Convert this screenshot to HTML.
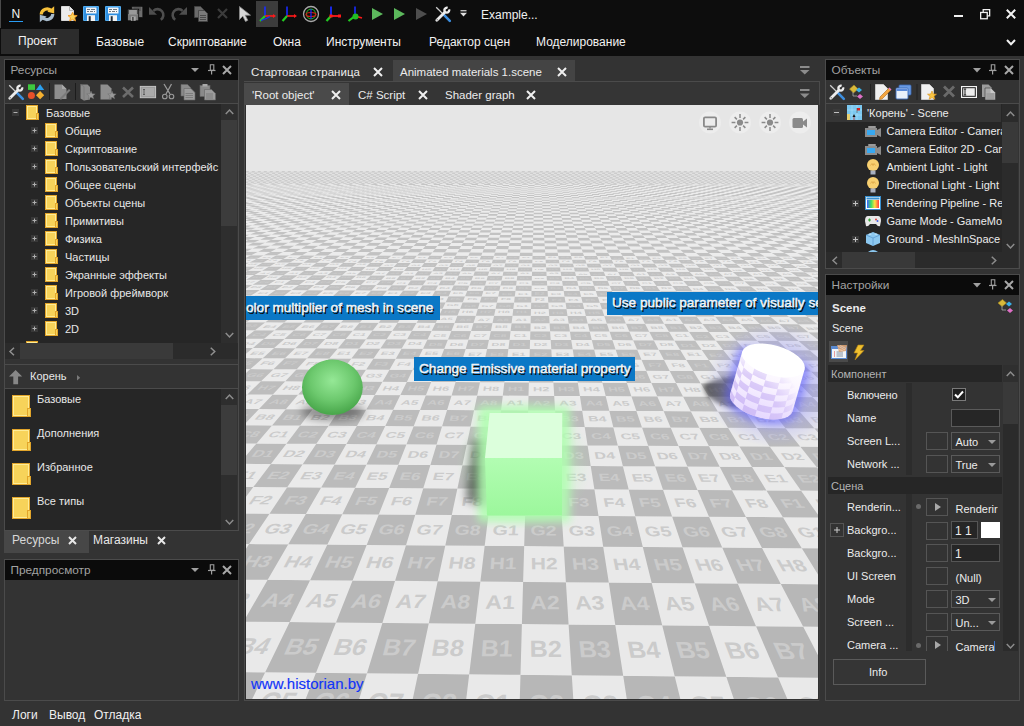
<!DOCTYPE html><html><head><meta charset="utf-8"><style>
*{margin:0;padding:0;box-sizing:border-box}
html,body{width:1024px;height:726px;overflow:hidden;background:#333;font-family:"Liberation Sans",sans-serif;color:#e6e6e6}
.a{position:absolute}
.t{position:absolute;white-space:nowrap;line-height:1}
svg{position:absolute;overflow:visible}
</style></head><body><div class="a" style="left:0px;top:0px;width:1024px;height:56px;background:#0d0d0d;"></div>
<div class="a" style="left:0px;top:0px;width:1px;height:28px;background:#4a4a4a;"></div>
<div class="t" style="left:11.5px;top:7.5px;font-size:12px;color:#f4f4f4;height:12px">N</div>
<div class="a" style="left:9px;top:21px;width:14px;height:1px;background:#2a9df4"></div>
<svg style="left:38px;top:5px" width="18" height="18" viewBox="0 0 18 18"><path d="M3.2 9.5A5.8 5.8 0 0 1 13.6 6.2" stroke="#f6c03a" stroke-width="3.2" fill="none"/><path d="M16.2 1.2L16.2 8.6L9.4 6.8Z" fill="#f6c03a"/><path d="M14.8 9A5.8 5.8 0 0 1 4.4 12.3" stroke="#a9bccc" stroke-width="3.2" fill="none"/><path d="M1.8 17.2L1.8 9.8L8.6 11.6Z" fill="#a9bccc"/></svg>
<svg style="left:61px;top:6px" width="17" height="16" viewBox="0 0 17 16"><path d="M0.5 0.5H8.5L12.5 4.5V14.5H0.5Z" fill="#ececec" stroke="#d8d8d8"/><path d="M8.5 0.5V4.5H12.5" fill="none" stroke="#a8a8a8" stroke-width="0.8"/><path d="M11.6 6.3L12.9 9.3L16.2 9.6L13.7 11.7L14.5 15L11.6 13.3L8.7 15L9.5 11.7L7 9.6L10.3 9.3Z" fill="#fbd35a" stroke="#f09a20" stroke-width="0.9"/></svg>
<svg style="left:83px;top:6px" width="16" height="15" viewBox="0 0 16 15"><rect x="0" y="0" width="16" height="15" rx="1" fill="#52adf0"/><rect x="1" y="1" width="14" height="13" fill="#2f8fe0"/><rect x="3" y="1.5" width="10.5" height="6" rx="0.5" fill="#f4f6f8"/><path d="M4 3.5H7M8 3.5H12M4 5.5H6M7 5.5H10M11 5.5H12" stroke="#606a74" stroke-width="0.9"/><rect x="4" y="9.2" width="8" height="5.8" fill="#f4f4f4"/><rect x="5.7" y="10.2" width="2" height="4.8" fill="#1e2a36"/></svg>
<svg style="left:105px;top:6px" width="16" height="15" viewBox="0 0 16 15"><rect x="0" y="0" width="16" height="15" rx="1" fill="#52adf0"/><rect x="1" y="1" width="14" height="13" fill="#2f8fe0"/><rect x="3" y="1.5" width="10.5" height="6" rx="0.5" fill="#f4f6f8"/><path d="M4 3.5H7M8 3.5H12M4 5.5H6M7 5.5H10M11 5.5H12" stroke="#606a74" stroke-width="0.9"/><rect x="4" y="9.2" width="8" height="5.8" fill="#f4f4f4"/><rect x="5.7" y="10.2" width="2" height="4.8" fill="#1e2a36"/></svg>
<svg style="left:126px;top:6px" width="18" height="16" viewBox="0 0 18 16"><rect x="5.8" y="0.4" width="11" height="11" fill="#6e6e6e" stroke="#0c0c0c" stroke-width="0.6"/><rect x="7.5" y="1" width="7.5" height="4" fill="#5a5a5a"/><rect x="1.4" y="3.2" width="11.3" height="11.6" fill="#7a7a7a" stroke="#0c0c0c" stroke-width="0.8"/><rect x="3" y="4" width="8" height="4.5" fill="#9a9a9a"/><path d="M2.6 4V8M11.4 4V8" stroke="#333" stroke-width="0.8"/><rect x="4.9" y="10.4" width="4.8" height="4.4" fill="#a8a8a8"/><rect x="6.2" y="11" width="1.4" height="3.8" fill="#3a3a3a"/></svg>
<svg style="left:148px;top:5px" width="16" height="18" viewBox="0 0 16 18"><path d="M5.4 5.9A5.8 5.8 0 1 1 12.8 14.75" stroke="#4e4e4e" stroke-width="2.6" fill="none"/><path d="M1 2V9.8H9Z" fill="#4e4e4e"/></svg>
<svg style="left:172px;top:5px" width="16" height="18" viewBox="0 0 16 18"><path d="M10.6 5.9A5.8 5.8 0 1 0 3.2 14.75" stroke="#4e4e4e" stroke-width="2.6" fill="none"/><path d="M15 2V9.8H7Z" fill="#4e4e4e"/></svg>
<svg style="left:194px;top:6px" width="15" height="16" viewBox="0 0 15 16"><path d="M0.5 0.5H6.5L9.5 3.5V11.5H0.5Z" fill="#6a6a6a" stroke="#444" stroke-width="0.8"/><path d="M4.5 4.5H10.5L13.5 7.5V15.5H4.5Z" fill="#7a7a7a" stroke="#444" stroke-width="0.8"/><path d="M6 9.5H12M6 11.5H12M6 13.5H12" stroke="#4a4a4a" stroke-width="1"/></svg>
<svg style="left:217px;top:8px" width="11" height="11"><path d="M1 1L10 10M10 1L1 10" stroke="#3c3c3c" stroke-width="2.2"/></svg>
<svg style="left:239px;top:6px" width="13" height="16" viewBox="0 0 13 16"><path d="M0.5 0.5V13.5L3.8 10.2L6.5 15.5L8.8 14.3L6.2 9.2H11.5Z" fill="#d8d8d8" stroke="#8a8a8a" stroke-width="0.8"/></svg>
<div class="a" style="left:256px;top:1px;width:22px;height:26px;background:#3c3c3c"></div>
<svg style="left:258px;top:5px" width="20" height="18" viewBox="0 0 20 18"><path d="M7 11V1.5" stroke="#1a2cff" stroke-width="1.6"/><path d="M7 11H15" stroke="#ff1a1a" stroke-width="1.6"/><path d="M15 9L18 11L15 13Z" fill="#ff1a1a"/><path d="M7 11L2 16" stroke="#22cc22" stroke-width="2.2"/><path d="M3 15.5Q8 14 12 11.5" stroke="#1a2cff" stroke-width="1.2" fill="none"/></svg>
<svg style="left:281px;top:5px" width="17" height="18" viewBox="0 0 17 18"><path d="M6 11V1.5" stroke="#1a2cff" stroke-width="1.6"/><path d="M6 11H13" stroke="#ff1a1a" stroke-width="1.6"/><path d="M13 9L16 11L13 13Z" fill="#ff1a1a"/><path d="M6 11L1.5 16" stroke="#22cc22" stroke-width="2.2"/></svg>
<svg style="left:302px;top:5px" width="18" height="18" viewBox="0 0 18 18"><circle cx="9" cy="9" r="7.5" stroke="#a8a8a8" stroke-width="1.3" fill="none"/><ellipse cx="9" cy="9" rx="4.5" ry="4.8" stroke="#22aa22" stroke-width="1.2" fill="none"/><ellipse cx="9" cy="9.5" rx="5" ry="2" stroke="#dd1a1a" stroke-width="1.1" fill="none"/><path d="M9 4V14" stroke="#1a2cff" stroke-width="1.2"/></svg>
<svg style="left:325px;top:5px" width="17" height="18" viewBox="0 0 17 18"><path d="M6 11V1.5" stroke="#1a2cff" stroke-width="1.8"/><path d="M6 11H14" stroke="#ff1a1a" stroke-width="1.8"/><rect x="13" y="9.5" width="3" height="3" fill="#ff1a1a"/><path d="M6 11L1.5 16" stroke="#22cc22" stroke-width="2.2"/><rect x="4.5" y="9.5" width="3" height="3" fill="#ff1a1a"/></svg>
<svg style="left:347px;top:5px" width="17" height="18" viewBox="0 0 17 18"><path d="M8 11V1.5" stroke="#1a2cff" stroke-width="1.6"/><path d="M8 11L15 13" stroke="#ff1a1a" stroke-width="1.6"/><path d="M8 11L1.5 16" stroke="#22cc22" stroke-width="2.2"/><circle cx="8.5" cy="11.5" r="3" fill="#22bb22"/></svg>
<svg style="left:372px;top:8px" width="11" height="12"><path d="M0 0L11 6L0 12Z" fill="#5cb85c"/></svg>
<svg style="left:394px;top:8px" width="11" height="12"><path d="M0 0L11 6L0 12Z" fill="#5cb85c"/></svg>
<svg style="left:416px;top:8px" width="11" height="12"><path d="M0 0L11 6L0 12Z" fill="#4e4e4e"/></svg>
<svg style="left:435px;top:6px" width="16" height="16" viewBox="0 0 16 16"><path d="M1.2 1.2L8.6 8.6" stroke="#cfcfcf" stroke-width="1.3"/><path d="M8.2 8.2L14.8 14.8" stroke="#3d8fe0" stroke-width="2.6" stroke-linecap="round"/><path d="M1.8 14.2L9.8 6.2" stroke="#ececec" stroke-width="2.8" stroke-linecap="round"/><path d="M14.06 3.38A2.4 2.4 0 1 1 12.62 1.94" stroke="#ececec" stroke-width="2.4" fill="none"/><circle cx="2.2" cy="13.8" r="0.7" fill="#777"/></svg>
<svg style="left:460px;top:10px" width="7" height="7"><path d="M0.5 0.75H6.5" stroke="#e0e0e0" stroke-width="1.2"/><path d="M0 2.8H7L3.5 6.6Z" fill="#e0e0e0"/></svg>

<div class="a" style="left:1px;top:29px;width:78px;height:25px;background:#2c2c2c;"></div>
<div class="t" style="left:18px;top:34.50px;font-size:12px;height:12px;color:#f2f2f2;">Проект</div>
<div class="t" style="left:96px;top:36.00px;font-size:12px;height:12px;color:#f2f2f2;">Базовые</div>
<div class="t" style="left:168px;top:36.00px;font-size:12px;height:12px;color:#f2f2f2;">Скриптование</div>
<div class="t" style="left:273px;top:36.00px;font-size:12px;height:12px;color:#f2f2f2;">Окна</div>
<div class="t" style="left:326px;top:36.00px;font-size:12px;height:12px;color:#f2f2f2;">Инструменты</div>
<div class="t" style="left:429px;top:36.00px;font-size:12px;height:12px;color:#f2f2f2;">Редактор сцен</div>
<div class="t" style="left:536px;top:36.00px;font-size:12px;height:12px;color:#f2f2f2;">Моделирование</div>
<div class="t" style="left:481px;top:8.50px;font-size:12px;height:12px;color:#f0f0f0;">Example...</div>
<div class="a" style="left:954px;top:14.6px;width:9.2px;height:2.6px;background:#f0f0f0;"></div>
<svg style="left:979px;top:8px" width="12" height="12" viewBox="0 0 12 12"><rect x="1.65" y="4.45" width="6.6" height="6.3" stroke="#f0f0f0" fill="none" stroke-width="1.3"/><path d="M4.2 4.2V1.55H10.65V7.9H8.4" stroke="#f0f0f0" fill="none" stroke-width="1.3"/></svg>
<svg style="left:1006px;top:9px" width="10" height="10"><path d="M0.8 0.8L9.2 9.2M9.2 0.8L0.8 9.2" stroke="#f2f2f2" stroke-width="2"/></svg>
<svg style="left:1006px;top:38.5px" width="10" height="7"><path d="M1 1L5 5.2L9 1" stroke="#f0f0f0" stroke-width="2" fill="none"/></svg>
<div class="a" style="left:4px;top:59px;width:235px;height:472px;background:#4b4b4b;"></div>
<div class="a" style="left:5px;top:60px;width:233px;height:470px;background:#333333;"></div>
<div class="a" style="left:5px;top:60px;width:233px;height:20px;background:#0b0b0b;"></div>
<div class="t" style="left:10.5px;top:65.10px;font-size:11.8px;height:11.8px;color:#a3a3a3;">Ресурсы</div>
<svg style="left:191px;top:67px" width="8" height="6"><path d="M0 1H8L4 5Z" fill="#a0a0a0"/></svg>
<svg style="left:208px;top:64px" width="8" height="11"><path d="M2.3 0.8H5.8V6.3H2.3Z" stroke="#a0a0a0" stroke-width="1.1" fill="none"/><path d="M0 6.5H7.5" stroke="#a0a0a0" stroke-width="1.2"/><path d="M3.6 6.5V10.5" stroke="#a0a0a0" stroke-width="1.2"/></svg>
<svg style="left:222px;top:65px" width="10" height="10"><path d="M1 1L9 9M9 1L1 9" stroke="#a8a8a8" stroke-width="2"/></svg>
<svg style="left:5px;top:80px" width="233" height="23" viewBox="5 80 233 23">
<rect x="28" y="84.3" width="7" height="5.6" fill="#3ec83e"/><path d="M36 90H44.2L40.1 84.3Z" fill="#2aa0f0"/><circle cx="31.4" cy="95.6" r="3.5" fill="#e8502a"/><path d="M40.1 91L44.2 95.2L40.1 99.3L36 95.2Z" fill="#f5b030"/>
<rect x="49" y="83" width="1" height="17" fill="#1c1c1c"/>
<path d="M54.5 84.5H62L66.5 89V99H54.5Z" fill="#8e8e8e"/><path d="M62 84.5V89H66.5" fill="#a8a8a8"/><path d="M60 98L69 89L70.5 90.5L61.5 99.5H60Z" fill="#7a7a7a"/>
<rect x="75" y="83" width="1" height="17" fill="#1c1c1c"/>
<path d="M80.5 84.5H87.5L90 87V99.5L84 100.5L80.5 98.5Z" fill="#8a8a8a"/><path d="M80.5 84.5L84 86.5V100.5" stroke="#777" stroke-width="0.8" fill="none"/><path d="M91 91L92.2 93.8L95.2 94L92.9 95.9L93.7 98.8L91 97.2L88.3 98.8L89.1 95.9L86.8 94L89.8 93.8Z" fill="#9a9a9a" stroke="#6a6a6a" stroke-width="0.5"/>
<path d="M100.5 84.5H107.5L111.5 88.5V99.5H100.5Z" fill="#8e8e8e"/><path d="M112 91L113.2 93.8L116.2 94L113.9 95.9L114.7 98.8L112 97.2L109.3 98.8L110.1 95.9L107.8 94L110.8 93.8Z" fill="#9a9a9a" stroke="#6a6a6a" stroke-width="0.5"/>
<path d="M123 87.5L133 97M133 87.5L123 97" stroke="#6c6c6c" stroke-width="2.6"/>
<rect x="140.3" y="86.4" width="15.3" height="11.3" fill="#9c9c9c" stroke="#c4c4c4" stroke-width="1"/><rect x="142" y="88" width="12" height="8" fill="#aaa"/><path d="M143 89.5H145M144 89.5V94.5M143 94.5H145" stroke="#444" stroke-width="0.7"/>
<path d="M164 84L170 94M171.5 84L166 94" stroke="#9a9a9a" stroke-width="1.3"/><circle cx="164.8" cy="96.5" r="2.3" fill="none" stroke="#9a9a9a" stroke-width="1.1"/><circle cx="171.5" cy="96.5" r="2.3" fill="none" stroke="#9a9a9a" stroke-width="1.1"/>
<path d="M181 84.5H187.5L190.5 87.5V96H181Z" fill="#8a8a8a" stroke="#666" stroke-width="0.6"/><path d="M184 88.5H191L195 92.5V100H184Z" fill="#9c9c9c" stroke="#666" stroke-width="0.6"/><path d="M185.5 93.5H193M185.5 95.5H193M185.5 97.5H193" stroke="#707070" stroke-width="0.7"/>
<rect x="200" y="85.5" width="10" height="11" fill="#8a8a8a" stroke="#666" stroke-width="0.6"/><rect x="202.5" y="84" width="5" height="2.5" fill="#aaa"/><path d="M204.5 89.5H211.5L215.5 93.5V100H204.5Z" fill="#9c9c9c" stroke="#666" stroke-width="0.6"/><path d="M206 94H213M206 96H213M206 98H213" stroke="#707070" stroke-width="0.7"/>
</svg>
<svg style="left:8px;top:84px" width="16" height="16" viewBox="0 0 16 16"><path d="M1.2 1.2L8.6 8.6" stroke="#cfcfcf" stroke-width="1.3"/><path d="M8.2 8.2L14.8 14.8" stroke="#3d8fe0" stroke-width="2.6" stroke-linecap="round"/><path d="M1.8 14.2L9.8 6.2" stroke="#ececec" stroke-width="2.8" stroke-linecap="round"/><path d="M14.06 3.38A2.4 2.4 0 1 1 12.62 1.94" stroke="#ececec" stroke-width="2.4" fill="none"/><circle cx="2.2" cy="13.8" r="0.7" fill="#777"/></svg>

<div class="a" style="left:5px;top:103px;width:233px;height:1px;background:#4b4b4b;"></div>
<div class="a" style="left:5px;top:104px;width:216px;height:239px;background:#262626;"></div>
<div class="a" style="left:221px;top:104px;width:16px;height:239px;background:#2e2e2e;"></div>
<div class="a" style="left:221px;top:120px;width:16px;height:106px;background:#3c3c3c;"></div>
<svg style="left:225px;top:109px" width="9" height="6"><path d="M0.75 5L4.5 1L8.25 5" stroke="#8c8c8c" stroke-width="1.5" fill="none"/></svg>
<svg style="left:225px;top:332px" width="9" height="6"><path d="M0.75 1L4.5 5L8.25 1" stroke="#8c8c8c" stroke-width="1.5" fill="none"/></svg>
<svg style="left:26px;top:105px" width="13.0" height="15.0" viewBox="0 0 13 15"><rect x="0.5" y="0.5" width="11" height="14" fill="#f7d35a" stroke="#e2a52a"/><rect x="1.5" y="1.5" width="9" height="12" fill="none" stroke="#fff2a8" stroke-width="0.8"/><rect x="10.5" y="8.5" width="2" height="6" fill="#f7d35a" stroke="#e2a52a"/></svg>
<svg style="left:12px;top:109px" width="7" height="7"><rect width="7" height="7" fill="#383838"/><rect x="1.5" y="3" width="4" height="1" fill="#b0b0b0"/></svg>
<div class="t" style="left:46px;top:108.00px;font-size:11px;height:11px;color:#e8e8e8;">Базовые</div>
<svg style="left:31px;top:127.0px" width="7" height="7"><rect width="7" height="7" fill="#383838"/><rect x="1.5" y="3" width="4" height="1" fill="#b0b0b0"/><rect x="3" y="1.5" width="1" height="4" fill="#b0b0b0"/></svg>
<svg style="left:45px;top:123.0px" width="13.0" height="15.0" viewBox="0 0 13 15"><rect x="0.5" y="0.5" width="11" height="14" fill="#f7d35a" stroke="#e2a52a"/><rect x="1.5" y="1.5" width="9" height="12" fill="none" stroke="#fff2a8" stroke-width="0.8"/><rect x="10.5" y="8.5" width="2" height="6" fill="#f7d35a" stroke="#e2a52a"/></svg>
<div class="t" style="left:65px;top:126.00px;font-size:11px;height:11px;color:#e8e8e8;">Общие</div>
<svg style="left:31px;top:145.0px" width="7" height="7"><rect width="7" height="7" fill="#383838"/><rect x="1.5" y="3" width="4" height="1" fill="#b0b0b0"/><rect x="3" y="1.5" width="1" height="4" fill="#b0b0b0"/></svg>
<svg style="left:45px;top:141.0px" width="13.0" height="15.0" viewBox="0 0 13 15"><rect x="0.5" y="0.5" width="11" height="14" fill="#f7d35a" stroke="#e2a52a"/><rect x="1.5" y="1.5" width="9" height="12" fill="none" stroke="#fff2a8" stroke-width="0.8"/><rect x="10.5" y="8.5" width="2" height="6" fill="#f7d35a" stroke="#e2a52a"/></svg>
<div class="t" style="left:65px;top:144.00px;font-size:11px;height:11px;color:#e8e8e8;">Скриптование</div>
<svg style="left:31px;top:163.0px" width="7" height="7"><rect width="7" height="7" fill="#383838"/><rect x="1.5" y="3" width="4" height="1" fill="#b0b0b0"/><rect x="3" y="1.5" width="1" height="4" fill="#b0b0b0"/></svg>
<svg style="left:45px;top:159.0px" width="13.0" height="15.0" viewBox="0 0 13 15"><rect x="0.5" y="0.5" width="11" height="14" fill="#f7d35a" stroke="#e2a52a"/><rect x="1.5" y="1.5" width="9" height="12" fill="none" stroke="#fff2a8" stroke-width="0.8"/><rect x="10.5" y="8.5" width="2" height="6" fill="#f7d35a" stroke="#e2a52a"/></svg>
<div class="t" style="left:65px;top:162.00px;font-size:11px;height:11px;color:#e8e8e8;">Пользовательский интерфейс</div>
<svg style="left:31px;top:181.0px" width="7" height="7"><rect width="7" height="7" fill="#383838"/><rect x="1.5" y="3" width="4" height="1" fill="#b0b0b0"/><rect x="3" y="1.5" width="1" height="4" fill="#b0b0b0"/></svg>
<svg style="left:45px;top:177.0px" width="13.0" height="15.0" viewBox="0 0 13 15"><rect x="0.5" y="0.5" width="11" height="14" fill="#f7d35a" stroke="#e2a52a"/><rect x="1.5" y="1.5" width="9" height="12" fill="none" stroke="#fff2a8" stroke-width="0.8"/><rect x="10.5" y="8.5" width="2" height="6" fill="#f7d35a" stroke="#e2a52a"/></svg>
<div class="t" style="left:65px;top:180.00px;font-size:11px;height:11px;color:#e8e8e8;">Общее сцены</div>
<svg style="left:31px;top:199.0px" width="7" height="7"><rect width="7" height="7" fill="#383838"/><rect x="1.5" y="3" width="4" height="1" fill="#b0b0b0"/><rect x="3" y="1.5" width="1" height="4" fill="#b0b0b0"/></svg>
<svg style="left:45px;top:195.0px" width="13.0" height="15.0" viewBox="0 0 13 15"><rect x="0.5" y="0.5" width="11" height="14" fill="#f7d35a" stroke="#e2a52a"/><rect x="1.5" y="1.5" width="9" height="12" fill="none" stroke="#fff2a8" stroke-width="0.8"/><rect x="10.5" y="8.5" width="2" height="6" fill="#f7d35a" stroke="#e2a52a"/></svg>
<div class="t" style="left:65px;top:198.00px;font-size:11px;height:11px;color:#e8e8e8;">Объекты сцены</div>
<svg style="left:31px;top:217.0px" width="7" height="7"><rect width="7" height="7" fill="#383838"/><rect x="1.5" y="3" width="4" height="1" fill="#b0b0b0"/><rect x="3" y="1.5" width="1" height="4" fill="#b0b0b0"/></svg>
<svg style="left:45px;top:213.0px" width="13.0" height="15.0" viewBox="0 0 13 15"><rect x="0.5" y="0.5" width="11" height="14" fill="#f7d35a" stroke="#e2a52a"/><rect x="1.5" y="1.5" width="9" height="12" fill="none" stroke="#fff2a8" stroke-width="0.8"/><rect x="10.5" y="8.5" width="2" height="6" fill="#f7d35a" stroke="#e2a52a"/></svg>
<div class="t" style="left:65px;top:216.00px;font-size:11px;height:11px;color:#e8e8e8;">Примитивы</div>
<svg style="left:31px;top:235.0px" width="7" height="7"><rect width="7" height="7" fill="#383838"/><rect x="1.5" y="3" width="4" height="1" fill="#b0b0b0"/><rect x="3" y="1.5" width="1" height="4" fill="#b0b0b0"/></svg>
<svg style="left:45px;top:231.0px" width="13.0" height="15.0" viewBox="0 0 13 15"><rect x="0.5" y="0.5" width="11" height="14" fill="#f7d35a" stroke="#e2a52a"/><rect x="1.5" y="1.5" width="9" height="12" fill="none" stroke="#fff2a8" stroke-width="0.8"/><rect x="10.5" y="8.5" width="2" height="6" fill="#f7d35a" stroke="#e2a52a"/></svg>
<div class="t" style="left:65px;top:234.00px;font-size:11px;height:11px;color:#e8e8e8;">Физика</div>
<svg style="left:31px;top:253.0px" width="7" height="7"><rect width="7" height="7" fill="#383838"/><rect x="1.5" y="3" width="4" height="1" fill="#b0b0b0"/><rect x="3" y="1.5" width="1" height="4" fill="#b0b0b0"/></svg>
<svg style="left:45px;top:249.0px" width="13.0" height="15.0" viewBox="0 0 13 15"><rect x="0.5" y="0.5" width="11" height="14" fill="#f7d35a" stroke="#e2a52a"/><rect x="1.5" y="1.5" width="9" height="12" fill="none" stroke="#fff2a8" stroke-width="0.8"/><rect x="10.5" y="8.5" width="2" height="6" fill="#f7d35a" stroke="#e2a52a"/></svg>
<div class="t" style="left:65px;top:252.00px;font-size:11px;height:11px;color:#e8e8e8;">Частицы</div>
<svg style="left:31px;top:271.0px" width="7" height="7"><rect width="7" height="7" fill="#383838"/><rect x="1.5" y="3" width="4" height="1" fill="#b0b0b0"/><rect x="3" y="1.5" width="1" height="4" fill="#b0b0b0"/></svg>
<svg style="left:45px;top:267.0px" width="13.0" height="15.0" viewBox="0 0 13 15"><rect x="0.5" y="0.5" width="11" height="14" fill="#f7d35a" stroke="#e2a52a"/><rect x="1.5" y="1.5" width="9" height="12" fill="none" stroke="#fff2a8" stroke-width="0.8"/><rect x="10.5" y="8.5" width="2" height="6" fill="#f7d35a" stroke="#e2a52a"/></svg>
<div class="t" style="left:65px;top:270.00px;font-size:11px;height:11px;color:#e8e8e8;">Экранные эффекты</div>
<svg style="left:31px;top:289.0px" width="7" height="7"><rect width="7" height="7" fill="#383838"/><rect x="1.5" y="3" width="4" height="1" fill="#b0b0b0"/><rect x="3" y="1.5" width="1" height="4" fill="#b0b0b0"/></svg>
<svg style="left:45px;top:285.0px" width="13.0" height="15.0" viewBox="0 0 13 15"><rect x="0.5" y="0.5" width="11" height="14" fill="#f7d35a" stroke="#e2a52a"/><rect x="1.5" y="1.5" width="9" height="12" fill="none" stroke="#fff2a8" stroke-width="0.8"/><rect x="10.5" y="8.5" width="2" height="6" fill="#f7d35a" stroke="#e2a52a"/></svg>
<div class="t" style="left:65px;top:288.00px;font-size:11px;height:11px;color:#e8e8e8;">Игровой фреймворк</div>
<svg style="left:31px;top:307.0px" width="7" height="7"><rect width="7" height="7" fill="#383838"/><rect x="1.5" y="3" width="4" height="1" fill="#b0b0b0"/><rect x="3" y="1.5" width="1" height="4" fill="#b0b0b0"/></svg>
<svg style="left:45px;top:303.0px" width="13.0" height="15.0" viewBox="0 0 13 15"><rect x="0.5" y="0.5" width="11" height="14" fill="#f7d35a" stroke="#e2a52a"/><rect x="1.5" y="1.5" width="9" height="12" fill="none" stroke="#fff2a8" stroke-width="0.8"/><rect x="10.5" y="8.5" width="2" height="6" fill="#f7d35a" stroke="#e2a52a"/></svg>
<div class="t" style="left:65px;top:306.00px;font-size:11px;height:11px;color:#e8e8e8;">3D</div>
<svg style="left:31px;top:325.0px" width="7" height="7"><rect width="7" height="7" fill="#383838"/><rect x="1.5" y="3" width="4" height="1" fill="#b0b0b0"/><rect x="3" y="1.5" width="1" height="4" fill="#b0b0b0"/></svg>
<svg style="left:45px;top:321.0px" width="13.0" height="15.0" viewBox="0 0 13 15"><rect x="0.5" y="0.5" width="11" height="14" fill="#f7d35a" stroke="#e2a52a"/><rect x="1.5" y="1.5" width="9" height="12" fill="none" stroke="#fff2a8" stroke-width="0.8"/><rect x="10.5" y="8.5" width="2" height="6" fill="#f7d35a" stroke="#e2a52a"/></svg>
<div class="t" style="left:65px;top:324.00px;font-size:11px;height:11px;color:#e8e8e8;">2D</div>
<svg style="left:26px;top:341px" width="13.0" height="15.0" viewBox="0 0 13 15"><rect x="0.5" y="0.5" width="11" height="14" fill="#f7d35a" stroke="#e2a52a"/><rect x="1.5" y="1.5" width="9" height="12" fill="none" stroke="#fff2a8" stroke-width="0.8"/><rect x="10.5" y="8.5" width="2" height="6" fill="#f7d35a" stroke="#e2a52a"/></svg>
<div class="a" style="left:5px;top:343px;width:233px;height:16px;background:#2b2b2b;"></div>
<div class="a" style="left:20px;top:343px;width:153px;height:16px;background:#3a3a3a;"></div>
<svg style="left:9px;top:347px" width="6" height="9"><path d="M5 0.75L1 4.5L5 8.25" stroke="#909090" stroke-width="1.5" fill="none"/></svg>
<svg style="left:210px;top:347px" width="6" height="9"><path d="M0.75 0.75L4.75 4.5L0.75 8.25" stroke="#909090" stroke-width="1.5" fill="none"/></svg>
<div class="a" style="left:5px;top:364px;width:233px;height:1px;background:#4b4b4b;"></div>
<svg style="left:8.8px;top:369.6px" width="14" height="15"><path d="M6.6 0L13.2 6.6H9.1V14.2H4.3V6.6H0Z" fill="#878787"/></svg>
<div class="t" style="left:30px;top:370.50px;font-size:11px;height:11px;color:#e8e8e8;">Корень</div>
<svg style="left:77px;top:374.8px" width="4" height="6"><path d="M0 0L3.2 2.8L0 5.6Z" fill="#7a7a7a"/></svg>
<div class="a" style="left:5px;top:388px;width:233px;height:1px;background:#4b4b4b;"></div>
<div class="a" style="left:5px;top:389px;width:216px;height:141px;background:#262626;"></div>
<div class="a" style="left:221px;top:389px;width:16px;height:141px;background:#2e2e2e;"></div>
<div class="a" style="left:221px;top:405px;width:16px;height:70px;background:#3c3c3c;"></div>
<svg style="left:225px;top:394px" width="9" height="6"><path d="M0.75 5L4.5 1L8.25 5" stroke="#8c8c8c" stroke-width="1.5" fill="none"/></svg>
<svg style="left:225px;top:519px" width="9" height="6"><path d="M0.75 1L4.5 5L8.25 1" stroke="#8c8c8c" stroke-width="1.5" fill="none"/></svg>
<svg style="left:12px;top:395px" width="19" height="22" viewBox="0 0 19 22"><rect x="0.5" y="0.5" width="17" height="21" fill="#f7d35a" stroke="#e2a52a"/><rect x="1.5" y="1.5" width="15" height="19" fill="none" stroke="#fff2a8" stroke-width="0.8"/><rect x="15.5" y="13.5" width="3" height="8" fill="#f7d35a" stroke="#e2a52a"/></svg>
<div class="t" style="left:37px;top:393.50px;font-size:11px;height:11px;color:#e8e8e8;">Базовые</div>
<svg style="left:12px;top:429px" width="19" height="22" viewBox="0 0 19 22"><rect x="0.5" y="0.5" width="17" height="21" fill="#f7d35a" stroke="#e2a52a"/><rect x="1.5" y="1.5" width="15" height="19" fill="none" stroke="#fff2a8" stroke-width="0.8"/><rect x="15.5" y="13.5" width="3" height="8" fill="#f7d35a" stroke="#e2a52a"/></svg>
<div class="t" style="left:37px;top:427.50px;font-size:11px;height:11px;color:#e8e8e8;">Дополнения</div>
<svg style="left:12px;top:463px" width="19" height="22" viewBox="0 0 19 22"><rect x="0.5" y="0.5" width="17" height="21" fill="#f7d35a" stroke="#e2a52a"/><rect x="1.5" y="1.5" width="15" height="19" fill="none" stroke="#fff2a8" stroke-width="0.8"/><rect x="15.5" y="13.5" width="3" height="8" fill="#f7d35a" stroke="#e2a52a"/></svg>
<div class="t" style="left:37px;top:461.50px;font-size:11px;height:11px;color:#e8e8e8;">Избранное</div>
<svg style="left:12px;top:497px" width="19" height="22" viewBox="0 0 19 22"><rect x="0.5" y="0.5" width="17" height="21" fill="#f7d35a" stroke="#e2a52a"/><rect x="1.5" y="1.5" width="15" height="19" fill="none" stroke="#fff2a8" stroke-width="0.8"/><rect x="15.5" y="13.5" width="3" height="8" fill="#f7d35a" stroke="#e2a52a"/></svg>
<div class="t" style="left:37px;top:495.50px;font-size:11px;height:11px;color:#e8e8e8;">Все типы</div>
<div class="a" style="left:4px;top:531px;width:85px;height:22px;background:#474747;"></div>
<div class="t" style="left:12px;top:534.00px;font-size:12px;height:12px;color:#d8d8d8;">Ресурсы</div>
<svg style="left:68px;top:536px" width="9" height="9"><path d="M1 1L8 8M8 1L1 8" stroke="#e8e8e8" stroke-width="2"/></svg>
<div class="t" style="left:93px;top:534.00px;font-size:12px;height:12px;color:#e8e8e8;">Магазины</div>
<svg style="left:157px;top:536px" width="9" height="9"><path d="M1 1L8 8M8 1L1 8" stroke="#e8e8e8" stroke-width="2"/></svg>
<div class="a" style="left:4px;top:559px;width:235px;height:142px;background:#4b4b4b;"></div>
<div class="a" style="left:5px;top:560px;width:233px;height:140px;background:#333333;"></div>
<div class="a" style="left:5px;top:560px;width:233px;height:20px;background:#0b0b0b;"></div>
<div class="t" style="left:10.5px;top:565.10px;font-size:11.8px;height:11.8px;color:#a3a3a3;">Предпросмотр</div>
<svg style="left:191px;top:567px" width="8" height="6"><path d="M0 1H8L4 5Z" fill="#a0a0a0"/></svg>
<svg style="left:208px;top:564px" width="8" height="11"><path d="M2.3 0.8H5.8V6.3H2.3Z" stroke="#a0a0a0" stroke-width="1.1" fill="none"/><path d="M0 6.5H7.5" stroke="#a0a0a0" stroke-width="1.2"/><path d="M3.6 6.5V10.5" stroke="#a0a0a0" stroke-width="1.2"/></svg>
<svg style="left:222px;top:565px" width="10" height="10"><path d="M1 1L9 9M9 1L1 9" stroke="#a8a8a8" stroke-width="2"/></svg>
<div class="t" style="left:12px;top:709.00px;font-size:12px;height:12px;color:#f0f0f0;">Логи</div>
<div class="t" style="left:49px;top:709.00px;font-size:12px;height:12px;color:#f0f0f0;">Вывод</div>
<div class="t" style="left:94px;top:709.00px;font-size:12px;height:12px;color:#f0f0f0;">Отладка</div>
<div class="a" style="left:393px;top:60px;width:182px;height:21px;background:#444444;"></div>
<div class="t" style="left:251px;top:66.55px;font-size:11.5px;height:11.5px;color:#ececec;">Стартовая страница</div>
<svg style="left:373px;top:67px" width="10" height="10"><path d="M1 1L9 9M9 1L1 9" stroke="#f0f0f0" stroke-width="2"/></svg>
<div class="t" style="left:400px;top:66.55px;font-size:11.5px;height:11.5px;color:#ececec;">Animated materials 1.scene</div>
<svg style="left:557px;top:67px" width="10" height="10"><path d="M1 1L9 9M9 1L1 9" stroke="#f0f0f0" stroke-width="2"/></svg>
<svg style="left:800px;top:66px" width="10" height="9"><path d="M0 1H9.5" stroke="#8c8c8c" stroke-width="2"/><path d="M0 4H9.5L4.75 8.6Z" fill="#8c8c8c"/></svg>
<div class="a" style="left:244px;top:81px;width:576px;height:1px;background:#4b4b4b;"></div>
<div class="a" style="left:819px;top:81px;width:1px;height:24px;background:#4b4b4b;"></div>
<div class="a" style="left:244px;top:82px;width:575px;height:23px;background:#353535;"></div>
<div class="a" style="left:244px;top:83px;width:105px;height:22px;background:#4a4a4a;"></div>
<div class="t" style="left:252px;top:89.65px;font-size:11.5px;height:11.5px;color:#ececec;">'Root object'</div>
<svg style="left:331px;top:90px" width="10" height="10"><path d="M1 1L9 9M9 1L1 9" stroke="#f0f0f0" stroke-width="2"/></svg>
<div class="t" style="left:358px;top:89.65px;font-size:11.5px;height:11.5px;color:#ececec;">C# Script</div>
<svg style="left:418px;top:90px" width="10" height="10"><path d="M1 1L9 9M9 1L1 9" stroke="#f0f0f0" stroke-width="2"/></svg>
<div class="t" style="left:445px;top:89.65px;font-size:11.5px;height:11.5px;color:#ececec;">Shader graph</div>
<svg style="left:526px;top:90px" width="10" height="10"><path d="M1 1L9 9M9 1L1 9" stroke="#f0f0f0" stroke-width="2"/></svg>
<svg style="left:800px;top:89px" width="10" height="9"><path d="M0 1H9.5" stroke="#8c8c8c" stroke-width="2"/><path d="M0 4.4H9.5L4.75 9Z" fill="#8c8c8c"/></svg>
<div class="a" style="left:244px;top:105px;width:2px;height:596px;background:#2d2d2d;"></div>
<div class="a" style="left:244px;top:105px;width:1px;height:596px;background:#4b4b4b;"></div>
<div class="a" style="left:244px;top:700px;width:576px;height:1px;background:#4b4b4b;"></div>
<div class="a" style="left:819px;top:105px;width:1px;height:596px;background:#3a3a3a;"></div>
<svg style="left:246px;top:105px" width="572" height="594" viewBox="0 0 572 594">
<defs><clipPath id="vc"><rect width="572" height="594"/></clipPath></defs><g clip-path="url(#vc)">
<rect width="572" height="594" fill="#e6e6e6"/>
<defs><linearGradient id="farg" x1="0" y1="0" x2="0" y2="1"><stop offset="0" stop-color="#dcdcdc"/><stop offset="1" stop-color="#d6d6d6"/></linearGradient></defs>
<polygon points="-945.2,77.7 1564.0,80.7 1119.8,56.3 -526.2,55.1" fill="url(#farg)"/>
<defs><pattern id="farp" patternUnits="userSpaceOnUse" width="6" height="3" patternTransform="skewX(-20)"><rect width="6" height="3" fill="#e4e4e4"/><rect width="3" height="1.5" fill="#c9c9c9"/><rect x="3" y="1.5" width="3" height="1.5" fill="#c9c9c9"/></pattern></defs>
<polygon points="-945.2,77.7 1564.0,80.7 1119.8,56.3 -526.2,55.1" fill="url(#farp)" opacity="0.8"/>
<polygon points="-168.1,802.4 709.9,814.4 657.4,713.7 -111.4,704.4" fill="#e9e9e9"/>
<path d="M-168.1 802.4 L-95.9 803.4 L-48.1 705.2 L-111.4 704.4ZM-23.6 804.4 L48.9 805.4 L78.9 706.7 L15.4 706.0ZM121.6 806.4 L194.5 807.4 L206.5 708.3 L142.6 707.5ZM267.6 808.4 L340.9 809.4 L334.6 709.8 L270.5 709.0ZM414.3 810.4 L487.9 811.4 L463.3 711.3 L398.9 710.6ZM561.7 812.4 L635.8 813.4 L592.5 712.9 L527.8 712.1Z" fill="#b7b7b7"/>
<polygon points="-174.5,703.7 722.3,714.5 674.2,636.0 -123.3,627.5" fill="#e9e9e9"/>
<path d="M-174.5 703.7 L-111.4 704.4 L-67.1 628.1 L-123.3 627.5ZM-48.1 705.2 L15.4 706.0 L45.7 629.3 L-10.7 628.7ZM78.9 706.7 L142.6 707.5 L159.0 630.5 L102.3 629.9ZM206.5 708.3 L270.5 709.0 L272.7 631.7 L215.8 631.1ZM334.6 709.8 L398.9 710.6 L386.8 632.9 L329.7 632.3ZM463.3 711.3 L527.8 712.1 L501.4 634.1 L444.1 633.5ZM592.5 712.9 L657.4 713.7 L616.5 635.4 L558.9 634.8Z" fill="#b7b7b7"/>
<polygon points="-123.3,627.5 732.0,636.6 687.7,573.8 -82.3,566.4" fill="#e9e9e9"/>
<path d="M-67.1 628.1 L-10.7 628.7 L19.2 567.3 L-31.6 566.8ZM45.7 629.3 L102.3 629.9 L121.0 568.3 L70.0 567.8ZM159.0 630.5 L215.8 631.1 L223.2 569.3 L172.1 568.8ZM272.7 631.7 L329.7 632.3 L325.8 570.3 L274.5 569.8ZM386.8 632.9 L444.1 633.5 L428.7 571.3 L377.2 570.8ZM501.4 634.1 L558.9 634.8 L532.0 572.3 L480.3 571.8ZM616.5 635.4 L674.2 636.0 L635.7 573.3 L583.8 572.8Z" fill="#b7b7b7"/>
<polygon points="-132.9,565.9 739.7,574.3 698.7,522.8 -94.8,515.9" fill="#e9e9e9"/>
<path d="M-82.3 566.4 L-31.6 566.8 L-2.6 516.7 L-48.7 516.3ZM19.2 567.3 L70.0 567.8 L90.0 517.5 L43.7 517.1ZM121.0 568.3 L172.1 568.8 L182.8 518.3 L136.4 517.9ZM223.2 569.3 L274.5 569.8 L275.9 519.1 L229.3 518.7ZM325.8 570.3 L377.2 570.8 L369.3 519.9 L322.6 519.5ZM428.7 571.3 L480.3 571.8 L463.1 520.8 L416.2 520.3ZM532.0 572.3 L583.8 572.8 L557.1 521.6 L510.0 521.2ZM635.7 573.3 L687.7 573.8 L651.4 522.4 L604.2 522.0Z" fill="#b7b7b7"/>
<polygon points="-140.8,515.5 698.7,522.8 664.6,480.0 -105.2,473.8" fill="#e9e9e9"/>
<path d="M-94.8 515.9 L-48.7 516.3 L-20.6 474.5 L-62.9 474.1ZM-2.6 516.7 L43.7 517.1 L64.1 475.2 L21.7 474.8ZM90.0 517.5 L136.4 517.9 L149.1 475.8 L106.6 475.5ZM182.8 518.3 L229.3 518.7 L234.4 476.5 L191.7 476.2ZM275.9 519.1 L322.6 519.5 L319.9 477.2 L277.1 476.9ZM369.3 519.9 L416.2 520.3 L405.7 477.9 L362.8 477.5ZM463.1 520.8 L510.0 521.2 L491.7 478.6 L448.7 478.2ZM557.1 521.6 L604.2 522.0 L578.0 479.3 L534.8 478.9ZM651.4 522.4 L698.7 522.8 L664.6 480.0 L621.3 479.6Z" fill="#b7b7b7"/>
<polygon points="-147.3,473.5 707.9,480.3 675.7,444.0 -114.0,438.2" fill="#e9e9e9"/>
<path d="M-105.2 473.8 L-62.9 474.1 L-36.0 438.8 L-75.0 438.5ZM-20.6 474.5 L21.7 474.8 L42.3 439.3 L3.1 439.1ZM64.1 475.2 L106.6 475.5 L120.7 439.9 L81.4 439.6ZM149.1 475.8 L191.7 476.2 L199.3 440.5 L160.0 440.2ZM234.4 476.5 L277.1 476.9 L278.2 441.1 L238.7 440.8ZM319.9 477.2 L362.8 477.5 L357.2 441.7 L317.7 441.4ZM405.7 477.9 L448.7 478.2 L436.5 442.3 L396.8 442.0ZM491.7 478.6 L534.8 478.9 L516.0 442.9 L476.2 442.6ZM578.0 479.3 L621.3 479.6 L595.7 443.4 L555.8 443.2ZM664.6 480.0 L707.9 480.3 L675.7 444.0 L635.7 443.7Z" fill="#b8b8b8"/>
<polygon points="-114.0,438.2 715.7,444.3 685.2,413.2 -85.3,407.9" fill="#eaeaea"/>
<path d="M-114.0 438.2 L-75.0 438.5 L-49.1 408.2 L-85.3 407.9ZM-36.0 438.8 L3.1 439.1 L23.5 408.7 L-12.8 408.4ZM42.3 439.3 L81.4 439.6 L96.3 409.2 L59.9 408.9ZM120.7 439.9 L160.0 440.2 L169.3 409.7 L132.8 409.4ZM199.3 440.5 L238.7 440.8 L242.4 410.2 L205.8 409.9ZM278.2 441.1 L317.7 441.4 L315.7 410.7 L279.1 410.4ZM357.2 441.7 L396.8 442.0 L389.3 411.2 L352.5 410.9ZM436.5 442.3 L476.2 442.6 L463.0 411.7 L426.1 411.4ZM516.0 442.9 L555.8 443.2 L536.9 412.2 L499.9 411.9ZM595.7 443.4 L635.7 443.7 L610.9 412.7 L573.9 412.5ZM675.7 444.0 L715.7 444.3 L685.2 413.2 L648.0 413.0Z" fill="#b9b9b9"/>
<polygon points="-121.5,407.7 685.2,413.2 658.8,386.3 -94.2,381.4" fill="#eaeaea"/>
<path d="M-121.5 407.7 L-85.3 407.9 L-60.4 381.7 L-94.2 381.4ZM-49.1 408.2 L-12.8 408.4 L7.3 382.1 L-26.6 381.9ZM23.5 408.7 L59.9 408.9 L75.2 382.5 L41.2 382.3ZM96.3 409.2 L132.8 409.4 L143.2 383.0 L109.2 382.7ZM169.3 409.7 L205.8 409.9 L211.4 383.4 L177.3 383.2ZM242.4 410.2 L279.1 410.4 L279.8 383.8 L245.6 383.6ZM315.7 410.7 L352.5 410.9 L348.4 384.3 L314.1 384.1ZM389.3 411.2 L426.1 411.4 L417.0 384.7 L382.7 384.5ZM463.0 411.7 L499.9 411.9 L485.9 385.2 L451.5 384.9ZM536.9 412.2 L573.9 412.5 L554.9 385.6 L520.4 385.4ZM610.9 412.7 L648.0 413.0 L624.1 386.0 L589.5 385.8Z" fill="#bababa"/>
<polygon points="-128.0,381.2 693.5,386.5 668.2,362.9 -102.1,358.3" fill="#eaeaea"/>
<path d="M-128.0 381.2 L-94.2 381.4 L-70.4 358.5 L-102.1 358.3ZM-60.4 381.7 L-26.6 381.9 L-6.9 358.8 L-38.7 358.6ZM7.3 382.1 L41.2 382.3 L56.7 359.2 L24.9 359.0ZM75.2 382.5 L109.2 382.7 L120.5 359.6 L88.6 359.4ZM143.2 383.0 L177.3 383.2 L184.4 360.0 L152.4 359.8ZM211.4 383.4 L245.6 383.6 L248.4 360.4 L216.4 360.2ZM279.8 383.8 L314.1 384.1 L312.6 360.8 L280.5 360.6ZM348.4 384.3 L382.7 384.5 L376.9 361.2 L344.7 361.0ZM417.0 384.7 L451.5 384.9 L441.4 361.5 L409.1 361.3ZM485.9 385.2 L520.4 385.4 L506.0 361.9 L473.7 361.7ZM554.9 385.6 L589.5 385.8 L570.8 362.3 L538.4 362.1ZM624.1 386.0 L658.8 386.3 L635.7 362.7 L603.2 362.5Z" fill="#bbbbbb"/>
<polygon points="-133.7,358.1 700.7,363.1 676.4,342.3 -109.0,337.8" fill="#eaeaea"/>
<path d="M-133.7 358.1 L-102.1 358.3 L-79.2 338.0 L-109.0 337.8ZM-70.4 358.5 L-38.7 358.6 L-19.4 338.3 L-49.3 338.2ZM-6.9 358.8 L24.9 359.0 L40.4 338.7 L10.5 338.5ZM56.7 359.2 L88.6 359.4 L100.4 339.0 L70.4 338.8ZM120.5 359.6 L152.4 359.8 L160.5 339.3 L130.4 339.2ZM184.4 360.0 L216.4 360.2 L220.7 339.7 L190.6 339.5ZM248.4 360.4 L280.5 360.6 L281.1 340.0 L250.9 339.9ZM312.6 360.8 L344.7 361.0 L341.6 340.4 L311.3 340.2ZM376.9 361.2 L409.1 361.3 L402.2 340.7 L371.8 340.5ZM441.4 361.5 L473.7 361.7 L462.9 341.1 L432.5 340.9ZM506.0 361.9 L538.4 362.1 L523.7 341.4 L493.3 341.2ZM570.8 362.3 L603.2 362.5 L584.7 341.8 L554.2 341.6ZM635.7 362.7 L668.2 362.9 L645.8 342.1 L615.3 341.9Z" fill="#bbbbbb"/>
<polygon points="-109.0,337.8 676.4,342.3 654.9,323.8 -87.0,319.8" fill="#eaeaea"/>
<path d="M-79.2 338.0 L-49.3 338.2 L-30.6 320.1 L-58.8 320.0ZM-19.4 338.3 L10.5 338.5 L26.0 320.4 L-2.3 320.3ZM40.4 338.7 L70.4 338.8 L82.6 320.7 L54.2 320.6ZM100.4 339.0 L130.4 339.2 L139.3 321.0 L110.9 320.9ZM160.5 339.3 L190.6 339.5 L196.1 321.3 L167.7 321.2ZM220.7 339.7 L250.9 339.9 L253.1 321.6 L224.6 321.5ZM281.1 340.0 L311.3 340.2 L310.2 321.9 L281.6 321.8ZM341.6 340.4 L371.8 340.5 L367.3 322.2 L338.7 322.1ZM402.2 340.7 L432.5 340.9 L424.6 322.5 L396.0 322.4ZM462.9 341.1 L493.3 341.2 L482.0 322.8 L453.3 322.7ZM523.7 341.4 L554.2 341.6 L539.5 323.2 L510.8 323.0ZM584.7 341.8 L615.3 341.9 L597.2 323.5 L568.3 323.3ZM645.8 342.1 L676.4 342.3 L654.9 323.8 L626.0 323.6Z" fill="#bcbcbc"/>
<polygon points="-115.1,319.7 683.8,323.9 663.0,307.4 -93.9,303.5" fill="#eaeaea"/>
<path d="M-87.0 319.8 L-58.8 320.0 L-40.5 303.8 L-67.2 303.7ZM-30.6 320.1 L-2.3 320.3 L13.0 304.1 L-13.8 303.9ZM26.0 320.4 L54.2 320.6 L66.6 304.3 L39.8 304.2ZM82.6 320.7 L110.9 320.9 L120.3 304.6 L93.5 304.5ZM139.3 321.0 L167.7 321.2 L174.1 304.9 L147.2 304.8ZM196.1 321.3 L224.6 321.5 L228.1 305.2 L201.1 305.0ZM253.1 321.6 L281.6 321.8 L282.1 305.4 L255.1 305.3ZM310.2 321.9 L338.7 322.1 L336.2 305.7 L309.1 305.6ZM367.3 322.2 L396.0 322.4 L390.4 306.0 L363.3 305.8ZM424.6 322.5 L453.3 322.7 L444.7 306.3 L417.6 306.1ZM482.0 322.8 L510.8 323.0 L499.1 306.5 L471.9 306.4ZM539.5 323.2 L568.3 323.3 L553.7 306.8 L526.4 306.7ZM597.2 323.5 L626.0 323.6 L608.3 307.1 L581.0 307.0ZM654.9 323.8 L683.8 323.9 L663.0 307.4 L635.6 307.2Z" fill="#bcbcbc"/>
<polygon points="-120.6,303.4 690.4,307.5 670.3,292.6 -100.2,288.9" fill="#ebebeb"/>
<path d="M-93.9 303.5 L-67.2 303.7 L-49.5 289.1 L-74.9 289.0ZM-40.5 303.8 L-13.8 303.9 L1.4 289.4 L-24.1 289.3ZM13.0 304.1 L39.8 304.2 L52.3 289.6 L26.8 289.5ZM66.6 304.3 L93.5 304.5 L103.3 289.9 L77.8 289.7ZM120.3 304.6 L147.2 304.8 L154.4 290.1 L128.8 290.0ZM174.1 304.9 L201.1 305.0 L205.6 290.4 L179.9 290.2ZM228.1 305.2 L255.1 305.3 L256.8 290.6 L231.2 290.5ZM282.1 305.4 L309.1 305.6 L308.2 290.9 L282.5 290.7ZM336.2 305.7 L363.3 305.8 L359.7 291.1 L333.9 291.0ZM390.4 306.0 L417.6 306.1 L411.2 291.3 L385.4 291.2ZM444.7 306.3 L471.9 306.4 L462.8 291.6 L437.0 291.5ZM499.1 306.5 L526.4 306.7 L514.6 291.8 L488.7 291.7ZM553.7 306.8 L581.0 307.0 L566.4 292.1 L540.5 292.0ZM608.3 307.1 L635.6 307.2 L618.3 292.3 L592.3 292.2ZM663.0 307.4 L690.4 307.5 L670.3 292.6 L644.3 292.5Z" fill="#bdbdbd"/>
<polygon points="-100.2,288.9 670.3,292.6 652.1,279.1 -81.7,275.7" fill="#ebebeb"/>
<path d="M-100.2 288.9 L-74.9 289.0 L-57.6 275.9 L-81.7 275.7ZM-49.5 289.1 L-24.1 289.3 L-9.2 276.1 L-33.4 276.0ZM1.4 289.4 L26.8 289.5 L39.3 276.3 L15.0 276.2ZM52.3 289.6 L77.8 289.7 L87.8 276.5 L63.6 276.4ZM103.3 289.9 L128.8 290.0 L136.5 276.7 L112.2 276.6ZM154.4 290.1 L179.9 290.2 L185.2 277.0 L160.8 276.9ZM205.6 290.4 L231.2 290.5 L234.0 277.2 L209.6 277.1ZM256.8 290.6 L282.5 290.7 L282.9 277.4 L258.4 277.3ZM308.2 290.9 L333.9 291.0 L331.8 277.6 L307.4 277.5ZM359.7 291.1 L385.4 291.2 L380.9 277.9 L356.4 277.8ZM411.2 291.3 L437.0 291.5 L430.0 278.1 L405.4 278.0ZM462.8 291.6 L488.7 291.7 L479.2 278.3 L454.6 278.2ZM514.6 291.8 L540.5 292.0 L528.5 278.5 L503.9 278.4ZM566.4 292.1 L592.3 292.2 L577.9 278.8 L553.2 278.7ZM618.3 292.3 L644.3 292.5 L627.4 279.0 L602.6 278.9Z" fill="#bdbdbd"/>
<polygon points="-105.9,275.6 676.9,279.2 659.3,267.0 -88.0,263.7" fill="#ebebeb"/>
<path d="M-105.9 275.6 L-81.7 275.7 L-64.9 263.8 L-88.0 263.7ZM-57.6 275.9 L-33.4 276.0 L-18.8 264.0 L-41.9 263.9ZM-9.2 276.1 L15.0 276.2 L27.5 264.2 L4.4 264.1ZM39.3 276.3 L63.6 276.4 L73.8 264.4 L50.7 264.3ZM87.8 276.5 L112.2 276.6 L120.2 264.6 L97.0 264.5ZM136.5 276.7 L160.8 276.9 L166.7 264.8 L143.5 264.7ZM185.2 277.0 L209.6 277.1 L213.3 265.0 L190.0 264.9ZM234.0 277.2 L258.4 277.3 L259.9 265.2 L236.6 265.1ZM282.9 277.4 L307.4 277.5 L306.6 265.4 L283.2 265.3ZM331.8 277.6 L356.4 277.8 L353.4 265.6 L330.0 265.5ZM380.9 277.9 L405.4 278.0 L400.2 265.8 L376.8 265.7ZM430.0 278.1 L454.6 278.2 L447.2 266.0 L423.7 265.9ZM479.2 278.3 L503.9 278.4 L494.2 266.2 L470.6 266.1ZM528.5 278.5 L553.2 278.7 L541.2 266.4 L517.7 266.3ZM577.9 278.8 L602.6 278.9 L588.4 266.7 L564.8 266.6ZM627.4 279.0 L652.1 279.1 L635.6 266.9 L612.0 266.8Z" fill="#bebebe"/>
<polygon points="-111.1,263.6 682.9,267.1 665.8,255.9 -93.7,252.7" fill="#ebebeb"/>
<path d="M-111.1 263.6 L-88.0 263.7 L-71.7 252.8 L-93.7 252.7ZM-64.9 263.8 L-41.9 263.9 L-27.5 253.0 L-49.6 252.9ZM-18.8 264.0 L4.4 264.1 L16.7 253.2 L-5.4 253.1ZM27.5 264.2 L50.7 264.3 L61.0 253.3 L38.9 253.2ZM73.8 264.4 L97.0 264.5 L105.4 253.5 L83.2 253.4ZM120.2 264.6 L143.5 264.7 L149.8 253.7 L127.6 253.6ZM166.7 264.8 L190.0 264.9 L194.3 253.9 L172.1 253.8ZM213.3 265.0 L236.6 265.1 L238.9 254.1 L216.6 254.0ZM259.9 265.2 L283.2 265.3 L283.5 254.3 L261.2 254.2ZM306.6 265.4 L330.0 265.5 L328.3 254.5 L305.9 254.4ZM353.4 265.6 L376.8 265.7 L373.0 254.6 L350.6 254.6ZM400.2 265.8 L423.7 265.9 L417.9 254.8 L395.5 254.7ZM447.2 266.0 L470.6 266.1 L462.8 255.0 L440.3 254.9ZM494.2 266.2 L517.7 266.3 L507.8 255.2 L485.3 255.1ZM541.2 266.4 L564.8 266.6 L552.8 255.4 L530.3 255.3ZM588.4 266.7 L612.0 266.8 L598.0 255.6 L575.4 255.5ZM635.6 266.9 L659.3 267.0 L643.2 255.8 L620.6 255.7Z" fill="#bebebe"/>
<polygon points="-115.8,252.6 688.4,256.0 671.8,245.7 -99.0,242.6" fill="#ebebeb"/>
<path d="M-115.8 252.6 L-93.7 252.7 L-77.8 242.7 L-99.0 242.6ZM-71.7 252.8 L-49.6 252.9 L-35.5 242.9 L-56.7 242.8ZM-27.5 253.0 L-5.4 253.1 L6.9 243.0 L-14.3 242.9ZM16.7 253.2 L38.9 253.2 L49.3 243.2 L28.1 243.1ZM61.0 253.3 L83.2 253.4 L91.8 243.4 L70.5 243.3ZM105.4 253.5 L127.6 253.6 L134.4 243.5 L113.1 243.5ZM149.8 253.7 L172.1 253.8 L177.0 243.7 L155.7 243.6ZM194.3 253.9 L216.6 254.0 L219.7 243.9 L198.3 243.8ZM238.9 254.1 L261.2 254.2 L262.4 244.1 L241.1 244.0ZM283.5 254.3 L305.9 254.4 L305.3 244.2 L283.8 244.1ZM328.3 254.5 L350.6 254.6 L348.1 244.4 L326.7 244.3ZM373.0 254.6 L395.5 254.7 L391.1 244.6 L369.6 244.5ZM417.9 254.8 L440.3 254.9 L434.1 244.7 L412.6 244.7ZM462.8 255.0 L485.3 255.1 L477.2 244.9 L455.6 244.8ZM507.8 255.2 L530.3 255.3 L520.3 245.1 L498.7 245.0ZM552.8 255.4 L575.4 255.5 L563.5 245.3 L541.9 245.2ZM598.0 255.6 L620.6 255.7 L606.7 245.4 L585.1 245.3ZM643.2 255.8 L665.8 255.9 L650.1 245.6 L628.4 245.5Z" fill="#bebebe"/>
<polygon points="-99.0,242.6 671.8,245.7 656.4,236.3 -83.5,233.4" fill="#ebebeb"/>
<path d="M-77.8 242.7 L-56.7 242.8 L-42.9 233.6 L-63.2 233.5ZM-35.5 242.9 L-14.3 242.9 L-2.2 233.7 L-22.6 233.6ZM6.9 243.0 L28.1 243.1 L38.5 233.9 L18.1 233.8ZM49.3 243.2 L70.5 243.3 L79.3 234.0 L58.9 234.0ZM91.8 243.4 L113.1 243.5 L120.1 234.2 L99.7 234.1ZM134.4 243.5 L155.7 243.6 L161.1 234.3 L140.6 234.3ZM177.0 243.7 L198.3 243.8 L202.0 234.5 L181.5 234.4ZM219.7 243.9 L241.1 244.0 L243.0 234.7 L222.5 234.6ZM262.4 244.1 L283.8 244.1 L284.1 234.8 L263.6 234.7ZM305.3 244.2 L326.7 244.3 L325.2 235.0 L304.7 234.9ZM348.1 244.4 L369.6 244.5 L366.4 235.1 L345.8 235.1ZM391.1 244.6 L412.6 244.7 L407.7 235.3 L387.1 235.2ZM434.1 244.7 L455.6 244.8 L449.0 235.5 L428.3 235.4ZM477.2 244.9 L498.7 245.0 L490.4 235.6 L469.7 235.5ZM520.3 245.1 L541.9 245.2 L531.8 235.8 L511.1 235.7ZM563.5 245.3 L585.1 245.3 L573.3 235.9 L552.5 235.9ZM606.7 245.4 L628.4 245.5 L614.8 236.1 L594.0 236.0ZM650.1 245.6 L671.8 245.7 L656.4 236.3 L635.6 236.2Z" fill="#bfbfbf"/>
<polygon points="-103.8,233.3 677.3,236.3 662.3,227.6 -88.7,224.8" fill="#ebebeb"/>
<path d="M-83.5 233.4 L-63.2 233.5 L-49.7 225.0 L-69.2 224.9ZM-42.9 233.6 L-22.6 233.6 L-10.6 225.1 L-30.1 225.0ZM-2.2 233.7 L18.1 233.8 L28.6 225.3 L9.0 225.2ZM38.5 233.9 L58.9 234.0 L67.8 225.4 L48.2 225.3ZM79.3 234.0 L99.7 234.1 L107.0 225.6 L87.4 225.5ZM120.1 234.2 L140.6 234.3 L146.3 225.7 L126.7 225.6ZM161.1 234.3 L181.5 234.4 L185.7 225.8 L166.0 225.8ZM202.0 234.5 L222.5 234.6 L225.1 226.0 L205.4 225.9ZM243.0 234.7 L263.6 234.7 L264.6 226.1 L244.9 226.1ZM284.1 234.8 L304.7 234.9 L304.1 226.3 L284.4 226.2ZM325.2 235.0 L345.8 235.1 L343.7 226.4 L323.9 226.4ZM366.4 235.1 L387.1 235.2 L383.3 226.6 L363.5 226.5ZM407.7 235.3 L428.3 235.4 L423.0 226.7 L403.2 226.7ZM449.0 235.5 L469.7 235.5 L462.8 226.9 L442.9 226.8ZM490.4 235.6 L511.1 235.7 L502.6 227.0 L482.7 226.9ZM531.8 235.8 L552.5 235.9 L542.4 227.2 L522.5 227.1ZM573.3 235.9 L594.0 236.0 L582.3 227.3 L562.4 227.2ZM614.8 236.1 L635.6 236.2 L622.3 227.5 L602.3 227.4ZM656.4 236.3 L677.3 236.3 L662.3 227.6 L642.3 227.5Z" fill="#bfbfbf"/>
<polygon points="-108.2,224.8 682.3,227.7 667.7,219.6 -93.6,216.9" fill="#ebebeb"/>
<path d="M-88.7 224.8 L-69.2 224.9 L-56.0 217.0 L-74.8 217.0ZM-49.7 225.0 L-30.1 225.0 L-18.3 217.2 L-37.2 217.1ZM-10.6 225.1 L9.0 225.2 L19.4 217.3 L0.5 217.2ZM28.6 225.3 L48.2 225.3 L57.1 217.4 L38.2 217.4ZM67.8 225.4 L87.4 225.5 L94.9 217.6 L76.0 217.5ZM107.0 225.6 L126.7 225.6 L132.7 217.7 L113.8 217.6ZM146.3 225.7 L166.0 225.8 L170.6 217.8 L151.7 217.8ZM185.7 225.8 L205.4 225.9 L208.6 218.0 L189.6 217.9ZM225.1 226.0 L244.9 226.1 L246.5 218.1 L227.5 218.0ZM264.6 226.1 L284.4 226.2 L284.6 218.2 L265.6 218.2ZM304.1 226.3 L323.9 226.4 L322.7 218.4 L303.6 218.3ZM343.7 226.4 L363.5 226.5 L360.8 218.5 L341.7 218.5ZM383.3 226.6 L403.2 226.7 L399.0 218.7 L379.9 218.6ZM423.0 226.7 L442.9 226.8 L437.2 218.8 L418.1 218.7ZM462.8 226.9 L482.7 226.9 L475.5 218.9 L456.4 218.9ZM502.6 227.0 L522.5 227.1 L513.9 219.1 L494.7 219.0ZM542.4 227.2 L562.4 227.2 L552.3 219.2 L533.1 219.1ZM582.3 227.3 L602.3 227.4 L590.7 219.3 L571.5 219.3ZM622.3 227.5 L642.3 227.5 L629.2 219.5 L609.9 219.4ZM662.3 227.6 L682.3 227.7 L667.7 219.6 L648.5 219.5Z" fill="#bfbfbf"/>
<polygon points="-112.4,216.8 667.7,219.6 654.2,212.1 -98.1,209.5" fill="#ebebeb"/>
<path d="M-93.6 216.9 L-74.8 217.0 L-61.8 209.7 L-80.0 209.6ZM-56.0 217.0 L-37.2 217.1 L-25.5 209.8 L-43.7 209.7ZM-18.3 217.2 L0.5 217.2 L10.8 209.9 L-7.4 209.8ZM19.4 217.3 L38.2 217.4 L47.2 210.0 L29.0 210.0ZM57.1 217.4 L76.0 217.5 L83.6 210.2 L65.4 210.1ZM94.9 217.6 L113.8 217.6 L120.1 210.3 L101.8 210.2ZM132.7 217.7 L151.7 217.8 L156.6 210.4 L138.3 210.3ZM170.6 217.8 L189.6 217.9 L193.2 210.5 L174.9 210.5ZM208.6 218.0 L227.5 218.0 L229.8 210.7 L211.5 210.6ZM246.5 218.1 L265.6 218.2 L266.5 210.8 L248.1 210.7ZM284.6 218.2 L303.6 218.3 L303.2 210.9 L284.8 210.8ZM322.7 218.4 L341.7 218.5 L339.9 211.0 L321.5 211.0ZM360.8 218.5 L379.9 218.6 L376.7 211.2 L358.3 211.1ZM399.0 218.7 L418.1 218.7 L413.6 211.3 L395.1 211.2ZM437.2 218.8 L456.4 218.9 L450.4 211.4 L432.0 211.4ZM475.5 218.9 L494.7 219.0 L487.4 211.5 L468.9 211.5ZM513.9 219.1 L533.1 219.1 L524.4 211.7 L505.9 211.6ZM552.3 219.2 L571.5 219.3 L561.4 211.8 L542.9 211.7ZM590.7 219.3 L609.9 219.4 L598.5 211.9 L579.9 211.9ZM629.2 219.5 L648.5 219.5 L635.6 212.1 L617.0 212.0Z" fill="#c0c0c0"/>
<polygon points="-98.1,209.5 672.8,212.2 659.5,205.2 -84.8,202.7" fill="#ebebeb"/>
<path d="M-98.1 209.5 L-80.0 209.6 L-67.3 202.8 L-84.8 202.7ZM-61.8 209.7 L-43.7 209.7 L-32.2 202.9 L-49.8 202.8ZM-25.5 209.8 L-7.4 209.8 L2.8 203.0 L-14.7 203.0ZM10.8 209.9 L29.0 210.0 L38.0 203.1 L20.4 203.1ZM47.2 210.0 L65.4 210.1 L73.1 203.3 L55.5 203.2ZM83.6 210.2 L101.8 210.2 L108.3 203.4 L90.7 203.3ZM120.1 210.3 L138.3 210.3 L143.6 203.5 L125.9 203.4ZM156.6 210.4 L174.9 210.5 L178.9 203.6 L161.2 203.5ZM193.2 210.5 L211.5 210.6 L214.2 203.7 L196.5 203.7ZM229.8 210.7 L248.1 210.7 L249.6 203.8 L231.9 203.8ZM266.5 210.8 L284.8 210.8 L285.0 204.0 L267.3 203.9ZM303.2 210.9 L321.5 211.0 L320.5 204.1 L302.7 204.0ZM339.9 211.0 L358.3 211.1 L356.0 204.2 L338.2 204.1ZM376.7 211.2 L395.1 211.2 L391.5 204.3 L373.7 204.3ZM413.6 211.3 L432.0 211.4 L427.1 204.4 L409.3 204.4ZM450.4 211.4 L468.9 211.5 L462.8 204.5 L444.9 204.5ZM487.4 211.5 L505.9 211.6 L498.4 204.7 L480.6 204.6ZM524.4 211.7 L542.9 211.7 L534.2 204.8 L516.3 204.7ZM561.4 211.8 L579.9 211.9 L569.9 204.9 L552.0 204.8ZM598.5 211.9 L617.0 212.0 L605.7 205.0 L587.8 205.0ZM635.6 212.1 L654.2 212.1 L641.6 205.1 L623.7 205.1Z" fill="#c0c0c0"/>
<polygon points="-102.3,202.7 677.5,205.3 664.5,198.7 -89.3,196.3" fill="#ebebeb"/>
<path d="M-102.3 202.7 L-84.8 202.7 L-72.4 196.4 L-89.3 196.3ZM-67.3 202.8 L-49.8 202.8 L-38.5 196.5 L-55.4 196.4ZM-32.2 202.9 L-14.7 203.0 L-4.6 196.6 L-21.5 196.5ZM2.8 203.0 L20.4 203.1 L29.3 196.7 L12.4 196.7ZM38.0 203.1 L55.5 203.2 L63.3 196.8 L46.3 196.8ZM73.1 203.3 L90.7 203.3 L97.4 196.9 L80.3 196.9ZM108.3 203.4 L125.9 203.4 L131.4 197.0 L114.4 197.0ZM143.6 203.5 L161.2 203.5 L165.5 197.1 L148.5 197.1ZM178.9 203.6 L196.5 203.7 L199.7 197.3 L182.6 197.2ZM214.2 203.7 L231.9 203.8 L233.8 197.4 L216.7 197.3ZM249.6 203.8 L267.3 203.9 L268.1 197.5 L250.9 197.4ZM285.0 204.0 L302.7 204.0 L302.3 197.6 L285.2 197.5ZM320.5 204.1 L338.2 204.1 L336.6 197.7 L319.5 197.6ZM356.0 204.2 L373.7 204.3 L371.0 197.8 L353.8 197.7ZM391.5 204.3 L409.3 204.4 L405.3 197.9 L388.2 197.9ZM427.1 204.4 L444.9 204.5 L439.8 198.0 L422.6 198.0ZM462.8 204.5 L480.6 204.6 L474.2 198.1 L457.0 198.1ZM498.4 204.7 L516.3 204.7 L508.7 198.2 L491.5 198.2ZM534.2 204.8 L552.0 204.8 L543.3 198.4 L526.0 198.3ZM569.9 204.9 L587.8 205.0 L577.9 198.5 L560.6 198.4ZM605.7 205.0 L623.7 205.1 L612.5 198.6 L595.2 198.5ZM641.6 205.1 L659.5 205.2 L647.2 198.7 L629.8 198.6Z" fill="#c0c0c0"/>
<polygon points="-106.2,196.3 664.5,198.7 652.4,192.7 -93.5,190.3" fill="#ebebeb"/>
<path d="M-106.2 196.3 L-89.3 196.3 L-77.1 190.4 L-93.5 190.3ZM-72.4 196.4 L-55.4 196.4 L-44.3 190.5 L-60.7 190.4ZM-38.5 196.5 L-21.5 196.5 L-11.5 190.6 L-27.9 190.5ZM-4.6 196.6 L12.4 196.7 L21.3 190.7 L4.9 190.6ZM29.3 196.7 L46.3 196.8 L54.2 190.8 L37.7 190.7ZM63.3 196.8 L80.3 196.9 L87.1 190.9 L70.6 190.8ZM97.4 196.9 L114.4 197.0 L120.0 191.0 L103.6 190.9ZM131.4 197.0 L148.5 197.1 L153.0 191.1 L136.5 191.0ZM165.5 197.1 L182.6 197.2 L186.1 191.2 L169.5 191.2ZM199.7 197.3 L216.7 197.3 L219.1 191.3 L202.6 191.3ZM233.8 197.4 L250.9 197.4 L252.2 191.4 L235.7 191.4ZM268.1 197.5 L285.2 197.5 L285.4 191.5 L268.8 191.5ZM302.3 197.6 L319.5 197.6 L318.5 191.6 L301.9 191.6ZM336.6 197.7 L353.8 197.7 L351.7 191.7 L335.1 191.7ZM371.0 197.8 L388.2 197.9 L385.0 191.8 L368.4 191.8ZM405.3 197.9 L422.6 198.0 L418.3 191.9 L401.6 191.9ZM439.8 198.0 L457.0 198.1 L451.6 192.0 L435.0 192.0ZM474.2 198.1 L491.5 198.2 L485.0 192.1 L468.3 192.1ZM508.7 198.2 L526.0 198.3 L518.4 192.2 L501.7 192.2ZM543.3 198.4 L560.6 198.4 L551.8 192.3 L535.1 192.3ZM577.9 198.5 L595.2 198.5 L585.3 192.4 L568.6 192.4ZM612.5 198.6 L629.8 198.6 L618.8 192.5 L602.1 192.5ZM647.2 198.7 L664.5 198.7 L652.4 192.7 L635.6 192.6Z" fill="#c0c0c0"/>
<polygon points="-93.5,190.3 669.2,192.7 657.3,187.0 -81.6,184.8" fill="#ececec"/>
<path d="M-77.1 190.4 L-60.7 190.4 L-49.8 184.9 L-65.7 184.8ZM-44.3 190.5 L-27.9 190.5 L-18.1 185.0 L-33.9 184.9ZM-11.5 190.6 L4.9 190.6 L13.8 185.1 L-2.2 185.0ZM21.3 190.7 L37.7 190.7 L45.6 185.1 L29.7 185.1ZM54.2 190.8 L70.6 190.8 L77.5 185.2 L61.5 185.2ZM87.1 190.9 L103.6 190.9 L109.4 185.3 L93.4 185.3ZM120.0 191.0 L136.5 191.0 L141.3 185.4 L125.3 185.4ZM153.0 191.1 L169.5 191.2 L173.3 185.5 L157.3 185.5ZM186.1 191.2 L202.6 191.3 L205.3 185.6 L189.3 185.6ZM219.1 191.3 L235.7 191.4 L237.4 185.7 L221.3 185.7ZM252.2 191.4 L268.8 191.5 L269.5 185.8 L253.4 185.8ZM285.4 191.5 L301.9 191.6 L301.6 185.9 L285.5 185.9ZM318.5 191.6 L335.1 191.7 L333.7 186.0 L317.7 186.0ZM351.7 191.7 L368.4 191.8 L365.9 186.1 L349.8 186.1ZM385.0 191.8 L401.6 191.9 L398.2 186.2 L382.0 186.2ZM418.3 191.9 L435.0 192.0 L430.4 186.3 L414.3 186.3ZM451.6 192.0 L468.3 192.1 L462.7 186.4 L446.6 186.4ZM485.0 192.1 L501.7 192.2 L495.1 186.5 L478.9 186.5ZM518.4 192.2 L535.1 192.3 L527.4 186.6 L511.3 186.6ZM551.8 192.3 L568.6 192.4 L559.9 186.7 L543.6 186.6ZM585.3 192.4 L602.1 192.5 L592.3 186.8 L576.1 186.7ZM618.8 192.5 L635.6 192.6 L624.8 186.9 L608.5 186.8ZM652.4 192.7 L669.2 192.7 L657.3 187.0 L641.0 186.9Z" fill="#c0c0c0"/>
<polygon points="-97.4,184.7 673.6,187.0 661.9,181.7 -85.7,179.5" fill="#ececec"/>
<path d="M-81.6 184.8 L-65.7 184.8 L-55.0 179.6 L-70.4 179.5ZM-49.8 184.9 L-33.9 184.9 L-24.2 179.7 L-39.6 179.6ZM-18.1 185.0 L-2.2 185.0 L6.7 179.8 L-8.8 179.7ZM13.8 185.1 L29.7 185.1 L37.5 179.8 L22.1 179.8ZM45.6 185.1 L61.5 185.2 L68.4 179.9 L53.0 179.9ZM77.5 185.2 L93.4 185.3 L99.4 180.0 L83.9 180.0ZM109.4 185.3 L125.3 185.4 L130.3 180.1 L114.8 180.1ZM141.3 185.4 L157.3 185.5 L161.3 180.2 L145.8 180.2ZM173.3 185.5 L189.3 185.6 L192.4 180.3 L176.8 180.3ZM205.3 185.6 L221.3 185.7 L223.4 180.4 L207.9 180.3ZM237.4 185.7 L253.4 185.8 L254.5 180.5 L239.0 180.4ZM269.5 185.8 L285.5 185.9 L285.7 180.6 L270.1 180.5ZM301.6 185.9 L317.7 186.0 L316.8 180.7 L301.2 180.6ZM333.7 186.0 L349.8 186.1 L348.0 180.8 L332.4 180.7ZM365.9 186.1 L382.0 186.2 L379.3 180.8 L363.7 180.8ZM398.2 186.2 L414.3 186.3 L410.5 180.9 L394.9 180.9ZM430.4 186.3 L446.6 186.4 L441.8 181.0 L426.2 181.0ZM462.7 186.4 L478.9 186.5 L473.2 181.1 L457.5 181.1ZM495.1 186.5 L511.3 186.6 L504.5 181.2 L488.9 181.2ZM527.4 186.6 L543.6 186.6 L535.9 181.3 L520.2 181.3ZM559.9 186.7 L576.1 186.7 L567.4 181.4 L551.7 181.4ZM592.3 186.8 L608.5 186.8 L598.9 181.5 L583.1 181.4ZM624.8 186.9 L641.0 186.9 L630.4 181.6 L614.6 181.5ZM657.3 187.0 L673.6 187.0 L661.9 181.7 L646.1 181.6Z" fill="#c1c1c1"/>
<polygon points="-101.1,179.4 677.7,181.7 666.2,176.7 -89.7,174.5" fill="#ececec"/>
<path d="M-85.7 179.5 L-70.4 179.5 L-59.8 174.6 L-74.8 174.6ZM-55.0 179.6 L-39.6 179.6 L-29.9 174.7 L-44.9 174.6ZM-24.2 179.7 L-8.8 179.7 L-0.0 174.8 L-15.0 174.7ZM6.7 179.8 L22.1 179.8 L29.9 174.9 L15.0 174.8ZM37.5 179.8 L53.0 179.9 L59.9 174.9 L44.9 174.9ZM68.4 179.9 L83.9 180.0 L89.9 175.0 L74.9 175.0ZM99.4 180.0 L114.8 180.1 L120.0 175.1 L105.0 175.1ZM130.3 180.1 L145.8 180.2 L150.1 175.2 L135.0 175.2ZM161.3 180.2 L176.8 180.3 L180.2 175.3 L165.1 175.2ZM192.4 180.3 L207.9 180.3 L210.3 175.4 L195.3 175.3ZM223.4 180.4 L239.0 180.4 L240.5 175.5 L225.4 175.4ZM254.5 180.5 L270.1 180.5 L270.7 175.5 L255.6 175.5ZM285.7 180.6 L301.2 180.6 L300.9 175.6 L285.8 175.6ZM316.8 180.7 L332.4 180.7 L331.2 175.7 L316.1 175.7ZM348.0 180.8 L363.7 180.8 L361.5 175.8 L346.3 175.8ZM379.3 180.8 L394.9 180.9 L391.8 175.9 L376.7 175.8ZM410.5 180.9 L426.2 181.0 L422.2 176.0 L407.0 175.9ZM441.8 181.0 L457.5 181.1 L452.6 176.1 L437.4 176.0ZM473.2 181.1 L488.9 181.2 L483.0 176.1 L467.8 176.1ZM504.5 181.2 L520.2 181.3 L513.5 176.2 L498.2 176.2ZM535.9 181.3 L551.7 181.4 L544.0 176.3 L528.7 176.3ZM567.4 181.4 L583.1 181.4 L574.5 176.4 L559.2 176.4ZM598.9 181.5 L614.6 181.5 L605.0 176.5 L589.7 176.4ZM630.4 181.6 L646.1 181.6 L635.6 176.6 L620.3 176.5ZM661.9 181.7 L677.7 181.7 L666.2 176.7 L650.9 176.6Z" fill="#c1c1c1"/>
<polygon points="-104.6,174.5 666.2,176.7 655.4,171.9 -93.4,169.8" fill="#ececec"/>
<path d="M-89.7 174.5 L-74.8 174.6 L-64.4 169.9 L-78.9 169.9ZM-59.8 174.6 L-44.9 174.6 L-35.4 170.0 L-49.9 170.0ZM-29.9 174.7 L-15.0 174.7 L-6.3 170.1 L-20.8 170.0ZM-0.0 174.8 L15.0 174.8 L22.8 170.2 L8.3 170.1ZM29.9 174.9 L44.9 174.9 L51.9 170.2 L37.4 170.2ZM59.9 174.9 L74.9 175.0 L81.1 170.3 L66.5 170.3ZM89.9 175.0 L105.0 175.1 L110.3 170.4 L95.7 170.4ZM120.0 175.1 L135.0 175.2 L139.5 170.5 L124.9 170.4ZM150.1 175.2 L165.1 175.2 L168.7 170.6 L154.1 170.5ZM180.2 175.3 L195.3 175.3 L198.0 170.6 L183.3 170.6ZM210.3 175.4 L225.4 175.4 L227.3 170.7 L212.6 170.7ZM240.5 175.5 L255.6 175.5 L256.6 170.8 L241.9 170.8ZM270.7 175.5 L285.8 175.6 L285.9 170.9 L271.3 170.8ZM300.9 175.6 L316.1 175.7 L315.3 171.0 L300.6 170.9ZM331.2 175.7 L346.3 175.8 L344.8 171.0 L330.0 171.0ZM361.5 175.8 L376.7 175.8 L374.2 171.1 L359.5 171.1ZM391.8 175.9 L407.0 175.9 L403.7 171.2 L388.9 171.2ZM422.2 176.0 L437.4 176.0 L433.2 171.3 L418.4 171.2ZM452.6 176.1 L467.8 176.1 L462.7 171.4 L447.9 171.3ZM483.0 176.1 L498.2 176.2 L492.3 171.5 L477.5 171.4ZM513.5 176.2 L528.7 176.3 L521.9 171.5 L507.1 171.5ZM544.0 176.3 L559.2 176.4 L551.5 171.6 L536.7 171.6ZM574.5 176.4 L589.7 176.4 L581.2 171.7 L566.3 171.7ZM605.0 176.5 L620.3 176.5 L610.8 171.8 L596.0 171.7ZM635.6 176.6 L650.9 176.6 L640.6 171.9 L625.7 171.8Z" fill="#c1c1c1"/>
<polygon points="-93.4,169.8 670.3,171.9 659.7,167.4 -82.8,165.5" fill="#ececec"/>
<path d="M-93.4 169.8 L-78.9 169.9 L-68.7 165.5 L-82.8 165.5ZM-64.4 169.9 L-49.9 170.0 L-40.5 165.6 L-54.6 165.5ZM-35.4 170.0 L-20.8 170.0 L-12.2 165.6 L-26.4 165.6ZM-6.3 170.1 L8.3 170.1 L16.1 165.7 L1.9 165.7ZM22.8 170.2 L37.4 170.2 L44.4 165.8 L30.2 165.8ZM51.9 170.2 L66.5 170.3 L72.7 165.9 L58.5 165.8ZM81.1 170.3 L95.7 170.4 L101.1 165.9 L86.9 165.9ZM110.3 170.4 L124.9 170.4 L129.4 166.0 L115.2 166.0ZM139.5 170.5 L154.1 170.5 L157.9 166.1 L143.6 166.1ZM168.7 170.6 L183.3 170.6 L186.3 166.2 L172.1 166.1ZM198.0 170.6 L212.6 170.7 L214.8 166.3 L200.5 166.2ZM227.3 170.7 L241.9 170.8 L243.3 166.3 L229.0 166.3ZM256.6 170.8 L271.3 170.8 L271.8 166.4 L257.5 166.4ZM285.9 170.9 L300.6 170.9 L300.4 166.5 L286.1 166.4ZM315.3 171.0 L330.0 171.0 L328.9 166.6 L314.6 166.5ZM344.8 171.0 L359.5 171.1 L357.6 166.6 L343.2 166.6ZM374.2 171.1 L388.9 171.2 L386.2 166.7 L371.9 166.7ZM403.7 171.2 L418.4 171.2 L414.9 166.8 L400.5 166.7ZM433.2 171.3 L447.9 171.3 L443.6 166.9 L429.2 166.8ZM462.7 171.4 L477.5 171.4 L472.3 166.9 L457.9 166.9ZM492.3 171.5 L507.1 171.5 L501.0 167.0 L486.7 167.0ZM521.9 171.5 L536.7 171.6 L529.8 167.1 L515.4 167.1ZM551.5 171.6 L566.3 171.7 L558.6 167.2 L544.2 167.1ZM581.2 171.7 L596.0 171.7 L587.5 167.2 L573.1 167.2ZM610.8 171.8 L625.7 171.8 L616.3 167.3 L601.9 167.3ZM640.6 171.9 L655.4 171.9 L645.2 167.4 L630.8 167.4Z" fill="#c1c1c1"/>
<polygon points="-96.9,165.4 674.2,167.5 663.7,163.2 -86.5,161.3" fill="#ececec"/>
<path d="M-96.9 165.4 L-82.8 165.5 L-72.8 161.3 L-86.5 161.3ZM-68.7 165.5 L-54.6 165.5 L-45.3 161.4 L-59.1 161.3ZM-40.5 165.6 L-26.4 165.6 L-17.8 161.4 L-31.6 161.4ZM-12.2 165.6 L1.9 165.7 L9.7 161.5 L-4.1 161.5ZM16.1 165.7 L30.2 165.8 L37.2 161.6 L23.4 161.6ZM44.4 165.8 L58.5 165.8 L64.8 161.7 L51.0 161.6ZM72.7 165.9 L86.9 165.9 L92.3 161.7 L78.6 161.7ZM101.1 165.9 L115.2 166.0 L120.0 161.8 L106.2 161.8ZM129.4 166.0 L143.6 166.1 L147.6 161.9 L133.8 161.8ZM157.9 166.1 L172.1 166.1 L175.3 162.0 L161.4 161.9ZM186.3 166.2 L200.5 166.2 L203.0 162.0 L189.1 162.0ZM214.8 166.3 L229.0 166.3 L230.7 162.1 L216.8 162.1ZM243.3 166.3 L257.5 166.4 L258.4 162.2 L244.5 162.1ZM271.8 166.4 L286.1 166.4 L286.2 162.2 L272.3 162.2ZM300.4 166.5 L314.6 166.5 L314.0 162.3 L300.1 162.3ZM328.9 166.6 L343.2 166.6 L341.8 162.4 L327.9 162.3ZM357.6 166.6 L371.9 166.7 L369.7 162.5 L355.7 162.4ZM386.2 166.7 L400.5 166.7 L397.6 162.5 L383.6 162.5ZM414.9 166.8 L429.2 166.8 L425.5 162.6 L411.5 162.6ZM443.6 166.9 L457.9 166.9 L453.4 162.7 L439.4 162.6ZM472.3 166.9 L486.7 167.0 L481.3 162.7 L467.4 162.7ZM501.0 167.0 L515.4 167.1 L509.3 162.8 L495.3 162.8ZM529.8 167.1 L544.2 167.1 L537.3 162.9 L523.3 162.9ZM558.6 167.2 L573.1 167.2 L565.4 163.0 L551.4 162.9ZM587.5 167.2 L601.9 167.3 L593.5 163.0 L579.4 163.0ZM616.3 167.3 L630.8 167.4 L621.5 163.1 L607.5 163.1ZM645.2 167.4 L659.7 167.4 L649.7 163.2 L635.6 163.2Z" fill="#c1c1c1"/>
<polygon points="-100.2,161.2 663.7,163.2 653.9,159.2 -90.0,157.3" fill="#ececec"/>
<path d="M-100.2 161.2 L-86.5 161.3 L-76.6 157.3 L-90.0 157.3ZM-72.8 161.3 L-59.1 161.3 L-49.9 157.4 L-63.3 157.4ZM-45.3 161.4 L-31.6 161.4 L-23.2 157.5 L-36.5 157.4ZM-17.8 161.4 L-4.1 161.5 L3.6 157.5 L-9.8 157.5ZM9.7 161.5 L23.4 161.6 L30.4 157.6 L17.0 157.6ZM37.2 161.6 L51.0 161.6 L57.3 157.7 L43.8 157.6ZM64.8 161.7 L78.6 161.7 L84.1 157.7 L70.7 157.7ZM92.3 161.7 L106.2 161.8 L111.0 157.8 L97.5 157.8ZM120.0 161.8 L133.8 161.8 L137.9 157.9 L124.4 157.8ZM147.6 161.9 L161.4 161.9 L164.8 158.0 L151.4 157.9ZM175.3 162.0 L189.1 162.0 L191.8 158.0 L178.3 158.0ZM203.0 162.0 L216.8 162.1 L218.8 158.1 L205.3 158.1ZM230.7 162.1 L244.5 162.1 L245.8 158.2 L232.3 158.1ZM258.4 162.2 L272.3 162.2 L272.8 158.2 L259.3 158.2ZM286.2 162.2 L300.1 162.3 L299.8 158.3 L286.3 158.3ZM314.0 162.3 L327.9 162.3 L326.9 158.4 L313.4 158.3ZM341.8 162.4 L355.7 162.4 L354.0 158.4 L340.5 158.4ZM369.7 162.5 L383.6 162.5 L381.2 158.5 L367.6 158.5ZM397.6 162.5 L411.5 162.6 L408.3 158.6 L394.7 158.5ZM425.5 162.6 L439.4 162.6 L435.5 158.6 L421.9 158.6ZM453.4 162.7 L467.4 162.7 L462.7 158.7 L449.1 158.7ZM481.3 162.7 L495.3 162.8 L489.9 158.8 L476.3 158.7ZM509.3 162.8 L523.3 162.9 L517.2 158.8 L503.6 158.8ZM537.3 162.9 L551.4 162.9 L544.5 158.9 L530.8 158.9ZM565.4 163.0 L579.4 163.0 L571.8 159.0 L558.1 158.9ZM593.5 163.0 L607.5 163.1 L599.1 159.1 L585.4 159.0ZM621.5 163.1 L635.6 163.2 L626.5 159.1 L612.8 159.1ZM649.7 163.2 L663.7 163.2 L653.9 159.2 L640.2 159.2Z" fill="#c1c1c1"/>
<polygon points="-90.0,157.3 667.6,159.2 657.8,155.4 -80.3,153.6" fill="#ececec"/>
<path d="M-76.6 157.3 L-63.3 157.4 L-54.3 153.6 L-67.3 153.6ZM-49.9 157.4 L-36.5 157.4 L-28.2 153.7 L-41.2 153.7ZM-23.2 157.5 L-9.8 157.5 L-2.1 153.8 L-15.2 153.7ZM3.6 157.5 L17.0 157.6 L24.0 153.8 L10.9 153.8ZM30.4 157.6 L43.8 157.6 L50.1 153.9 L37.1 153.9ZM57.3 157.7 L70.7 157.7 L76.3 154.0 L63.2 153.9ZM84.1 157.7 L97.5 157.8 L102.5 154.0 L89.4 154.0ZM111.0 157.8 L124.4 157.8 L128.7 154.1 L115.6 154.1ZM137.9 157.9 L151.4 157.9 L154.9 154.2 L141.8 154.1ZM164.8 158.0 L178.3 158.0 L181.2 154.2 L168.0 154.2ZM191.8 158.0 L205.3 158.1 L207.4 154.3 L194.3 154.3ZM218.8 158.1 L232.3 158.1 L233.7 154.4 L220.6 154.3ZM245.8 158.2 L259.3 158.2 L260.1 154.4 L246.9 154.4ZM272.8 158.2 L286.3 158.3 L286.4 154.5 L273.2 154.5ZM299.8 158.3 L313.4 158.3 L312.8 154.5 L299.6 154.5ZM326.9 158.4 L340.5 158.4 L339.2 154.6 L326.0 154.6ZM354.0 158.4 L367.6 158.5 L365.6 154.7 L352.4 154.6ZM381.2 158.5 L394.7 158.5 L392.1 154.7 L378.8 154.7ZM408.3 158.6 L421.9 158.6 L418.5 154.8 L405.3 154.8ZM435.5 158.6 L449.1 158.7 L445.0 154.9 L431.8 154.8ZM462.7 158.7 L476.3 158.7 L471.5 154.9 L458.3 154.9ZM489.9 158.8 L503.6 158.8 L498.1 155.0 L484.8 155.0ZM517.2 158.8 L530.8 158.9 L524.7 155.1 L511.4 155.0ZM544.5 158.9 L558.1 158.9 L551.2 155.1 L537.9 155.1ZM571.8 159.0 L585.4 159.0 L577.9 155.2 L564.5 155.2ZM599.1 159.1 L612.8 159.1 L604.5 155.3 L591.2 155.2ZM626.5 159.1 L640.2 159.2 L631.2 155.3 L617.8 155.3ZM653.9 159.2 L667.6 159.2 L657.8 155.4 L644.5 155.4Z" fill="#c2c2c2"/>
<polygon points="-93.3,153.5 671.2,155.4 661.6,151.8 -83.8,150.0" fill="#ececec"/>
<path d="M-80.3 153.6 L-67.3 153.6 L-58.4 150.1 L-71.1 150.0ZM-54.3 153.6 L-41.2 153.7 L-33.0 150.1 L-45.7 150.1ZM-28.2 153.7 L-15.2 153.7 L-7.6 150.2 L-20.3 150.2ZM-2.1 153.8 L10.9 153.8 L17.9 150.2 L5.2 150.2ZM24.0 153.8 L37.1 153.9 L43.4 150.3 L30.6 150.3ZM50.1 153.9 L63.2 153.9 L68.9 150.4 L56.1 150.3ZM76.3 154.0 L89.4 154.0 L94.4 150.4 L81.6 150.4ZM102.5 154.0 L115.6 154.1 L119.9 150.5 L107.2 150.5ZM128.7 154.1 L141.8 154.1 L145.5 150.6 L132.7 150.5ZM154.9 154.2 L168.0 154.2 L171.1 150.6 L158.3 150.6ZM181.2 154.2 L194.3 154.3 L196.7 150.7 L183.9 150.6ZM207.4 154.3 L220.6 154.3 L222.3 150.7 L209.5 150.7ZM233.7 154.4 L246.9 154.4 L248.0 150.8 L235.2 150.8ZM260.1 154.4 L273.2 154.5 L273.7 150.9 L260.8 150.8ZM286.4 154.5 L299.6 154.5 L299.4 150.9 L286.5 150.9ZM312.8 154.5 L326.0 154.6 L325.1 151.0 L312.2 151.0ZM339.2 154.6 L352.4 154.6 L350.9 151.1 L338.0 151.0ZM365.6 154.7 L378.8 154.7 L376.6 151.1 L363.7 151.1ZM392.1 154.7 L405.3 154.8 L402.4 151.2 L389.5 151.1ZM418.5 154.8 L431.8 154.8 L428.2 151.2 L415.3 151.2ZM445.0 154.9 L458.3 154.9 L454.1 151.3 L441.2 151.3ZM471.5 154.9 L484.8 155.0 L479.9 151.4 L467.0 151.3ZM498.1 155.0 L511.4 155.0 L505.8 151.4 L492.9 151.4ZM524.7 155.1 L537.9 155.1 L531.7 151.5 L518.8 151.5ZM551.2 155.1 L564.5 155.2 L557.7 151.5 L544.7 151.5ZM577.9 155.2 L591.2 155.2 L583.6 151.6 L570.6 151.6ZM604.5 155.3 L617.8 155.3 L609.6 151.7 L596.6 151.6ZM631.2 155.3 L644.5 155.4 L635.6 151.7 L622.6 151.7ZM657.8 155.4 L671.2 155.4 L661.6 151.8 L648.6 151.8Z" fill="#c2c2c2"/>
<polygon points="-96.5,150.0 661.6,151.8 652.5,148.3 -87.1,146.6" fill="#ececec"/>
<path d="M-83.8 150.0 L-71.1 150.0 L-62.3 146.7 L-74.7 146.6ZM-58.4 150.1 L-45.7 150.1 L-37.6 146.7 L-50.0 146.7ZM-33.0 150.1 L-20.3 150.2 L-12.7 146.8 L-25.2 146.7ZM-7.6 150.2 L5.2 150.2 L12.1 146.8 L-0.3 146.8ZM17.9 150.2 L30.6 150.3 L36.9 146.9 L24.5 146.9ZM43.4 150.3 L56.1 150.3 L61.8 147.0 L49.4 146.9ZM68.9 150.4 L81.6 150.4 L86.7 147.0 L74.2 147.0ZM94.4 150.4 L107.2 150.5 L111.6 147.1 L99.2 147.0ZM119.9 150.5 L132.7 150.5 L136.6 147.1 L124.1 147.1ZM145.5 150.6 L158.3 150.6 L161.5 147.2 L149.0 147.2ZM171.1 150.6 L183.9 150.6 L186.5 147.2 L174.0 147.2ZM196.7 150.7 L209.5 150.7 L211.5 147.3 L199.0 147.3ZM222.3 150.7 L235.2 150.8 L236.5 147.4 L224.0 147.3ZM248.0 150.8 L260.8 150.8 L261.6 147.4 L249.0 147.4ZM273.7 150.9 L286.5 150.9 L286.6 147.5 L274.1 147.5ZM299.4 150.9 L312.2 151.0 L311.7 147.5 L299.2 147.5ZM325.1 151.0 L338.0 151.0 L336.8 147.6 L324.3 147.6ZM350.9 151.1 L363.7 151.1 L362.0 147.7 L349.4 147.6ZM376.6 151.1 L389.5 151.1 L387.1 147.7 L374.5 147.7ZM402.4 151.2 L415.3 151.2 L412.3 147.8 L399.7 147.7ZM428.2 151.2 L441.2 151.3 L437.5 147.8 L424.9 147.8ZM454.1 151.3 L467.0 151.3 L462.7 147.9 L450.1 147.9ZM479.9 151.4 L492.9 151.4 L487.9 148.0 L475.3 147.9ZM505.8 151.4 L518.8 151.5 L513.2 148.0 L500.6 148.0ZM531.7 151.5 L544.7 151.5 L538.5 148.1 L525.8 148.0ZM557.7 151.5 L570.6 151.6 L563.8 148.1 L551.1 148.1ZM583.6 151.6 L596.6 151.6 L589.1 148.2 L576.4 148.2ZM609.6 151.7 L622.6 151.7 L614.5 148.3 L601.8 148.2ZM635.6 151.7 L648.6 151.8 L639.8 148.3 L627.1 148.3Z" fill="#c2c2c2"/>
<polygon points="-99.5,146.6 665.2,148.4 656.3,145.1 -90.3,143.4" fill="#ececec"/>
<path d="M-87.1 146.6 L-74.7 146.6 L-66.1 143.4 L-78.2 143.4ZM-62.3 146.7 L-50.0 146.7 L-41.9 143.5 L-54.0 143.4ZM-37.6 146.7 L-25.2 146.7 L-17.7 143.5 L-29.8 143.5ZM-12.7 146.8 L-0.3 146.8 L6.6 143.6 L-5.6 143.6ZM12.1 146.8 L24.5 146.9 L30.8 143.6 L18.7 143.6ZM36.9 146.9 L49.4 146.9 L55.1 143.7 L42.9 143.7ZM61.8 147.0 L74.2 147.0 L79.4 143.8 L67.2 143.7ZM86.7 147.0 L99.2 147.0 L103.7 143.8 L91.5 143.8ZM111.6 147.1 L124.1 147.1 L128.0 143.9 L115.9 143.8ZM136.6 147.1 L149.0 147.2 L152.4 143.9 L140.2 143.9ZM161.5 147.2 L174.0 147.2 L176.8 144.0 L164.6 144.0ZM186.5 147.2 L199.0 147.3 L201.2 144.0 L189.0 144.0ZM211.5 147.3 L224.0 147.3 L225.6 144.1 L213.4 144.1ZM236.5 147.4 L249.0 147.4 L250.0 144.1 L237.8 144.1ZM261.6 147.4 L274.1 147.5 L274.5 144.2 L262.2 144.2ZM286.6 147.5 L299.2 147.5 L299.0 144.3 L286.7 144.2ZM311.7 147.5 L324.3 147.6 L323.5 144.3 L311.2 144.3ZM336.8 147.6 L349.4 147.6 L348.0 144.4 L335.7 144.3ZM362.0 147.7 L374.5 147.7 L372.5 144.4 L360.2 144.4ZM387.1 147.7 L399.7 147.7 L397.1 144.5 L384.8 144.5ZM412.3 147.8 L424.9 147.8 L421.7 144.5 L409.4 144.5ZM437.5 147.8 L450.1 147.9 L446.3 144.6 L434.0 144.6ZM462.7 147.9 L475.3 147.9 L470.9 144.7 L458.6 144.6ZM487.9 148.0 L500.6 148.0 L495.5 144.7 L483.2 144.7ZM513.2 148.0 L525.8 148.0 L520.2 144.8 L507.9 144.7ZM538.5 148.1 L551.1 148.1 L544.9 144.8 L532.6 144.8ZM563.8 148.1 L576.4 148.2 L569.6 144.9 L557.3 144.9ZM589.1 148.2 L601.8 148.2 L594.3 144.9 L582.0 144.9ZM614.5 148.3 L627.1 148.3 L619.1 145.0 L606.7 145.0ZM639.8 148.3 L652.5 148.3 L643.9 145.1 L631.5 145.0Z" fill="#c2c2c2"/>
<polygon points="-90.3,143.4 668.7,145.1 659.8,142.0 -81.5,140.3" fill="#ececec"/>
<path d="M-90.3 143.4 L-78.2 143.4 L-69.7 140.3 L-81.5 140.3ZM-66.1 143.4 L-54.0 143.4 L-46.0 140.4 L-57.9 140.4ZM-41.9 143.5 L-29.8 143.5 L-22.4 140.4 L-34.2 140.4ZM-17.7 143.5 L-5.6 143.6 L1.3 140.5 L-10.6 140.5ZM6.6 143.6 L18.7 143.6 L25.0 140.5 L13.1 140.5ZM30.8 143.6 L42.9 143.7 L48.7 140.6 L36.8 140.6ZM55.1 143.7 L67.2 143.7 L72.4 140.7 L60.5 140.6ZM79.4 143.8 L91.5 143.8 L96.1 140.7 L84.3 140.7ZM103.7 143.8 L115.9 143.8 L119.9 140.8 L108.0 140.7ZM128.0 143.9 L140.2 143.9 L143.7 140.8 L131.8 140.8ZM152.4 143.9 L164.6 144.0 L167.5 140.9 L155.6 140.8ZM176.8 144.0 L189.0 144.0 L191.3 140.9 L179.4 140.9ZM201.2 144.0 L213.4 144.1 L215.2 141.0 L203.2 140.9ZM225.6 144.1 L237.8 144.1 L239.0 141.0 L227.1 141.0ZM250.0 144.1 L262.2 144.2 L262.9 141.1 L251.0 141.1ZM274.5 144.2 L286.7 144.2 L286.8 141.1 L274.9 141.1ZM299.0 144.3 L311.2 144.3 L310.7 141.2 L298.8 141.2ZM323.5 144.3 L335.7 144.3 L334.7 141.2 L322.7 141.2ZM348.0 144.4 L360.2 144.4 L358.6 141.3 L346.6 141.3ZM372.5 144.4 L384.8 144.5 L382.6 141.3 L370.6 141.3ZM397.1 144.5 L409.4 144.5 L406.6 141.4 L394.6 141.4ZM421.7 144.5 L434.0 144.6 L430.6 141.5 L418.6 141.4ZM446.3 144.6 L458.6 144.6 L454.7 141.5 L442.6 141.5ZM470.9 144.7 L483.2 144.7 L478.7 141.6 L466.7 141.5ZM495.5 144.7 L507.9 144.7 L502.8 141.6 L490.8 141.6ZM520.2 144.8 L532.6 144.8 L526.9 141.7 L514.9 141.6ZM544.9 144.8 L557.3 144.9 L551.0 141.7 L539.0 141.7ZM569.6 144.9 L582.0 144.9 L575.2 141.8 L563.1 141.8ZM594.3 144.9 L606.7 145.0 L599.3 141.8 L587.2 141.8ZM619.1 145.0 L631.5 145.0 L623.5 141.9 L611.4 141.9ZM643.9 145.1 L656.3 145.1 L647.7 141.9 L635.6 141.9Z" fill="#c2c2c2"/>
<polygon points="-93.3,140.3 671.9,142.0 663.2,139.0 -84.6,137.4" fill="#ececec"/>
<path d="M-93.3 140.3 L-81.5 140.3 L-73.1 137.4 L-84.6 137.4ZM-69.7 140.3 L-57.9 140.4 L-50.0 137.4 L-61.5 137.4ZM-46.0 140.4 L-34.2 140.4 L-26.9 137.5 L-38.4 137.5ZM-22.4 140.4 L-10.6 140.5 L-3.8 137.5 L-15.3 137.5ZM1.3 140.5 L13.1 140.5 L19.4 137.6 L7.8 137.6ZM25.0 140.5 L36.8 140.6 L42.6 137.6 L31.0 137.6ZM48.7 140.6 L60.5 140.6 L65.7 137.7 L54.1 137.7ZM72.4 140.7 L84.3 140.7 L88.9 137.7 L77.3 137.7ZM96.1 140.7 L108.0 140.7 L112.2 137.8 L100.5 137.8ZM119.9 140.8 L131.8 140.8 L135.4 137.8 L123.8 137.8ZM143.7 140.8 L155.6 140.8 L158.6 137.9 L147.0 137.9ZM167.5 140.9 L179.4 140.9 L181.9 137.9 L170.3 137.9ZM191.3 140.9 L203.2 140.9 L205.2 138.0 L193.6 138.0ZM215.2 141.0 L227.1 141.0 L228.5 138.0 L216.9 138.0ZM239.0 141.0 L251.0 141.1 L251.9 138.1 L240.2 138.1ZM262.9 141.1 L274.9 141.1 L275.2 138.1 L263.5 138.1ZM286.8 141.1 L298.8 141.2 L298.6 138.2 L286.9 138.2ZM310.7 141.2 L322.7 141.2 L322.0 138.2 L310.3 138.2ZM334.7 141.2 L346.6 141.3 L345.4 138.3 L333.7 138.3ZM358.6 141.3 L370.6 141.3 L368.8 138.4 L357.1 138.3ZM382.6 141.3 L394.6 141.4 L392.2 138.4 L380.5 138.4ZM406.6 141.4 L418.6 141.4 L415.7 138.5 L404.0 138.4ZM430.6 141.5 L442.6 141.5 L439.2 138.5 L427.4 138.5ZM454.7 141.5 L466.7 141.5 L462.7 138.6 L450.9 138.5ZM478.7 141.6 L490.8 141.6 L486.2 138.6 L474.4 138.6ZM502.8 141.6 L514.9 141.6 L509.7 138.7 L498.0 138.6ZM526.9 141.7 L539.0 141.7 L533.3 138.7 L521.5 138.7ZM551.0 141.7 L563.1 141.8 L556.9 138.8 L545.1 138.7ZM575.2 141.8 L587.2 141.8 L580.5 138.8 L568.7 138.8ZM599.3 141.8 L611.4 141.9 L604.1 138.9 L592.3 138.8ZM623.5 141.9 L635.6 141.9 L627.7 138.9 L615.9 138.9ZM647.7 141.9 L659.8 142.0 L651.4 139.0 L639.5 138.9Z" fill="#c2c2c2"/>
<polygon points="-96.1,137.3 663.2,139.0 654.9,136.1 -87.6,134.5" fill="#ececec"/>
<path d="M-96.1 137.3 L-84.6 137.4 L-76.3 134.6 L-87.6 134.5ZM-73.1 137.4 L-61.5 137.4 L-53.8 134.6 L-65.0 134.6ZM-50.0 137.4 L-38.4 137.5 L-31.2 134.7 L-42.5 134.6ZM-26.9 137.5 L-15.3 137.5 L-8.6 134.7 L-19.9 134.7ZM-3.8 137.5 L7.8 137.6 L14.1 134.8 L2.8 134.7ZM19.4 137.6 L31.0 137.6 L36.7 134.8 L25.4 134.8ZM42.6 137.6 L54.1 137.7 L59.4 134.9 L48.0 134.8ZM65.7 137.7 L77.3 137.7 L82.1 134.9 L70.7 134.9ZM88.9 137.7 L100.5 137.8 L104.8 135.0 L93.4 134.9ZM112.2 137.8 L123.8 137.8 L127.5 135.0 L116.1 135.0ZM135.4 137.8 L147.0 137.9 L150.2 135.1 L138.8 135.0ZM158.6 137.9 L170.3 137.9 L173.0 135.1 L161.6 135.1ZM181.9 137.9 L193.6 138.0 L195.7 135.2 L184.3 135.1ZM205.2 138.0 L216.9 138.0 L218.5 135.2 L207.1 135.2ZM228.5 138.0 L240.2 138.1 L241.3 135.2 L229.9 135.2ZM251.9 138.1 L263.5 138.1 L264.1 135.3 L252.7 135.3ZM275.2 138.1 L286.9 138.2 L287.0 135.3 L275.5 135.3ZM298.6 138.2 L310.3 138.2 L309.8 135.4 L298.4 135.4ZM322.0 138.2 L333.7 138.3 L332.7 135.4 L321.3 135.4ZM345.4 138.3 L357.1 138.3 L355.6 135.5 L344.2 135.5ZM368.8 138.4 L380.5 138.4 L378.5 135.5 L367.1 135.5ZM392.2 138.4 L404.0 138.4 L401.4 135.6 L390.0 135.6ZM415.7 138.5 L427.4 138.5 L424.4 135.6 L412.9 135.6ZM439.2 138.5 L450.9 138.5 L447.4 135.7 L435.9 135.7ZM462.7 138.6 L474.4 138.6 L470.3 135.7 L458.8 135.7ZM486.2 138.6 L498.0 138.6 L493.3 135.8 L481.8 135.8ZM509.7 138.7 L521.5 138.7 L516.4 135.8 L504.9 135.8ZM533.3 138.7 L545.1 138.7 L539.4 135.9 L527.9 135.9ZM556.9 138.8 L568.7 138.8 L562.5 135.9 L550.9 135.9ZM580.5 138.8 L592.3 138.8 L585.5 136.0 L574.0 136.0ZM604.1 138.9 L615.9 138.9 L608.6 136.0 L597.1 136.0ZM627.7 138.9 L639.5 138.9 L631.7 136.1 L620.2 136.1ZM651.4 139.0 L663.2 139.0 L654.9 136.1 L643.3 136.1Z" fill="#c2c2c2"/>
<polygon points="-98.9,134.5 666.4,136.2 658.2,133.4 -90.5,131.8" fill="#ececec"/>
<path d="M-98.9 134.5 L-87.6 134.5 L-79.4 131.9 L-90.5 131.8ZM-76.3 134.6 L-65.0 134.6 L-57.4 131.9 L-68.4 131.9ZM-53.8 134.6 L-42.5 134.6 L-35.3 132.0 L-46.3 131.9ZM-31.2 134.7 L-19.9 134.7 L-13.2 132.0 L-24.2 132.0ZM-8.6 134.7 L2.8 134.7 L9.0 132.1 L-2.1 132.0ZM14.1 134.8 L25.4 134.8 L31.1 132.1 L20.0 132.1ZM36.7 134.8 L48.0 134.8 L53.3 132.2 L42.2 132.1ZM59.4 134.9 L70.7 134.9 L75.5 132.2 L64.4 132.2ZM82.1 134.9 L93.4 134.9 L97.7 132.2 L86.6 132.2ZM104.8 135.0 L116.1 135.0 L119.9 132.3 L108.8 132.3ZM127.5 135.0 L138.8 135.0 L142.1 132.3 L131.0 132.3ZM150.2 135.1 L161.6 135.1 L164.4 132.4 L153.2 132.4ZM173.0 135.1 L184.3 135.1 L186.6 132.4 L175.5 132.4ZM195.7 135.2 L207.1 135.2 L208.9 132.5 L197.8 132.5ZM218.5 135.2 L229.9 135.2 L231.2 132.5 L220.1 132.5ZM241.3 135.2 L252.7 135.3 L253.5 132.6 L242.4 132.5ZM264.1 135.3 L275.5 135.3 L275.9 132.6 L264.7 132.6ZM287.0 135.3 L298.4 135.4 L298.2 132.7 L287.1 132.6ZM309.8 135.4 L321.3 135.4 L320.6 132.7 L309.4 132.7ZM332.7 135.4 L344.2 135.5 L343.0 132.8 L331.8 132.7ZM355.6 135.5 L367.1 135.5 L365.4 132.8 L354.2 132.8ZM378.5 135.5 L390.0 135.6 L387.8 132.9 L376.6 132.8ZM401.4 135.6 L412.9 135.6 L410.3 132.9 L399.0 132.9ZM424.4 135.6 L435.9 135.7 L432.7 132.9 L421.5 132.9ZM447.4 135.7 L458.8 135.7 L455.2 133.0 L443.9 133.0ZM470.3 135.7 L481.8 135.8 L477.7 133.0 L466.4 133.0ZM493.3 135.8 L504.9 135.8 L500.2 133.1 L488.9 133.1ZM516.4 135.8 L527.9 135.9 L522.7 133.1 L511.4 133.1ZM539.4 135.9 L550.9 135.9 L545.3 133.2 L534.0 133.2ZM562.5 135.9 L574.0 136.0 L567.8 133.2 L556.5 133.2ZM585.5 136.0 L597.1 136.0 L590.4 133.3 L579.1 133.3ZM608.6 136.0 L620.2 136.1 L613.0 133.3 L601.7 133.3ZM631.7 136.1 L643.3 136.1 L635.6 133.4 L624.3 133.3ZM654.9 136.1 L666.4 136.2 L658.2 133.4 L646.9 133.4Z" fill="#c2c2c2"/>
<polygon points="-90.5,131.8 669.6,133.4 661.4,130.8 -82.4,129.3" fill="#ececec"/>
<path d="M-79.4 131.9 L-68.4 131.9 L-60.8 129.3 L-71.6 129.3ZM-57.4 131.9 L-46.3 131.9 L-39.2 129.4 L-50.0 129.4ZM-35.3 132.0 L-24.2 132.0 L-17.6 129.4 L-28.4 129.4ZM-13.2 132.0 L-2.1 132.0 L4.1 129.5 L-6.7 129.4ZM9.0 132.1 L20.0 132.1 L25.8 129.5 L14.9 129.5ZM31.1 132.1 L42.2 132.1 L47.5 129.6 L36.6 129.5ZM53.3 132.2 L64.4 132.2 L69.2 129.6 L58.3 129.6ZM75.5 132.2 L86.6 132.2 L90.9 129.6 L80.0 129.6ZM97.7 132.2 L108.8 132.3 L112.6 129.7 L101.8 129.7ZM119.9 132.3 L131.0 132.3 L134.4 129.7 L123.5 129.7ZM142.1 132.3 L153.2 132.4 L156.2 129.8 L145.3 129.8ZM164.4 132.4 L175.5 132.4 L177.9 129.8 L167.0 129.8ZM186.6 132.4 L197.8 132.5 L199.7 129.9 L188.8 129.9ZM208.9 132.5 L220.1 132.5 L221.6 129.9 L210.7 129.9ZM231.2 132.5 L242.4 132.5 L243.4 130.0 L232.5 129.9ZM253.5 132.6 L264.7 132.6 L265.3 130.0 L254.3 130.0ZM275.9 132.6 L287.1 132.6 L287.1 130.1 L276.2 130.0ZM298.2 132.7 L309.4 132.7 L309.0 130.1 L298.1 130.1ZM320.6 132.7 L331.8 132.7 L330.9 130.1 L320.0 130.1ZM343.0 132.8 L354.2 132.8 L352.8 130.2 L341.9 130.2ZM365.4 132.8 L376.6 132.8 L374.8 130.2 L363.8 130.2ZM387.8 132.9 L399.0 132.9 L396.7 130.3 L385.7 130.3ZM410.3 132.9 L421.5 132.9 L418.7 130.3 L407.7 130.3ZM432.7 132.9 L443.9 133.0 L440.7 130.4 L429.7 130.3ZM455.2 133.0 L466.4 133.0 L462.7 130.4 L451.7 130.4ZM477.7 133.0 L488.9 133.1 L484.7 130.5 L473.7 130.4ZM500.2 133.1 L511.4 133.1 L506.7 130.5 L495.7 130.5ZM522.7 133.1 L534.0 133.2 L528.8 130.5 L517.8 130.5ZM545.3 133.2 L556.5 133.2 L550.8 130.6 L539.8 130.6ZM567.8 133.2 L579.1 133.3 L572.9 130.6 L561.9 130.6ZM590.4 133.3 L601.7 133.3 L595.0 130.7 L584.0 130.7ZM613.0 133.3 L624.3 133.3 L617.2 130.7 L606.1 130.7ZM635.6 133.4 L646.9 133.4 L639.3 130.8 L628.2 130.8ZM658.2 133.4 L669.6 133.4 L661.4 130.8 L650.4 130.8Z" fill="#c2c2c2"/>
<polygon points="-93.2,129.3 661.4,130.8 653.7,128.3 -85.3,126.8" fill="#ececec"/>
<path d="M-82.4 129.3 L-71.6 129.3 L-64.1 126.9 L-74.7 126.8ZM-60.8 129.3 L-50.0 129.4 L-43.0 126.9 L-53.5 126.9ZM-39.2 129.4 L-28.4 129.4 L-21.8 126.9 L-32.4 126.9ZM-17.6 129.4 L-6.7 129.4 L-0.6 127.0 L-11.2 127.0ZM4.1 129.5 L14.9 129.5 L20.6 127.0 L10.0 127.0ZM25.8 129.5 L36.6 129.5 L41.9 127.1 L31.3 127.1ZM47.5 129.6 L58.3 129.6 L63.1 127.1 L52.5 127.1ZM69.2 129.6 L80.0 129.6 L84.4 127.2 L73.8 127.1ZM90.9 129.6 L101.8 129.7 L105.7 127.2 L95.0 127.2ZM112.6 129.7 L123.5 129.7 L127.0 127.2 L116.3 127.2ZM134.4 129.7 L145.3 129.8 L148.3 127.3 L137.6 127.3ZM156.2 129.8 L167.0 129.8 L169.6 127.3 L158.9 127.3ZM177.9 129.8 L188.8 129.9 L191.0 127.4 L180.3 127.4ZM199.7 129.9 L210.7 129.9 L212.3 127.4 L201.6 127.4ZM221.6 129.9 L232.5 129.9 L233.7 127.5 L223.0 127.4ZM243.4 130.0 L254.3 130.0 L255.1 127.5 L244.4 127.5ZM265.3 130.0 L276.2 130.0 L276.5 127.5 L265.8 127.5ZM287.1 130.1 L298.1 130.1 L297.9 127.6 L287.2 127.6ZM309.0 130.1 L320.0 130.1 L319.3 127.6 L308.6 127.6ZM330.9 130.1 L341.9 130.2 L340.8 127.7 L330.1 127.7ZM352.8 130.2 L363.8 130.2 L362.3 127.7 L351.5 127.7ZM374.8 130.2 L385.7 130.3 L383.8 127.8 L373.0 127.7ZM396.7 130.3 L407.7 130.3 L405.3 127.8 L394.5 127.8ZM418.7 130.3 L429.7 130.3 L426.8 127.9 L416.0 127.8ZM440.7 130.4 L451.7 130.4 L448.3 127.9 L437.5 127.9ZM462.7 130.4 L473.7 130.4 L469.9 127.9 L459.1 127.9ZM484.7 130.5 L495.7 130.5 L491.4 128.0 L480.6 128.0ZM506.7 130.5 L517.8 130.5 L513.0 128.0 L502.2 128.0ZM528.8 130.5 L539.8 130.6 L534.6 128.1 L523.8 128.0ZM550.8 130.6 L561.9 130.6 L556.2 128.1 L545.4 128.1ZM572.9 130.6 L584.0 130.7 L577.8 128.2 L567.0 128.1ZM595.0 130.7 L606.1 130.7 L599.5 128.2 L588.7 128.2ZM617.2 130.7 L628.2 130.8 L621.1 128.2 L610.3 128.2ZM639.3 130.8 L650.4 130.8 L642.8 128.3 L632.0 128.3Z" fill="#c2c2c2"/>
<polygon points="-95.9,126.8 664.5,128.3 656.8,125.9 -88.0,124.5" fill="#ececec"/>
<path d="M-85.3 126.8 L-74.7 126.8 L-67.3 124.5 L-77.7 124.5ZM-64.1 126.9 L-53.5 126.9 L-46.6 124.5 L-56.9 124.5ZM-43.0 126.9 L-32.4 126.9 L-25.8 124.6 L-36.2 124.6ZM-21.8 126.9 L-11.2 127.0 L-5.1 124.6 L-15.4 124.6ZM-0.6 127.0 L10.0 127.0 L15.7 124.7 L5.3 124.6ZM20.6 127.0 L31.3 127.1 L36.5 124.7 L26.1 124.7ZM41.9 127.1 L52.5 127.1 L57.3 124.7 L46.9 124.7ZM63.1 127.1 L73.8 127.1 L78.2 124.8 L67.8 124.8ZM84.4 127.2 L95.0 127.2 L99.0 124.8 L88.6 124.8ZM105.7 127.2 L116.3 127.2 L119.9 124.9 L109.4 124.8ZM127.0 127.2 L137.6 127.3 L140.7 124.9 L130.3 124.9ZM148.3 127.3 L158.9 127.3 L161.6 124.9 L151.2 124.9ZM169.6 127.3 L180.3 127.4 L182.5 125.0 L172.1 125.0ZM191.0 127.4 L201.6 127.4 L203.4 125.0 L193.0 125.0ZM212.3 127.4 L223.0 127.4 L224.4 125.1 L213.9 125.0ZM233.7 127.5 L244.4 127.5 L245.3 125.1 L234.8 125.1ZM255.1 127.5 L265.8 127.5 L266.3 125.1 L255.8 125.1ZM276.5 127.5 L287.2 127.6 L287.3 125.2 L276.8 125.2ZM297.9 127.6 L308.6 127.6 L308.3 125.2 L297.8 125.2ZM319.3 127.6 L330.1 127.7 L329.3 125.3 L318.8 125.3ZM340.8 127.7 L351.5 127.7 L350.3 125.3 L339.8 125.3ZM362.3 127.7 L373.0 127.7 L371.3 125.4 L360.8 125.3ZM383.8 127.8 L394.5 127.8 L392.4 125.4 L381.9 125.4ZM405.3 127.8 L416.0 127.8 L413.4 125.4 L402.9 125.4ZM426.8 127.9 L437.5 127.9 L434.5 125.5 L424.0 125.5ZM448.3 127.9 L459.1 127.9 L455.6 125.5 L445.1 125.5ZM469.9 127.9 L480.6 128.0 L476.7 125.6 L466.2 125.5ZM491.4 128.0 L502.2 128.0 L497.9 125.6 L487.3 125.6ZM513.0 128.0 L523.8 128.0 L519.0 125.6 L508.4 125.6ZM534.6 128.1 L545.4 128.1 L540.2 125.7 L529.6 125.7ZM556.2 128.1 L567.0 128.1 L561.4 125.7 L550.8 125.7ZM577.8 128.2 L588.7 128.2 L582.6 125.8 L572.0 125.7ZM599.5 128.2 L610.3 128.2 L603.8 125.8 L593.2 125.8ZM621.1 128.2 L632.0 128.3 L625.0 125.9 L614.4 125.8ZM642.8 128.3 L653.7 128.3 L646.2 125.9 L635.6 125.9Z" fill="#c3c3c3"/>
<polygon points="-88.0,124.5 667.5,125.9 659.9,123.6 -80.5,122.2" fill="#ececec"/>
<path d="M-88.0 124.5 L-77.7 124.5 L-70.4 122.2 L-80.5 122.2ZM-67.3 124.5 L-56.9 124.5 L-50.0 122.3 L-60.2 122.2ZM-46.6 124.5 L-36.2 124.6 L-29.7 122.3 L-39.9 122.3ZM-25.8 124.6 L-15.4 124.6 L-9.4 122.3 L-19.5 122.3ZM-5.1 124.6 L5.3 124.6 L11.0 122.4 L0.8 122.4ZM15.7 124.7 L26.1 124.7 L31.4 122.4 L21.2 122.4ZM36.5 124.7 L46.9 124.7 L51.8 122.5 L41.6 122.4ZM57.3 124.7 L67.8 124.8 L72.2 122.5 L62.0 122.5ZM78.2 124.8 L88.6 124.8 L92.6 122.5 L82.4 122.5ZM99.0 124.8 L109.4 124.8 L113.0 122.6 L102.8 122.5ZM119.9 124.9 L130.3 124.9 L133.5 122.6 L123.3 122.6ZM140.7 124.9 L151.2 124.9 L154.0 122.6 L143.7 122.6ZM161.6 124.9 L172.1 125.0 L174.4 122.7 L164.2 122.7ZM182.5 125.0 L193.0 125.0 L194.9 122.7 L184.7 122.7ZM203.4 125.0 L213.9 125.0 L215.4 122.8 L205.2 122.7ZM224.4 125.1 L234.8 125.1 L236.0 122.8 L225.7 122.8ZM245.3 125.1 L255.8 125.1 L256.5 122.8 L246.2 122.8ZM266.3 125.1 L276.8 125.2 L277.0 122.9 L266.8 122.9ZM287.3 125.2 L297.8 125.2 L297.6 122.9 L287.3 122.9ZM308.3 125.2 L318.8 125.3 L318.2 123.0 L307.9 122.9ZM329.3 125.3 L339.8 125.3 L338.8 123.0 L328.5 123.0ZM350.3 125.3 L360.8 125.3 L359.4 123.0 L349.1 123.0ZM371.3 125.4 L381.9 125.4 L380.0 123.1 L369.7 123.1ZM392.4 125.4 L402.9 125.4 L400.7 123.1 L390.3 123.1ZM413.4 125.4 L424.0 125.5 L421.3 123.2 L411.0 123.1ZM434.5 125.5 L445.1 125.5 L442.0 123.2 L431.6 123.2ZM455.6 125.5 L466.2 125.5 L462.7 123.2 L452.3 123.2ZM476.7 125.6 L487.3 125.6 L483.4 123.3 L473.0 123.3ZM497.9 125.6 L508.4 125.6 L504.1 123.3 L493.7 123.3ZM519.0 125.6 L529.6 125.7 L524.8 123.4 L514.4 123.3ZM540.2 125.7 L550.8 125.7 L545.5 123.4 L535.2 123.4ZM561.4 125.7 L572.0 125.7 L566.3 123.4 L555.9 123.4ZM582.6 125.8 L593.2 125.8 L587.1 123.5 L576.7 123.5ZM603.8 125.8 L614.4 125.8 L607.9 123.5 L597.5 123.5ZM625.0 125.9 L635.6 125.9 L628.7 123.6 L618.3 123.5ZM646.2 125.9 L656.8 125.9 L649.5 123.6 L639.1 123.6Z" fill="#c3c3c3"/>
<polygon points="-90.7,122.2 659.9,123.6 652.6,121.4 -83.2,120.0" fill="#ececec"/>
<path d="M-90.7 122.2 L-80.5 122.2 L-73.3 120.0 L-83.2 120.0ZM-70.4 122.2 L-60.2 122.2 L-53.4 120.1 L-63.3 120.0ZM-50.0 122.3 L-39.9 122.3 L-33.4 120.1 L-43.4 120.1ZM-29.7 122.3 L-19.5 122.3 L-13.5 120.1 L-23.5 120.1ZM-9.4 122.3 L0.8 122.4 L6.5 120.2 L-3.5 120.2ZM11.0 122.4 L21.2 122.4 L26.5 120.2 L16.5 120.2ZM31.4 122.4 L41.6 122.4 L46.4 120.3 L36.4 120.2ZM51.8 122.5 L62.0 122.5 L66.4 120.3 L56.4 120.3ZM72.2 122.5 L82.4 122.5 L86.5 120.3 L76.5 120.3ZM92.6 122.5 L102.8 122.5 L106.5 120.4 L96.5 120.3ZM113.0 122.6 L123.3 122.6 L126.5 120.4 L116.5 120.4ZM133.5 122.6 L143.7 122.6 L146.6 120.4 L136.6 120.4ZM154.0 122.6 L164.2 122.7 L166.7 120.5 L156.6 120.5ZM174.4 122.7 L184.7 122.7 L186.8 120.5 L176.7 120.5ZM194.9 122.7 L205.2 122.7 L206.9 120.6 L196.8 120.5ZM215.4 122.8 L225.7 122.8 L227.0 120.6 L216.9 120.6ZM236.0 122.8 L246.2 122.8 L247.1 120.6 L237.0 120.6ZM256.5 122.8 L266.8 122.9 L267.2 120.7 L257.2 120.7ZM277.0 122.9 L287.3 122.9 L287.4 120.7 L277.3 120.7ZM297.6 122.9 L307.9 122.9 L307.6 120.7 L297.5 120.7ZM318.2 123.0 L328.5 123.0 L327.7 120.8 L317.7 120.8ZM338.8 123.0 L349.1 123.0 L347.9 120.8 L337.8 120.8ZM359.4 123.0 L369.7 123.1 L368.2 120.9 L358.0 120.8ZM380.0 123.1 L390.3 123.1 L388.4 120.9 L378.3 120.9ZM400.7 123.1 L411.0 123.1 L408.6 120.9 L398.5 120.9ZM421.3 123.2 L431.6 123.2 L428.9 121.0 L418.7 121.0ZM442.0 123.2 L452.3 123.2 L449.1 121.0 L439.0 121.0ZM462.7 123.2 L473.0 123.3 L469.4 121.1 L459.3 121.0ZM483.4 123.3 L493.7 123.3 L489.7 121.1 L479.6 121.1ZM504.1 123.3 L514.4 123.3 L510.0 121.1 L499.9 121.1ZM524.8 123.4 L535.2 123.4 L530.4 121.2 L520.2 121.1ZM545.5 123.4 L555.9 123.4 L550.7 121.2 L540.5 121.2ZM566.3 123.4 L576.7 123.5 L571.1 121.2 L560.9 121.2ZM587.1 123.5 L597.5 123.5 L591.4 121.3 L581.2 121.3ZM607.9 123.5 L618.3 123.5 L611.8 121.3 L601.6 121.3ZM628.7 123.6 L639.1 123.6 L632.2 121.4 L622.0 121.3ZM649.5 123.6 L659.9 123.6 L652.6 121.4 L642.4 121.4Z" fill="#c3c3c3"/>
<polygon points="-93.2,120.0 662.8,121.4 655.6,119.3 -85.9,117.9" fill="#ececec"/>
<path d="M-93.2 120.0 L-83.2 120.0 L-76.1 117.9 L-85.9 117.9ZM-73.3 120.0 L-63.3 120.0 L-56.6 118.0 L-66.3 117.9ZM-53.4 120.1 L-43.4 120.1 L-37.0 118.0 L-46.8 118.0ZM-33.4 120.1 L-23.5 120.1 L-17.5 118.0 L-27.2 118.0ZM-13.5 120.1 L-3.5 120.2 L2.1 118.1 L-7.7 118.1ZM6.5 120.2 L16.5 120.2 L21.7 118.1 L11.9 118.1ZM26.5 120.2 L36.4 120.2 L41.3 118.1 L31.5 118.1ZM46.4 120.3 L56.4 120.3 L60.9 118.2 L51.1 118.2ZM66.4 120.3 L76.5 120.3 L80.6 118.2 L70.7 118.2ZM86.5 120.3 L96.5 120.3 L100.2 118.3 L90.4 118.2ZM106.5 120.4 L116.5 120.4 L119.8 118.3 L110.0 118.3ZM126.5 120.4 L136.6 120.4 L139.5 118.3 L129.7 118.3ZM146.6 120.4 L156.6 120.5 L159.2 118.4 L149.4 118.3ZM166.7 120.5 L176.7 120.5 L178.9 118.4 L169.0 118.4ZM186.8 120.5 L196.8 120.5 L198.6 118.4 L188.7 118.4ZM206.9 120.6 L216.9 120.6 L218.3 118.5 L208.5 118.5ZM227.0 120.6 L237.0 120.6 L238.1 118.5 L228.2 118.5ZM247.1 120.6 L257.2 120.7 L257.8 118.5 L247.9 118.5ZM267.2 120.7 L277.3 120.7 L277.6 118.6 L267.7 118.6ZM287.4 120.7 L297.5 120.7 L297.3 118.6 L287.5 118.6ZM307.6 120.7 L317.7 120.8 L317.1 118.7 L307.2 118.6ZM327.7 120.8 L337.8 120.8 L336.9 118.7 L327.0 118.7ZM347.9 120.8 L358.0 120.8 L356.8 118.7 L346.8 118.7ZM368.2 120.9 L378.3 120.9 L376.6 118.8 L366.7 118.7ZM388.4 120.9 L398.5 120.9 L396.4 118.8 L386.5 118.8ZM408.6 120.9 L418.7 121.0 L416.3 118.8 L406.3 118.8ZM428.9 121.0 L439.0 121.0 L436.1 118.9 L426.2 118.9ZM449.1 121.0 L459.3 121.0 L456.0 118.9 L446.1 118.9ZM469.4 121.1 L479.6 121.1 L475.9 118.9 L466.0 118.9ZM489.7 121.1 L499.9 121.1 L495.8 119.0 L485.9 119.0ZM510.0 121.1 L520.2 121.1 L515.8 119.0 L505.8 119.0ZM530.4 121.2 L540.5 121.2 L535.7 119.1 L525.7 119.0ZM550.7 121.2 L560.9 121.2 L555.7 119.1 L545.7 119.1ZM571.1 121.2 L581.2 121.3 L575.6 119.1 L565.6 119.1ZM591.4 121.3 L601.6 121.3 L595.6 119.2 L585.6 119.2ZM611.8 121.3 L622.0 121.3 L615.6 119.2 L605.6 119.2ZM632.2 121.4 L642.4 121.4 L635.6 119.2 L625.6 119.2ZM652.6 121.4 L662.8 121.4 L655.6 119.3 L645.6 119.3Z" fill="#c3c3c3"/>
<polygon points="-95.6,117.9 665.6,119.3 658.5,117.2 -88.4,115.9" fill="#ececec"/>
<path d="M-95.6 117.9 L-85.9 117.9 L-78.8 115.9 L-88.4 115.9ZM-76.1 117.9 L-66.3 117.9 L-59.6 115.9 L-69.2 115.9ZM-56.6 118.0 L-46.8 118.0 L-40.5 116.0 L-50.1 116.0ZM-37.0 118.0 L-27.2 118.0 L-21.3 116.0 L-30.9 116.0ZM-17.5 118.0 L-7.7 118.1 L-2.1 116.0 L-11.7 116.0ZM2.1 118.1 L11.9 118.1 L17.1 116.1 L7.5 116.1ZM21.7 118.1 L31.5 118.1 L36.4 116.1 L26.8 116.1ZM41.3 118.1 L51.1 118.2 L55.6 116.1 L46.0 116.1ZM60.9 118.2 L70.7 118.2 L74.9 116.2 L65.2 116.2ZM80.6 118.2 L90.4 118.2 L94.1 116.2 L84.5 116.2ZM100.2 118.3 L110.0 118.3 L113.4 116.2 L103.8 116.2ZM119.8 118.3 L129.7 118.3 L132.7 116.3 L123.1 116.3ZM139.5 118.3 L149.4 118.3 L152.0 116.3 L142.4 116.3ZM159.2 118.4 L169.0 118.4 L171.3 116.4 L161.7 116.3ZM178.9 118.4 L188.7 118.4 L190.7 116.4 L181.0 116.4ZM198.6 118.4 L208.5 118.5 L210.0 116.4 L200.3 116.4ZM218.3 118.5 L228.2 118.5 L229.4 116.5 L219.7 116.4ZM238.1 118.5 L247.9 118.5 L248.7 116.5 L239.0 116.5ZM257.8 118.5 L267.7 118.6 L268.1 116.5 L258.4 116.5ZM277.6 118.6 L287.5 118.6 L287.5 116.6 L277.8 116.5ZM297.3 118.6 L307.2 118.6 L306.9 116.6 L297.2 116.6ZM317.1 118.7 L327.0 118.7 L326.3 116.6 L316.6 116.6ZM336.9 118.7 L346.8 118.7 L345.8 116.7 L336.1 116.7ZM356.8 118.7 L366.7 118.7 L365.2 116.7 L355.5 116.7ZM376.6 118.8 L386.5 118.8 L384.7 116.7 L375.0 116.7ZM396.4 118.8 L406.3 118.8 L404.2 116.8 L394.4 116.8ZM416.3 118.8 L426.2 118.9 L423.6 116.8 L413.9 116.8ZM436.1 118.9 L446.1 118.9 L443.1 116.8 L433.4 116.8ZM456.0 118.9 L466.0 118.9 L462.7 116.9 L452.9 116.9ZM475.9 118.9 L485.9 119.0 L482.2 116.9 L472.4 116.9ZM495.8 119.0 L505.8 119.0 L501.7 117.0 L492.0 116.9ZM515.8 119.0 L525.7 119.0 L521.3 117.0 L511.5 117.0ZM535.7 119.1 L545.7 119.1 L540.8 117.0 L531.1 117.0ZM555.7 119.1 L565.6 119.1 L560.4 117.1 L550.6 117.0ZM575.6 119.1 L585.6 119.2 L580.0 117.1 L570.2 117.1ZM595.6 119.2 L605.6 119.2 L599.6 117.1 L589.8 117.1ZM615.6 119.2 L625.6 119.2 L619.2 117.2 L609.4 117.2ZM635.6 119.2 L645.6 119.3 L638.9 117.2 L629.1 117.2ZM655.6 119.3 L665.6 119.3 L658.5 117.2 L648.7 117.2Z" fill="#c3c3c3"/>
<polygon points="-88.4,115.9 668.3,117.3 661.3,115.3 -81.4,114.0" fill="#ececec"/>
<path d="M-78.8 115.9 L-69.2 115.9 L-62.6 114.0 L-72.0 114.0ZM-59.6 115.9 L-50.1 116.0 L-43.8 114.0 L-53.2 114.0ZM-40.5 116.0 L-30.9 116.0 L-25.0 114.1 L-34.4 114.0ZM-21.3 116.0 L-11.7 116.0 L-6.1 114.1 L-15.5 114.1ZM-2.1 116.0 L7.5 116.1 L12.7 114.1 L3.3 114.1ZM17.1 116.1 L26.8 116.1 L31.6 114.2 L22.2 114.1ZM36.4 116.1 L46.0 116.1 L50.5 114.2 L41.1 114.2ZM55.6 116.1 L65.2 116.2 L69.4 114.2 L59.9 114.2ZM74.9 116.2 L84.5 116.2 L88.3 114.3 L78.8 114.2ZM94.1 116.2 L103.8 116.2 L107.2 114.3 L97.8 114.3ZM113.4 116.2 L123.1 116.3 L126.2 114.3 L116.7 114.3ZM132.7 116.3 L142.4 116.3 L145.1 114.4 L135.6 114.3ZM152.0 116.3 L161.7 116.3 L164.1 114.4 L154.6 114.4ZM171.3 116.4 L181.0 116.4 L183.0 114.4 L173.5 114.4ZM190.7 116.4 L200.3 116.4 L202.0 114.5 L192.5 114.4ZM210.0 116.4 L219.7 116.4 L221.0 114.5 L211.5 114.5ZM229.4 116.5 L239.0 116.5 L240.0 114.5 L230.5 114.5ZM248.7 116.5 L258.4 116.5 L259.0 114.6 L249.5 114.5ZM268.1 116.5 L277.8 116.5 L278.0 114.6 L268.5 114.6ZM287.5 116.6 L297.2 116.6 L297.1 114.6 L287.6 114.6ZM306.9 116.6 L316.6 116.6 L316.1 114.7 L306.6 114.6ZM326.3 116.6 L336.1 116.7 L335.2 114.7 L325.7 114.7ZM345.8 116.7 L355.5 116.7 L354.3 114.7 L344.8 114.7ZM365.2 116.7 L375.0 116.7 L373.4 114.8 L363.8 114.7ZM384.7 116.7 L394.4 116.8 L392.5 114.8 L382.9 114.8ZM404.2 116.8 L413.9 116.8 L411.6 114.8 L402.1 114.8ZM423.6 116.8 L433.4 116.8 L430.7 114.9 L421.2 114.8ZM443.1 116.8 L452.9 116.9 L449.9 114.9 L440.3 114.9ZM462.7 116.9 L472.4 116.9 L469.0 114.9 L459.5 114.9ZM482.2 116.9 L492.0 116.9 L488.2 115.0 L478.6 115.0ZM501.7 117.0 L511.5 117.0 L507.4 115.0 L497.8 115.0ZM521.3 117.0 L531.1 117.0 L526.6 115.0 L517.0 115.0ZM540.8 117.0 L550.6 117.0 L545.8 115.1 L536.2 115.1ZM560.4 117.1 L570.2 117.1 L565.0 115.1 L555.4 115.1ZM580.0 117.1 L589.8 117.1 L584.2 115.1 L574.6 115.1ZM599.6 117.1 L609.4 117.2 L603.5 115.2 L593.9 115.2ZM619.2 117.2 L629.1 117.2 L622.7 115.2 L613.1 115.2ZM638.9 117.2 L648.7 117.2 L642.0 115.2 L632.4 115.2ZM658.5 117.2 L668.3 117.3 L661.3 115.3 L651.7 115.3Z" fill="#c3c3c3"/>
<polygon points="-90.8,113.9 661.3,115.3 654.5,113.4 -83.9,112.1" fill="#ececec"/>
<path d="M-81.4 114.0 L-72.0 114.0 L-65.5 112.1 L-74.7 112.1ZM-62.6 114.0 L-53.2 114.0 L-47.0 112.1 L-56.2 112.1ZM-43.8 114.0 L-34.4 114.0 L-28.5 112.2 L-37.7 112.2ZM-25.0 114.1 L-15.5 114.1 L-10.0 112.2 L-19.3 112.2ZM-6.1 114.1 L3.3 114.1 L8.5 112.2 L-0.7 112.2ZM12.7 114.1 L22.2 114.1 L27.0 112.3 L17.8 112.3ZM31.6 114.2 L41.1 114.2 L45.6 112.3 L36.3 112.3ZM50.5 114.2 L59.9 114.2 L64.1 112.3 L54.8 112.3ZM69.4 114.2 L78.8 114.2 L82.7 112.4 L73.4 112.3ZM88.3 114.3 L97.8 114.3 L101.3 112.4 L92.0 112.4ZM107.2 114.3 L116.7 114.3 L119.8 112.4 L110.5 112.4ZM126.2 114.3 L135.6 114.3 L138.4 112.5 L129.1 112.4ZM145.1 114.4 L154.6 114.4 L157.0 112.5 L147.7 112.5ZM164.1 114.4 L173.5 114.4 L175.7 112.5 L166.3 112.5ZM183.0 114.4 L192.5 114.4 L194.3 112.6 L185.0 112.5ZM202.0 114.5 L211.5 114.5 L212.9 112.6 L203.6 112.6ZM221.0 114.5 L230.5 114.5 L231.6 112.6 L222.3 112.6ZM240.0 114.5 L249.5 114.5 L250.3 112.7 L240.9 112.6ZM259.0 114.6 L268.5 114.6 L268.9 112.7 L259.6 112.7ZM278.0 114.6 L287.6 114.6 L287.6 112.7 L278.3 112.7ZM297.1 114.6 L306.6 114.6 L306.3 112.8 L297.0 112.7ZM316.1 114.7 L325.7 114.7 L325.0 112.8 L315.7 112.8ZM335.2 114.7 L344.8 114.7 L343.8 112.8 L334.4 112.8ZM354.3 114.7 L363.8 114.7 L362.5 112.9 L353.1 112.8ZM373.4 114.8 L382.9 114.8 L381.3 112.9 L371.9 112.9ZM392.5 114.8 L402.1 114.8 L400.0 112.9 L390.6 112.9ZM411.6 114.8 L421.2 114.8 L418.8 113.0 L409.4 112.9ZM430.7 114.9 L440.3 114.9 L437.6 113.0 L428.2 113.0ZM449.9 114.9 L459.5 114.9 L456.4 113.0 L447.0 113.0ZM469.0 114.9 L478.6 115.0 L475.2 113.1 L465.8 113.0ZM488.2 115.0 L497.8 115.0 L494.0 113.1 L484.6 113.1ZM507.4 115.0 L517.0 115.0 L512.9 113.1 L503.4 113.1ZM526.6 115.0 L536.2 115.1 L531.7 113.2 L522.3 113.1ZM545.8 115.1 L555.4 115.1 L550.6 113.2 L541.1 113.2ZM565.0 115.1 L574.6 115.1 L569.4 113.2 L560.0 113.2ZM584.2 115.1 L593.9 115.2 L588.3 113.3 L578.9 113.2ZM603.5 115.2 L613.1 115.2 L607.2 113.3 L597.8 113.3ZM622.7 115.2 L632.4 115.2 L626.1 113.3 L616.7 113.3ZM642.0 115.2 L651.7 115.3 L645.1 113.4 L635.6 113.3Z" fill="#c3c3c3"/>
<polygon points="-93.2,112.1 664.0,113.4 657.3,111.5 -86.4,110.3" fill="#ececec"/>
<path d="M-83.9 112.1 L-74.7 112.1 L-68.2 110.3 L-77.3 110.3ZM-65.5 112.1 L-56.2 112.1 L-50.1 110.3 L-59.1 110.3ZM-47.0 112.1 L-37.7 112.2 L-31.9 110.4 L-41.0 110.3ZM-28.5 112.2 L-19.3 112.2 L-13.8 110.4 L-22.8 110.4ZM-10.0 112.2 L-0.7 112.2 L4.4 110.4 L-4.7 110.4ZM8.5 112.2 L17.8 112.3 L22.6 110.4 L13.5 110.4ZM27.0 112.3 L36.3 112.3 L40.8 110.5 L31.7 110.5ZM45.6 112.3 L54.8 112.3 L59.0 110.5 L49.9 110.5ZM64.1 112.3 L73.4 112.3 L77.3 110.5 L68.1 110.5ZM82.7 112.4 L92.0 112.4 L95.5 110.6 L86.4 110.6ZM101.3 112.4 L110.5 112.4 L113.7 110.6 L104.6 110.6ZM119.8 112.4 L129.1 112.4 L132.0 110.6 L122.9 110.6ZM138.4 112.5 L147.7 112.5 L150.3 110.7 L141.1 110.7ZM157.0 112.5 L166.3 112.5 L168.6 110.7 L159.4 110.7ZM175.7 112.5 L185.0 112.5 L186.9 110.7 L177.7 110.7ZM194.3 112.6 L203.6 112.6 L205.2 110.8 L196.0 110.7ZM212.9 112.6 L222.3 112.6 L223.5 110.8 L214.3 110.8ZM231.6 112.6 L240.9 112.6 L241.8 110.8 L232.6 110.8ZM250.3 112.7 L259.6 112.7 L260.1 110.9 L251.0 110.8ZM268.9 112.7 L278.3 112.7 L278.5 110.9 L269.3 110.9ZM287.6 112.7 L297.0 112.7 L296.9 110.9 L287.7 110.9ZM306.3 112.8 L315.7 112.8 L315.2 111.0 L306.0 110.9ZM325.0 112.8 L334.4 112.8 L333.6 111.0 L324.4 111.0ZM343.8 112.8 L353.1 112.8 L352.0 111.0 L342.8 111.0ZM362.5 112.9 L371.9 112.9 L370.4 111.0 L361.2 111.0ZM381.3 112.9 L390.6 112.9 L388.9 111.1 L379.6 111.1ZM400.0 112.9 L409.4 112.9 L407.3 111.1 L398.1 111.1ZM418.8 113.0 L428.2 113.0 L425.7 111.1 L416.5 111.1ZM437.6 113.0 L447.0 113.0 L444.2 111.2 L435.0 111.2ZM456.4 113.0 L465.8 113.0 L462.7 111.2 L453.4 111.2ZM475.2 113.1 L484.6 113.1 L481.1 111.2 L471.9 111.2ZM494.0 113.1 L503.4 113.1 L499.6 111.3 L490.4 111.3ZM512.9 113.1 L522.3 113.1 L518.1 111.3 L508.9 111.3ZM531.7 113.2 L541.1 113.2 L536.6 111.3 L527.4 111.3ZM550.6 113.2 L560.0 113.2 L555.2 111.4 L545.9 111.4ZM569.4 113.2 L578.9 113.2 L573.7 111.4 L564.4 111.4ZM588.3 113.3 L597.8 113.3 L592.3 111.4 L583.0 111.4ZM607.2 113.3 L616.7 113.3 L610.8 111.5 L601.5 111.4ZM626.1 113.3 L635.6 113.3 L629.4 111.5 L620.1 111.5ZM645.1 113.4 L654.5 113.4 L648.0 111.5 L638.7 111.5Z" fill="#c3c3c3"/>
<polygon points="-95.4,110.2 666.6,111.6 659.9,109.8 -88.7,108.5" fill="#ececec"/>
<path d="M-86.4 110.3 L-77.3 110.3 L-70.9 108.5 L-79.8 108.5ZM-68.2 110.3 L-59.1 110.3 L-53.1 108.6 L-62.0 108.6ZM-50.1 110.3 L-41.0 110.3 L-35.2 108.6 L-44.1 108.6ZM-31.9 110.4 L-22.8 110.4 L-17.4 108.6 L-26.3 108.6ZM-13.8 110.4 L-4.7 110.4 L0.5 108.7 L-8.4 108.7ZM4.4 110.4 L13.5 110.4 L18.4 108.7 L9.4 108.7ZM22.6 110.4 L31.7 110.5 L36.2 108.7 L27.3 108.7ZM40.8 110.5 L49.9 110.5 L54.1 108.8 L45.2 108.7ZM59.0 110.5 L68.1 110.5 L72.0 108.8 L63.1 108.8ZM77.3 110.5 L86.4 110.6 L89.9 108.8 L81.0 108.8ZM95.5 110.6 L104.6 110.6 L107.9 108.8 L98.9 108.8ZM113.7 110.6 L122.9 110.6 L125.8 108.9 L116.8 108.9ZM132.0 110.6 L141.1 110.7 L143.8 108.9 L134.8 108.9ZM150.3 110.7 L159.4 110.7 L161.7 108.9 L152.7 108.9ZM168.6 110.7 L177.7 110.7 L179.7 109.0 L170.7 109.0ZM186.9 110.7 L196.0 110.7 L197.7 109.0 L188.7 109.0ZM205.2 110.8 L214.3 110.8 L215.6 109.0 L206.7 109.0ZM223.5 110.8 L232.6 110.8 L233.7 109.1 L224.6 109.0ZM241.8 110.8 L251.0 110.8 L251.7 109.1 L242.7 109.1ZM260.1 110.9 L269.3 110.9 L269.7 109.1 L260.7 109.1ZM278.5 110.9 L287.7 110.9 L287.7 109.2 L278.7 109.1ZM296.9 110.9 L306.0 110.9 L305.8 109.2 L296.7 109.2ZM315.2 111.0 L324.4 111.0 L323.8 109.2 L314.8 109.2ZM333.6 111.0 L342.8 111.0 L341.9 109.2 L332.9 109.2ZM352.0 111.0 L361.2 111.0 L360.0 109.3 L350.9 109.3ZM370.4 111.0 L379.6 111.1 L378.1 109.3 L369.0 109.3ZM388.9 111.1 L398.1 111.1 L396.2 109.3 L387.1 109.3ZM407.3 111.1 L416.5 111.1 L414.3 109.4 L405.2 109.4ZM425.7 111.1 L435.0 111.2 L432.4 109.4 L423.4 109.4ZM444.2 111.2 L453.4 111.2 L450.6 109.4 L441.5 109.4ZM462.7 111.2 L471.9 111.2 L468.7 109.5 L459.6 109.4ZM481.1 111.2 L490.4 111.3 L486.9 109.5 L477.8 109.5ZM499.6 111.3 L508.9 111.3 L505.0 109.5 L495.9 109.5ZM518.1 111.3 L527.4 111.3 L523.2 109.6 L514.1 109.5ZM536.6 111.3 L545.9 111.4 L541.4 109.6 L532.3 109.6ZM555.2 111.4 L564.4 111.4 L559.6 109.6 L550.5 109.6ZM573.7 111.4 L583.0 111.4 L577.8 109.6 L568.7 109.6ZM592.3 111.4 L601.5 111.4 L596.1 109.7 L586.9 109.7ZM610.8 111.5 L620.1 111.5 L614.3 109.7 L605.2 109.7ZM629.4 111.5 L638.7 111.5 L632.6 109.7 L623.4 109.7ZM648.0 111.5 L657.3 111.5 L650.8 109.8 L641.7 109.8Z" fill="#c3c3c3"/>
<polygon points="-88.7,108.5 659.9,109.8 653.5,108.1 -82.2,106.8" fill="#ececec"/>
<path d="M-88.7 108.5 L-79.8 108.5 L-73.4 106.9 L-82.2 106.8ZM-70.9 108.5 L-62.0 108.6 L-55.9 106.9 L-64.7 106.9ZM-53.1 108.6 L-44.1 108.6 L-38.4 106.9 L-47.2 106.9ZM-35.2 108.6 L-26.3 108.6 L-20.9 106.9 L-29.6 106.9ZM-17.4 108.6 L-8.4 108.7 L-3.3 107.0 L-12.1 107.0ZM0.5 108.7 L9.4 108.7 L14.2 107.0 L5.5 107.0ZM18.4 108.7 L27.3 108.7 L31.8 107.0 L23.0 107.0ZM36.2 108.7 L45.2 108.7 L49.4 107.1 L40.6 107.0ZM54.1 108.8 L63.1 108.8 L67.0 107.1 L58.2 107.1ZM72.0 108.8 L81.0 108.8 L84.6 107.1 L75.8 107.1ZM89.9 108.8 L98.9 108.8 L102.2 107.1 L93.4 107.1ZM107.9 108.8 L116.8 108.9 L119.8 107.2 L111.0 107.2ZM125.8 108.9 L134.8 108.9 L137.5 107.2 L128.6 107.2ZM143.8 108.9 L152.7 108.9 L155.1 107.2 L146.3 107.2ZM161.7 108.9 L170.7 109.0 L172.8 107.3 L163.9 107.3ZM179.7 109.0 L188.7 109.0 L190.4 107.3 L181.6 107.3ZM197.7 109.0 L206.7 109.0 L208.1 107.3 L199.3 107.3ZM215.6 109.0 L224.6 109.0 L225.8 107.4 L216.9 107.3ZM233.7 109.1 L242.7 109.1 L243.5 107.4 L234.6 107.4ZM251.7 109.1 L260.7 109.1 L261.2 107.4 L252.3 107.4ZM269.7 109.1 L278.7 109.1 L278.9 107.4 L270.0 107.4ZM287.7 109.2 L296.7 109.2 L296.6 107.5 L287.8 107.5ZM305.8 109.2 L314.8 109.2 L314.4 107.5 L305.5 107.5ZM323.8 109.2 L332.9 109.2 L332.1 107.5 L323.3 107.5ZM341.9 109.2 L350.9 109.3 L349.9 107.6 L341.0 107.5ZM360.0 109.3 L369.0 109.3 L367.7 107.6 L358.8 107.6ZM378.1 109.3 L387.1 109.3 L385.5 107.6 L376.6 107.6ZM396.2 109.3 L405.2 109.4 L403.3 107.6 L394.4 107.6ZM414.3 109.4 L423.4 109.4 L421.1 107.7 L412.2 107.7ZM432.4 109.4 L441.5 109.4 L438.9 107.7 L430.0 107.7ZM450.6 109.4 L459.6 109.4 L456.7 107.7 L447.8 107.7ZM468.7 109.5 L477.8 109.5 L474.5 107.8 L465.6 107.8ZM486.9 109.5 L495.9 109.5 L492.4 107.8 L483.5 107.8ZM505.0 109.5 L514.1 109.5 L510.3 107.8 L501.3 107.8ZM523.2 109.6 L532.3 109.6 L528.1 107.9 L519.2 107.8ZM541.4 109.6 L550.5 109.6 L546.0 107.9 L537.1 107.9ZM559.6 109.6 L568.7 109.6 L563.9 107.9 L555.0 107.9ZM577.8 109.6 L586.9 109.7 L581.8 107.9 L572.9 107.9ZM596.1 109.7 L605.2 109.7 L599.7 108.0 L590.8 108.0ZM614.3 109.7 L623.4 109.7 L617.7 108.0 L608.7 108.0ZM632.6 109.7 L641.7 109.8 L635.6 108.0 L626.6 108.0ZM650.8 109.8 L659.9 109.8 L653.5 108.1 L644.6 108.1Z" fill="#c3c3c3"/>
<polygon points="-90.9,106.8 662.5,108.1 656.2,106.4 -84.5,105.2" fill="#ececec"/>
<path d="M-90.9 106.8 L-82.2 106.8 L-75.9 105.2 L-84.5 105.2ZM-73.4 106.9 L-64.7 106.9 L-58.7 105.3 L-67.3 105.2ZM-55.9 106.9 L-47.2 106.9 L-41.5 105.3 L-50.1 105.3ZM-38.4 106.9 L-29.6 106.9 L-24.2 105.3 L-32.9 105.3ZM-20.9 106.9 L-12.1 107.0 L-7.0 105.3 L-15.6 105.3ZM-3.3 107.0 L5.5 107.0 L10.3 105.4 L1.6 105.4ZM14.2 107.0 L23.0 107.0 L27.5 105.4 L18.9 105.4ZM31.8 107.0 L40.6 107.0 L44.8 105.4 L36.2 105.4ZM49.4 107.1 L58.2 107.1 L62.1 105.5 L53.5 105.4ZM67.0 107.1 L75.8 107.1 L79.4 105.5 L70.8 105.5ZM84.6 107.1 L93.4 107.1 L96.7 105.5 L88.1 105.5ZM102.2 107.1 L111.0 107.2 L114.0 105.5 L105.4 105.5ZM119.8 107.2 L128.6 107.2 L131.4 105.6 L122.7 105.6ZM137.5 107.2 L146.3 107.2 L148.7 105.6 L140.0 105.6ZM155.1 107.2 L163.9 107.3 L166.1 105.6 L157.4 105.6ZM172.8 107.3 L181.6 107.3 L183.4 105.7 L174.7 105.6ZM190.4 107.3 L199.3 107.3 L200.8 105.7 L192.1 105.7ZM208.1 107.3 L216.9 107.3 L218.2 105.7 L209.5 105.7ZM225.8 107.4 L234.6 107.4 L235.6 105.7 L226.9 105.7ZM243.5 107.4 L252.3 107.4 L253.0 105.8 L244.3 105.8ZM261.2 107.4 L270.0 107.4 L270.4 105.8 L261.7 105.8ZM278.9 107.4 L287.8 107.5 L287.8 105.8 L279.1 105.8ZM296.6 107.5 L305.5 107.5 L305.3 105.8 L296.5 105.8ZM314.4 107.5 L323.3 107.5 L322.7 105.9 L314.0 105.9ZM332.1 107.5 L341.0 107.5 L340.2 105.9 L331.4 105.9ZM349.9 107.6 L358.8 107.6 L357.6 105.9 L348.9 105.9ZM367.7 107.6 L376.6 107.6 L375.1 106.0 L366.4 105.9ZM385.5 107.6 L394.4 107.6 L392.6 106.0 L383.8 106.0ZM403.3 107.6 L412.2 107.7 L410.1 106.0 L401.3 106.0ZM421.1 107.7 L430.0 107.7 L427.6 106.0 L418.8 106.0ZM438.9 107.7 L447.8 107.7 L445.1 106.1 L436.4 106.1ZM456.7 107.7 L465.6 107.8 L462.6 106.1 L453.9 106.1ZM474.5 107.8 L483.5 107.8 L480.2 106.1 L471.4 106.1ZM492.4 107.8 L501.3 107.8 L497.7 106.2 L489.0 106.2ZM510.3 107.8 L519.2 107.8 L515.3 106.2 L506.5 106.2ZM528.1 107.9 L537.1 107.9 L532.9 106.2 L524.1 106.2ZM546.0 107.9 L555.0 107.9 L550.5 106.3 L541.7 106.2ZM563.9 107.9 L572.9 107.9 L568.1 106.3 L559.3 106.3ZM581.8 107.9 L590.8 108.0 L585.7 106.3 L576.9 106.3ZM599.7 108.0 L608.7 108.0 L603.3 106.3 L594.5 106.3ZM617.7 108.0 L626.6 108.0 L620.9 106.4 L612.1 106.4ZM635.6 108.0 L644.6 108.1 L638.5 106.4 L629.7 106.4ZM653.5 108.1 L662.5 108.1 L656.2 106.4 L647.4 106.4Z" fill="#c3c3c3"/>
<polygon points="-93.1,105.2 665.0,106.4 658.7,104.8 -86.8,103.6" fill="#ececec"/>
<path d="M-93.1 105.2 L-84.5 105.2 L-78.3 103.7 L-86.8 103.6ZM-75.9 105.2 L-67.3 105.2 L-61.4 103.7 L-69.9 103.7ZM-58.7 105.3 L-50.1 105.3 L-44.4 103.7 L-52.9 103.7ZM-41.5 105.3 L-32.9 105.3 L-27.5 103.7 L-36.0 103.7ZM-24.2 105.3 L-15.6 105.3 L-10.5 103.8 L-19.0 103.7ZM-7.0 105.3 L1.6 105.4 L6.4 103.8 L-2.1 103.8ZM10.3 105.4 L18.9 105.4 L23.4 103.8 L14.9 103.8ZM27.5 105.4 L36.2 105.4 L40.4 103.8 L31.9 103.8ZM44.8 105.4 L53.5 105.4 L57.4 103.9 L48.9 103.9ZM62.1 105.5 L70.8 105.5 L74.4 103.9 L65.9 103.9ZM79.4 105.5 L88.1 105.5 L91.4 103.9 L82.9 103.9ZM96.7 105.5 L105.4 105.5 L108.5 104.0 L99.9 103.9ZM114.0 105.5 L122.7 105.6 L125.5 104.0 L117.0 104.0ZM131.4 105.6 L140.0 105.6 L142.5 104.0 L134.0 104.0ZM148.7 105.6 L157.4 105.6 L159.6 104.0 L151.1 104.0ZM166.1 105.6 L174.7 105.6 L176.7 104.1 L168.1 104.0ZM183.4 105.7 L192.1 105.7 L193.8 104.1 L185.2 104.1ZM200.8 105.7 L209.5 105.7 L210.8 104.1 L202.3 104.1ZM218.2 105.7 L226.9 105.7 L227.9 104.1 L219.4 104.1ZM235.6 105.7 L244.3 105.8 L245.0 104.2 L236.5 104.2ZM253.0 105.8 L261.7 105.8 L262.2 104.2 L253.6 104.2ZM270.4 105.8 L279.1 105.8 L279.3 104.2 L270.7 104.2ZM287.8 105.8 L296.5 105.8 L296.4 104.3 L287.9 104.2ZM305.3 105.8 L314.0 105.9 L313.6 104.3 L305.0 104.3ZM322.7 105.9 L331.4 105.9 L330.7 104.3 L322.2 104.3ZM340.2 105.9 L348.9 105.9 L347.9 104.3 L339.3 104.3ZM357.6 105.9 L366.4 105.9 L365.1 104.4 L356.5 104.3ZM375.1 106.0 L383.8 106.0 L382.3 104.4 L373.7 104.4ZM392.6 106.0 L401.3 106.0 L399.5 104.4 L390.9 104.4ZM410.1 106.0 L418.8 106.0 L416.7 104.4 L408.1 104.4ZM427.6 106.0 L436.4 106.1 L433.9 104.5 L425.3 104.5ZM445.1 106.1 L453.9 106.1 L451.2 104.5 L442.5 104.5ZM462.6 106.1 L471.4 106.1 L468.4 104.5 L459.8 104.5ZM480.2 106.1 L489.0 106.2 L485.6 104.6 L477.0 104.5ZM497.7 106.2 L506.5 106.2 L502.9 104.6 L494.3 104.6ZM515.3 106.2 L524.1 106.2 L520.2 104.6 L511.5 104.6ZM532.9 106.2 L541.7 106.2 L537.5 104.6 L528.8 104.6ZM550.5 106.3 L559.3 106.3 L554.8 104.7 L546.1 104.7ZM568.1 106.3 L576.9 106.3 L572.1 104.7 L563.4 104.7ZM585.7 106.3 L594.5 106.3 L589.4 104.7 L580.7 104.7ZM603.3 106.3 L612.1 106.4 L606.7 104.8 L598.0 104.7ZM620.9 106.4 L629.7 106.4 L624.0 104.8 L615.4 104.8ZM638.5 106.4 L647.4 106.4 L641.4 104.8 L632.7 104.8ZM656.2 106.4 L665.0 106.4 L658.7 104.8 L650.1 104.8Z" fill="#c3c3c3"/>
<polygon points="-86.8,103.6 658.7,104.8 652.7,103.3 -80.6,102.1" fill="#ececec"/>
<path d="M-78.3 103.7 L-69.9 103.7 L-64.0 102.2 L-72.3 102.1ZM-61.4 103.7 L-52.9 103.7 L-47.3 102.2 L-55.7 102.2ZM-44.4 103.7 L-36.0 103.7 L-30.7 102.2 L-39.0 102.2ZM-27.5 103.7 L-19.0 103.7 L-14.0 102.2 L-22.3 102.2ZM-10.5 103.8 L-2.1 103.8 L2.7 102.3 L-5.6 102.2ZM6.4 103.8 L14.9 103.8 L19.4 102.3 L11.1 102.3ZM23.4 103.8 L31.9 103.8 L36.1 102.3 L27.8 102.3ZM40.4 103.8 L48.9 103.9 L52.8 102.3 L44.5 102.3ZM57.4 103.9 L65.9 103.9 L69.6 102.4 L61.2 102.4ZM74.4 103.9 L82.9 103.9 L86.3 102.4 L77.9 102.4ZM91.4 103.9 L99.9 103.9 L103.1 102.4 L94.7 102.4ZM108.5 104.0 L117.0 104.0 L119.8 102.4 L111.4 102.4ZM125.5 104.0 L134.0 104.0 L136.6 102.5 L128.2 102.5ZM142.5 104.0 L151.1 104.0 L153.4 102.5 L145.0 102.5ZM159.6 104.0 L168.1 104.0 L170.1 102.5 L161.7 102.5ZM176.7 104.1 L185.2 104.1 L186.9 102.5 L178.5 102.5ZM193.8 104.1 L202.3 104.1 L203.7 102.6 L195.3 102.6ZM210.8 104.1 L219.4 104.1 L220.6 102.6 L212.1 102.6ZM227.9 104.1 L236.5 104.2 L237.4 102.6 L229.0 102.6ZM245.0 104.2 L253.6 104.2 L254.2 102.7 L245.8 102.6ZM262.2 104.2 L270.7 104.2 L271.1 102.7 L262.6 102.7ZM279.3 104.2 L287.9 104.2 L287.9 102.7 L279.5 102.7ZM296.4 104.3 L305.0 104.3 L304.8 102.7 L296.3 102.7ZM313.6 104.3 L322.2 104.3 L321.6 102.8 L313.2 102.7ZM330.7 104.3 L339.3 104.3 L338.5 102.8 L330.1 102.8ZM347.9 104.3 L356.5 104.3 L355.4 102.8 L347.0 102.8ZM365.1 104.4 L373.7 104.4 L372.3 102.8 L363.9 102.8ZM382.3 104.4 L390.9 104.4 L389.2 102.9 L380.8 102.9ZM399.5 104.4 L408.1 104.4 L406.2 102.9 L397.7 102.9ZM416.7 104.4 L425.3 104.5 L423.1 102.9 L414.6 102.9ZM433.9 104.5 L442.5 104.5 L440.0 102.9 L431.6 102.9ZM451.2 104.5 L459.8 104.5 L457.0 103.0 L448.5 103.0ZM468.4 104.5 L477.0 104.5 L474.0 103.0 L465.5 103.0ZM485.6 104.6 L494.3 104.6 L490.9 103.0 L482.4 103.0ZM502.9 104.6 L511.5 104.6 L507.9 103.1 L499.4 103.0ZM520.2 104.6 L528.8 104.6 L524.9 103.1 L516.4 103.1ZM537.5 104.6 L546.1 104.7 L541.9 103.1 L533.4 103.1ZM554.8 104.7 L563.4 104.7 L558.9 103.1 L550.4 103.1ZM572.1 104.7 L580.7 104.7 L575.9 103.2 L567.4 103.2ZM589.4 104.7 L598.0 104.7 L593.0 103.2 L584.5 103.2ZM606.7 104.8 L615.4 104.8 L610.0 103.2 L601.5 103.2ZM624.0 104.8 L632.7 104.8 L627.1 103.2 L618.5 103.2ZM641.4 104.8 L650.1 104.8 L644.1 103.3 L635.6 103.3Z" fill="#c3c3c3"/>
<polygon points="-89.0,102.1 661.2,103.3 655.2,101.8 -82.9,100.7" fill="#ececec"/>
<path d="M-80.6 102.1 L-72.3 102.1 L-66.5 100.7 L-74.7 100.7ZM-64.0 102.2 L-55.7 102.2 L-50.1 100.7 L-58.3 100.7ZM-47.3 102.2 L-39.0 102.2 L-33.7 100.7 L-41.9 100.7ZM-30.7 102.2 L-22.3 102.2 L-17.3 100.8 L-25.5 100.7ZM-14.0 102.2 L-5.6 102.2 L-0.9 100.8 L-9.1 100.8ZM2.7 102.3 L11.1 102.3 L15.5 100.8 L7.3 100.8ZM19.4 102.3 L27.8 102.3 L32.0 100.8 L23.8 100.8ZM36.1 102.3 L44.5 102.3 L48.4 100.9 L40.2 100.8ZM52.8 102.3 L61.2 102.4 L64.9 100.9 L56.7 100.9ZM69.6 102.4 L77.9 102.4 L81.4 100.9 L73.1 100.9ZM86.3 102.4 L94.7 102.4 L97.8 100.9 L89.6 100.9ZM103.1 102.4 L111.4 102.4 L114.3 101.0 L106.1 100.9ZM119.8 102.4 L128.2 102.5 L130.8 101.0 L122.6 101.0ZM136.6 102.5 L145.0 102.5 L147.3 101.0 L139.1 101.0ZM153.4 102.5 L161.7 102.5 L163.8 101.0 L155.6 101.0ZM170.1 102.5 L178.5 102.5 L180.3 101.1 L172.1 101.0ZM186.9 102.5 L195.3 102.6 L196.9 101.1 L188.6 101.1ZM203.7 102.6 L212.1 102.6 L213.4 101.1 L205.1 101.1ZM220.6 102.6 L229.0 102.6 L230.0 101.1 L221.7 101.1ZM237.4 102.6 L245.8 102.6 L246.5 101.2 L238.2 101.2ZM254.2 102.7 L262.6 102.7 L263.1 101.2 L254.8 101.2ZM271.1 102.7 L279.5 102.7 L279.7 101.2 L271.4 101.2ZM287.9 102.7 L296.3 102.7 L296.2 101.2 L288.0 101.2ZM304.8 102.7 L313.2 102.7 L312.8 101.3 L304.5 101.3ZM321.6 102.8 L330.1 102.8 L329.5 101.3 L321.1 101.3ZM338.5 102.8 L347.0 102.8 L346.1 101.3 L337.8 101.3ZM355.4 102.8 L363.9 102.8 L362.7 101.3 L354.4 101.3ZM372.3 102.8 L380.8 102.9 L379.3 101.4 L371.0 101.4ZM389.2 102.9 L397.7 102.9 L396.0 101.4 L387.6 101.4ZM406.2 102.9 L414.6 102.9 L412.6 101.4 L404.3 101.4ZM423.1 102.9 L431.6 102.9 L429.3 101.4 L421.0 101.4ZM440.0 102.9 L448.5 103.0 L446.0 101.5 L437.6 101.5ZM457.0 103.0 L465.5 103.0 L462.6 101.5 L454.3 101.5ZM474.0 103.0 L482.4 103.0 L479.3 101.5 L471.0 101.5ZM490.9 103.0 L499.4 103.0 L496.0 101.6 L487.7 101.5ZM507.9 103.1 L516.4 103.1 L512.8 101.6 L504.4 101.6ZM524.9 103.1 L533.4 103.1 L529.5 101.6 L521.1 101.6ZM541.9 103.1 L550.4 103.1 L546.2 101.6 L537.8 101.6ZM558.9 103.1 L567.4 103.2 L562.9 101.7 L554.6 101.6ZM575.9 103.2 L584.5 103.2 L579.7 101.7 L571.3 101.7ZM593.0 103.2 L601.5 103.2 L596.4 101.7 L588.1 101.7ZM610.0 103.2 L618.5 103.2 L613.2 101.7 L604.8 101.7ZM627.1 103.2 L635.6 103.3 L630.0 101.8 L621.6 101.7ZM644.1 103.3 L652.7 103.3 L646.8 101.8 L638.4 101.8Z" fill="#c3c3c3"/>
<polygon points="-91.1,100.6 663.6,101.8 657.6,100.4 -85.0,99.2" fill="#ececec"/>
<path d="M-82.9 100.7 L-74.7 100.7 L-68.9 99.2 L-77.0 99.2ZM-66.5 100.7 L-58.3 100.7 L-52.8 99.3 L-60.9 99.3ZM-50.1 100.7 L-41.9 100.7 L-36.7 99.3 L-44.7 99.3ZM-33.7 100.7 L-25.5 100.7 L-20.5 99.3 L-28.6 99.3ZM-17.3 100.8 L-9.1 100.8 L-4.4 99.3 L-12.4 99.3ZM-0.9 100.8 L7.3 100.8 L11.8 99.4 L3.7 99.4ZM15.5 100.8 L23.8 100.8 L28.0 99.4 L19.9 99.4ZM32.0 100.8 L40.2 100.8 L44.2 99.4 L36.1 99.4ZM48.4 100.9 L56.7 100.9 L60.4 99.4 L52.3 99.4ZM64.9 100.9 L73.1 100.9 L76.6 99.5 L68.5 99.5ZM81.4 100.9 L89.6 100.9 L92.8 99.5 L84.7 99.5ZM97.8 100.9 L106.1 100.9 L109.0 99.5 L100.9 99.5ZM114.3 101.0 L122.6 101.0 L125.2 99.5 L117.1 99.5ZM130.8 101.0 L139.1 101.0 L141.4 99.6 L133.3 99.6ZM147.3 101.0 L155.6 101.0 L157.7 99.6 L149.6 99.6ZM163.8 101.0 L172.1 101.0 L174.0 99.6 L165.8 99.6ZM180.3 101.1 L188.6 101.1 L190.2 99.6 L182.1 99.6ZM196.9 101.1 L205.1 101.1 L206.5 99.7 L198.4 99.7ZM213.4 101.1 L221.7 101.1 L222.8 99.7 L214.6 99.7ZM230.0 101.1 L238.2 101.2 L239.1 99.7 L230.9 99.7ZM246.5 101.2 L254.8 101.2 L255.4 99.7 L247.2 99.7ZM263.1 101.2 L271.4 101.2 L271.7 99.8 L263.5 99.8ZM279.7 101.2 L288.0 101.2 L288.0 99.8 L279.8 99.8ZM296.2 101.2 L304.5 101.3 L304.3 99.8 L296.2 99.8ZM312.8 101.3 L321.1 101.3 L320.7 99.8 L312.5 99.8ZM329.5 101.3 L337.8 101.3 L337.0 99.9 L328.8 99.9ZM346.1 101.3 L354.4 101.3 L353.4 99.9 L345.2 99.9ZM362.7 101.3 L371.0 101.4 L369.7 99.9 L361.5 99.9ZM379.3 101.4 L387.6 101.4 L386.1 99.9 L377.9 99.9ZM396.0 101.4 L404.3 101.4 L402.5 100.0 L394.3 100.0ZM412.6 101.4 L421.0 101.4 L418.9 100.0 L410.7 100.0ZM429.3 101.4 L437.6 101.5 L435.3 100.0 L427.1 100.0ZM446.0 101.5 L454.3 101.5 L451.7 100.0 L443.5 100.0ZM462.6 101.5 L471.0 101.5 L468.1 100.1 L459.9 100.1ZM479.3 101.5 L487.7 101.5 L484.5 100.1 L476.3 100.1ZM496.0 101.6 L504.4 101.6 L501.0 100.1 L492.8 100.1ZM512.8 101.6 L521.1 101.6 L517.4 100.1 L509.2 100.1ZM529.5 101.6 L537.8 101.6 L533.9 100.2 L525.7 100.2ZM546.2 101.6 L554.6 101.6 L550.4 100.2 L542.1 100.2ZM562.9 101.7 L571.3 101.7 L566.8 100.2 L558.6 100.2ZM579.7 101.7 L588.1 101.7 L583.3 100.2 L575.1 100.2ZM596.4 101.7 L604.8 101.7 L599.8 100.3 L591.6 100.3ZM613.2 101.7 L621.6 101.7 L616.3 100.3 L608.1 100.3ZM630.0 101.8 L638.4 101.8 L632.8 100.3 L624.6 100.3ZM646.8 101.8 L655.2 101.8 L649.4 100.3 L641.1 100.3Z" fill="#c3c3c3"/>
<polygon points="-93.1,99.2 665.9,100.4 660.0,99.0 -87.2,97.8" fill="#ececec"/>
<path d="M-85.0 99.2 L-77.0 99.2 L-71.3 97.9 L-79.2 97.9ZM-68.9 99.2 L-60.9 99.3 L-55.4 97.9 L-63.3 97.9ZM-52.8 99.3 L-44.7 99.3 L-39.5 97.9 L-47.5 97.9ZM-36.7 99.3 L-28.6 99.3 L-23.6 97.9 L-31.6 97.9ZM-20.5 99.3 L-12.4 99.3 L-7.7 98.0 L-15.7 97.9ZM-4.4 99.3 L3.7 99.4 L8.2 98.0 L0.2 98.0ZM11.8 99.4 L19.9 99.4 L24.1 98.0 L16.1 98.0ZM28.0 99.4 L36.1 99.4 L40.0 98.0 L32.1 98.0ZM44.2 99.4 L52.3 99.4 L56.0 98.1 L48.0 98.0ZM60.4 99.4 L68.5 99.5 L71.9 98.1 L63.9 98.1ZM76.6 99.5 L84.7 99.5 L87.9 98.1 L79.9 98.1ZM92.8 99.5 L100.9 99.5 L103.8 98.1 L95.8 98.1ZM109.0 99.5 L117.1 99.5 L119.8 98.2 L111.8 98.1ZM125.2 99.5 L133.3 99.6 L135.8 98.2 L127.8 98.2ZM141.4 99.6 L149.6 99.6 L151.8 98.2 L143.8 98.2ZM157.7 99.6 L165.8 99.6 L167.8 98.2 L159.8 98.2ZM174.0 99.6 L182.1 99.6 L183.8 98.2 L175.8 98.2ZM190.2 99.6 L198.4 99.7 L199.8 98.3 L191.8 98.3ZM206.5 99.7 L214.6 99.7 L215.8 98.3 L207.8 98.3ZM222.8 99.7 L230.9 99.7 L231.8 98.3 L223.8 98.3ZM239.1 99.7 L247.2 99.7 L247.9 98.3 L239.9 98.3ZM255.4 99.7 L263.5 99.8 L263.9 98.4 L255.9 98.4ZM271.7 99.8 L279.8 99.8 L280.0 98.4 L272.0 98.4ZM288.0 99.8 L296.2 99.8 L296.1 98.4 L288.0 98.4ZM304.3 99.8 L312.5 99.8 L312.1 98.4 L304.1 98.4ZM320.7 99.8 L328.8 99.9 L328.2 98.5 L320.2 98.5ZM337.0 99.9 L345.2 99.9 L344.3 98.5 L336.3 98.5ZM353.4 99.9 L361.5 99.9 L360.4 98.5 L352.4 98.5ZM369.7 99.9 L377.9 99.9 L376.6 98.5 L368.5 98.5ZM386.1 99.9 L394.3 100.0 L392.7 98.6 L384.6 98.6ZM402.5 100.0 L410.7 100.0 L408.8 98.6 L400.7 98.6ZM418.9 100.0 L427.1 100.0 L424.9 98.6 L416.9 98.6ZM435.3 100.0 L443.5 100.0 L441.1 98.6 L433.0 98.6ZM451.7 100.0 L459.9 100.1 L457.3 98.7 L449.2 98.6ZM468.1 100.1 L476.3 100.1 L473.4 98.7 L465.3 98.7ZM484.5 100.1 L492.8 100.1 L489.6 98.7 L481.5 98.7ZM501.0 100.1 L509.2 100.1 L505.8 98.7 L497.7 98.7ZM517.4 100.1 L525.7 100.2 L522.0 98.8 L513.9 98.7ZM533.9 100.2 L542.1 100.2 L538.2 98.8 L530.1 98.8ZM550.4 100.2 L558.6 100.2 L554.4 98.8 L546.3 98.8ZM566.8 100.2 L575.1 100.2 L570.6 98.8 L562.5 98.8ZM583.3 100.2 L591.6 100.3 L586.8 98.9 L578.7 98.8ZM599.8 100.3 L608.1 100.3 L603.1 98.9 L595.0 98.9ZM616.3 100.3 L624.6 100.3 L619.3 98.9 L611.2 98.9ZM632.8 100.3 L641.1 100.3 L635.6 98.9 L627.5 98.9ZM649.4 100.3 L657.6 100.4 L651.9 99.0 L643.7 98.9Z" fill="#c3c3c3"/>
<polygon points="-87.2,97.8 660.0,99.0 654.3,97.6 -81.4,96.5" fill="#ececec"/>
<path d="M-87.2 97.8 L-79.2 97.9 L-73.6 96.5 L-81.4 96.5ZM-71.3 97.9 L-63.3 97.9 L-57.9 96.5 L-65.8 96.5ZM-55.4 97.9 L-47.5 97.9 L-42.3 96.6 L-50.1 96.6ZM-39.5 97.9 L-31.6 97.9 L-26.7 96.6 L-34.5 96.6ZM-23.6 97.9 L-15.7 97.9 L-11.0 96.6 L-18.8 96.6ZM-7.7 98.0 L0.2 98.0 L4.7 96.6 L-3.2 96.6ZM8.2 98.0 L16.1 98.0 L20.3 96.7 L12.5 96.7ZM24.1 98.0 L32.1 98.0 L36.0 96.7 L28.2 96.7ZM40.0 98.0 L48.0 98.0 L51.7 96.7 L43.9 96.7ZM56.0 98.1 L63.9 98.1 L67.4 96.7 L59.6 96.7ZM71.9 98.1 L79.9 98.1 L83.1 96.8 L75.3 96.7ZM87.9 98.1 L95.8 98.1 L98.8 96.8 L91.0 96.8ZM103.8 98.1 L111.8 98.1 L114.6 96.8 L106.7 96.8ZM119.8 98.2 L127.8 98.2 L130.3 96.8 L122.4 96.8ZM135.8 98.2 L143.8 98.2 L146.0 96.8 L138.2 96.8ZM151.8 98.2 L159.8 98.2 L161.8 96.9 L153.9 96.9ZM167.8 98.2 L175.8 98.2 L177.5 96.9 L169.7 96.9ZM183.8 98.2 L191.8 98.3 L193.3 96.9 L185.4 96.9ZM199.8 98.3 L207.8 98.3 L209.1 96.9 L201.2 96.9ZM215.8 98.3 L223.8 98.3 L224.9 97.0 L217.0 97.0ZM231.8 98.3 L239.9 98.3 L240.6 97.0 L232.7 97.0ZM247.9 98.3 L255.9 98.4 L256.4 97.0 L248.5 97.0ZM263.9 98.4 L272.0 98.4 L272.3 97.0 L264.4 97.0ZM280.0 98.4 L288.0 98.4 L288.1 97.1 L280.2 97.0ZM296.1 98.4 L304.1 98.4 L303.9 97.1 L296.0 97.1ZM312.1 98.4 L320.2 98.5 L319.7 97.1 L311.8 97.1ZM328.2 98.5 L336.3 98.5 L335.6 97.1 L327.7 97.1ZM344.3 98.5 L352.4 98.5 L351.4 97.2 L343.5 97.1ZM360.4 98.5 L368.5 98.5 L367.3 97.2 L359.4 97.2ZM376.6 98.5 L384.6 98.6 L383.2 97.2 L375.2 97.2ZM392.7 98.6 L400.7 98.6 L399.0 97.2 L391.1 97.2ZM408.8 98.6 L416.9 98.6 L414.9 97.2 L407.0 97.2ZM424.9 98.6 L433.0 98.6 L430.8 97.3 L422.9 97.3ZM441.1 98.6 L449.2 98.6 L446.7 97.3 L438.8 97.3ZM457.3 98.7 L465.3 98.7 L462.6 97.3 L454.7 97.3ZM473.4 98.7 L481.5 98.7 L478.6 97.3 L470.6 97.3ZM489.6 98.7 L497.7 98.7 L494.5 97.4 L486.5 97.4ZM505.8 98.7 L513.9 98.7 L510.4 97.4 L502.5 97.4ZM522.0 98.8 L530.1 98.8 L526.4 97.4 L518.4 97.4ZM538.2 98.8 L546.3 98.8 L542.3 97.4 L534.4 97.4ZM554.4 98.8 L562.5 98.8 L558.3 97.5 L550.3 97.4ZM570.6 98.8 L578.7 98.8 L574.3 97.5 L566.3 97.5ZM586.8 98.9 L595.0 98.9 L590.3 97.5 L582.3 97.5ZM603.1 98.9 L611.2 98.9 L606.3 97.5 L598.3 97.5ZM619.3 98.9 L627.5 98.9 L622.3 97.6 L614.2 97.5ZM635.6 98.9 L643.7 98.9 L638.3 97.6 L630.3 97.6ZM651.9 99.0 L660.0 99.0 L654.3 97.6 L646.3 97.6Z" fill="#c4c4c4"/>
<polygon points="-89.2,96.5 662.3,97.6 656.6,96.3 -83.5,95.2" fill="#ececec"/>
<path d="M-89.2 96.5 L-81.4 96.5 L-75.8 95.2 L-83.5 95.2ZM-73.6 96.5 L-65.8 96.5 L-60.4 95.2 L-68.1 95.2ZM-57.9 96.5 L-50.1 96.6 L-45.0 95.3 L-52.7 95.3ZM-42.3 96.6 L-34.5 96.6 L-29.6 95.3 L-37.3 95.3ZM-26.7 96.6 L-18.8 96.6 L-14.2 95.3 L-21.9 95.3ZM-11.0 96.6 L-3.2 96.6 L1.3 95.3 L-6.5 95.3ZM4.7 96.6 L12.5 96.7 L16.7 95.4 L9.0 95.3ZM20.3 96.7 L28.2 96.7 L32.1 95.4 L24.4 95.4ZM36.0 96.7 L43.9 96.7 L47.6 95.4 L39.9 95.4ZM51.7 96.7 L59.6 96.7 L63.0 95.4 L55.3 95.4ZM67.4 96.7 L75.3 96.7 L78.5 95.4 L70.8 95.4ZM83.1 96.8 L91.0 96.8 L94.0 95.5 L86.2 95.5ZM98.8 96.8 L106.7 96.8 L109.5 95.5 L101.7 95.5ZM114.6 96.8 L122.4 96.8 L125.0 95.5 L117.2 95.5ZM130.3 96.8 L138.2 96.8 L140.5 95.5 L132.7 95.5ZM146.0 96.8 L153.9 96.9 L156.0 95.6 L148.2 95.5ZM161.8 96.9 L169.7 96.9 L171.5 95.6 L163.7 95.6ZM177.5 96.9 L185.4 96.9 L187.0 95.6 L179.2 95.6ZM193.3 96.9 L201.2 96.9 L202.5 95.6 L194.8 95.6ZM209.1 96.9 L217.0 97.0 L218.1 95.7 L210.3 95.6ZM224.9 97.0 L232.7 97.0 L233.6 95.7 L225.8 95.7ZM240.6 97.0 L248.5 97.0 L249.2 95.7 L241.4 95.7ZM256.4 97.0 L264.4 97.0 L264.7 95.7 L257.0 95.7ZM272.3 97.0 L280.2 97.0 L280.3 95.7 L272.5 95.7ZM288.1 97.1 L296.0 97.1 L295.9 95.8 L288.1 95.8ZM303.9 97.1 L311.8 97.1 L311.5 95.8 L303.7 95.8ZM319.7 97.1 L327.7 97.1 L327.1 95.8 L319.3 95.8ZM335.6 97.1 L343.5 97.1 L342.7 95.8 L334.9 95.8ZM351.4 97.2 L359.4 97.2 L358.3 95.9 L350.5 95.8ZM367.3 97.2 L375.2 97.2 L373.9 95.9 L366.1 95.9ZM383.2 97.2 L391.1 97.2 L389.6 95.9 L381.8 95.9ZM399.0 97.2 L407.0 97.2 L405.2 95.9 L397.4 95.9ZM414.9 97.2 L422.9 97.3 L420.9 95.9 L413.0 95.9ZM430.8 97.3 L438.8 97.3 L436.5 96.0 L428.7 96.0ZM446.7 97.3 L454.7 97.3 L452.2 96.0 L444.4 96.0ZM462.6 97.3 L470.6 97.3 L467.9 96.0 L460.0 96.0ZM478.6 97.3 L486.5 97.4 L483.5 96.0 L475.7 96.0ZM494.5 97.4 L502.5 97.4 L499.2 96.1 L491.4 96.1ZM510.4 97.4 L518.4 97.4 L514.9 96.1 L507.1 96.1ZM526.4 97.4 L534.4 97.4 L530.6 96.1 L522.8 96.1ZM542.3 97.4 L550.3 97.4 L546.4 96.1 L538.5 96.1ZM558.3 97.5 L566.3 97.5 L562.1 96.2 L554.2 96.1ZM574.3 97.5 L582.3 97.5 L577.8 96.2 L570.0 96.2ZM590.3 97.5 L598.3 97.5 L593.6 96.2 L585.7 96.2ZM606.3 97.5 L614.2 97.5 L609.3 96.2 L601.4 96.2ZM622.3 97.6 L630.3 97.6 L625.1 96.2 L617.2 96.2ZM638.3 97.6 L646.3 97.6 L640.8 96.3 L633.0 96.3ZM654.3 97.6 L662.3 97.6 L656.6 96.3 L648.7 96.3Z" fill="#c4c4c4"/>
<polygon points="-91.2,95.2 664.5,96.3 658.9,95.0 -85.5,93.9" fill="#ececec"/>
<path d="M-91.2 95.2 L-83.5 95.2 L-77.9 94.0 L-85.5 93.9ZM-75.8 95.2 L-68.1 95.2 L-62.8 94.0 L-70.4 94.0ZM-60.4 95.2 L-52.7 95.3 L-47.6 94.0 L-55.2 94.0ZM-45.0 95.3 L-37.3 95.3 L-32.4 94.0 L-40.0 94.0ZM-29.6 95.3 L-21.9 95.3 L-17.2 94.0 L-24.8 94.0ZM-14.2 95.3 L-6.5 95.3 L-2.0 94.1 L-9.6 94.1ZM1.3 95.3 L9.0 95.3 L13.2 94.1 L5.6 94.1ZM16.7 95.4 L24.4 95.4 L28.4 94.1 L20.8 94.1ZM32.1 95.4 L39.9 95.4 L43.6 94.1 L36.0 94.1ZM47.6 95.4 L55.3 95.4 L58.8 94.2 L51.2 94.1ZM63.0 95.4 L70.8 95.4 L74.0 94.2 L66.4 94.2ZM78.5 95.4 L86.2 95.5 L89.3 94.2 L81.7 94.2ZM94.0 95.5 L101.7 95.5 L104.5 94.2 L96.9 94.2ZM109.5 95.5 L117.2 95.5 L119.8 94.2 L112.2 94.2ZM125.0 95.5 L132.7 95.5 L135.1 94.3 L127.4 94.3ZM140.5 95.5 L148.2 95.5 L150.3 94.3 L142.7 94.3ZM156.0 95.6 L163.7 95.6 L165.6 94.3 L158.0 94.3ZM171.5 95.6 L179.2 95.6 L180.9 94.3 L173.3 94.3ZM187.0 95.6 L194.8 95.6 L196.2 94.4 L188.5 94.3ZM202.5 95.6 L210.3 95.6 L211.5 94.4 L203.8 94.4ZM218.1 95.7 L225.8 95.7 L226.8 94.4 L219.2 94.4ZM233.6 95.7 L241.4 95.7 L242.1 94.4 L234.5 94.4ZM249.2 95.7 L257.0 95.7 L257.5 94.4 L249.8 94.4ZM264.7 95.7 L272.5 95.7 L272.8 94.5 L265.1 94.5ZM280.3 95.7 L288.1 95.8 L288.1 94.5 L280.5 94.5ZM295.9 95.8 L303.7 95.8 L303.5 94.5 L295.8 94.5ZM311.5 95.8 L319.3 95.8 L318.9 94.5 L311.2 94.5ZM327.1 95.8 L334.9 95.8 L334.2 94.6 L326.5 94.5ZM342.7 95.8 L350.5 95.8 L349.6 94.6 L341.9 94.6ZM358.3 95.9 L366.1 95.9 L365.0 94.6 L357.3 94.6ZM373.9 95.9 L381.8 95.9 L380.4 94.6 L372.7 94.6ZM389.6 95.9 L397.4 95.9 L395.8 94.6 L388.1 94.6ZM405.2 95.9 L413.0 95.9 L411.2 94.7 L403.5 94.7ZM420.9 95.9 L428.7 96.0 L426.6 94.7 L418.9 94.7ZM436.5 96.0 L444.4 96.0 L442.1 94.7 L434.3 94.7ZM452.2 96.0 L460.0 96.0 L457.5 94.7 L449.8 94.7ZM467.9 96.0 L475.7 96.0 L472.9 94.8 L465.2 94.7ZM483.5 96.0 L491.4 96.1 L488.4 94.8 L480.7 94.8ZM499.2 96.1 L507.1 96.1 L503.8 94.8 L496.1 94.8ZM514.9 96.1 L522.8 96.1 L519.3 94.8 L511.6 94.8ZM530.6 96.1 L538.5 96.1 L534.8 94.8 L527.1 94.8ZM546.4 96.1 L554.2 96.1 L550.3 94.9 L542.5 94.9ZM562.1 96.2 L570.0 96.2 L565.8 94.9 L558.0 94.9ZM577.8 96.2 L585.7 96.2 L581.3 94.9 L573.5 94.9ZM593.6 96.2 L601.4 96.2 L596.8 94.9 L589.0 94.9ZM609.3 96.2 L617.2 96.2 L612.3 95.0 L604.5 94.9ZM625.1 96.2 L633.0 96.3 L627.8 95.0 L620.1 95.0ZM640.8 96.3 L648.7 96.3 L643.4 95.0 L635.6 95.0ZM656.6 96.3 L664.5 96.3 L658.9 95.0 L651.1 95.0Z" fill="#c4c4c4"/>
<polygon points="-85.5,93.9 658.9,95.0 653.5,93.8 -80.0,92.7" fill="#ececec"/>
<path d="M-77.9 94.0 L-70.4 94.0 L-65.1 92.8 L-72.5 92.7ZM-62.8 94.0 L-55.2 94.0 L-50.1 92.8 L-57.6 92.8ZM-47.6 94.0 L-40.0 94.0 L-35.2 92.8 L-42.7 92.8ZM-32.4 94.0 L-24.8 94.0 L-20.2 92.8 L-27.7 92.8ZM-17.2 94.0 L-9.6 94.1 L-5.3 92.8 L-12.7 92.8ZM-2.0 94.1 L5.6 94.1 L9.7 92.9 L2.2 92.9ZM13.2 94.1 L20.8 94.1 L24.7 92.9 L17.2 92.9ZM28.4 94.1 L36.0 94.1 L39.7 92.9 L32.2 92.9ZM43.6 94.1 L51.2 94.1 L54.7 92.9 L47.2 92.9ZM58.8 94.2 L66.4 94.2 L69.7 92.9 L62.2 92.9ZM74.0 94.2 L81.7 94.2 L84.7 93.0 L77.2 93.0ZM89.3 94.2 L96.9 94.2 L99.7 93.0 L92.2 93.0ZM104.5 94.2 L112.2 94.2 L114.8 93.0 L107.3 93.0ZM119.8 94.2 L127.4 94.3 L129.8 93.0 L122.3 93.0ZM135.1 94.3 L142.7 94.3 L144.9 93.1 L137.3 93.0ZM150.3 94.3 L158.0 94.3 L159.9 93.1 L152.4 93.1ZM165.6 94.3 L173.3 94.3 L175.0 93.1 L167.4 93.1ZM180.9 94.3 L188.5 94.3 L190.0 93.1 L182.5 93.1ZM196.2 94.4 L203.8 94.4 L205.1 93.1 L197.6 93.1ZM211.5 94.4 L219.2 94.4 L220.2 93.2 L212.7 93.2ZM226.8 94.4 L234.5 94.4 L235.3 93.2 L227.7 93.2ZM242.1 94.4 L249.8 94.4 L250.4 93.2 L242.8 93.2ZM257.5 94.4 L265.1 94.5 L265.5 93.2 L258.0 93.2ZM272.8 94.5 L280.5 94.5 L280.6 93.2 L273.1 93.2ZM288.1 94.5 L295.8 94.5 L295.7 93.3 L288.2 93.3ZM303.5 94.5 L311.2 94.5 L310.9 93.3 L303.3 93.3ZM318.9 94.5 L326.5 94.5 L326.0 93.3 L318.4 93.3ZM334.2 94.6 L341.9 94.6 L341.2 93.3 L333.6 93.3ZM349.6 94.6 L357.3 94.6 L356.3 93.4 L348.7 93.3ZM365.0 94.6 L372.7 94.6 L371.5 93.4 L363.9 93.4ZM380.4 94.6 L388.1 94.6 L386.7 93.4 L379.1 93.4ZM395.8 94.6 L403.5 94.7 L401.8 93.4 L394.2 93.4ZM411.2 94.7 L418.9 94.7 L417.0 93.4 L409.4 93.4ZM426.6 94.7 L434.3 94.7 L432.2 93.5 L424.6 93.5ZM442.1 94.7 L449.8 94.7 L447.4 93.5 L439.8 93.5ZM457.5 94.7 L465.2 94.7 L462.6 93.5 L455.0 93.5ZM472.9 94.8 L480.7 94.8 L477.9 93.5 L470.2 93.5ZM488.4 94.8 L496.1 94.8 L493.1 93.5 L485.5 93.5ZM503.8 94.8 L511.6 94.8 L508.3 93.6 L500.7 93.6ZM519.3 94.8 L527.1 94.8 L523.6 93.6 L515.9 93.6ZM534.8 94.8 L542.5 94.9 L538.8 93.6 L531.2 93.6ZM550.3 94.9 L558.0 94.9 L554.1 93.6 L546.4 93.6ZM565.8 94.9 L573.5 94.9 L569.3 93.7 L561.7 93.6ZM581.3 94.9 L589.0 94.9 L584.6 93.7 L577.0 93.7ZM596.8 94.9 L604.5 94.9 L599.9 93.7 L592.3 93.7ZM612.3 95.0 L620.1 95.0 L615.2 93.7 L607.5 93.7ZM627.8 95.0 L635.6 95.0 L630.5 93.7 L622.8 93.7ZM643.4 95.0 L651.1 95.0 L645.8 93.8 L638.1 93.8Z" fill="#c4c4c4"/>
<polygon points="-87.5,92.7 661.1,93.8 655.7,92.6 -82.0,91.5" fill="#ececec"/>
<path d="M-80.0 92.7 L-72.5 92.7 L-67.3 91.6 L-74.7 91.6ZM-65.1 92.8 L-57.6 92.8 L-52.6 91.6 L-60.0 91.6ZM-50.1 92.8 L-42.7 92.8 L-37.9 91.6 L-45.2 91.6ZM-35.2 92.8 L-27.7 92.8 L-23.1 91.6 L-30.5 91.6ZM-20.2 92.8 L-12.7 92.8 L-8.4 91.7 L-15.7 91.6ZM-5.3 92.8 L2.2 92.9 L6.4 91.7 L-1.0 91.7ZM9.7 92.9 L17.2 92.9 L21.2 91.7 L13.8 91.7ZM24.7 92.9 L32.2 92.9 L35.9 91.7 L28.5 91.7ZM39.7 92.9 L47.2 92.9 L50.7 91.7 L43.3 91.7ZM54.7 92.9 L62.2 92.9 L65.5 91.8 L58.1 91.7ZM69.7 92.9 L77.2 93.0 L80.3 91.8 L72.9 91.8ZM84.7 93.0 L92.2 93.0 L95.1 91.8 L87.7 91.8ZM99.7 93.0 L107.3 93.0 L109.9 91.8 L102.5 91.8ZM114.8 93.0 L122.3 93.0 L124.7 91.8 L117.3 91.8ZM129.8 93.0 L137.3 93.0 L139.5 91.9 L132.1 91.8ZM144.9 93.1 L152.4 93.1 L154.4 91.9 L147.0 91.9ZM159.9 93.1 L167.4 93.1 L169.2 91.9 L161.8 91.9ZM175.0 93.1 L182.5 93.1 L184.1 91.9 L176.6 91.9ZM190.0 93.1 L197.6 93.1 L198.9 91.9 L191.5 91.9ZM205.1 93.1 L212.7 93.2 L213.8 92.0 L206.4 92.0ZM220.2 93.2 L227.7 93.2 L228.7 92.0 L221.2 92.0ZM235.3 93.2 L242.8 93.2 L243.5 92.0 L236.1 92.0ZM250.4 93.2 L258.0 93.2 L258.4 92.0 L251.0 92.0ZM265.5 93.2 L273.1 93.2 L273.3 92.0 L265.9 92.0ZM280.6 93.2 L288.2 93.3 L288.2 92.1 L280.8 92.1ZM295.7 93.3 L303.3 93.3 L303.1 92.1 L295.7 92.1ZM310.9 93.3 L318.4 93.3 L318.0 92.1 L310.6 92.1ZM326.0 93.3 L333.6 93.3 L333.0 92.1 L325.5 92.1ZM341.2 93.3 L348.7 93.3 L347.9 92.1 L340.4 92.1ZM356.3 93.4 L363.9 93.4 L362.8 92.2 L355.4 92.2ZM371.5 93.4 L379.1 93.4 L377.8 92.2 L370.3 92.2ZM386.7 93.4 L394.2 93.4 L392.7 92.2 L385.3 92.2ZM401.8 93.4 L409.4 93.4 L407.7 92.2 L400.2 92.2ZM417.0 93.4 L424.6 93.5 L422.7 92.3 L415.2 92.2ZM432.2 93.5 L439.8 93.5 L437.7 92.3 L430.2 92.3ZM447.4 93.5 L455.0 93.5 L452.6 92.3 L445.1 92.3ZM462.6 93.5 L470.2 93.5 L467.6 92.3 L460.1 92.3ZM477.9 93.5 L485.5 93.5 L482.6 92.3 L475.1 92.3ZM493.1 93.5 L500.7 93.6 L497.6 92.4 L490.1 92.3ZM508.3 93.6 L515.9 93.6 L512.7 92.4 L505.2 92.4ZM523.6 93.6 L531.2 93.6 L527.7 92.4 L520.2 92.4ZM538.8 93.6 L546.4 93.6 L542.7 92.4 L535.2 92.4ZM554.1 93.6 L561.7 93.6 L557.8 92.4 L550.2 92.4ZM569.3 93.7 L577.0 93.7 L572.8 92.5 L565.3 92.5ZM584.6 93.7 L592.3 93.7 L587.9 92.5 L580.3 92.5ZM599.9 93.7 L607.5 93.7 L602.9 92.5 L595.4 92.5ZM615.2 93.7 L622.8 93.7 L618.0 92.5 L610.5 92.5ZM630.5 93.7 L638.1 93.8 L633.1 92.5 L625.5 92.5ZM645.8 93.8 L653.5 93.8 L648.2 92.6 L640.6 92.6Z" fill="#c4c4c4"/>
<polygon points="-89.4,91.5 663.3,92.6 657.9,91.4 -84.0,90.4" fill="#ececec"/>
<path d="M-82.0 91.5 L-74.7 91.6 L-69.5 90.4 L-76.8 90.4ZM-67.3 91.6 L-60.0 91.6 L-55.0 90.4 L-62.2 90.4ZM-52.6 91.6 L-45.2 91.6 L-40.5 90.5 L-47.7 90.4ZM-37.9 91.6 L-30.5 91.6 L-25.9 90.5 L-33.2 90.5ZM-23.1 91.6 L-15.7 91.6 L-11.4 90.5 L-18.7 90.5ZM-8.4 91.7 L-1.0 91.7 L3.2 90.5 L-4.1 90.5ZM6.4 91.7 L13.8 91.7 L17.7 90.5 L10.4 90.5ZM21.2 91.7 L28.5 91.7 L32.3 90.6 L25.0 90.5ZM35.9 91.7 L43.3 91.7 L46.8 90.6 L39.5 90.6ZM50.7 91.7 L58.1 91.7 L61.4 90.6 L54.1 90.6ZM65.5 91.8 L72.9 91.8 L76.0 90.6 L68.7 90.6ZM80.3 91.8 L87.7 91.8 L90.6 90.6 L83.3 90.6ZM95.1 91.8 L102.5 91.8 L105.2 90.7 L97.9 90.6ZM109.9 91.8 L117.3 91.8 L119.8 90.7 L112.5 90.7ZM124.7 91.8 L132.1 91.8 L134.4 90.7 L127.1 90.7ZM139.5 91.9 L147.0 91.9 L149.0 90.7 L141.7 90.7ZM154.4 91.9 L161.8 91.9 L163.6 90.7 L156.3 90.7ZM169.2 91.9 L176.6 91.9 L178.3 90.8 L170.9 90.7ZM184.1 91.9 L191.5 91.9 L192.9 90.8 L185.6 90.8ZM198.9 91.9 L206.4 92.0 L207.6 90.8 L200.2 90.8ZM213.8 92.0 L221.2 92.0 L222.2 90.8 L214.9 90.8ZM228.7 92.0 L236.1 92.0 L236.9 90.8 L229.5 90.8ZM243.5 92.0 L251.0 92.0 L251.5 90.9 L244.2 90.8ZM258.4 92.0 L265.9 92.0 L266.2 90.9 L258.9 90.9ZM273.3 92.0 L280.8 92.1 L280.9 90.9 L273.6 90.9ZM288.2 92.1 L295.7 92.1 L295.6 90.9 L288.3 90.9ZM303.1 92.1 L310.6 92.1 L310.3 90.9 L302.9 90.9ZM318.0 92.1 L325.5 92.1 L325.0 91.0 L317.7 90.9ZM333.0 92.1 L340.4 92.1 L339.7 91.0 L332.4 91.0ZM347.9 92.1 L355.4 92.2 L354.4 91.0 L347.1 91.0ZM362.8 92.2 L370.3 92.2 L369.2 91.0 L361.8 91.0ZM377.8 92.2 L385.3 92.2 L383.9 91.0 L376.5 91.0ZM392.7 92.2 L400.2 92.2 L398.7 91.1 L391.3 91.0ZM407.7 92.2 L415.2 92.2 L413.4 91.1 L406.0 91.1ZM422.7 92.3 L430.2 92.3 L428.2 91.1 L420.8 91.1ZM437.7 92.3 L445.1 92.3 L442.9 91.1 L435.5 91.1ZM452.6 92.3 L460.1 92.3 L457.7 91.1 L450.3 91.1ZM467.6 92.3 L475.1 92.3 L472.5 91.2 L465.1 91.1ZM482.6 92.3 L490.1 92.3 L487.3 91.2 L479.9 91.2ZM497.6 92.4 L505.2 92.4 L502.1 91.2 L494.7 91.2ZM512.7 92.4 L520.2 92.4 L516.9 91.2 L509.5 91.2ZM527.7 92.4 L535.2 92.4 L531.7 91.2 L524.3 91.2ZM542.7 92.4 L550.2 92.4 L546.5 91.3 L539.1 91.3ZM557.8 92.4 L565.3 92.5 L561.3 91.3 L553.9 91.3ZM572.8 92.5 L580.3 92.5 L576.2 91.3 L568.8 91.3ZM587.9 92.5 L595.4 92.5 L591.0 91.3 L583.6 91.3ZM602.9 92.5 L610.5 92.5 L605.9 91.3 L598.4 91.3ZM618.0 92.5 L625.5 92.5 L620.7 91.4 L613.3 91.4ZM633.1 92.5 L640.6 92.6 L635.6 91.4 L628.2 91.4ZM648.2 92.6 L655.7 92.6 L650.5 91.4 L643.0 91.4Z" fill="#c4c4c4"/>
<polygon points="-91.3,90.4 657.9,91.4 652.7,90.3 -85.9,89.3" fill="#ececec"/>
<path d="M-84.0 90.4 L-76.8 90.4 L-71.6 89.3 L-78.8 89.3ZM-69.5 90.4 L-62.2 90.4 L-57.3 89.3 L-64.5 89.3ZM-55.0 90.4 L-47.7 90.4 L-43.0 89.3 L-50.1 89.3ZM-40.5 90.5 L-33.2 90.5 L-28.7 89.3 L-35.8 89.3ZM-25.9 90.5 L-18.7 90.5 L-14.3 89.4 L-21.5 89.4ZM-11.4 90.5 L-4.1 90.5 L0.0 89.4 L-7.2 89.4ZM3.2 90.5 L10.4 90.5 L14.4 89.4 L7.2 89.4ZM17.7 90.5 L25.0 90.5 L28.7 89.4 L21.5 89.4ZM32.3 90.6 L39.5 90.6 L43.1 89.4 L35.9 89.4ZM46.8 90.6 L54.1 90.6 L57.4 89.5 L50.3 89.5ZM61.4 90.6 L68.7 90.6 L71.8 89.5 L64.6 89.5ZM76.0 90.6 L83.3 90.6 L86.2 89.5 L79.0 89.5ZM90.6 90.6 L97.9 90.6 L100.6 89.5 L93.4 89.5ZM105.2 90.7 L112.5 90.7 L115.0 89.5 L107.8 89.5ZM119.8 90.7 L127.1 90.7 L129.4 89.6 L122.2 89.6ZM134.4 90.7 L141.7 90.7 L143.8 89.6 L136.6 89.6ZM149.0 90.7 L156.3 90.7 L158.2 89.6 L151.0 89.6ZM163.6 90.7 L170.9 90.7 L172.6 89.6 L165.4 89.6ZM178.3 90.8 L185.6 90.8 L187.1 89.6 L179.8 89.6ZM192.9 90.8 L200.2 90.8 L201.5 89.7 L194.3 89.7ZM207.6 90.8 L214.9 90.8 L215.9 89.7 L208.7 89.7ZM222.2 90.8 L229.5 90.8 L230.4 89.7 L223.2 89.7ZM236.9 90.8 L244.2 90.8 L244.9 89.7 L237.6 89.7ZM251.5 90.9 L258.9 90.9 L259.3 89.7 L252.1 89.7ZM266.2 90.9 L273.6 90.9 L273.8 89.8 L266.6 89.7ZM280.9 90.9 L288.3 90.9 L288.3 89.8 L281.0 89.8ZM295.6 90.9 L302.9 90.9 L302.8 89.8 L295.5 89.8ZM310.3 90.9 L317.7 90.9 L317.3 89.8 L310.0 89.8ZM325.0 91.0 L332.4 91.0 L331.8 89.8 L324.5 89.8ZM339.7 91.0 L347.1 91.0 L346.3 89.9 L339.0 89.8ZM354.4 91.0 L361.8 91.0 L360.8 89.9 L353.5 89.9ZM369.2 91.0 L376.5 91.0 L375.3 89.9 L368.1 89.9ZM383.9 91.0 L391.3 91.0 L389.9 89.9 L382.6 89.9ZM398.7 91.1 L406.0 91.1 L404.4 89.9 L397.1 89.9ZM413.4 91.1 L420.8 91.1 L418.9 90.0 L411.7 89.9ZM428.2 91.1 L435.5 91.1 L433.5 90.0 L426.2 90.0ZM442.9 91.1 L450.3 91.1 L448.1 90.0 L440.8 90.0ZM457.7 91.1 L465.1 91.1 L462.6 90.0 L455.3 90.0ZM472.5 91.2 L479.9 91.2 L477.2 90.0 L469.9 90.0ZM487.3 91.2 L494.7 91.2 L491.8 90.1 L484.5 90.0ZM502.1 91.2 L509.5 91.2 L506.4 90.1 L499.1 90.1ZM516.9 91.2 L524.3 91.2 L521.0 90.1 L513.7 90.1ZM531.7 91.2 L539.1 91.3 L535.6 90.1 L528.3 90.1ZM546.5 91.3 L553.9 91.3 L550.2 90.1 L542.9 90.1ZM561.3 91.3 L568.8 91.3 L564.8 90.2 L557.5 90.1ZM576.2 91.3 L583.6 91.3 L579.4 90.2 L572.1 90.2ZM591.0 91.3 L598.4 91.3 L594.1 90.2 L586.8 90.2ZM605.9 91.3 L613.3 91.4 L608.7 90.2 L601.4 90.2ZM620.7 91.4 L628.2 91.4 L623.4 90.2 L616.1 90.2ZM635.6 91.4 L643.0 91.4 L638.0 90.3 L630.7 90.2ZM650.5 91.4 L657.9 91.4 L652.7 90.3 L645.4 90.3Z" fill="#c4c4c4"/>
<polygon points="-85.9,89.3 660.0,90.3 654.9,89.2 -80.7,88.2" fill="#ececec"/>
<path d="M-85.9 89.3 L-78.8 89.3 L-73.7 88.2 L-80.7 88.2ZM-71.6 89.3 L-64.5 89.3 L-59.6 88.2 L-66.6 88.2ZM-57.3 89.3 L-50.1 89.3 L-45.4 88.2 L-52.5 88.2ZM-43.0 89.3 L-35.8 89.3 L-31.3 88.3 L-38.4 88.2ZM-28.7 89.3 L-21.5 89.4 L-17.2 88.3 L-24.3 88.3ZM-14.3 89.4 L-7.2 89.4 L-3.0 88.3 L-10.1 88.3ZM0.0 89.4 L7.2 89.4 L11.1 88.3 L4.0 88.3ZM14.4 89.4 L21.5 89.4 L25.2 88.3 L18.2 88.3ZM28.7 89.4 L35.9 89.4 L39.4 88.3 L32.3 88.3ZM43.1 89.4 L50.3 89.5 L53.6 88.4 L46.5 88.4ZM57.4 89.5 L64.6 89.5 L67.7 88.4 L60.7 88.4ZM71.8 89.5 L79.0 89.5 L81.9 88.4 L74.8 88.4ZM86.2 89.5 L93.4 89.5 L96.1 88.4 L89.0 88.4ZM100.6 89.5 L107.8 89.5 L110.3 88.4 L103.2 88.4ZM115.0 89.5 L122.2 89.6 L124.5 88.5 L117.4 88.5ZM129.4 89.6 L136.6 89.6 L138.7 88.5 L131.6 88.5ZM143.8 89.6 L151.0 89.6 L152.9 88.5 L145.8 88.5ZM158.2 89.6 L165.4 89.6 L167.2 88.5 L160.0 88.5ZM172.6 89.6 L179.8 89.6 L181.4 88.5 L174.3 88.5ZM187.1 89.6 L194.3 89.7 L195.6 88.6 L188.5 88.5ZM201.5 89.7 L208.7 89.7 L209.9 88.6 L202.7 88.6ZM215.9 89.7 L223.2 89.7 L224.1 88.6 L217.0 88.6ZM230.4 89.7 L237.6 89.7 L238.4 88.6 L231.2 88.6ZM244.9 89.7 L252.1 89.7 L252.6 88.6 L245.5 88.6ZM259.3 89.7 L266.6 89.7 L266.9 88.7 L259.8 88.6ZM273.8 89.8 L281.0 89.8 L281.2 88.7 L274.0 88.7ZM288.3 89.8 L295.5 89.8 L295.5 88.7 L288.3 88.7ZM302.8 89.8 L310.0 89.8 L309.8 88.7 L302.6 88.7ZM317.3 89.8 L324.5 89.8 L324.0 88.7 L316.9 88.7ZM331.8 89.8 L339.0 89.8 L338.4 88.7 L331.2 88.7ZM346.3 89.9 L353.5 89.9 L352.7 88.8 L345.5 88.8ZM360.8 89.9 L368.1 89.9 L367.0 88.8 L359.8 88.8ZM375.3 89.9 L382.6 89.9 L381.3 88.8 L374.1 88.8ZM389.9 89.9 L397.1 89.9 L395.6 88.8 L388.5 88.8ZM404.4 89.9 L411.7 89.9 L410.0 88.8 L402.8 88.8ZM418.9 90.0 L426.2 90.0 L424.3 88.9 L417.2 88.9ZM433.5 90.0 L440.8 90.0 L438.7 88.9 L431.5 88.9ZM448.1 90.0 L455.3 90.0 L453.1 88.9 L445.9 88.9ZM462.6 90.0 L469.9 90.0 L467.4 88.9 L460.2 88.9ZM477.2 90.0 L484.5 90.0 L481.8 88.9 L474.6 88.9ZM491.8 90.1 L499.1 90.1 L496.2 89.0 L489.0 89.0ZM506.4 90.1 L513.7 90.1 L510.6 89.0 L503.4 89.0ZM521.0 90.1 L528.3 90.1 L525.0 89.0 L517.8 89.0ZM535.6 90.1 L542.9 90.1 L539.4 89.0 L532.2 89.0ZM550.2 90.1 L557.5 90.1 L553.8 89.0 L546.6 89.0ZM564.8 90.2 L572.1 90.2 L568.2 89.1 L561.0 89.0ZM579.4 90.2 L586.8 90.2 L582.6 89.1 L575.4 89.1ZM594.1 90.2 L601.4 90.2 L597.1 89.1 L589.8 89.1ZM608.7 90.2 L616.1 90.2 L611.5 89.1 L604.3 89.1ZM623.4 90.2 L630.7 90.2 L626.0 89.1 L618.7 89.1ZM638.0 90.3 L645.4 90.3 L640.4 89.2 L633.2 89.1ZM652.7 90.3 L660.0 90.3 L654.9 89.2 L647.6 89.2Z" fill="#c4c4c4"/>
<polygon points="-87.8,88.2 662.1,89.2 657.0,88.1 -82.6,87.1" fill="#ececec"/>
<path d="M-87.8 88.2 L-80.7 88.2 L-75.7 87.1 L-82.6 87.1ZM-73.7 88.2 L-66.6 88.2 L-61.8 87.2 L-68.7 87.1ZM-59.6 88.2 L-52.5 88.2 L-47.8 87.2 L-54.8 87.2ZM-45.4 88.2 L-38.4 88.2 L-33.9 87.2 L-40.9 87.2ZM-31.3 88.3 L-24.3 88.3 L-20.0 87.2 L-26.9 87.2ZM-17.2 88.3 L-10.1 88.3 L-6.0 87.2 L-13.0 87.2ZM-3.0 88.3 L4.0 88.3 L7.9 87.2 L1.0 87.2ZM11.1 88.3 L18.2 88.3 L21.9 87.3 L14.9 87.3ZM25.2 88.3 L32.3 88.3 L35.8 87.3 L28.9 87.3ZM39.4 88.3 L46.5 88.4 L49.8 87.3 L42.8 87.3ZM53.6 88.4 L60.7 88.4 L63.8 87.3 L56.8 87.3ZM67.7 88.4 L74.8 88.4 L77.8 87.3 L70.8 87.3ZM81.9 88.4 L89.0 88.4 L91.8 87.4 L84.8 87.3ZM96.1 88.4 L103.2 88.4 L105.8 87.4 L98.8 87.4ZM110.3 88.4 L117.4 88.5 L119.8 87.4 L112.8 87.4ZM124.5 88.5 L131.6 88.5 L133.8 87.4 L126.8 87.4ZM138.7 88.5 L145.8 88.5 L147.8 87.4 L140.8 87.4ZM152.9 88.5 L160.0 88.5 L161.8 87.4 L154.8 87.4ZM167.2 88.5 L174.3 88.5 L175.9 87.5 L168.8 87.5ZM181.4 88.5 L188.5 88.5 L189.9 87.5 L182.9 87.5ZM195.6 88.6 L202.7 88.6 L203.9 87.5 L196.9 87.5ZM209.9 88.6 L217.0 88.6 L218.0 87.5 L211.0 87.5ZM224.1 88.6 L231.2 88.6 L232.0 87.5 L225.0 87.5ZM238.4 88.6 L245.5 88.6 L246.1 87.6 L239.1 87.6ZM252.6 88.6 L259.8 88.6 L260.2 87.6 L253.1 87.6ZM266.9 88.7 L274.0 88.7 L274.3 87.6 L267.2 87.6ZM281.2 88.7 L288.3 88.7 L288.3 87.6 L281.3 87.6ZM295.5 88.7 L302.6 88.7 L302.4 87.6 L295.4 87.6ZM309.8 88.7 L316.9 88.7 L316.5 87.7 L309.5 87.6ZM324.0 88.7 L331.2 88.7 L330.6 87.7 L323.6 87.7ZM338.4 88.7 L345.5 88.8 L344.8 87.7 L337.7 87.7ZM352.7 88.8 L359.8 88.8 L358.9 87.7 L351.8 87.7ZM367.0 88.8 L374.1 88.8 L373.0 87.7 L365.9 87.7ZM381.3 88.8 L388.5 88.8 L387.1 87.7 L380.1 87.7ZM395.6 88.8 L402.8 88.8 L401.3 87.8 L394.2 87.8ZM410.0 88.8 L417.2 88.9 L415.4 87.8 L408.3 87.8ZM424.3 88.9 L431.5 88.9 L429.6 87.8 L422.5 87.8ZM438.7 88.9 L445.9 88.9 L443.7 87.8 L436.7 87.8ZM453.1 88.9 L460.2 88.9 L457.9 87.8 L450.8 87.8ZM467.4 88.9 L474.6 88.9 L472.1 87.9 L465.0 87.9ZM481.8 88.9 L489.0 89.0 L486.3 87.9 L479.2 87.9ZM496.2 89.0 L503.4 89.0 L500.5 87.9 L493.4 87.9ZM510.6 89.0 L517.8 89.0 L514.6 87.9 L507.5 87.9ZM525.0 89.0 L532.2 89.0 L528.9 87.9 L521.7 87.9ZM539.4 89.0 L546.6 89.0 L543.1 88.0 L536.0 87.9ZM553.8 89.0 L561.0 89.0 L557.3 88.0 L550.2 88.0ZM568.2 89.1 L575.4 89.1 L571.5 88.0 L564.4 88.0ZM582.6 89.1 L589.8 89.1 L585.7 88.0 L578.6 88.0ZM597.1 89.1 L604.3 89.1 L600.0 88.0 L592.8 88.0ZM611.5 89.1 L618.7 89.1 L614.2 88.0 L607.1 88.0ZM626.0 89.1 L633.2 89.1 L628.5 88.1 L621.3 88.1ZM640.4 89.2 L647.6 89.2 L642.7 88.1 L635.6 88.1ZM654.9 89.2 L662.1 89.2 L657.0 88.1 L649.9 88.1Z" fill="#c4c4c4"/>
<polygon points="-89.6,87.1 657.0,88.1 652.0,87.1 -84.5,86.1" fill="#ececec"/>
<path d="M-89.6 87.1 L-82.6 87.1 L-77.6 86.1 L-84.5 86.1ZM-75.7 87.1 L-68.7 87.1 L-63.9 86.1 L-70.8 86.1ZM-61.8 87.2 L-54.8 87.2 L-50.2 86.1 L-57.0 86.1ZM-47.8 87.2 L-40.9 87.2 L-36.4 86.2 L-43.3 86.1ZM-33.9 87.2 L-26.9 87.2 L-22.7 86.2 L-29.5 86.2ZM-20.0 87.2 L-13.0 87.2 L-8.9 86.2 L-15.8 86.2ZM-6.0 87.2 L1.0 87.2 L4.8 86.2 L-2.0 86.2ZM7.9 87.2 L14.9 87.3 L18.6 86.2 L11.7 86.2ZM21.9 87.3 L28.9 87.3 L32.4 86.2 L25.5 86.2ZM35.8 87.3 L42.8 87.3 L46.2 86.3 L39.3 86.3ZM49.8 87.3 L56.8 87.3 L60.0 86.3 L53.1 86.3ZM63.8 87.3 L70.8 87.3 L73.7 86.3 L66.8 86.3ZM77.8 87.3 L84.8 87.3 L87.5 86.3 L80.6 86.3ZM91.8 87.4 L98.8 87.4 L101.3 86.3 L94.4 86.3ZM105.8 87.4 L112.8 87.4 L115.2 86.4 L108.3 86.3ZM119.8 87.4 L126.8 87.4 L129.0 86.4 L122.1 86.4ZM133.8 87.4 L140.8 87.4 L142.8 86.4 L135.9 86.4ZM147.8 87.4 L154.8 87.4 L156.6 86.4 L149.7 86.4ZM161.8 87.4 L168.8 87.5 L170.5 86.4 L163.6 86.4ZM175.9 87.5 L182.9 87.5 L184.3 86.4 L177.4 86.4ZM189.9 87.5 L196.9 87.5 L198.2 86.5 L191.2 86.5ZM203.9 87.5 L211.0 87.5 L212.0 86.5 L205.1 86.5ZM218.0 87.5 L225.0 87.5 L225.9 86.5 L219.0 86.5ZM232.0 87.5 L239.1 87.6 L239.8 86.5 L232.8 86.5ZM246.1 87.6 L253.1 87.6 L253.7 86.5 L246.7 86.5ZM260.2 87.6 L267.2 87.6 L267.5 86.6 L260.6 86.5ZM274.3 87.6 L281.3 87.6 L281.4 86.6 L274.5 86.6ZM288.3 87.6 L295.4 87.6 L295.3 86.6 L288.4 86.6ZM302.4 87.6 L309.5 87.6 L309.2 86.6 L302.3 86.6ZM316.5 87.7 L323.6 87.7 L323.1 86.6 L316.2 86.6ZM330.6 87.7 L337.7 87.7 L337.1 86.6 L330.1 86.6ZM344.8 87.7 L351.8 87.7 L351.0 86.7 L344.0 86.7ZM358.9 87.7 L365.9 87.7 L364.9 86.7 L358.0 86.7ZM373.0 87.7 L380.1 87.7 L378.9 86.7 L371.9 86.7ZM387.1 87.7 L394.2 87.8 L392.8 86.7 L385.8 86.7ZM401.3 87.8 L408.3 87.8 L406.8 86.7 L399.8 86.7ZM415.4 87.8 L422.5 87.8 L420.7 86.8 L413.7 86.7ZM429.6 87.8 L436.7 87.8 L434.7 86.8 L427.7 86.8ZM443.7 87.8 L450.8 87.8 L448.7 86.8 L441.7 86.8ZM457.9 87.8 L465.0 87.9 L462.6 86.8 L455.6 86.8ZM472.1 87.9 L479.2 87.9 L476.6 86.8 L469.6 86.8ZM486.3 87.9 L493.4 87.9 L490.6 86.8 L483.6 86.8ZM500.5 87.9 L507.5 87.9 L504.6 86.9 L497.6 86.9ZM514.6 87.9 L521.7 87.9 L518.6 86.9 L511.6 86.9ZM528.9 87.9 L536.0 87.9 L532.6 86.9 L525.6 86.9ZM543.1 88.0 L550.2 88.0 L546.6 86.9 L539.6 86.9ZM557.3 88.0 L564.4 88.0 L560.7 86.9 L553.7 86.9ZM571.5 88.0 L578.6 88.0 L574.7 87.0 L567.7 86.9ZM585.7 88.0 L592.8 88.0 L588.7 87.0 L581.7 87.0ZM600.0 88.0 L607.1 88.0 L602.8 87.0 L595.8 87.0ZM614.2 88.0 L621.3 88.1 L616.8 87.0 L609.8 87.0ZM628.5 88.1 L635.6 88.1 L630.9 87.0 L623.9 87.0ZM642.7 88.1 L649.9 88.1 L645.0 87.0 L637.9 87.0Z" fill="#c4c4c4"/>
<polygon points="-91.3,86.1 659.0,87.1 654.1,86.0 -86.3,85.1" fill="#ececec"/>
<path d="M-91.3 86.1 L-84.5 86.1 L-79.5 85.1 L-86.3 85.1ZM-77.6 86.1 L-70.8 86.1 L-66.0 85.1 L-72.7 85.1ZM-63.9 86.1 L-57.0 86.1 L-52.4 85.1 L-59.2 85.1ZM-50.2 86.1 L-43.3 86.1 L-38.9 85.2 L-45.6 85.1ZM-36.4 86.2 L-29.5 86.2 L-25.3 85.2 L-32.1 85.2ZM-22.7 86.2 L-15.8 86.2 L-11.7 85.2 L-18.5 85.2ZM-8.9 86.2 L-2.0 86.2 L1.8 85.2 L-4.9 85.2ZM4.8 86.2 L11.7 86.2 L15.4 85.2 L8.6 85.2ZM18.6 86.2 L25.5 86.2 L29.0 85.2 L22.2 85.2ZM32.4 86.2 L39.3 86.3 L42.6 85.3 L35.8 85.2ZM46.2 86.3 L53.1 86.3 L56.2 85.3 L49.4 85.3ZM60.0 86.3 L66.8 86.3 L69.8 85.3 L63.0 85.3ZM73.7 86.3 L80.6 86.3 L83.4 85.3 L76.6 85.3ZM87.5 86.3 L94.4 86.3 L97.0 85.3 L90.2 85.3ZM101.3 86.3 L108.3 86.3 L110.7 85.3 L103.9 85.3ZM115.2 86.4 L122.1 86.4 L124.3 85.4 L117.5 85.4ZM129.0 86.4 L135.9 86.4 L137.9 85.4 L131.1 85.4ZM142.8 86.4 L149.7 86.4 L151.6 85.4 L144.8 85.4ZM156.6 86.4 L163.6 86.4 L165.2 85.4 L158.4 85.4ZM170.5 86.4 L177.4 86.4 L178.9 85.4 L172.1 85.4ZM184.3 86.4 L191.2 86.5 L192.6 85.4 L185.7 85.4ZM198.2 86.5 L205.1 86.5 L206.2 85.5 L199.4 85.5ZM212.0 86.5 L219.0 86.5 L219.9 85.5 L213.1 85.5ZM225.9 86.5 L232.8 86.5 L233.6 85.5 L226.8 85.5ZM239.8 86.5 L246.7 86.5 L247.3 85.5 L240.4 85.5ZM253.7 86.5 L260.6 86.5 L261.0 85.5 L254.1 85.5ZM267.5 86.6 L274.5 86.6 L274.7 85.6 L267.8 85.5ZM281.4 86.6 L288.4 86.6 L288.4 85.6 L281.5 85.6ZM295.3 86.6 L302.3 86.6 L302.1 85.6 L295.3 85.6ZM309.2 86.6 L316.2 86.6 L315.8 85.6 L309.0 85.6ZM323.1 86.6 L330.1 86.6 L329.6 85.6 L322.7 85.6ZM337.1 86.6 L344.0 86.7 L343.3 85.6 L336.4 85.6ZM351.0 86.7 L358.0 86.7 L357.1 85.7 L350.2 85.7ZM364.9 86.7 L371.9 86.7 L370.8 85.7 L363.9 85.7ZM378.9 86.7 L385.8 86.7 L384.6 85.7 L377.7 85.7ZM392.8 86.7 L399.8 86.7 L398.3 85.7 L391.4 85.7ZM406.8 86.7 L413.7 86.7 L412.1 85.7 L405.2 85.7ZM420.7 86.8 L427.7 86.8 L425.9 85.7 L419.0 85.7ZM434.7 86.8 L441.7 86.8 L439.6 85.8 L432.8 85.8ZM448.7 86.8 L455.6 86.8 L453.4 85.8 L446.5 85.8ZM462.6 86.8 L469.6 86.8 L467.2 85.8 L460.3 85.8ZM476.6 86.8 L483.6 86.8 L481.0 85.8 L474.1 85.8ZM490.6 86.8 L497.6 86.9 L494.8 85.8 L487.9 85.8ZM504.6 86.9 L511.6 86.9 L508.7 85.9 L501.7 85.8ZM518.6 86.9 L525.6 86.9 L522.5 85.9 L515.6 85.9ZM532.6 86.9 L539.6 86.9 L536.3 85.9 L529.4 85.9ZM546.6 86.9 L553.7 86.9 L550.1 85.9 L543.2 85.9ZM560.7 86.9 L567.7 86.9 L564.0 85.9 L557.1 85.9ZM574.7 87.0 L581.7 87.0 L577.8 85.9 L570.9 85.9ZM588.7 87.0 L595.8 87.0 L591.7 86.0 L584.7 86.0ZM602.8 87.0 L609.8 87.0 L605.5 86.0 L598.6 86.0ZM616.8 87.0 L623.9 87.0 L619.4 86.0 L612.5 86.0ZM630.9 87.0 L637.9 87.0 L633.3 86.0 L626.3 86.0ZM645.0 87.0 L652.0 87.1 L647.2 86.0 L640.2 86.0Z" fill="#c4c4c4"/>
<polygon points="-86.3,85.1 661.0,86.1 656.1,85.1 -81.4,84.1" fill="#ececec"/>
<path d="M-79.5 85.1 L-72.7 85.1 L-68.0 84.1 L-74.7 84.1ZM-66.0 85.1 L-59.2 85.1 L-54.6 84.2 L-61.3 84.1ZM-52.4 85.1 L-45.6 85.1 L-41.2 84.2 L-47.9 84.2ZM-38.9 85.2 L-32.1 85.2 L-27.9 84.2 L-34.6 84.2ZM-25.3 85.2 L-18.5 85.2 L-14.5 84.2 L-21.2 84.2ZM-11.7 85.2 L-4.9 85.2 L-1.1 84.2 L-7.8 84.2ZM1.8 85.2 L8.6 85.2 L12.3 84.2 L5.6 84.2ZM15.4 85.2 L22.2 85.2 L25.7 84.3 L19.0 84.2ZM29.0 85.2 L35.8 85.2 L39.1 84.3 L32.4 84.3ZM42.6 85.3 L49.4 85.3 L52.6 84.3 L45.9 84.3ZM56.2 85.3 L63.0 85.3 L66.0 84.3 L59.3 84.3ZM69.8 85.3 L76.6 85.3 L79.4 84.3 L72.7 84.3ZM83.4 85.3 L90.2 85.3 L92.9 84.3 L86.1 84.3ZM97.0 85.3 L103.9 85.3 L106.3 84.4 L99.6 84.3ZM110.7 85.3 L117.5 85.4 L119.8 84.4 L113.0 84.4ZM124.3 85.4 L131.1 85.4 L133.2 84.4 L126.5 84.4ZM137.9 85.4 L144.8 85.4 L146.7 84.4 L140.0 84.4ZM151.6 85.4 L158.4 85.4 L160.2 84.4 L153.4 84.4ZM165.2 85.4 L172.1 85.4 L173.6 84.4 L166.9 84.4ZM178.9 85.4 L185.7 85.4 L187.1 84.5 L180.4 84.5ZM192.6 85.4 L199.4 85.5 L200.6 84.5 L193.9 84.5ZM206.2 85.5 L213.1 85.5 L214.1 84.5 L207.3 84.5ZM219.9 85.5 L226.8 85.5 L227.6 84.5 L220.8 84.5ZM233.6 85.5 L240.4 85.5 L241.1 84.5 L234.4 84.5ZM247.3 85.5 L254.1 85.5 L254.6 84.5 L247.9 84.5ZM261.0 85.5 L267.8 85.5 L268.1 84.6 L261.4 84.6ZM274.7 85.6 L281.5 85.6 L281.7 84.6 L274.9 84.6ZM288.4 85.6 L295.3 85.6 L295.2 84.6 L288.4 84.6ZM302.1 85.6 L309.0 85.6 L308.7 84.6 L302.0 84.6ZM315.8 85.6 L322.7 85.6 L322.3 84.6 L315.5 84.6ZM329.6 85.6 L336.4 85.6 L335.8 84.6 L329.1 84.6ZM343.3 85.6 L350.2 85.7 L349.4 84.7 L342.6 84.7ZM357.1 85.7 L363.9 85.7 L363.0 84.7 L356.2 84.7ZM370.8 85.7 L377.7 85.7 L376.5 84.7 L369.7 84.7ZM384.6 85.7 L391.4 85.7 L390.1 84.7 L383.3 84.7ZM398.3 85.7 L405.2 85.7 L403.7 84.7 L396.9 84.7ZM412.1 85.7 L419.0 85.7 L417.3 84.8 L410.5 84.7ZM425.9 85.7 L432.8 85.8 L430.9 84.8 L424.1 84.8ZM439.6 85.8 L446.5 85.8 L444.5 84.8 L437.7 84.8ZM453.4 85.8 L460.3 85.8 L458.1 84.8 L451.3 84.8ZM467.2 85.8 L474.1 85.8 L471.7 84.8 L464.9 84.8ZM481.0 85.8 L487.9 85.8 L485.3 84.8 L478.5 84.8ZM494.8 85.8 L501.7 85.8 L499.0 84.9 L492.1 84.8ZM508.7 85.9 L515.6 85.9 L512.6 84.9 L505.8 84.9ZM522.5 85.9 L529.4 85.9 L526.2 84.9 L519.4 84.9ZM536.3 85.9 L543.2 85.9 L539.9 84.9 L533.1 84.9ZM550.1 85.9 L557.1 85.9 L553.5 84.9 L546.7 84.9ZM564.0 85.9 L570.9 85.9 L567.2 84.9 L560.4 84.9ZM577.8 85.9 L584.7 86.0 L580.9 85.0 L574.0 85.0ZM591.7 86.0 L598.6 86.0 L594.5 85.0 L587.7 85.0ZM605.5 86.0 L612.5 86.0 L608.2 85.0 L601.4 85.0ZM619.4 86.0 L626.3 86.0 L621.9 85.0 L615.1 85.0ZM633.3 86.0 L640.2 86.0 L635.6 85.0 L628.7 85.0ZM647.2 86.0 L654.1 86.0 L649.3 85.0 L642.4 85.0Z" fill="#c4c4c4"/>
<polygon points="-88.0,84.1 663.0,85.1 658.1,84.1 -83.2,83.2" fill="#ececec"/>
<path d="M-81.4 84.1 L-74.7 84.1 L-70.0 83.2 L-76.6 83.2ZM-68.0 84.1 L-61.3 84.1 L-56.8 83.2 L-63.4 83.2ZM-54.6 84.2 L-47.9 84.2 L-43.6 83.2 L-50.2 83.2ZM-41.2 84.2 L-34.6 84.2 L-30.4 83.2 L-37.0 83.2ZM-27.9 84.2 L-21.2 84.2 L-17.1 83.2 L-23.8 83.2ZM-14.5 84.2 L-7.8 84.2 L-3.9 83.3 L-10.5 83.3ZM-1.1 84.2 L5.6 84.2 L9.3 83.3 L2.7 83.3ZM12.3 84.2 L19.0 84.2 L22.5 83.3 L15.9 83.3ZM25.7 84.3 L32.4 84.3 L35.8 83.3 L29.2 83.3ZM39.1 84.3 L45.9 84.3 L49.0 83.3 L42.4 83.3ZM52.6 84.3 L59.3 84.3 L62.3 83.3 L55.6 83.3ZM66.0 84.3 L72.7 84.3 L75.5 83.4 L68.9 83.4ZM79.4 84.3 L86.1 84.3 L88.8 83.4 L82.2 83.4ZM92.9 84.3 L99.6 84.3 L102.1 83.4 L95.4 83.4ZM106.3 84.4 L113.0 84.4 L115.3 83.4 L108.7 83.4ZM119.8 84.4 L126.5 84.4 L128.6 83.4 L122.0 83.4ZM133.2 84.4 L140.0 84.4 L141.9 83.4 L135.3 83.4ZM146.7 84.4 L153.4 84.4 L155.2 83.5 L148.5 83.5ZM160.2 84.4 L166.9 84.4 L168.5 83.5 L161.8 83.5ZM173.6 84.4 L180.4 84.5 L181.8 83.5 L175.1 83.5ZM187.1 84.5 L193.9 84.5 L195.1 83.5 L188.5 83.5ZM200.6 84.5 L207.3 84.5 L208.4 83.5 L201.8 83.5ZM214.1 84.5 L220.8 84.5 L221.8 83.5 L215.1 83.5ZM227.6 84.5 L234.4 84.5 L235.1 83.6 L228.4 83.6ZM241.1 84.5 L247.9 84.5 L248.4 83.6 L241.7 83.6ZM254.6 84.5 L261.4 84.6 L261.8 83.6 L255.1 83.6ZM268.1 84.6 L274.9 84.6 L275.1 83.6 L268.4 83.6ZM281.7 84.6 L288.4 84.6 L288.5 83.6 L281.8 83.6ZM295.2 84.6 L302.0 84.6 L301.8 83.6 L295.1 83.6ZM308.7 84.6 L315.5 84.6 L315.2 83.7 L308.5 83.7ZM322.3 84.6 L329.1 84.6 L328.6 83.7 L321.9 83.7ZM335.8 84.6 L342.6 84.7 L341.9 83.7 L335.2 83.7ZM349.4 84.7 L356.2 84.7 L355.3 83.7 L348.6 83.7ZM363.0 84.7 L369.7 84.7 L368.7 83.7 L362.0 83.7ZM376.5 84.7 L383.3 84.7 L382.1 83.7 L375.4 83.7ZM390.1 84.7 L396.9 84.7 L395.5 83.8 L388.8 83.8ZM403.7 84.7 L410.5 84.7 L408.9 83.8 L402.2 83.8ZM417.3 84.8 L424.1 84.8 L422.3 83.8 L415.6 83.8ZM430.9 84.8 L437.7 84.8 L435.8 83.8 L429.1 83.8ZM444.5 84.8 L451.3 84.8 L449.2 83.8 L442.5 83.8ZM458.1 84.8 L464.9 84.8 L462.6 83.8 L455.9 83.8ZM471.7 84.8 L478.5 84.8 L476.1 83.9 L469.3 83.9ZM485.3 84.8 L492.1 84.8 L489.5 83.9 L482.8 83.9ZM499.0 84.9 L505.8 84.9 L503.0 83.9 L496.2 83.9ZM512.6 84.9 L519.4 84.9 L516.4 83.9 L509.7 83.9ZM526.2 84.9 L533.1 84.9 L529.9 83.9 L523.2 83.9ZM539.9 84.9 L546.7 84.9 L543.4 84.0 L536.6 83.9ZM553.5 84.9 L560.4 84.9 L556.8 84.0 L550.1 84.0ZM567.2 84.9 L574.0 85.0 L570.3 84.0 L563.6 84.0ZM580.9 85.0 L587.7 85.0 L583.8 84.0 L577.1 84.0ZM594.5 85.0 L601.4 85.0 L597.3 84.0 L590.6 84.0ZM608.2 85.0 L615.1 85.0 L610.8 84.0 L604.1 84.0ZM621.9 85.0 L628.7 85.0 L624.3 84.1 L617.6 84.0ZM635.6 85.0 L642.4 85.0 L637.8 84.1 L631.1 84.1ZM649.3 85.0 L656.1 85.1 L651.4 84.1 L644.6 84.1Z" fill="#c4c4c4"/>
<polygon points="-89.7,83.2 658.1,84.1 653.4,83.1 -84.9,82.2" fill="#ececec"/>
<path d="M-83.2 83.2 L-76.6 83.2 L-71.9 82.3 L-78.4 82.2ZM-70.0 83.2 L-63.4 83.2 L-58.9 82.3 L-65.4 82.3ZM-56.8 83.2 L-50.2 83.2 L-45.8 82.3 L-52.3 82.3ZM-43.6 83.2 L-37.0 83.2 L-32.8 82.3 L-39.3 82.3ZM-30.4 83.2 L-23.8 83.2 L-19.7 82.3 L-26.3 82.3ZM-17.1 83.2 L-10.5 83.3 L-6.7 82.3 L-13.2 82.3ZM-3.9 83.3 L2.7 83.3 L6.4 82.3 L-0.2 82.3ZM9.3 83.3 L15.9 83.3 L19.4 82.4 L12.9 82.4ZM22.5 83.3 L29.2 83.3 L32.5 82.4 L26.0 82.4ZM35.8 83.3 L42.4 83.3 L45.6 82.4 L39.0 82.4ZM49.0 83.3 L55.6 83.3 L58.6 82.4 L52.1 82.4ZM62.3 83.3 L68.9 83.4 L71.7 82.4 L65.2 82.4ZM75.5 83.4 L82.2 83.4 L84.8 82.4 L78.3 82.4ZM88.8 83.4 L95.4 83.4 L97.9 82.5 L91.4 82.5ZM102.1 83.4 L108.7 83.4 L111.0 82.5 L104.5 82.5ZM115.3 83.4 L122.0 83.4 L124.1 82.5 L117.6 82.5ZM128.6 83.4 L135.3 83.4 L137.2 82.5 L130.7 82.5ZM141.9 83.4 L148.5 83.5 L150.4 82.5 L143.8 82.5ZM155.2 83.5 L161.8 83.5 L163.5 82.5 L156.9 82.5ZM168.5 83.5 L175.1 83.5 L176.6 82.6 L170.1 82.6ZM181.8 83.5 L188.5 83.5 L189.8 82.6 L183.2 82.6ZM195.1 83.5 L201.8 83.5 L202.9 82.6 L196.3 82.6ZM208.4 83.5 L215.1 83.5 L216.1 82.6 L209.5 82.6ZM221.8 83.5 L228.4 83.6 L229.2 82.6 L222.6 82.6ZM235.1 83.6 L241.7 83.6 L242.4 82.6 L235.8 82.6ZM248.4 83.6 L255.1 83.6 L255.5 82.7 L249.0 82.6ZM261.8 83.6 L268.4 83.6 L268.7 82.7 L262.1 82.7ZM275.1 83.6 L281.8 83.6 L281.9 82.7 L275.3 82.7ZM288.5 83.6 L295.1 83.6 L295.1 82.7 L288.5 82.7ZM301.8 83.6 L308.5 83.7 L308.3 82.7 L301.7 82.7ZM315.2 83.7 L321.9 83.7 L321.5 82.7 L314.9 82.7ZM328.6 83.7 L335.2 83.7 L334.7 82.8 L328.1 82.7ZM341.9 83.7 L348.6 83.7 L347.9 82.8 L341.3 82.8ZM355.3 83.7 L362.0 83.7 L361.1 82.8 L354.5 82.8ZM368.7 83.7 L375.4 83.7 L374.3 82.8 L367.7 82.8ZM382.1 83.7 L388.8 83.8 L387.6 82.8 L380.9 82.8ZM395.5 83.8 L402.2 83.8 L400.8 82.8 L394.2 82.8ZM408.9 83.8 L415.6 83.8 L414.0 82.9 L407.4 82.8ZM422.3 83.8 L429.1 83.8 L427.3 82.9 L420.6 82.9ZM435.8 83.8 L442.5 83.8 L440.5 82.9 L433.9 82.9ZM449.2 83.8 L455.9 83.8 L453.8 82.9 L447.2 82.9ZM462.6 83.8 L469.3 83.9 L467.0 82.9 L460.4 82.9ZM476.1 83.9 L482.8 83.9 L480.3 82.9 L473.7 82.9ZM489.5 83.9 L496.2 83.9 L493.6 83.0 L487.0 82.9ZM503.0 83.9 L509.7 83.9 L506.9 83.0 L500.2 83.0ZM516.4 83.9 L523.2 83.9 L520.2 83.0 L513.5 83.0ZM529.9 83.9 L536.6 83.9 L533.5 83.0 L526.8 83.0ZM543.4 84.0 L550.1 84.0 L546.8 83.0 L540.1 83.0ZM556.8 84.0 L563.6 84.0 L560.1 83.0 L553.4 83.0ZM570.3 84.0 L577.1 84.0 L573.4 83.1 L566.7 83.0ZM583.8 84.0 L590.6 84.0 L586.7 83.1 L580.0 83.1ZM597.3 84.0 L604.1 84.0 L600.0 83.1 L593.4 83.1ZM610.8 84.0 L617.6 84.0 L613.4 83.1 L606.7 83.1ZM624.3 84.1 L631.1 84.1 L626.7 83.1 L620.0 83.1ZM637.8 84.1 L644.6 84.1 L640.0 83.1 L633.4 83.1ZM651.4 84.1 L658.1 84.1 L653.4 83.1 L646.7 83.1Z" fill="#c4c4c4"/>
<polygon points="-84.9,82.2 660.1,83.2 655.4,82.2 -80.2,81.3" fill="#ececec"/>
<path d="M-84.9 82.2 L-78.4 82.2 L-73.8 81.3 L-80.2 81.3ZM-71.9 82.3 L-65.4 82.3 L-60.9 81.4 L-67.3 81.4ZM-58.9 82.3 L-52.3 82.3 L-48.0 81.4 L-54.5 81.4ZM-45.8 82.3 L-39.3 82.3 L-35.2 81.4 L-41.6 81.4ZM-32.8 82.3 L-26.3 82.3 L-22.3 81.4 L-28.7 81.4ZM-19.7 82.3 L-13.2 82.3 L-9.4 81.4 L-15.8 81.4ZM-6.7 82.3 L-0.2 82.3 L3.5 81.4 L-3.0 81.4ZM6.4 82.3 L12.9 82.4 L16.4 81.5 L9.9 81.4ZM19.4 82.4 L26.0 82.4 L29.3 81.5 L22.8 81.5ZM32.5 82.4 L39.0 82.4 L42.2 81.5 L35.7 81.5ZM45.6 82.4 L52.1 82.4 L55.1 81.5 L48.7 81.5ZM58.6 82.4 L65.2 82.4 L68.0 81.5 L61.6 81.5ZM71.7 82.4 L78.3 82.4 L80.9 81.5 L74.5 81.5ZM84.8 82.4 L91.4 82.5 L93.9 81.6 L87.4 81.5ZM97.9 82.5 L104.5 82.5 L106.8 81.6 L100.3 81.6ZM111.0 82.5 L117.6 82.5 L119.8 81.6 L113.3 81.6ZM124.1 82.5 L130.7 82.5 L132.7 81.6 L126.2 81.6ZM137.2 82.5 L143.8 82.5 L145.7 81.6 L139.2 81.6ZM150.4 82.5 L156.9 82.5 L158.6 81.6 L152.1 81.6ZM163.5 82.5 L170.1 82.6 L171.6 81.6 L165.1 81.6ZM176.6 82.6 L183.2 82.6 L184.5 81.7 L178.1 81.7ZM189.8 82.6 L196.3 82.6 L197.5 81.7 L191.0 81.7ZM202.9 82.6 L209.5 82.6 L210.5 81.7 L204.0 81.7ZM216.1 82.6 L222.6 82.6 L223.5 81.7 L217.0 81.7ZM229.2 82.6 L235.8 82.6 L236.5 81.7 L230.0 81.7ZM242.4 82.6 L249.0 82.6 L249.5 81.7 L243.0 81.7ZM255.5 82.7 L262.1 82.7 L262.5 81.8 L256.0 81.7ZM268.7 82.7 L275.3 82.7 L275.5 81.8 L269.0 81.8ZM281.9 82.7 L288.5 82.7 L288.5 81.8 L282.0 81.8ZM295.1 82.7 L301.7 82.7 L301.5 81.8 L295.0 81.8ZM308.3 82.7 L314.9 82.7 L314.6 81.8 L308.0 81.8ZM321.5 82.7 L328.1 82.7 L327.6 81.8 L321.1 81.8ZM334.7 82.8 L341.3 82.8 L340.6 81.9 L334.1 81.8ZM347.9 82.8 L354.5 82.8 L353.7 81.9 L347.2 81.9ZM361.1 82.8 L367.7 82.8 L366.7 81.9 L360.2 81.9ZM374.3 82.8 L380.9 82.8 L379.8 81.9 L373.3 81.9ZM387.6 82.8 L394.2 82.8 L392.9 81.9 L386.3 81.9ZM400.8 82.8 L407.4 82.8 L405.9 81.9 L399.4 81.9ZM414.0 82.9 L420.6 82.9 L419.0 81.9 L412.5 81.9ZM427.3 82.9 L433.9 82.9 L432.1 82.0 L425.5 82.0ZM440.5 82.9 L447.2 82.9 L445.2 82.0 L438.6 82.0ZM453.8 82.9 L460.4 82.9 L458.3 82.0 L451.7 82.0ZM467.0 82.9 L473.7 82.9 L471.4 82.0 L464.8 82.0ZM480.3 82.9 L487.0 82.9 L484.5 82.0 L477.9 82.0ZM493.6 83.0 L500.2 83.0 L497.6 82.0 L491.0 82.0ZM506.9 83.0 L513.5 83.0 L510.7 82.1 L504.1 82.1ZM520.2 83.0 L526.8 83.0 L523.8 82.1 L517.2 82.1ZM533.5 83.0 L540.1 83.0 L536.9 82.1 L530.4 82.1ZM546.8 83.0 L553.4 83.0 L550.1 82.1 L543.5 82.1ZM560.1 83.0 L566.7 83.0 L563.2 82.1 L556.6 82.1ZM573.4 83.1 L580.0 83.1 L576.4 82.1 L569.8 82.1ZM586.7 83.1 L593.4 83.1 L589.5 82.2 L582.9 82.1ZM600.0 83.1 L606.7 83.1 L602.7 82.2 L596.1 82.2ZM613.4 83.1 L620.0 83.1 L615.8 82.2 L609.2 82.2ZM626.7 83.1 L633.4 83.1 L629.0 82.2 L622.4 82.2ZM640.0 83.1 L646.7 83.1 L642.2 82.2 L635.6 82.2ZM653.4 83.1 L660.1 83.2 L655.4 82.2 L648.8 82.2Z" fill="#c4c4c4"/>
<polygon points="-86.6,81.3 662.0,82.2 657.3,81.3 -81.9,80.5" fill="#ececec"/>
<path d="M-86.6 81.3 L-80.2 81.3 L-75.6 80.5 L-81.9 80.5ZM-73.8 81.3 L-67.3 81.4 L-62.9 80.5 L-69.2 80.5ZM-60.9 81.4 L-54.5 81.4 L-50.2 80.5 L-56.5 80.5ZM-48.0 81.4 L-41.6 81.4 L-37.5 80.5 L-43.8 80.5ZM-35.2 81.4 L-28.7 81.4 L-24.7 80.5 L-31.1 80.5ZM-22.3 81.4 L-15.8 81.4 L-12.0 80.5 L-18.4 80.5ZM-9.4 81.4 L-3.0 81.4 L0.7 80.6 L-5.7 80.5ZM3.5 81.4 L9.9 81.4 L13.4 80.6 L7.1 80.6ZM16.4 81.5 L22.8 81.5 L26.2 80.6 L19.8 80.6ZM29.3 81.5 L35.7 81.5 L38.9 80.6 L32.5 80.6ZM42.2 81.5 L48.7 81.5 L51.7 80.6 L45.3 80.6ZM55.1 81.5 L61.6 81.5 L64.4 80.6 L58.0 80.6ZM68.0 81.5 L74.5 81.5 L77.2 80.6 L70.8 80.6ZM80.9 81.5 L87.4 81.5 L89.9 80.7 L83.6 80.7ZM93.9 81.6 L100.3 81.6 L102.7 80.7 L96.3 80.7ZM106.8 81.6 L113.3 81.6 L115.5 80.7 L109.1 80.7ZM119.8 81.6 L126.2 81.6 L128.3 80.7 L121.9 80.7ZM132.7 81.6 L139.2 81.6 L141.1 80.7 L134.7 80.7ZM145.7 81.6 L152.1 81.6 L153.9 80.7 L147.5 80.7ZM158.6 81.6 L165.1 81.6 L166.7 80.8 L160.3 80.7ZM171.6 81.6 L178.1 81.7 L179.5 80.8 L173.1 80.8ZM184.5 81.7 L191.0 81.7 L192.3 80.8 L185.9 80.8ZM197.5 81.7 L204.0 81.7 L205.1 80.8 L198.7 80.8ZM210.5 81.7 L217.0 81.7 L217.9 80.8 L211.5 80.8ZM223.5 81.7 L230.0 81.7 L230.7 80.8 L224.3 80.8ZM236.5 81.7 L243.0 81.7 L243.6 80.8 L237.2 80.8ZM249.5 81.7 L256.0 81.7 L256.4 80.9 L250.0 80.9ZM262.5 81.8 L269.0 81.8 L269.3 80.9 L262.8 80.9ZM275.5 81.8 L282.0 81.8 L282.1 80.9 L275.7 80.9ZM288.5 81.8 L295.0 81.8 L295.0 80.9 L288.5 80.9ZM301.5 81.8 L308.0 81.8 L307.8 80.9 L301.4 80.9ZM314.6 81.8 L321.1 81.8 L320.7 80.9 L314.3 80.9ZM327.6 81.8 L334.1 81.8 L333.6 81.0 L327.1 80.9ZM340.6 81.9 L347.2 81.9 L346.5 81.0 L340.0 81.0ZM353.7 81.9 L360.2 81.9 L359.3 81.0 L352.9 81.0ZM366.7 81.9 L373.3 81.9 L372.2 81.0 L365.8 81.0ZM379.8 81.9 L386.3 81.9 L385.1 81.0 L378.7 81.0ZM392.9 81.9 L399.4 81.9 L398.0 81.0 L391.6 81.0ZM405.9 81.9 L412.5 81.9 L410.9 81.1 L404.5 81.0ZM419.0 81.9 L425.5 82.0 L423.8 81.1 L417.4 81.1ZM432.1 82.0 L438.6 82.0 L436.8 81.1 L430.3 81.1ZM445.2 82.0 L451.7 82.0 L449.7 81.1 L443.2 81.1ZM458.3 82.0 L464.8 82.0 L462.6 81.1 L456.2 81.1ZM471.4 82.0 L477.9 82.0 L475.6 81.1 L469.1 81.1ZM484.5 82.0 L491.0 82.0 L488.5 81.1 L482.0 81.1ZM497.6 82.0 L504.1 82.1 L501.5 81.2 L495.0 81.2ZM510.7 82.1 L517.2 82.1 L514.4 81.2 L507.9 81.2ZM523.8 82.1 L530.4 82.1 L527.4 81.2 L520.9 81.2ZM536.9 82.1 L543.5 82.1 L540.3 81.2 L533.8 81.2ZM550.1 82.1 L556.6 82.1 L553.3 81.2 L546.8 81.2ZM563.2 82.1 L569.8 82.1 L566.3 81.2 L559.8 81.2ZM576.4 82.1 L582.9 82.1 L579.3 81.3 L572.8 81.2ZM589.5 82.2 L596.1 82.2 L592.3 81.3 L585.8 81.3ZM602.7 82.2 L609.2 82.2 L605.2 81.3 L598.7 81.3ZM615.8 82.2 L622.4 82.2 L618.2 81.3 L611.7 81.3ZM629.0 82.2 L635.6 82.2 L631.3 81.3 L624.7 81.3ZM642.2 82.2 L648.8 82.2 L644.3 81.3 L637.8 81.3ZM655.4 82.2 L662.0 82.2 L657.3 81.3 L650.8 81.3Z" fill="#c4c4c4"/>
<polygon points="-88.3,80.4 657.3,81.3 652.7,80.5 -83.6,79.6" fill="#ececec"/>
<path d="M-88.3 80.4 L-81.9 80.5 L-77.4 79.6 L-83.6 79.6ZM-75.6 80.5 L-69.2 80.5 L-64.8 79.6 L-71.1 79.6ZM-62.9 80.5 L-56.5 80.5 L-52.3 79.6 L-58.5 79.6ZM-50.2 80.5 L-43.8 80.5 L-39.7 79.6 L-46.0 79.6ZM-37.5 80.5 L-31.1 80.5 L-27.2 79.7 L-33.4 79.7ZM-24.7 80.5 L-18.4 80.5 L-14.6 79.7 L-20.9 79.7ZM-12.0 80.5 L-5.7 80.5 L-2.0 79.7 L-8.3 79.7ZM0.7 80.6 L7.1 80.6 L10.5 79.7 L4.3 79.7ZM13.4 80.6 L19.8 80.6 L23.1 79.7 L16.8 79.7ZM26.2 80.6 L32.5 80.6 L35.7 79.7 L29.4 79.7ZM38.9 80.6 L45.3 80.6 L48.3 79.8 L42.0 79.7ZM51.7 80.6 L58.0 80.6 L60.9 79.8 L54.6 79.8ZM64.4 80.6 L70.8 80.6 L73.5 79.8 L67.2 79.8ZM77.2 80.6 L83.6 80.7 L86.1 79.8 L79.8 79.8ZM89.9 80.7 L96.3 80.7 L98.7 79.8 L92.4 79.8ZM102.7 80.7 L109.1 80.7 L111.3 79.8 L105.0 79.8ZM115.5 80.7 L121.9 80.7 L124.0 79.8 L117.6 79.8ZM128.3 80.7 L134.7 80.7 L136.6 79.9 L130.3 79.9ZM141.1 80.7 L147.5 80.7 L149.2 79.9 L142.9 79.9ZM153.9 80.7 L160.3 80.7 L161.9 79.9 L155.5 79.9ZM166.7 80.8 L173.1 80.8 L174.5 79.9 L168.2 79.9ZM179.5 80.8 L185.9 80.8 L187.2 79.9 L180.8 79.9ZM192.3 80.8 L198.7 80.8 L199.8 79.9 L193.5 79.9ZM205.1 80.8 L211.5 80.8 L212.5 79.9 L206.1 79.9ZM217.9 80.8 L224.3 80.8 L225.1 80.0 L218.8 80.0ZM230.7 80.8 L237.2 80.8 L237.8 80.0 L231.5 80.0ZM243.6 80.8 L250.0 80.9 L250.5 80.0 L244.2 80.0ZM256.4 80.9 L262.8 80.9 L263.2 80.0 L256.8 80.0ZM269.3 80.9 L275.7 80.9 L275.9 80.0 L269.5 80.0ZM282.1 80.9 L288.5 80.9 L288.6 80.0 L282.2 80.0ZM295.0 80.9 L301.4 80.9 L301.3 80.1 L294.9 80.0ZM307.8 80.9 L314.3 80.9 L314.0 80.1 L307.6 80.1ZM320.7 80.9 L327.1 80.9 L326.7 80.1 L320.3 80.1ZM333.6 81.0 L340.0 81.0 L339.4 80.1 L333.0 80.1ZM346.5 81.0 L352.9 81.0 L352.1 80.1 L345.8 80.1ZM359.3 81.0 L365.8 81.0 L364.9 80.1 L358.5 80.1ZM372.2 81.0 L378.7 81.0 L377.6 80.1 L371.2 80.1ZM385.1 81.0 L391.6 81.0 L390.3 80.2 L384.0 80.2ZM398.0 81.0 L404.5 81.0 L403.1 80.2 L396.7 80.2ZM410.9 81.1 L417.4 81.1 L415.8 80.2 L409.4 80.2ZM423.8 81.1 L430.3 81.1 L428.6 80.2 L422.2 80.2ZM436.8 81.1 L443.2 81.1 L441.3 80.2 L435.0 80.2ZM449.7 81.1 L456.2 81.1 L454.1 80.2 L447.7 80.2ZM462.6 81.1 L469.1 81.1 L466.9 80.3 L460.5 80.2ZM475.6 81.1 L482.0 81.1 L479.7 80.3 L473.3 80.3ZM488.5 81.1 L495.0 81.2 L492.4 80.3 L486.1 80.3ZM501.5 81.2 L507.9 81.2 L505.2 80.3 L498.8 80.3ZM514.4 81.2 L520.9 81.2 L518.0 80.3 L511.6 80.3ZM527.4 81.2 L533.8 81.2 L530.8 80.3 L524.4 80.3ZM540.3 81.2 L546.8 81.2 L543.6 80.3 L537.2 80.3ZM553.3 81.2 L559.8 81.2 L556.5 80.4 L550.0 80.4ZM566.3 81.2 L572.8 81.2 L569.3 80.4 L562.9 80.4ZM579.3 81.3 L585.8 81.3 L582.1 80.4 L575.7 80.4ZM592.3 81.3 L598.7 81.3 L594.9 80.4 L588.5 80.4ZM605.2 81.3 L611.7 81.3 L607.8 80.4 L601.3 80.4ZM618.2 81.3 L624.7 81.3 L620.6 80.4 L614.2 80.4ZM631.3 81.3 L637.8 81.3 L633.4 80.4 L627.0 80.4ZM644.3 81.3 L650.8 81.3 L646.3 80.5 L639.9 80.5Z" fill="#c4c4c4"/>
<polygon points="-89.9,79.6 659.2,80.5 654.6,79.6 -85.3,78.8" fill="#ececec"/>
<path d="M-89.9 79.6 L-83.6 79.6 L-79.1 78.8 L-85.3 78.8ZM-77.4 79.6 L-71.1 79.6 L-66.7 78.8 L-72.9 78.8ZM-64.8 79.6 L-58.5 79.6 L-54.3 78.8 L-60.5 78.8ZM-52.3 79.6 L-46.0 79.6 L-41.9 78.8 L-48.1 78.8ZM-39.7 79.6 L-33.4 79.7 L-29.5 78.8 L-35.7 78.8ZM-27.2 79.7 L-20.9 79.7 L-17.1 78.8 L-23.3 78.8ZM-14.6 79.7 L-8.3 79.7 L-4.7 78.9 L-10.9 78.8ZM-2.0 79.7 L4.3 79.7 L7.7 78.9 L1.5 78.9ZM10.5 79.7 L16.8 79.7 L20.2 78.9 L13.9 78.9ZM23.1 79.7 L29.4 79.7 L32.6 78.9 L26.4 78.9ZM35.7 79.7 L42.0 79.7 L45.0 78.9 L38.8 78.9ZM48.3 79.8 L54.6 79.8 L57.5 78.9 L51.2 78.9ZM60.9 79.8 L67.2 79.8 L69.9 78.9 L63.7 78.9ZM73.5 79.8 L79.8 79.8 L82.4 79.0 L76.1 78.9ZM86.1 79.8 L92.4 79.8 L94.8 79.0 L88.6 79.0ZM98.7 79.8 L105.0 79.8 L107.3 79.0 L101.0 79.0ZM111.3 79.8 L117.6 79.8 L119.7 79.0 L113.5 79.0ZM124.0 79.8 L130.3 79.9 L132.2 79.0 L126.0 79.0ZM136.6 79.9 L142.9 79.9 L144.7 79.0 L138.5 79.0ZM149.2 79.9 L155.5 79.9 L157.2 79.0 L150.9 79.0ZM161.9 79.9 L168.2 79.9 L169.7 79.1 L163.4 79.0ZM174.5 79.9 L180.8 79.9 L182.2 79.1 L175.9 79.1ZM187.2 79.9 L193.5 79.9 L194.7 79.1 L188.4 79.1ZM199.8 79.9 L206.1 79.9 L207.2 79.1 L200.9 79.1ZM212.5 79.9 L218.8 80.0 L219.7 79.1 L213.4 79.1ZM225.1 80.0 L231.5 80.0 L232.2 79.1 L225.9 79.1ZM237.8 80.0 L244.2 80.0 L244.7 79.1 L238.5 79.1ZM250.5 80.0 L256.8 80.0 L257.2 79.2 L251.0 79.2ZM263.2 80.0 L269.5 80.0 L269.8 79.2 L263.5 79.2ZM275.9 80.0 L282.2 80.0 L282.3 79.2 L276.0 79.2ZM288.6 80.0 L294.9 80.0 L294.9 79.2 L288.6 79.2ZM301.3 80.1 L307.6 80.1 L307.4 79.2 L301.1 79.2ZM314.0 80.1 L320.3 80.1 L320.0 79.2 L313.7 79.2ZM326.7 80.1 L333.0 80.1 L332.5 79.2 L326.2 79.2ZM339.4 80.1 L345.8 80.1 L345.1 79.3 L338.8 79.3ZM352.1 80.1 L358.5 80.1 L357.7 79.3 L351.4 79.3ZM364.9 80.1 L371.2 80.1 L370.2 79.3 L363.9 79.3ZM377.6 80.1 L384.0 80.2 L382.8 79.3 L376.5 79.3ZM390.3 80.2 L396.7 80.2 L395.4 79.3 L389.1 79.3ZM403.1 80.2 L409.4 80.2 L408.0 79.3 L401.7 79.3ZM415.8 80.2 L422.2 80.2 L420.6 79.4 L414.3 79.3ZM428.6 80.2 L435.0 80.2 L433.2 79.4 L426.9 79.4ZM441.3 80.2 L447.7 80.2 L445.8 79.4 L439.5 79.4ZM454.1 80.2 L460.5 80.2 L458.4 79.4 L452.1 79.4ZM466.9 80.3 L473.3 80.3 L471.0 79.4 L464.7 79.4ZM479.7 80.3 L486.1 80.3 L483.7 79.4 L477.3 79.4ZM492.4 80.3 L498.8 80.3 L496.3 79.4 L490.0 79.4ZM505.2 80.3 L511.6 80.3 L508.9 79.5 L502.6 79.4ZM518.0 80.3 L524.4 80.3 L521.6 79.5 L515.2 79.5ZM530.8 80.3 L537.2 80.3 L534.2 79.5 L527.9 79.5ZM543.6 80.3 L550.0 80.4 L546.9 79.5 L540.5 79.5ZM556.5 80.4 L562.9 80.4 L559.5 79.5 L553.2 79.5ZM569.3 80.4 L575.7 80.4 L572.2 79.5 L565.9 79.5ZM582.1 80.4 L588.5 80.4 L584.9 79.5 L578.5 79.5ZM594.9 80.4 L601.3 80.4 L597.5 79.6 L591.2 79.6ZM607.8 80.4 L614.2 80.4 L610.2 79.6 L603.9 79.6ZM620.6 80.4 L627.0 80.4 L622.9 79.6 L616.6 79.6ZM633.4 80.4 L639.9 80.5 L635.6 79.6 L629.2 79.6ZM646.3 80.5 L652.7 80.5 L648.3 79.6 L641.9 79.6Z" fill="#c4c4c4"/>
<g font-family="Liberation Sans" font-weight="bold" font-size="100" text-anchor="middle" fill="#cbcbcb" fill-opacity="1"><text transform="matrix(0.275 0.003 -0.150 0.281 -21.7 596.1)" y="36">C4</text><text transform="matrix(0.276 0.003 -0.124 0.282 31.7 596.7)" y="36">C5</text><text transform="matrix(0.276 0.003 -0.099 0.282 85.3 597.2)" y="36">C6</text><text transform="matrix(0.277 0.003 -0.073 0.283 139.0 597.8)" y="36">C7</text><text transform="matrix(0.277 0.003 -0.047 0.283 192.8 598.3)" y="36">C8</text><text transform="matrix(0.278 0.003 -0.021 0.284 246.6 598.9)" y="36">C1</text><text transform="matrix(0.278 0.003 0.005 0.284 300.6 599.4)" y="36">C2</text><text transform="matrix(0.279 0.003 0.031 0.285 354.7 599.9)" y="36">C3</text><text transform="matrix(0.279 0.003 0.057 0.285 408.9 600.5)" y="36">C4</text><text transform="matrix(0.280 0.003 0.084 0.286 463.2 601.0)" y="36">C5</text><text transform="matrix(0.280 0.003 0.110 0.286 517.5 601.6)" y="36">C6</text><text transform="matrix(0.281 0.003 0.137 0.287 572.0 602.1)" y="36">C7</text><text transform="matrix(0.249 0.002 -0.123 0.230 7.8 540.8)" y="36">B4</text><text transform="matrix(0.250 0.002 -0.102 0.231 56.2 541.2)" y="36">B5</text><text transform="matrix(0.250 0.002 -0.081 0.231 104.8 541.7)" y="36">B6</text><text transform="matrix(0.251 0.002 -0.060 0.232 153.4 542.1)" y="36">B7</text><text transform="matrix(0.251 0.002 -0.039 0.232 202.0 542.6)" y="36">B8</text><text transform="matrix(0.251 0.002 -0.017 0.232 250.8 543.0)" y="36">B1</text><text transform="matrix(0.252 0.002 0.004 0.233 299.7 543.5)" y="36">B2</text><text transform="matrix(0.252 0.002 0.025 0.233 348.6 543.9)" y="36">B3</text><text transform="matrix(0.253 0.002 0.047 0.234 397.6 544.4)" y="36">B4</text><text transform="matrix(0.253 0.002 0.068 0.234 446.7 544.8)" y="36">B5</text><text transform="matrix(0.254 0.002 0.090 0.234 495.9 545.3)" y="36">B6</text><text transform="matrix(0.254 0.002 0.112 0.235 545.2 545.7)" y="36">B7</text><text transform="matrix(0.254 0.002 0.134 0.235 594.5 546.2)" y="36">B8</text><text transform="matrix(0.228 0.002 -0.120 0.192 -12.0 494.7)" y="36">A3</text><text transform="matrix(0.228 0.002 -0.103 0.192 32.2 495.0)" y="36">A4</text><text transform="matrix(0.228 0.002 -0.085 0.193 76.5 495.4)" y="36">A5</text><text transform="matrix(0.229 0.002 -0.068 0.193 120.8 495.8)" y="36">A6</text><text transform="matrix(0.229 0.002 -0.050 0.193 165.2 496.1)" y="36">A7</text><text transform="matrix(0.229 0.002 -0.032 0.194 209.7 496.5)" y="36">A8</text><text transform="matrix(0.230 0.002 -0.014 0.194 254.3 496.9)" y="36">A1</text><text transform="matrix(0.230 0.002 0.003 0.194 298.9 497.3)" y="36">A2</text><text transform="matrix(0.230 0.002 0.021 0.194 343.6 497.6)" y="36">A3</text><text transform="matrix(0.231 0.002 0.039 0.195 388.3 498.0)" y="36">A4</text><text transform="matrix(0.231 0.002 0.057 0.195 433.1 498.4)" y="36">A5</text><text transform="matrix(0.231 0.002 0.075 0.195 478.0 498.8)" y="36">A6</text><text transform="matrix(0.232 0.002 0.093 0.196 523.0 499.1)" y="36">A7</text><text transform="matrix(0.232 0.002 0.111 0.196 568.0 499.5)" y="36">A8</text><text transform="matrix(0.209 0.002 -0.117 0.163 -28.6 455.9)" y="36">H2</text><text transform="matrix(0.210 0.002 -0.102 0.163 12.0 456.2)" y="36">H3</text><text transform="matrix(0.210 0.002 -0.087 0.163 52.8 456.5)" y="36">H4</text><text transform="matrix(0.210 0.002 -0.072 0.163 93.5 456.8)" y="36">H5</text><text transform="matrix(0.210 0.002 -0.057 0.163 134.3 457.2)" y="36">H6</text><text transform="matrix(0.211 0.002 -0.042 0.164 175.2 457.5)" y="36">H7</text><text transform="matrix(0.211 0.002 -0.027 0.164 216.2 457.8)" y="36">H8</text><text transform="matrix(0.211 0.002 -0.012 0.164 257.2 458.1)" y="36">H1</text><text transform="matrix(0.212 0.002 0.003 0.164 298.2 458.4)" y="36">H2</text><text transform="matrix(0.212 0.002 0.018 0.165 339.3 458.7)" y="36">H3</text><text transform="matrix(0.212 0.002 0.033 0.165 380.5 459.1)" y="36">H4</text><text transform="matrix(0.213 0.002 0.048 0.165 421.7 459.4)" y="36">H5</text><text transform="matrix(0.213 0.002 0.064 0.165 463.0 459.7)" y="36">H6</text><text transform="matrix(0.213 0.002 0.079 0.166 504.4 460.0)" y="36">H7</text><text transform="matrix(0.213 0.002 0.094 0.166 545.8 460.3)" y="36">H8</text><text transform="matrix(0.214 0.002 0.109 0.166 587.2 460.6)" y="36">H1</text><text transform="matrix(0.194 0.001 -0.100 0.139 -5.1 423.2)" y="36">G2</text><text transform="matrix(0.194 0.001 -0.087 0.140 32.5 423.4)" y="36">G3</text><text transform="matrix(0.194 0.001 -0.075 0.140 70.3 423.7)" y="36">G4</text><text transform="matrix(0.195 0.001 -0.062 0.140 108.0 424.0)" y="36">G5</text><text transform="matrix(0.195 0.001 -0.049 0.140 145.9 424.2)" y="36">G6</text><text transform="matrix(0.195 0.001 -0.036 0.140 183.7 424.5)" y="36">G7</text><text transform="matrix(0.195 0.001 -0.023 0.141 221.7 424.8)" y="36">G8</text><text transform="matrix(0.196 0.001 -0.011 0.141 259.6 425.1)" y="36">G1</text><text transform="matrix(0.196 0.001 0.002 0.141 297.6 425.3)" y="36">G2</text><text transform="matrix(0.196 0.001 0.015 0.141 335.7 425.6)" y="36">G3</text><text transform="matrix(0.197 0.001 0.028 0.141 373.8 425.9)" y="36">G4</text><text transform="matrix(0.197 0.001 0.041 0.142 412.0 426.1)" y="36">G5</text><text transform="matrix(0.197 0.001 0.054 0.142 450.2 426.4)" y="36">G6</text><text transform="matrix(0.197 0.001 0.068 0.142 488.5 426.7)" y="36">G7</text><text transform="matrix(0.198 0.001 0.081 0.142 526.8 427.0)" y="36">G8</text><text transform="matrix(0.198 0.001 0.094 0.142 565.2 427.2)" y="36">G1</text><text transform="matrix(0.198 0.001 0.107 0.142 603.6 427.5)" y="36">G2</text><text transform="matrix(0.181 0.001 -0.098 0.121 -19.9 394.7)" y="36">F1</text><text transform="matrix(0.181 0.001 -0.087 0.121 15.1 394.9)" y="36">F2</text><text transform="matrix(0.181 0.001 -0.076 0.121 50.2 395.2)" y="36">F3</text><text transform="matrix(0.181 0.001 -0.065 0.121 85.4 395.4)" y="36">F4</text><text transform="matrix(0.181 0.001 -0.054 0.121 120.6 395.6)" y="36">F5</text><text transform="matrix(0.182 0.001 -0.043 0.122 155.8 395.9)" y="36">F6</text><text transform="matrix(0.182 0.001 -0.031 0.122 191.1 396.1)" y="36">F7</text><text transform="matrix(0.182 0.001 -0.020 0.122 226.4 396.3)" y="36">F8</text><text transform="matrix(0.182 0.001 -0.009 0.122 261.8 396.6)" y="36">F1</text><text transform="matrix(0.183 0.001 0.002 0.122 297.2 396.8)" y="36">F2</text><text transform="matrix(0.183 0.001 0.013 0.122 332.6 397.0)" y="36">F3</text><text transform="matrix(0.183 0.001 0.025 0.123 368.1 397.3)" y="36">F4</text><text transform="matrix(0.183 0.001 0.036 0.123 403.6 397.5)" y="36">F5</text><text transform="matrix(0.183 0.001 0.047 0.123 439.2 397.7)" y="36">F6</text><text transform="matrix(0.184 0.001 0.059 0.123 474.8 398.0)" y="36">F7</text><text transform="matrix(0.184 0.001 0.070 0.123 510.5 398.2)" y="36">F8</text><text transform="matrix(0.184 0.001 0.081 0.123 546.2 398.4)" y="36">F1</text><text transform="matrix(0.184 0.001 0.093 0.123 581.9 398.7)" y="36">F2</text><text transform="matrix(0.169 0.001 -0.095 0.106 -32.8 369.9)" y="36">E8</text><text transform="matrix(0.169 0.001 -0.086 0.106 -0.0 370.1)" y="36">E1</text><text transform="matrix(0.169 0.001 -0.076 0.106 32.8 370.3)" y="36">E2</text><text transform="matrix(0.169 0.001 -0.066 0.106 65.7 370.5)" y="36">E3</text><text transform="matrix(0.170 0.001 -0.057 0.106 98.6 370.7)" y="36">E4</text><text transform="matrix(0.170 0.001 -0.047 0.106 131.5 370.9)" y="36">E5</text><text transform="matrix(0.170 0.001 -0.037 0.106 164.5 371.1)" y="36">E6</text><text transform="matrix(0.170 0.001 -0.028 0.107 197.5 371.3)" y="36">E7</text><text transform="matrix(0.170 0.001 -0.018 0.107 230.5 371.5)" y="36">E8</text><text transform="matrix(0.171 0.001 -0.008 0.107 263.6 371.7)" y="36">E1</text><text transform="matrix(0.171 0.001 0.002 0.107 296.7 371.9)" y="36">E2</text><text transform="matrix(0.171 0.001 0.012 0.107 329.9 372.1)" y="36">E3</text><text transform="matrix(0.171 0.001 0.022 0.107 363.1 372.3)" y="36">E4</text><text transform="matrix(0.171 0.001 0.031 0.107 396.3 372.6)" y="36">E5</text><text transform="matrix(0.172 0.001 0.041 0.107 429.6 372.8)" y="36">E6</text><text transform="matrix(0.172 0.001 0.051 0.108 462.9 373.0)" y="36">E7</text><text transform="matrix(0.172 0.001 0.061 0.108 496.3 373.2)" y="36">E8</text><text transform="matrix(0.172 0.001 0.071 0.108 529.7 373.4)" y="36">E1</text><text transform="matrix(0.172 0.001 0.081 0.108 563.1 373.6)" y="36">E2</text><text transform="matrix(0.173 0.001 0.091 0.108 596.6 373.8)" y="36">E3</text><text transform="matrix(0.159 0.001 -0.084 0.093 -13.4 348.3)" y="36">D8</text><text transform="matrix(0.159 0.001 -0.076 0.094 17.5 348.5)" y="36">D1</text><text transform="matrix(0.159 0.001 -0.067 0.094 48.3 348.6)" y="36">D2</text><text transform="matrix(0.159 0.001 -0.059 0.094 79.2 348.8)" y="36">D3</text><text transform="matrix(0.159 0.001 -0.050 0.094 110.1 349.0)" y="36">D4</text><text transform="matrix(0.160 0.001 -0.041 0.094 141.1 349.2)" y="36">D5</text><text transform="matrix(0.160 0.001 -0.033 0.094 172.1 349.4)" y="36">D6</text><text transform="matrix(0.160 0.001 -0.024 0.094 203.1 349.5)" y="36">D7</text><text transform="matrix(0.160 0.001 -0.016 0.094 234.2 349.7)" y="36">D8</text><text transform="matrix(0.160 0.001 -0.007 0.094 265.2 349.9)" y="36">D1</text><text transform="matrix(0.160 0.001 0.002 0.094 296.4 350.1)" y="36">D2</text><text transform="matrix(0.161 0.001 0.010 0.095 327.5 350.3)" y="36">D3</text><text transform="matrix(0.161 0.001 0.019 0.095 358.7 350.4)" y="36">D4</text><text transform="matrix(0.161 0.001 0.028 0.095 389.9 350.6)" y="36">D5</text><text transform="matrix(0.161 0.001 0.036 0.095 421.2 350.8)" y="36">D6</text><text transform="matrix(0.161 0.001 0.045 0.095 452.5 351.0)" y="36">D7</text><text transform="matrix(0.161 0.001 0.054 0.095 483.8 351.2)" y="36">D8</text><text transform="matrix(0.162 0.001 0.063 0.095 515.1 351.4)" y="36">D1</text><text transform="matrix(0.162 0.001 0.072 0.095 546.5 351.5)" y="36">D2</text><text transform="matrix(0.162 0.001 0.080 0.095 578.0 351.7)" y="36">D3</text><text transform="matrix(0.162 0.001 0.089 0.095 609.4 351.9)" y="36">D4</text><text transform="matrix(0.150 0.001 -0.082 0.083 -25.2 329.0)" y="36">C7</text><text transform="matrix(0.150 0.001 -0.075 0.083 3.9 329.1)" y="36">C8</text><text transform="matrix(0.150 0.001 -0.067 0.083 33.0 329.3)" y="36">C1</text><text transform="matrix(0.150 0.001 -0.060 0.083 62.1 329.4)" y="36">C2</text><text transform="matrix(0.150 0.001 -0.052 0.083 91.2 329.6)" y="36">C3</text><text transform="matrix(0.150 0.001 -0.045 0.083 120.4 329.8)" y="36">C4</text><text transform="matrix(0.151 0.001 -0.037 0.084 149.6 329.9)" y="36">C5</text><text transform="matrix(0.151 0.001 -0.029 0.084 178.8 330.1)" y="36">C6</text><text transform="matrix(0.151 0.001 -0.022 0.084 208.1 330.2)" y="36">C7</text><text transform="matrix(0.151 0.001 -0.014 0.084 237.4 330.4)" y="36">C8</text><text transform="matrix(0.151 0.001 -0.006 0.084 266.7 330.6)" y="36">C1</text><text transform="matrix(0.151 0.001 0.001 0.084 296.0 330.7)" y="36">C2</text><text transform="matrix(0.151 0.001 0.009 0.084 325.4 330.9)" y="36">C3</text><text transform="matrix(0.152 0.001 0.017 0.084 354.8 331.0)" y="36">C4</text><text transform="matrix(0.152 0.001 0.025 0.084 384.2 331.2)" y="36">C5</text><text transform="matrix(0.152 0.001 0.032 0.084 413.7 331.4)" y="36">C6</text><text transform="matrix(0.152 0.001 0.040 0.084 443.2 331.5)" y="36">C7</text><text transform="matrix(0.152 0.001 0.048 0.084 472.7 331.7)" y="36">C8</text><text transform="matrix(0.152 0.001 0.056 0.085 502.3 331.9)" y="36">C1</text><text transform="matrix(0.152 0.001 0.064 0.085 531.9 332.0)" y="36">C2</text><text transform="matrix(0.153 0.001 0.071 0.085 561.5 332.2)" y="36">C3</text><text transform="matrix(0.153 0.001 0.079 0.085 591.1 332.3)" y="36">C4</text><text transform="matrix(0.141 0.001 -0.081 0.074 -35.7 311.7)" y="36">B6</text><text transform="matrix(0.142 0.001 -0.074 0.074 -8.2 311.9)" y="36">B7</text><text transform="matrix(0.142 0.001 -0.067 0.074 19.3 312.0)" y="36">B8</text><text transform="matrix(0.142 0.001 -0.060 0.074 46.8 312.2)" y="36">B1</text><text transform="matrix(0.142 0.001 -0.053 0.075 74.4 312.3)" y="36">B2</text><text transform="matrix(0.142 0.001 -0.047 0.075 102.0 312.4)" y="36">B3</text><text transform="matrix(0.142 0.001 -0.040 0.075 129.6 312.6)" y="36">B4</text><text transform="matrix(0.142 0.001 -0.033 0.075 157.2 312.7)" y="36">B5</text><text transform="matrix(0.143 0.001 -0.026 0.075 184.8 312.9)" y="36">B6</text><text transform="matrix(0.143 0.001 -0.019 0.075 212.5 313.0)" y="36">B7</text><text transform="matrix(0.143 0.001 -0.012 0.075 240.2 313.2)" y="36">B8</text><text transform="matrix(0.143 0.001 -0.006 0.075 268.0 313.3)" y="36">B1</text><text transform="matrix(0.143 0.001 0.001 0.075 295.7 313.5)" y="36">B2</text><text transform="matrix(0.143 0.001 0.008 0.075 323.5 313.6)" y="36">B3</text><text transform="matrix(0.143 0.001 0.015 0.075 351.3 313.7)" y="36">B4</text><text transform="matrix(0.144 0.001 0.022 0.075 379.2 313.9)" y="36">B5</text><text transform="matrix(0.144 0.001 0.029 0.075 407.0 314.0)" y="36">B6</text><text transform="matrix(0.144 0.001 0.036 0.075 434.9 314.2)" y="36">B7</text><text transform="matrix(0.144 0.001 0.043 0.076 462.9 314.3)" y="36">B8</text><text transform="matrix(0.144 0.001 0.050 0.076 490.8 314.5)" y="36">B1</text><text transform="matrix(0.144 0.001 0.057 0.076 518.8 314.6)" y="36">B2</text><text transform="matrix(0.144 0.001 0.064 0.076 546.8 314.8)" y="36">B3</text><text transform="matrix(0.144 0.001 0.071 0.076 574.8 314.9)" y="36">B4</text><text transform="matrix(0.145 0.001 0.078 0.076 602.9 315.1)" y="36">B5</text><text transform="matrix(0.134 0.001 -0.073 0.067 -19.1 296.4)" y="36">A6</text><text transform="matrix(0.134 0.001 -0.066 0.067 7.0 296.5)" y="36">A7</text><text transform="matrix(0.135 0.001 -0.060 0.067 33.1 296.7)" y="36">A8</text><text transform="matrix(0.135 0.001 -0.054 0.067 59.3 296.8)" y="36">A1</text><text transform="matrix(0.135 0.001 -0.048 0.067 85.4 296.9)" y="36">A2</text><text transform="matrix(0.135 0.001 -0.042 0.067 111.6 297.1)" y="36">A3</text><text transform="matrix(0.135 0.001 -0.036 0.067 137.8 297.2)" y="36">A4</text><text transform="matrix(0.135 0.001 -0.030 0.067 164.0 297.3)" y="36">A5</text><text transform="matrix(0.135 0.001 -0.024 0.067 190.2 297.4)" y="36">A6</text><text transform="matrix(0.135 0.001 -0.017 0.067 216.5 297.6)" y="36">A7</text><text transform="matrix(0.136 0.001 -0.011 0.068 242.8 297.7)" y="36">A8</text><text transform="matrix(0.136 0.001 -0.005 0.068 269.1 297.8)" y="36">A1</text><text transform="matrix(0.136 0.001 0.001 0.068 295.5 298.0)" y="36">A2</text><text transform="matrix(0.136 0.001 0.007 0.068 321.8 298.1)" y="36">A3</text><text transform="matrix(0.136 0.001 0.014 0.068 348.2 298.2)" y="36">A4</text><text transform="matrix(0.136 0.001 0.020 0.068 374.6 298.4)" y="36">A5</text><text transform="matrix(0.136 0.001 0.026 0.068 401.1 298.5)" y="36">A6</text><text transform="matrix(0.136 0.001 0.032 0.068 427.5 298.6)" y="36">A7</text><text transform="matrix(0.137 0.001 0.039 0.068 454.0 298.7)" y="36">A8</text><text transform="matrix(0.137 0.001 0.045 0.068 480.5 298.9)" y="36">A1</text><text transform="matrix(0.137 0.001 0.051 0.068 507.1 299.0)" y="36">A2</text><text transform="matrix(0.137 0.001 0.057 0.068 533.6 299.1)" y="36">A3</text><text transform="matrix(0.137 0.001 0.064 0.068 560.2 299.3)" y="36">A4</text><text transform="matrix(0.137 0.001 0.070 0.068 586.8 299.4)" y="36">A5</text><text transform="matrix(0.128 0.001 -0.071 0.061 -28.8 282.4)" y="36">H5</text><text transform="matrix(0.128 0.001 -0.066 0.061 -4.0 282.6)" y="36">H6</text><text transform="matrix(0.128 0.001 -0.060 0.061 20.8 282.7)" y="36">H7</text><text transform="matrix(0.128 0.001 -0.055 0.061 45.6 282.8)" y="36">H8</text><text transform="matrix(0.128 0.001 -0.049 0.061 70.5 282.9)" y="36">H1</text><text transform="matrix(0.128 0.001 -0.044 0.061 95.4 283.0)" y="36">H2</text><text transform="matrix(0.128 0.001 -0.038 0.061 120.3 283.1)" y="36">H3</text><text transform="matrix(0.128 0.001 -0.032 0.061 145.2 283.3)" y="36">H4</text><text transform="matrix(0.129 0.001 -0.027 0.061 170.2 283.4)" y="36">H5</text><text transform="matrix(0.129 0.001 -0.021 0.061 195.1 283.5)" y="36">H6</text><text transform="matrix(0.129 0.001 -0.016 0.061 220.1 283.6)" y="36">H7</text><text transform="matrix(0.129 0.001 -0.010 0.061 245.1 283.7)" y="36">H8</text><text transform="matrix(0.129 0.001 -0.005 0.061 270.2 283.9)" y="36">H1</text><text transform="matrix(0.129 0.001 0.001 0.061 295.2 284.0)" y="36">H2</text><text transform="matrix(0.129 0.001 0.007 0.061 320.3 284.1)" y="36">H3</text><text transform="matrix(0.129 0.001 0.012 0.061 345.4 284.2)" y="36">H4</text><text transform="matrix(0.129 0.001 0.018 0.061 370.5 284.3)" y="36">H5</text><text transform="matrix(0.130 0.001 0.024 0.061 395.7 284.4)" y="36">H6</text><text transform="matrix(0.130 0.001 0.029 0.061 420.8 284.6)" y="36">H7</text><text transform="matrix(0.130 0.001 0.035 0.062 446.0 284.7)" y="36">H8</text><text transform="matrix(0.130 0.001 0.041 0.062 471.2 284.8)" y="36">H1</text><text transform="matrix(0.130 0.001 0.046 0.062 496.5 284.9)" y="36">H2</text><text transform="matrix(0.130 0.001 0.052 0.062 521.7 285.0)" y="36">H3</text><text transform="matrix(0.130 0.001 0.058 0.062 547.0 285.2)" y="36">H4</text><text transform="matrix(0.130 0.001 0.063 0.062 572.3 285.3)" y="36">H5</text><text transform="matrix(0.131 0.001 0.069 0.062 597.6 285.4)" y="36">H6</text><text transform="matrix(0.122 0.001 -0.070 0.055 -37.7 269.8)" y="36">G4</text><text transform="matrix(0.122 0.001 -0.065 0.055 -14.1 269.9)" y="36">G5</text><text transform="matrix(0.122 0.001 -0.060 0.055 9.6 270.0)" y="36">G6</text><text transform="matrix(0.122 0.001 -0.055 0.055 33.3 270.1)" y="36">G7</text><text transform="matrix(0.122 0.001 -0.050 0.055 57.0 270.2)" y="36">G8</text><text transform="matrix(0.122 0.001 -0.045 0.055 80.7 270.3)" y="36">G1</text><text transform="matrix(0.122 0.001 -0.040 0.055 104.4 270.4)" y="36">G2</text><text transform="matrix(0.122 0.001 -0.035 0.055 128.2 270.5)" y="36">G3</text><text transform="matrix(0.123 0.001 -0.030 0.055 151.9 270.6)" y="36">G4</text><text transform="matrix(0.123 0.001 -0.024 0.055 175.7 270.7)" y="36">G5</text><text transform="matrix(0.123 0.001 -0.019 0.055 199.6 270.9)" y="36">G6</text><text transform="matrix(0.123 0.001 -0.014 0.056 223.4 271.0)" y="36">G7</text><text transform="matrix(0.123 0.001 -0.009 0.056 247.2 271.1)" y="36">G8</text><text transform="matrix(0.123 0.001 -0.004 0.056 271.1 271.2)" y="36">G1</text><text transform="matrix(0.123 0.001 0.001 0.056 295.0 271.3)" y="36">G2</text><text transform="matrix(0.123 0.001 0.006 0.056 318.9 271.4)" y="36">G3</text><text transform="matrix(0.123 0.001 0.011 0.056 342.9 271.5)" y="36">G4</text><text transform="matrix(0.123 0.001 0.016 0.056 366.8 271.6)" y="36">G5</text><text transform="matrix(0.124 0.001 0.021 0.056 390.8 271.7)" y="36">G6</text><text transform="matrix(0.124 0.001 0.027 0.056 414.8 271.8)" y="36">G7</text><text transform="matrix(0.124 0.001 0.032 0.056 438.8 271.9)" y="36">G8</text><text transform="matrix(0.124 0.001 0.037 0.056 462.8 272.0)" y="36">G1</text><text transform="matrix(0.124 0.001 0.042 0.056 486.9 272.1)" y="36">G2</text><text transform="matrix(0.124 0.001 0.047 0.056 510.9 272.3)" y="36">G3</text><text transform="matrix(0.124 0.001 0.052 0.056 535.0 272.4)" y="36">G4</text><text transform="matrix(0.124 0.001 0.058 0.056 559.1 272.5)" y="36">G5</text><text transform="matrix(0.124 0.001 0.063 0.056 583.3 272.6)" y="36">G6</text><text transform="matrix(0.124 0.001 0.068 0.056 607.4 272.7)" y="36">G7</text><text transform="matrix(0.116 0.000 -0.064 0.050 -23.2 258.4)" y="36">F4</text><text transform="matrix(0.116 0.000 -0.059 0.050 -0.6 258.5)" y="36">F5</text><text transform="matrix(0.117 0.000 -0.055 0.050 22.0 258.6)" y="36">F6</text><text transform="matrix(0.117 0.000 -0.050 0.050 44.6 258.6)" y="36">F7</text><text transform="matrix(0.117 0.001 -0.045 0.050 67.3 258.7)" y="36">F8</text><text transform="matrix(0.117 0.001 -0.041 0.050 90.0 258.8)" y="36">F1</text><text transform="matrix(0.117 0.001 -0.036 0.051 112.6 258.9)" y="36">F2</text><text transform="matrix(0.117 0.001 -0.032 0.051 135.4 259.0)" y="36">F3</text><text transform="matrix(0.117 0.001 -0.027 0.051 158.1 259.1)" y="36">F4</text><text transform="matrix(0.117 0.001 -0.022 0.051 180.8 259.2)" y="36">F5</text><text transform="matrix(0.117 0.001 -0.018 0.051 203.6 259.3)" y="36">F6</text><text transform="matrix(0.117 0.001 -0.013 0.051 226.4 259.4)" y="36">F7</text><text transform="matrix(0.117 0.001 -0.008 0.051 249.2 259.5)" y="36">F8</text><text transform="matrix(0.118 0.001 -0.004 0.051 272.0 259.6)" y="36">F1</text><text transform="matrix(0.118 0.001 0.001 0.051 294.8 259.7)" y="36">F2</text><text transform="matrix(0.118 0.001 0.006 0.051 317.7 259.8)" y="36">F3</text><text transform="matrix(0.118 0.001 0.010 0.051 340.5 259.9)" y="36">F4</text><text transform="matrix(0.118 0.001 0.015 0.051 363.4 260.0)" y="36">F5</text><text transform="matrix(0.118 0.001 0.020 0.051 386.3 260.1)" y="36">F6</text><text transform="matrix(0.118 0.001 0.024 0.051 409.2 260.2)" y="36">F7</text><text transform="matrix(0.118 0.001 0.029 0.051 432.2 260.3)" y="36">F8</text><text transform="matrix(0.118 0.001 0.034 0.051 455.1 260.4)" y="36">F1</text><text transform="matrix(0.118 0.001 0.038 0.051 478.1 260.5)" y="36">F2</text><text transform="matrix(0.119 0.001 0.043 0.051 501.1 260.6)" y="36">F3</text><text transform="matrix(0.119 0.001 0.048 0.051 524.1 260.7)" y="36">F4</text><text transform="matrix(0.119 0.001 0.053 0.051 547.2 260.8)" y="36">F5</text><text transform="matrix(0.119 0.001 0.057 0.051 570.2 260.9)" y="36">F6</text><text transform="matrix(0.119 0.001 0.062 0.051 593.3 261.0)" y="36">F7</text><text transform="matrix(0.111 0.000 -0.063 0.046 -31.6 247.8)" y="36">E3</text><text transform="matrix(0.112 0.000 -0.058 0.046 -10.0 247.9)" y="36">E4</text><text transform="matrix(0.112 0.000 -0.054 0.046 11.7 248.0)" y="36">E5</text><text transform="matrix(0.112 0.000 -0.050 0.046 33.4 248.1)" y="36">E6</text><text transform="matrix(0.112 0.000 -0.046 0.046 55.0 248.2)" y="36">E7</text><text transform="matrix(0.112 0.000 -0.042 0.046 76.7 248.2)" y="36">E8</text><text transform="matrix(0.112 0.000 -0.037 0.046 98.5 248.3)" y="36">E1</text><text transform="matrix(0.112 0.000 -0.033 0.046 120.2 248.4)" y="36">E2</text><text transform="matrix(0.112 0.000 -0.029 0.046 141.9 248.5)" y="36">E3</text><text transform="matrix(0.112 0.000 -0.025 0.046 163.7 248.6)" y="36">E4</text><text transform="matrix(0.112 0.000 -0.021 0.046 185.5 248.7)" y="36">E5</text><text transform="matrix(0.112 0.000 -0.016 0.046 207.3 248.8)" y="36">E6</text><text transform="matrix(0.112 0.000 -0.012 0.046 229.1 248.9)" y="36">E7</text><text transform="matrix(0.113 0.000 -0.008 0.047 250.9 249.0)" y="36">E8</text><text transform="matrix(0.113 0.000 -0.003 0.047 272.8 249.1)" y="36">E1</text><text transform="matrix(0.113 0.000 0.001 0.047 294.6 249.1)" y="36">E2</text><text transform="matrix(0.113 0.000 0.005 0.047 316.5 249.2)" y="36">E3</text><text transform="matrix(0.113 0.000 0.009 0.047 338.4 249.3)" y="36">E4</text><text transform="matrix(0.113 0.000 0.014 0.047 360.3 249.4)" y="36">E5</text><text transform="matrix(0.113 0.000 0.018 0.047 382.2 249.5)" y="36">E6</text><text transform="matrix(0.113 0.000 0.022 0.047 404.2 249.6)" y="36">E7</text><text transform="matrix(0.113 0.000 0.027 0.047 426.2 249.7)" y="36">E8</text><text transform="matrix(0.113 0.000 0.031 0.047 448.1 249.8)" y="36">E1</text><text transform="matrix(0.113 0.000 0.035 0.047 470.1 249.9)" y="36">E2</text><text transform="matrix(0.113 0.000 0.040 0.047 492.1 250.0)" y="36">E3</text><text transform="matrix(0.114 0.000 0.044 0.047 514.2 250.0)" y="36">E4</text><text transform="matrix(0.114 0.000 0.048 0.047 536.2 250.1)" y="36">E5</text><text transform="matrix(0.114 0.000 0.053 0.047 558.3 250.2)" y="36">E6</text><text transform="matrix(0.114 0.000 0.057 0.047 580.4 250.3)" y="36">E7</text><text transform="matrix(0.114 0.000 0.061 0.047 602.5 250.4)" y="36">E8</text><text transform="matrix(0.107 0.000 -0.062 0.042 -39.3 238.1)" y="36">D2</text><text transform="matrix(0.107 0.000 -0.058 0.042 -18.5 238.2)" y="36">D3</text><text transform="matrix(0.107 0.000 -0.054 0.042 2.2 238.3)" y="36">D4</text><text transform="matrix(0.107 0.000 -0.050 0.042 23.0 238.4)" y="36">D5</text><text transform="matrix(0.107 0.000 -0.046 0.043 43.8 238.4)" y="36">D6</text><text transform="matrix(0.107 0.000 -0.042 0.043 64.6 238.5)" y="36">D7</text><text transform="matrix(0.107 0.000 -0.038 0.043 85.4 238.6)" y="36">D8</text><text transform="matrix(0.107 0.000 -0.034 0.043 106.3 238.7)" y="36">D1</text><text transform="matrix(0.107 0.000 -0.031 0.043 127.1 238.8)" y="36">D2</text><text transform="matrix(0.108 0.000 -0.027 0.043 148.0 238.8)" y="36">D3</text><text transform="matrix(0.108 0.000 -0.023 0.043 168.9 238.9)" y="36">D4</text><text transform="matrix(0.108 0.000 -0.019 0.043 189.8 239.0)" y="36">D5</text><text transform="matrix(0.108 0.000 -0.015 0.043 210.7 239.1)" y="36">D6</text><text transform="matrix(0.108 0.000 -0.011 0.043 231.6 239.2)" y="36">D7</text><text transform="matrix(0.108 0.000 -0.007 0.043 252.5 239.3)" y="36">D8</text><text transform="matrix(0.108 0.000 -0.003 0.043 273.5 239.3)" y="36">D1</text><text transform="matrix(0.108 0.000 0.001 0.043 294.5 239.4)" y="36">D2</text><text transform="matrix(0.108 0.000 0.005 0.043 315.5 239.5)" y="36">D3</text><text transform="matrix(0.108 0.000 0.009 0.043 336.5 239.6)" y="36">D4</text><text transform="matrix(0.108 0.000 0.013 0.043 357.5 239.7)" y="36">D5</text><text transform="matrix(0.108 0.000 0.017 0.043 378.5 239.8)" y="36">D6</text><text transform="matrix(0.108 0.000 0.020 0.043 399.6 239.8)" y="36">D7</text><text transform="matrix(0.109 0.000 0.024 0.043 420.6 239.9)" y="36">D8</text><text transform="matrix(0.109 0.000 0.028 0.043 441.7 240.0)" y="36">D1</text><text transform="matrix(0.109 0.000 0.032 0.043 462.8 240.1)" y="36">D2</text><text transform="matrix(0.109 0.000 0.036 0.043 483.9 240.2)" y="36">D3</text><text transform="matrix(0.109 0.000 0.040 0.043 505.0 240.3)" y="36">D4</text><text transform="matrix(0.109 0.000 0.044 0.043 526.2 240.3)" y="36">D5</text><text transform="matrix(0.109 0.000 0.048 0.043 547.3 240.4)" y="36">D6</text><text transform="matrix(0.109 0.000 0.052 0.043 568.5 240.5)" y="36">D7</text><text transform="matrix(0.109 0.000 0.056 0.043 589.7 240.6)" y="36">D8</text><text transform="matrix(0.109 0.000 0.060 0.043 610.9 240.7)" y="36">D1</text><text transform="matrix(0.103 0.000 -0.057 0.039 -26.4 229.3)" y="36">C2</text><text transform="matrix(0.103 0.000 -0.053 0.039 -6.5 229.3)" y="36">C3</text><text transform="matrix(0.103 0.000 -0.050 0.039 13.5 229.4)" y="36">C4</text><text transform="matrix(0.103 0.000 -0.046 0.039 33.4 229.5)" y="36">C5</text><text transform="matrix(0.103 0.000 -0.043 0.039 53.4 229.6)" y="36">C6</text><text transform="matrix(0.103 0.000 -0.039 0.039 73.4 229.6)" y="36">C7</text><text transform="matrix(0.103 0.000 -0.035 0.039 93.4 229.7)" y="36">C8</text><text transform="matrix(0.103 0.000 -0.032 0.039 113.5 229.8)" y="36">C1</text><text transform="matrix(0.103 0.000 -0.028 0.039 133.5 229.9)" y="36">C2</text><text transform="matrix(0.103 0.000 -0.025 0.039 153.6 229.9)" y="36">C3</text><text transform="matrix(0.103 0.000 -0.021 0.039 173.6 230.0)" y="36">C4</text><text transform="matrix(0.103 0.000 -0.017 0.039 193.7 230.1)" y="36">C5</text><text transform="matrix(0.104 0.000 -0.014 0.039 213.8 230.2)" y="36">C6</text><text transform="matrix(0.104 0.000 -0.010 0.039 233.9 230.2)" y="36">C7</text><text transform="matrix(0.104 0.000 -0.007 0.040 254.0 230.3)" y="36">C8</text><text transform="matrix(0.104 0.000 -0.003 0.040 274.2 230.4)" y="36">C1</text><text transform="matrix(0.104 0.000 0.001 0.040 294.3 230.5)" y="36">C2</text><text transform="matrix(0.104 0.000 0.004 0.040 314.5 230.5)" y="36">C3</text><text transform="matrix(0.104 0.000 0.008 0.040 334.7 230.6)" y="36">C4</text><text transform="matrix(0.104 0.000 0.012 0.040 354.8 230.7)" y="36">C5</text><text transform="matrix(0.104 0.000 0.015 0.040 375.1 230.8)" y="36">C6</text><text transform="matrix(0.104 0.000 0.019 0.040 395.3 230.9)" y="36">C7</text><text transform="matrix(0.104 0.000 0.023 0.040 415.5 230.9)" y="36">C8</text><text transform="matrix(0.104 0.000 0.026 0.040 435.8 231.0)" y="36">C1</text><text transform="matrix(0.104 0.000 0.030 0.040 456.0 231.1)" y="36">C2</text><text transform="matrix(0.105 0.000 0.034 0.040 476.3 231.2)" y="36">C3</text><text transform="matrix(0.105 0.000 0.037 0.040 496.6 231.2)" y="36">C4</text><text transform="matrix(0.105 0.000 0.041 0.040 516.9 231.3)" y="36">C5</text><text transform="matrix(0.105 0.000 0.045 0.040 537.2 231.4)" y="36">C6</text><text transform="matrix(0.105 0.000 0.048 0.040 557.5 231.5)" y="36">C7</text><text transform="matrix(0.105 0.000 0.052 0.040 577.9 231.5)" y="36">C8</text><text transform="matrix(0.105 0.000 0.056 0.040 598.3 231.6)" y="36">C1</text><text transform="matrix(0.099 0.000 -0.056 0.036 -33.7 221.0)" y="36">B1</text><text transform="matrix(0.099 0.000 -0.053 0.036 -14.5 221.1)" y="36">B2</text><text transform="matrix(0.099 0.000 -0.049 0.036 4.7 221.1)" y="36">B3</text><text transform="matrix(0.099 0.000 -0.046 0.036 23.9 221.2)" y="36">B4</text><text transform="matrix(0.099 0.000 -0.043 0.036 43.1 221.3)" y="36">B5</text><text transform="matrix(0.099 0.000 -0.039 0.036 62.3 221.3)" y="36">B6</text><text transform="matrix(0.099 0.000 -0.036 0.036 81.6 221.4)" y="36">B7</text><text transform="matrix(0.099 0.000 -0.033 0.036 100.8 221.5)" y="36">B8</text><text transform="matrix(0.099 0.000 -0.029 0.036 120.1 221.6)" y="36">B1</text><text transform="matrix(0.099 0.000 -0.026 0.036 139.4 221.6)" y="36">B2</text><text transform="matrix(0.099 0.000 -0.023 0.036 158.7 221.7)" y="36">B3</text><text transform="matrix(0.100 0.000 -0.019 0.037 178.0 221.8)" y="36">B4</text><text transform="matrix(0.100 0.000 -0.016 0.037 197.3 221.8)" y="36">B5</text><text transform="matrix(0.100 0.000 -0.013 0.037 216.7 221.9)" y="36">B6</text><text transform="matrix(0.100 0.000 -0.009 0.037 236.0 222.0)" y="36">B7</text><text transform="matrix(0.100 0.000 -0.006 0.037 255.4 222.1)" y="36">B8</text><text transform="matrix(0.100 0.000 -0.003 0.037 274.8 222.1)" y="36">B1</text><text transform="matrix(0.100 0.000 0.001 0.037 294.2 222.2)" y="36">B2</text><text transform="matrix(0.100 0.000 0.004 0.037 313.6 222.3)" y="36">B3</text><text transform="matrix(0.100 0.000 0.007 0.037 333.0 222.3)" y="36">B4</text><text transform="matrix(0.100 0.000 0.011 0.037 352.4 222.4)" y="36">B5</text><text transform="matrix(0.100 0.000 0.014 0.037 371.9 222.5)" y="36">B6</text><text transform="matrix(0.100 0.000 0.018 0.037 391.3 222.5)" y="36">B7</text><text transform="matrix(0.100 0.000 0.021 0.037 410.8 222.6)" y="36">B8</text><text transform="matrix(0.100 0.000 0.024 0.037 430.3 222.7)" y="36">B1</text><text transform="matrix(0.100 0.000 0.028 0.037 449.8 222.8)" y="36">B2</text><text transform="matrix(0.101 0.000 0.031 0.037 469.3 222.8)" y="36">B3</text><text transform="matrix(0.101 0.000 0.034 0.037 488.8 222.9)" y="36">B4</text><text transform="matrix(0.101 0.000 0.038 0.037 508.3 223.0)" y="36">B5</text><text transform="matrix(0.101 0.000 0.041 0.037 527.9 223.0)" y="36">B6</text><text transform="matrix(0.101 0.000 0.045 0.037 547.4 223.1)" y="36">B7</text><text transform="matrix(0.101 0.000 0.048 0.037 567.0 223.2)" y="36">B8</text><text transform="matrix(0.101 0.000 0.052 0.037 586.6 223.3)" y="36">B1</text><text transform="matrix(0.101 0.000 0.055 0.037 606.2 223.3)" y="36">B2</text><text transform="matrix(0.095 0.000 -0.052 0.034 -22.0 213.4)" y="36">A1</text><text transform="matrix(0.095 0.000 -0.049 0.034 -3.5 213.5)" y="36">A2</text><text transform="matrix(0.095 0.000 -0.046 0.034 15.0 213.5)" y="36">A3</text><text transform="matrix(0.095 0.000 -0.043 0.034 33.5 213.6)" y="36">A4</text><text transform="matrix(0.096 0.000 -0.040 0.034 52.0 213.7)" y="36">A5</text><text transform="matrix(0.096 0.000 -0.037 0.034 70.6 213.7)" y="36">A6</text><text transform="matrix(0.096 0.000 -0.034 0.034 89.1 213.8)" y="36">A7</text><text transform="matrix(0.096 0.000 -0.030 0.034 107.7 213.9)" y="36">A8</text><text transform="matrix(0.096 0.000 -0.027 0.034 126.3 213.9)" y="36">A1</text><text transform="matrix(0.096 0.000 -0.024 0.034 144.9 214.0)" y="36">A2</text><text transform="matrix(0.096 0.000 -0.021 0.034 163.5 214.1)" y="36">A3</text><text transform="matrix(0.096 0.000 -0.018 0.034 182.1 214.1)" y="36">A4</text><text transform="matrix(0.096 0.000 -0.015 0.034 200.7 214.2)" y="36">A5</text><text transform="matrix(0.096 0.000 -0.012 0.034 219.4 214.3)" y="36">A6</text><text transform="matrix(0.096 0.000 -0.009 0.034 238.0 214.3)" y="36">A7</text><text transform="matrix(0.096 0.000 -0.006 0.034 256.7 214.4)" y="36">A8</text><text transform="matrix(0.096 0.000 -0.003 0.034 275.4 214.4)" y="36">A1</text><text transform="matrix(0.096 0.000 0.001 0.034 294.0 214.5)" y="36">A2</text><text transform="matrix(0.096 0.000 0.004 0.034 312.7 214.6)" y="36">A3</text><text transform="matrix(0.096 0.000 0.007 0.034 331.4 214.6)" y="36">A4</text><text transform="matrix(0.096 0.000 0.010 0.034 350.2 214.7)" y="36">A5</text><text transform="matrix(0.097 0.000 0.013 0.034 368.9 214.8)" y="36">A6</text><text transform="matrix(0.097 0.000 0.016 0.034 387.7 214.8)" y="36">A7</text><text transform="matrix(0.097 0.000 0.019 0.034 406.4 214.9)" y="36">A8</text><text transform="matrix(0.097 0.000 0.023 0.034 425.2 215.0)" y="36">A1</text><text transform="matrix(0.097 0.000 0.026 0.034 444.0 215.0)" y="36">A2</text><text transform="matrix(0.097 0.000 0.029 0.034 462.8 215.1)" y="36">A3</text><text transform="matrix(0.097 0.000 0.032 0.034 481.6 215.2)" y="36">A4</text><text transform="matrix(0.097 0.000 0.035 0.034 500.4 215.2)" y="36">A5</text><text transform="matrix(0.097 0.000 0.038 0.034 519.2 215.3)" y="36">A6</text><text transform="matrix(0.097 0.000 0.042 0.034 538.1 215.4)" y="36">A7</text><text transform="matrix(0.097 0.000 0.045 0.034 556.9 215.4)" y="36">A8</text><text transform="matrix(0.097 0.000 0.048 0.034 575.8 215.5)" y="36">A1</text><text transform="matrix(0.097 0.000 0.051 0.034 594.7 215.6)" y="36">A2</text><text transform="matrix(0.092 0.000 -0.051 0.031 -28.9 206.3)" y="36">H8</text><text transform="matrix(0.092 0.000 -0.048 0.031 -11.1 206.3)" y="36">H1</text><text transform="matrix(0.092 0.000 -0.046 0.031 6.7 206.4)" y="36">H2</text><text transform="matrix(0.092 0.000 -0.043 0.031 24.6 206.5)" y="36">H3</text><text transform="matrix(0.092 0.000 -0.040 0.031 42.5 206.5)" y="36">H4</text><text transform="matrix(0.092 0.000 -0.037 0.031 60.4 206.6)" y="36">H5</text><text transform="matrix(0.092 0.000 -0.034 0.031 78.3 206.6)" y="36">H6</text><text transform="matrix(0.092 0.000 -0.031 0.031 96.2 206.7)" y="36">H7</text><text transform="matrix(0.092 0.000 -0.028 0.031 114.1 206.8)" y="36">H8</text><text transform="matrix(0.092 0.000 -0.025 0.032 132.0 206.8)" y="36">H1</text><text transform="matrix(0.092 0.000 -0.023 0.032 150.0 206.9)" y="36">H2</text><text transform="matrix(0.093 0.000 -0.020 0.032 167.9 206.9)" y="36">H3</text><text transform="matrix(0.093 0.000 -0.017 0.032 185.9 207.0)" y="36">H4</text><text transform="matrix(0.093 0.000 -0.014 0.032 203.9 207.1)" y="36">H5</text><text transform="matrix(0.093 0.000 -0.011 0.032 221.9 207.1)" y="36">H6</text><text transform="matrix(0.093 0.000 -0.008 0.032 239.9 207.2)" y="36">H7</text><text transform="matrix(0.093 0.000 -0.005 0.032 257.9 207.3)" y="36">H8</text><text transform="matrix(0.093 0.000 -0.002 0.032 275.9 207.3)" y="36">H1</text><text transform="matrix(0.093 0.000 0.001 0.032 293.9 207.4)" y="36">H2</text><text transform="matrix(0.093 0.000 0.003 0.032 312.0 207.4)" y="36">H3</text><text transform="matrix(0.093 0.000 0.006 0.032 330.0 207.5)" y="36">H4</text><text transform="matrix(0.093 0.000 0.009 0.032 348.1 207.6)" y="36">H5</text><text transform="matrix(0.093 0.000 0.012 0.032 366.2 207.6)" y="36">H6</text><text transform="matrix(0.093 0.000 0.015 0.032 384.2 207.7)" y="36">H7</text><text transform="matrix(0.093 0.000 0.018 0.032 402.3 207.7)" y="36">H8</text><text transform="matrix(0.093 0.000 0.021 0.032 420.5 207.8)" y="36">H1</text><text transform="matrix(0.093 0.000 0.024 0.032 438.6 207.9)" y="36">H2</text><text transform="matrix(0.093 0.000 0.027 0.032 456.7 207.9)" y="36">H3</text><text transform="matrix(0.094 0.000 0.030 0.032 474.9 208.0)" y="36">H4</text><text transform="matrix(0.094 0.000 0.033 0.032 493.0 208.0)" y="36">H5</text><text transform="matrix(0.094 0.000 0.036 0.032 511.2 208.1)" y="36">H6</text><text transform="matrix(0.094 0.000 0.039 0.032 529.4 208.2)" y="36">H7</text><text transform="matrix(0.094 0.000 0.042 0.032 547.5 208.2)" y="36">H8</text><text transform="matrix(0.094 0.000 0.045 0.032 565.7 208.3)" y="36">H1</text><text transform="matrix(0.094 0.000 0.048 0.032 584.0 208.4)" y="36">H2</text><text transform="matrix(0.094 0.000 0.051 0.032 602.2 208.4)" y="36">H3</text><text transform="matrix(0.089 0.000 -0.050 0.029 -35.4 199.6)" y="36">G7</text><text transform="matrix(0.089 0.000 -0.048 0.029 -18.2 199.7)" y="36">G8</text><text transform="matrix(0.089 0.000 -0.045 0.029 -0.9 199.8)" y="36">G1</text><text transform="matrix(0.089 0.000 -0.043 0.029 16.3 199.8)" y="36">G2</text><text transform="matrix(0.089 0.000 -0.040 0.029 33.6 199.9)" y="36">G3</text><text transform="matrix(0.089 0.000 -0.037 0.029 50.9 199.9)" y="36">G4</text><text transform="matrix(0.089 0.000 -0.035 0.029 68.1 200.0)" y="36">G5</text><text transform="matrix(0.089 0.000 -0.032 0.029 85.4 200.0)" y="36">G6</text><text transform="matrix(0.089 0.000 -0.029 0.029 102.7 200.1)" y="36">G7</text><text transform="matrix(0.089 0.000 -0.026 0.029 120.1 200.1)" y="36">G8</text><text transform="matrix(0.089 0.000 -0.024 0.029 137.4 200.2)" y="36">G1</text><text transform="matrix(0.089 0.000 -0.021 0.029 154.7 200.3)" y="36">G2</text><text transform="matrix(0.089 0.000 -0.018 0.029 172.1 200.3)" y="36">G3</text><text transform="matrix(0.089 0.000 -0.016 0.029 189.4 200.4)" y="36">G4</text><text transform="matrix(0.090 0.000 -0.013 0.029 206.8 200.4)" y="36">G5</text><text transform="matrix(0.090 0.000 -0.010 0.030 224.2 200.5)" y="36">G6</text><text transform="matrix(0.090 0.000 -0.008 0.030 241.6 200.5)" y="36">G7</text><text transform="matrix(0.090 0.000 -0.005 0.030 259.0 200.6)" y="36">G8</text><text transform="matrix(0.090 0.000 -0.002 0.030 276.4 200.7)" y="36">G1</text><text transform="matrix(0.090 0.000 0.001 0.030 293.8 200.7)" y="36">G2</text><text transform="matrix(0.090 0.000 0.003 0.030 311.2 200.8)" y="36">G3</text><text transform="matrix(0.090 0.000 0.006 0.030 328.7 200.8)" y="36">G4</text><text transform="matrix(0.090 0.000 0.009 0.030 346.1 200.9)" y="36">G5</text><text transform="matrix(0.090 0.000 0.011 0.030 363.6 200.9)" y="36">G6</text><text transform="matrix(0.090 0.000 0.014 0.030 381.1 201.0)" y="36">G7</text><text transform="matrix(0.090 0.000 0.017 0.030 398.5 201.1)" y="36">G8</text><text transform="matrix(0.090 0.000 0.020 0.030 416.0 201.1)" y="36">G1</text><text transform="matrix(0.090 0.000 0.022 0.030 433.5 201.2)" y="36">G2</text><text transform="matrix(0.090 0.000 0.025 0.030 451.1 201.2)" y="36">G3</text><text transform="matrix(0.090 0.000 0.028 0.030 468.6 201.3)" y="36">G4</text><text transform="matrix(0.090 0.000 0.031 0.030 486.1 201.3)" y="36">G5</text><text transform="matrix(0.090 0.000 0.033 0.030 503.7 201.4)" y="36">G6</text><text transform="matrix(0.090 0.000 0.036 0.030 521.2 201.5)" y="36">G7</text><text transform="matrix(0.091 0.000 0.039 0.030 538.8 201.5)" y="36">G8</text><text transform="matrix(0.091 0.000 0.042 0.030 556.4 201.6)" y="36">G1</text><text transform="matrix(0.091 0.000 0.044 0.030 574.0 201.6)" y="36">G2</text><text transform="matrix(0.091 0.000 0.047 0.030 591.6 201.7)" y="36">G3</text><text transform="matrix(0.091 0.000 0.050 0.030 609.2 201.7)" y="36">G4</text><text transform="matrix(0.086 0.000 -0.047 0.027 -24.8 193.5)" y="36">F7</text><text transform="matrix(0.086 0.000 -0.045 0.027 -8.1 193.5)" y="36">F8</text><text transform="matrix(0.086 0.000 -0.042 0.027 8.6 193.6)" y="36">F1</text><text transform="matrix(0.086 0.000 -0.040 0.027 25.3 193.6)" y="36">F2</text><text transform="matrix(0.086 0.000 -0.037 0.027 42.0 193.7)" y="36">F3</text><text transform="matrix(0.086 0.000 -0.035 0.027 58.7 193.8)" y="36">F4</text><text transform="matrix(0.086 0.000 -0.032 0.027 75.4 193.8)" y="36">F5</text><text transform="matrix(0.086 0.000 -0.030 0.027 92.1 193.9)" y="36">F6</text><text transform="matrix(0.086 0.000 -0.027 0.027 108.9 193.9)" y="36">F7</text><text transform="matrix(0.086 0.000 -0.025 0.028 125.6 194.0)" y="36">F8</text><text transform="matrix(0.086 0.000 -0.022 0.028 142.4 194.0)" y="36">F1</text><text transform="matrix(0.086 0.000 -0.020 0.028 159.2 194.1)" y="36">F2</text><text transform="matrix(0.086 0.000 -0.017 0.028 175.9 194.1)" y="36">F3</text><text transform="matrix(0.087 0.000 -0.015 0.028 192.7 194.2)" y="36">F4</text><text transform="matrix(0.087 0.000 -0.012 0.028 209.5 194.2)" y="36">F5</text><text transform="matrix(0.087 0.000 -0.010 0.028 226.4 194.3)" y="36">F6</text><text transform="matrix(0.087 0.000 -0.007 0.028 243.2 194.3)" y="36">F7</text><text transform="matrix(0.087 0.000 -0.005 0.028 260.0 194.4)" y="36">F8</text><text transform="matrix(0.087 0.000 -0.002 0.028 276.8 194.4)" y="36">F1</text><text transform="matrix(0.087 0.000 0.000 0.028 293.7 194.5)" y="36">F2</text><text transform="matrix(0.087 0.000 0.003 0.028 310.6 194.6)" y="36">F3</text><text transform="matrix(0.087 0.000 0.006 0.028 327.4 194.6)" y="36">F4</text><text transform="matrix(0.087 0.000 0.008 0.028 344.3 194.7)" y="36">F5</text><text transform="matrix(0.087 0.000 0.011 0.028 361.2 194.7)" y="36">F6</text><text transform="matrix(0.087 0.000 0.013 0.028 378.1 194.8)" y="36">F7</text><text transform="matrix(0.087 0.000 0.016 0.028 395.0 194.8)" y="36">F8</text><text transform="matrix(0.087 0.000 0.018 0.028 411.9 194.9)" y="36">F1</text><text transform="matrix(0.087 0.000 0.021 0.028 428.9 194.9)" y="36">F2</text><text transform="matrix(0.087 0.000 0.023 0.028 445.8 195.0)" y="36">F3</text><text transform="matrix(0.087 0.000 0.026 0.028 462.7 195.0)" y="36">F4</text><text transform="matrix(0.087 0.000 0.029 0.028 479.7 195.1)" y="36">F5</text><text transform="matrix(0.087 0.000 0.031 0.028 496.7 195.1)" y="36">F6</text><text transform="matrix(0.087 0.000 0.034 0.028 513.6 195.2)" y="36">F7</text><text transform="matrix(0.088 0.000 0.036 0.028 530.6 195.2)" y="36">F8</text><text transform="matrix(0.088 0.000 0.039 0.028 547.6 195.3)" y="36">F1</text><text transform="matrix(0.088 0.000 0.041 0.028 564.6 195.4)" y="36">F2</text><text transform="matrix(0.088 0.000 0.044 0.028 581.7 195.4)" y="36">F3</text><text transform="matrix(0.088 0.000 0.047 0.028 598.7 195.5)" y="36">F4</text><text transform="matrix(0.083 0.000 -0.047 0.026 -31.0 187.7)" y="36">E6</text><text transform="matrix(0.083 0.000 -0.044 0.026 -14.8 187.7)" y="36">E7</text><text transform="matrix(0.083 0.000 -0.042 0.026 1.3 187.8)" y="36">E8</text><text transform="matrix(0.083 0.000 -0.040 0.026 17.5 187.8)" y="36">E1</text><text transform="matrix(0.083 0.000 -0.037 0.026 33.6 187.9)" y="36">E2</text><text transform="matrix(0.083 0.000 -0.035 0.026 49.8 187.9)" y="36">E3</text><text transform="matrix(0.083 0.000 -0.033 0.026 66.0 188.0)" y="36">E4</text><text transform="matrix(0.083 0.000 -0.030 0.026 82.2 188.0)" y="36">E5</text><text transform="matrix(0.084 0.000 -0.028 0.026 98.4 188.1)" y="36">E6</text><text transform="matrix(0.084 0.000 -0.026 0.026 114.6 188.1)" y="36">E7</text><text transform="matrix(0.084 0.000 -0.023 0.026 130.8 188.2)" y="36">E8</text><text transform="matrix(0.084 0.000 -0.021 0.026 147.1 188.2)" y="36">E1</text><text transform="matrix(0.084 0.000 -0.019 0.026 163.3 188.3)" y="36">E2</text><text transform="matrix(0.084 0.000 -0.016 0.026 179.6 188.3)" y="36">E3</text><text transform="matrix(0.084 0.000 -0.014 0.026 195.8 188.4)" y="36">E4</text><text transform="matrix(0.084 0.000 -0.011 0.026 212.1 188.4)" y="36">E5</text><text transform="matrix(0.084 0.000 -0.009 0.026 228.4 188.5)" y="36">E6</text><text transform="matrix(0.084 0.000 -0.007 0.026 244.7 188.5)" y="36">E7</text><text transform="matrix(0.084 0.000 -0.004 0.026 261.0 188.6)" y="36">E8</text><text transform="matrix(0.084 0.000 -0.002 0.026 277.3 188.6)" y="36">E1</text><text transform="matrix(0.084 0.000 0.000 0.026 293.6 188.7)" y="36">E2</text><text transform="matrix(0.084 0.000 0.003 0.026 309.9 188.7)" y="36">E3</text><text transform="matrix(0.084 0.000 0.005 0.026 326.3 188.8)" y="36">E4</text><text transform="matrix(0.084 0.000 0.008 0.026 342.6 188.8)" y="36">E5</text><text transform="matrix(0.084 0.000 0.010 0.026 359.0 188.9)" y="36">E6</text><text transform="matrix(0.084 0.000 0.012 0.026 375.3 188.9)" y="36">E7</text><text transform="matrix(0.084 0.000 0.015 0.026 391.7 189.0)" y="36">E8</text><text transform="matrix(0.084 0.000 0.017 0.026 408.1 189.0)" y="36">E1</text><text transform="matrix(0.084 0.000 0.020 0.026 424.5 189.1)" y="36">E2</text><text transform="matrix(0.085 0.000 0.022 0.026 440.9 189.1)" y="36">E3</text><text transform="matrix(0.085 0.000 0.024 0.026 457.3 189.2)" y="36">E4</text><text transform="matrix(0.085 0.000 0.027 0.026 473.7 189.2)" y="36">E5</text><text transform="matrix(0.085 0.000 0.029 0.026 490.1 189.3)" y="36">E6</text><text transform="matrix(0.085 0.000 0.032 0.026 506.5 189.3)" y="36">E7</text><text transform="matrix(0.085 0.000 0.034 0.026 523.0 189.4)" y="36">E8</text><text transform="matrix(0.085 0.000 0.036 0.026 539.4 189.4)" y="36">E1</text><text transform="matrix(0.085 0.000 0.039 0.026 555.9 189.5)" y="36">E2</text><text transform="matrix(0.085 0.000 0.041 0.026 572.4 189.5)" y="36">E3</text><text transform="matrix(0.085 0.000 0.044 0.026 588.9 189.6)" y="36">E4</text><text transform="matrix(0.085 0.000 0.046 0.026 605.4 189.6)" y="36">E5</text><text transform="matrix(0.081 0.000 -0.046 0.024 -36.8 182.2)" y="36">D5</text><text transform="matrix(0.081 0.000 -0.044 0.024 -21.2 182.3)" y="36">D6</text><text transform="matrix(0.081 0.000 -0.042 0.024 -5.5 182.3)" y="36">D7</text><text transform="matrix(0.081 0.000 -0.039 0.024 10.2 182.4)" y="36">D8</text><text transform="matrix(0.081 0.000 -0.037 0.024 25.8 182.4)" y="36">D1</text><text transform="matrix(0.081 0.000 -0.035 0.024 41.5 182.5)" y="36">D2</text><text transform="matrix(0.081 0.000 -0.033 0.024 57.2 182.5)" y="36">D3</text><text transform="matrix(0.081 0.000 -0.031 0.024 72.9 182.6)" y="36">D4</text><text transform="matrix(0.081 0.000 -0.028 0.024 88.6 182.6)" y="36">D5</text><text transform="matrix(0.081 0.000 -0.026 0.024 104.3 182.6)" y="36">D6</text><text transform="matrix(0.081 0.000 -0.024 0.024 120.0 182.7)" y="36">D7</text><text transform="matrix(0.081 0.000 -0.022 0.024 135.7 182.7)" y="36">D8</text><text transform="matrix(0.081 0.000 -0.020 0.024 151.5 182.8)" y="36">D1</text><text transform="matrix(0.081 0.000 -0.017 0.024 167.2 182.8)" y="36">D2</text><text transform="matrix(0.081 0.000 -0.015 0.024 183.0 182.9)" y="36">D3</text><text transform="matrix(0.081 0.000 -0.013 0.024 198.7 182.9)" y="36">D4</text><text transform="matrix(0.081 0.000 -0.011 0.024 214.5 183.0)" y="36">D5</text><text transform="matrix(0.081 0.000 -0.009 0.024 230.3 183.0)" y="36">D6</text><text transform="matrix(0.081 0.000 -0.006 0.024 246.1 183.1)" y="36">D7</text><text transform="matrix(0.081 0.000 -0.004 0.024 261.9 183.1)" y="36">D8</text><text transform="matrix(0.081 0.000 -0.002 0.024 277.7 183.2)" y="36">D1</text><text transform="matrix(0.081 0.000 0.000 0.024 293.5 183.2)" y="36">D2</text><text transform="matrix(0.082 0.000 0.003 0.024 309.3 183.3)" y="36">D3</text><text transform="matrix(0.082 0.000 0.005 0.024 325.2 183.3)" y="36">D4</text><text transform="matrix(0.082 0.000 0.007 0.024 341.0 183.3)" y="36">D5</text><text transform="matrix(0.082 0.000 0.009 0.024 356.8 183.4)" y="36">D6</text><text transform="matrix(0.082 0.000 0.012 0.024 372.7 183.4)" y="36">D7</text><text transform="matrix(0.082 0.000 0.014 0.024 388.6 183.5)" y="36">D8</text><text transform="matrix(0.082 0.000 0.016 0.024 404.4 183.5)" y="36">D1</text><text transform="matrix(0.082 0.000 0.018 0.024 420.3 183.6)" y="36">D2</text><text transform="matrix(0.082 0.000 0.021 0.024 436.2 183.6)" y="36">D3</text><text transform="matrix(0.082 0.000 0.023 0.025 452.1 183.7)" y="36">D4</text><text transform="matrix(0.082 0.000 0.025 0.025 468.0 183.7)" y="36">D5</text><text transform="matrix(0.082 0.000 0.027 0.025 484.0 183.8)" y="36">D6</text><text transform="matrix(0.082 0.000 0.030 0.025 499.9 183.8)" y="36">D7</text><text transform="matrix(0.082 0.000 0.032 0.025 515.8 183.9)" y="36">D8</text><text transform="matrix(0.082 0.000 0.034 0.025 531.8 183.9)" y="36">D1</text><text transform="matrix(0.082 0.000 0.037 0.025 547.7 184.0)" y="36">D2</text><text transform="matrix(0.082 0.000 0.039 0.025 563.7 184.0)" y="36">D3</text><text transform="matrix(0.082 0.000 0.041 0.025 579.6 184.1)" y="36">D4</text><text transform="matrix(0.082 0.000 0.043 0.025 595.6 184.1)" y="36">D5</text><text transform="matrix(0.082 0.000 0.046 0.025 611.6 184.1)" y="36">D6</text><text transform="matrix(0.078 0.000 -0.043 0.023 -27.1 177.1)" y="36">C5</text><text transform="matrix(0.078 0.000 -0.041 0.023 -11.9 177.2)" y="36">C6</text><text transform="matrix(0.078 0.000 -0.039 0.023 3.3 177.2)" y="36">C7</text><text transform="matrix(0.078 0.000 -0.037 0.023 18.5 177.3)" y="36">C8</text><text transform="matrix(0.078 0.000 -0.035 0.023 33.7 177.3)" y="36">C1</text><text transform="matrix(0.078 0.000 -0.033 0.023 48.9 177.4)" y="36">C2</text><text transform="matrix(0.078 0.000 -0.031 0.023 64.1 177.4)" y="36">C3</text><text transform="matrix(0.078 0.000 -0.029 0.023 79.4 177.4)" y="36">C4</text><text transform="matrix(0.079 0.000 -0.027 0.023 94.6 177.5)" y="36">C5</text><text transform="matrix(0.079 0.000 -0.025 0.023 109.8 177.5)" y="36">C6</text><text transform="matrix(0.079 0.000 -0.023 0.023 125.1 177.6)" y="36">C7</text><text transform="matrix(0.079 0.000 -0.021 0.023 140.4 177.6)" y="36">C8</text><text transform="matrix(0.079 0.000 -0.018 0.023 155.6 177.7)" y="36">C1</text><text transform="matrix(0.079 0.000 -0.016 0.023 170.9 177.7)" y="36">C2</text><text transform="matrix(0.079 0.000 -0.014 0.023 186.2 177.8)" y="36">C3</text><text transform="matrix(0.079 0.000 -0.012 0.023 201.5 177.8)" y="36">C4</text><text transform="matrix(0.079 0.000 -0.010 0.023 216.8 177.8)" y="36">C5</text><text transform="matrix(0.079 0.000 -0.008 0.023 232.1 177.9)" y="36">C6</text><text transform="matrix(0.079 0.000 -0.006 0.023 247.4 177.9)" y="36">C7</text><text transform="matrix(0.079 0.000 -0.004 0.023 262.7 178.0)" y="36">C8</text><text transform="matrix(0.079 0.000 -0.002 0.023 278.1 178.0)" y="36">C1</text><text transform="matrix(0.079 0.000 0.000 0.023 293.4 178.1)" y="36">C2</text><text transform="matrix(0.079 0.000 0.002 0.023 308.8 178.1)" y="36">C3</text><text transform="matrix(0.079 0.000 0.005 0.023 324.1 178.2)" y="36">C4</text><text transform="matrix(0.079 0.000 0.007 0.023 339.5 178.2)" y="36">C5</text><text transform="matrix(0.079 0.000 0.009 0.023 354.9 178.2)" y="36">C6</text><text transform="matrix(0.079 0.000 0.011 0.023 370.3 178.3)" y="36">C7</text><text transform="matrix(0.079 0.000 0.013 0.023 385.6 178.3)" y="36">C8</text><text transform="matrix(0.079 0.000 0.015 0.023 401.0 178.4)" y="36">C1</text><text transform="matrix(0.079 0.000 0.017 0.023 416.5 178.4)" y="36">C2</text><text transform="matrix(0.079 0.000 0.019 0.023 431.9 178.5)" y="36">C3</text><text transform="matrix(0.079 0.000 0.022 0.023 447.3 178.5)" y="36">C4</text><text transform="matrix(0.080 0.000 0.024 0.023 462.7 178.6)" y="36">C5</text><text transform="matrix(0.080 0.000 0.026 0.023 478.2 178.6)" y="36">C6</text><text transform="matrix(0.080 0.000 0.028 0.023 493.6 178.6)" y="36">C7</text><text transform="matrix(0.080 0.000 0.030 0.023 509.1 178.7)" y="36">C8</text><text transform="matrix(0.080 0.000 0.032 0.023 524.5 178.7)" y="36">C1</text><text transform="matrix(0.080 0.000 0.034 0.023 540.0 178.8)" y="36">C2</text><text transform="matrix(0.080 0.000 0.037 0.023 555.5 178.8)" y="36">C3</text><text transform="matrix(0.080 0.000 0.039 0.023 571.0 178.9)" y="36">C4</text><text transform="matrix(0.080 0.000 0.041 0.023 586.5 178.9)" y="36">C5</text><text transform="matrix(0.080 0.000 0.043 0.023 602.0 179.0)" y="36">C6</text><text transform="matrix(0.076 0.000 -0.043 0.021 -32.7 172.3)" y="36">B4</text><text transform="matrix(0.076 0.000 -0.041 0.021 -17.9 172.4)" y="36">B5</text><text transform="matrix(0.076 0.000 -0.039 0.021 -3.2 172.4)" y="36">B6</text><text transform="matrix(0.076 0.000 -0.037 0.021 11.6 172.4)" y="36">B7</text><text transform="matrix(0.076 0.000 -0.035 0.021 26.3 172.5)" y="36">B8</text><text transform="matrix(0.076 0.000 -0.033 0.021 41.1 172.5)" y="36">B1</text><text transform="matrix(0.076 0.000 -0.031 0.021 55.9 172.6)" y="36">B2</text><text transform="matrix(0.076 0.000 -0.029 0.021 70.7 172.6)" y="36">B3</text><text transform="matrix(0.076 0.000 -0.027 0.021 85.4 172.6)" y="36">B4</text><text transform="matrix(0.076 0.000 -0.025 0.021 100.2 172.7)" y="36">B5</text><text transform="matrix(0.076 0.000 -0.023 0.021 115.1 172.7)" y="36">B6</text><text transform="matrix(0.076 0.000 -0.021 0.022 129.9 172.8)" y="36">B7</text><text transform="matrix(0.076 0.000 -0.019 0.022 144.7 172.8)" y="36">B8</text><text transform="matrix(0.076 0.000 -0.017 0.022 159.5 172.8)" y="36">B1</text><text transform="matrix(0.076 0.000 -0.015 0.022 174.4 172.9)" y="36">B2</text><text transform="matrix(0.077 0.000 -0.013 0.022 189.2 172.9)" y="36">B3</text><text transform="matrix(0.077 0.000 -0.012 0.022 204.1 173.0)" y="36">B4</text><text transform="matrix(0.077 0.000 -0.010 0.022 218.9 173.0)" y="36">B5</text><text transform="matrix(0.077 0.000 -0.008 0.022 233.8 173.1)" y="36">B6</text><text transform="matrix(0.077 0.000 -0.006 0.022 248.7 173.1)" y="36">B7</text><text transform="matrix(0.077 0.000 -0.004 0.022 263.5 173.1)" y="36">B8</text><text transform="matrix(0.077 0.000 -0.002 0.022 278.4 173.2)" y="36">B1</text><text transform="matrix(0.077 0.000 0.000 0.022 293.3 173.2)" y="36">B2</text><text transform="matrix(0.077 0.000 0.002 0.022 308.2 173.3)" y="36">B3</text><text transform="matrix(0.077 0.000 0.004 0.022 323.2 173.3)" y="36">B4</text><text transform="matrix(0.077 0.000 0.006 0.022 338.1 173.3)" y="36">B5</text><text transform="matrix(0.077 0.000 0.008 0.022 353.0 173.4)" y="36">B6</text><text transform="matrix(0.077 0.000 0.010 0.022 367.9 173.4)" y="36">B7</text><text transform="matrix(0.077 0.000 0.012 0.022 382.9 173.5)" y="36">B8</text><text transform="matrix(0.077 0.000 0.014 0.022 397.8 173.5)" y="36">B1</text><text transform="matrix(0.077 0.000 0.016 0.022 412.8 173.6)" y="36">B2</text><text transform="matrix(0.077 0.000 0.018 0.022 427.8 173.6)" y="36">B3</text><text transform="matrix(0.077 0.000 0.020 0.022 442.7 173.6)" y="36">B4</text><text transform="matrix(0.077 0.000 0.022 0.022 457.7 173.7)" y="36">B5</text><text transform="matrix(0.077 0.000 0.024 0.022 472.7 173.7)" y="36">B6</text><text transform="matrix(0.077 0.000 0.026 0.022 487.7 173.8)" y="36">B7</text><text transform="matrix(0.077 0.000 0.028 0.022 502.7 173.8)" y="36">B8</text><text transform="matrix(0.077 0.000 0.030 0.022 517.7 173.8)" y="36">B1</text><text transform="matrix(0.077 0.000 0.032 0.022 532.8 173.9)" y="36">B2</text><text transform="matrix(0.077 0.000 0.034 0.022 547.8 173.9)" y="36">B3</text><text transform="matrix(0.077 0.000 0.036 0.022 562.8 174.0)" y="36">B4</text><text transform="matrix(0.078 0.000 0.038 0.022 577.9 174.0)" y="36">B5</text><text transform="matrix(0.078 0.000 0.040 0.022 592.9 174.1)" y="36">B6</text><text transform="matrix(0.078 0.000 0.043 0.022 608.0 174.1)" y="36">B7</text><text transform="matrix(0.074 0.000 -0.042 0.020 -38.0 167.8)" y="36">A3</text><text transform="matrix(0.074 0.000 -0.040 0.020 -23.6 167.8)" y="36">A4</text><text transform="matrix(0.074 0.000 -0.039 0.020 -9.3 167.8)" y="36">A5</text><text transform="matrix(0.074 0.000 -0.037 0.020 5.0 167.9)" y="36">A6</text><text transform="matrix(0.074 0.000 -0.035 0.020 19.4 167.9)" y="36">A7</text><text transform="matrix(0.074 0.000 -0.033 0.020 33.7 167.9)" y="36">A8</text><text transform="matrix(0.074 0.000 -0.031 0.020 48.1 168.0)" y="36">A1</text><text transform="matrix(0.074 0.000 -0.029 0.020 62.4 168.0)" y="36">A2</text><text transform="matrix(0.074 0.000 -0.028 0.020 76.8 168.1)" y="36">A3</text><text transform="matrix(0.074 0.000 -0.026 0.020 91.2 168.1)" y="36">A4</text><text transform="matrix(0.074 0.000 -0.024 0.020 105.6 168.1)" y="36">A5</text><text transform="matrix(0.074 0.000 -0.022 0.020 120.0 168.2)" y="36">A6</text><text transform="matrix(0.074 0.000 -0.020 0.020 134.4 168.2)" y="36">A7</text><text transform="matrix(0.074 0.000 -0.018 0.020 148.8 168.3)" y="36">A8</text><text transform="matrix(0.074 0.000 -0.016 0.020 163.2 168.3)" y="36">A1</text><text transform="matrix(0.074 0.000 -0.015 0.020 177.6 168.3)" y="36">A2</text><text transform="matrix(0.074 0.000 -0.013 0.020 192.1 168.4)" y="36">A3</text><text transform="matrix(0.074 0.000 -0.011 0.020 206.5 168.4)" y="36">A4</text><text transform="matrix(0.074 0.000 -0.009 0.020 220.9 168.5)" y="36">A5</text><text transform="matrix(0.074 0.000 -0.007 0.020 235.4 168.5)" y="36">A6</text><text transform="matrix(0.075 0.000 -0.005 0.020 249.8 168.5)" y="36">A7</text><text transform="matrix(0.075 0.000 -0.003 0.020 264.3 168.6)" y="36">A8</text><text transform="matrix(0.075 0.000 -0.002 0.020 278.8 168.6)" y="36">A1</text><text transform="matrix(0.075 0.000 0.000 0.020 293.3 168.7)" y="36">A2</text><text transform="matrix(0.075 0.000 0.002 0.020 307.7 168.7)" y="36">A3</text><text transform="matrix(0.075 0.000 0.004 0.020 322.2 168.7)" y="36">A4</text><text transform="matrix(0.075 0.000 0.006 0.020 336.7 168.8)" y="36">A5</text><text transform="matrix(0.075 0.000 0.008 0.020 351.2 168.8)" y="36">A6</text><text transform="matrix(0.075 0.000 0.010 0.020 365.8 168.8)" y="36">A7</text><text transform="matrix(0.075 0.000 0.012 0.020 380.3 168.9)" y="36">A8</text><text transform="matrix(0.075 0.000 0.014 0.021 394.8 168.9)" y="36">A1</text><text transform="matrix(0.075 0.000 0.015 0.021 409.3 169.0)" y="36">A2</text><text transform="matrix(0.075 0.000 0.017 0.021 423.9 169.0)" y="36">A3</text><text transform="matrix(0.075 0.000 0.019 0.021 438.4 169.0)" y="36">A4</text><text transform="matrix(0.075 0.000 0.021 0.021 453.0 169.1)" y="36">A5</text><text transform="matrix(0.075 0.000 0.023 0.021 467.6 169.1)" y="36">A6</text><text transform="matrix(0.075 0.000 0.025 0.021 482.1 169.2)" y="36">A7</text><text transform="matrix(0.075 0.000 0.027 0.021 496.7 169.2)" y="36">A8</text><text transform="matrix(0.075 0.000 0.029 0.021 511.3 169.2)" y="36">A1</text><text transform="matrix(0.075 0.000 0.031 0.021 525.9 169.3)" y="36">A2</text><text transform="matrix(0.075 0.000 0.033 0.021 540.5 169.3)" y="36">A3</text><text transform="matrix(0.075 0.000 0.034 0.021 555.1 169.4)" y="36">A4</text><text transform="matrix(0.075 0.000 0.036 0.021 569.7 169.4)" y="36">A5</text><text transform="matrix(0.075 0.000 0.038 0.021 584.4 169.4)" y="36">A6</text><text transform="matrix(0.075 0.000 0.040 0.021 599.0 169.5)" y="36">A7</text><text transform="matrix(0.072 0.000 -0.040 0.019 -29.0 163.5)" y="36">H3</text><text transform="matrix(0.072 0.000 -0.038 0.019 -15.1 163.5)" y="36">H4</text><text transform="matrix(0.072 0.000 -0.037 0.019 -1.1 163.6)" y="36">H5</text><text transform="matrix(0.072 0.000 -0.035 0.019 12.8 163.6)" y="36">H6</text><text transform="matrix(0.072 0.000 -0.033 0.019 26.8 163.6)" y="36">H7</text><text transform="matrix(0.072 0.000 -0.031 0.019 40.7 163.7)" y="36">H8</text><text transform="matrix(0.072 0.000 -0.030 0.019 54.7 163.7)" y="36">H1</text><text transform="matrix(0.072 0.000 -0.028 0.019 68.7 163.7)" y="36">H2</text><text transform="matrix(0.072 0.000 -0.026 0.019 82.7 163.8)" y="36">H3</text><text transform="matrix(0.072 0.000 -0.024 0.019 96.6 163.8)" y="36">H4</text><text transform="matrix(0.072 0.000 -0.023 0.019 110.6 163.8)" y="36">H5</text><text transform="matrix(0.072 0.000 -0.021 0.019 124.6 163.9)" y="36">H6</text><text transform="matrix(0.072 0.000 -0.019 0.019 138.6 163.9)" y="36">H7</text><text transform="matrix(0.072 0.000 -0.017 0.019 152.7 164.0)" y="36">H8</text><text transform="matrix(0.072 0.000 -0.016 0.019 166.7 164.0)" y="36">H1</text><text transform="matrix(0.072 0.000 -0.014 0.019 180.7 164.0)" y="36">H2</text><text transform="matrix(0.072 0.000 -0.012 0.019 194.7 164.1)" y="36">H3</text><text transform="matrix(0.072 0.000 -0.010 0.019 208.8 164.1)" y="36">H4</text><text transform="matrix(0.072 0.000 -0.009 0.019 222.8 164.1)" y="36">H5</text><text transform="matrix(0.072 0.000 -0.007 0.019 236.9 164.2)" y="36">H6</text><text transform="matrix(0.072 0.000 -0.005 0.019 251.0 164.2)" y="36">H7</text><text transform="matrix(0.073 0.000 -0.003 0.019 265.0 164.3)" y="36">H8</text><text transform="matrix(0.073 0.000 -0.001 0.019 279.1 164.3)" y="36">H1</text><text transform="matrix(0.073 0.000 0.000 0.019 293.2 164.3)" y="36">H2</text><text transform="matrix(0.073 0.000 0.002 0.019 307.3 164.4)" y="36">H3</text><text transform="matrix(0.073 0.000 0.004 0.019 321.4 164.4)" y="36">H4</text><text transform="matrix(0.073 0.000 0.006 0.019 335.5 164.4)" y="36">H5</text><text transform="matrix(0.073 0.000 0.007 0.019 349.6 164.5)" y="36">H6</text><text transform="matrix(0.073 0.000 0.009 0.019 363.7 164.5)" y="36">H7</text><text transform="matrix(0.073 0.000 0.011 0.019 377.8 164.6)" y="36">H8</text><text transform="matrix(0.073 0.000 0.013 0.019 392.0 164.6)" y="36">H1</text><text transform="matrix(0.073 0.000 0.015 0.019 406.1 164.6)" y="36">H2</text><text transform="matrix(0.073 0.000 0.016 0.019 420.2 164.7)" y="36">H3</text><text transform="matrix(0.073 0.000 0.018 0.019 434.4 164.7)" y="36">H4</text><text transform="matrix(0.073 0.000 0.020 0.019 448.5 164.7)" y="36">H5</text><text transform="matrix(0.073 0.000 0.022 0.019 462.7 164.8)" y="36">H6</text><text transform="matrix(0.073 0.000 0.024 0.019 476.9 164.8)" y="36">H7</text><text transform="matrix(0.073 0.000 0.025 0.019 491.1 164.9)" y="36">H8</text><text transform="matrix(0.073 0.000 0.027 0.019 505.2 164.9)" y="36">H1</text><text transform="matrix(0.073 0.000 0.029 0.019 519.4 164.9)" y="36">H2</text><text transform="matrix(0.073 0.000 0.031 0.019 533.6 165.0)" y="36">H3</text><text transform="matrix(0.073 0.000 0.033 0.019 547.8 165.0)" y="36">H4</text><text transform="matrix(0.073 0.000 0.034 0.020 562.1 165.0)" y="36">H5</text><text transform="matrix(0.073 0.000 0.036 0.020 576.3 165.1)" y="36">H6</text><text transform="matrix(0.073 0.000 0.038 0.020 590.5 165.1)" y="36">H7</text><text transform="matrix(0.073 0.000 0.040 0.020 604.7 165.2)" y="36">H8</text><text transform="matrix(0.070 0.000 -0.040 0.018 -34.1 159.4)" y="36">G2</text><text transform="matrix(0.070 0.000 -0.038 0.018 -20.5 159.4)" y="36">G3</text><text transform="matrix(0.070 0.000 -0.036 0.018 -7.0 159.5)" y="36">G4</text><text transform="matrix(0.070 0.000 -0.035 0.018 6.6 159.5)" y="36">G5</text><text transform="matrix(0.070 0.000 -0.033 0.018 20.2 159.5)" y="36">G6</text><text transform="matrix(0.070 0.000 -0.031 0.018 33.8 159.6)" y="36">G7</text><text transform="matrix(0.070 0.000 -0.030 0.018 47.4 159.6)" y="36">G8</text><text transform="matrix(0.070 0.000 -0.028 0.018 61.0 159.6)" y="36">G1</text><text transform="matrix(0.070 0.000 -0.026 0.018 74.6 159.7)" y="36">G2</text><text transform="matrix(0.070 0.000 -0.025 0.018 88.2 159.7)" y="36">G3</text><text transform="matrix(0.070 0.000 -0.023 0.018 101.8 159.7)" y="36">G4</text><text transform="matrix(0.070 0.000 -0.021 0.018 115.4 159.8)" y="36">G5</text><text transform="matrix(0.070 0.000 -0.020 0.018 129.0 159.8)" y="36">G6</text><text transform="matrix(0.070 0.000 -0.018 0.018 142.7 159.9)" y="36">G7</text><text transform="matrix(0.070 0.000 -0.016 0.018 156.3 159.9)" y="36">G8</text><text transform="matrix(0.070 0.000 -0.015 0.018 170.0 159.9)" y="36">G1</text><text transform="matrix(0.070 0.000 -0.013 0.018 183.6 160.0)" y="36">G2</text><text transform="matrix(0.070 0.000 -0.011 0.018 197.3 160.0)" y="36">G3</text><text transform="matrix(0.070 0.000 -0.010 0.018 211.0 160.0)" y="36">G4</text><text transform="matrix(0.070 0.000 -0.008 0.018 224.6 160.1)" y="36">G5</text><text transform="matrix(0.071 0.000 -0.006 0.018 238.3 160.1)" y="36">G6</text><text transform="matrix(0.071 0.000 -0.005 0.018 252.0 160.1)" y="36">G7</text><text transform="matrix(0.071 0.000 -0.003 0.018 265.7 160.2)" y="36">G8</text><text transform="matrix(0.071 0.000 -0.001 0.018 279.4 160.2)" y="36">G1</text><text transform="matrix(0.071 0.000 0.000 0.018 293.1 160.2)" y="36">G2</text><text transform="matrix(0.071 0.000 0.002 0.018 306.8 160.3)" y="36">G3</text><text transform="matrix(0.071 0.000 0.004 0.018 320.5 160.3)" y="36">G4</text><text transform="matrix(0.071 0.000 0.005 0.018 334.3 160.3)" y="36">G5</text><text transform="matrix(0.071 0.000 0.007 0.018 348.0 160.4)" y="36">G6</text><text transform="matrix(0.071 0.000 0.009 0.018 361.7 160.4)" y="36">G7</text><text transform="matrix(0.071 0.000 0.010 0.018 375.5 160.5)" y="36">G8</text><text transform="matrix(0.071 0.000 0.012 0.018 389.2 160.5)" y="36">G1</text><text transform="matrix(0.071 0.000 0.014 0.018 403.0 160.5)" y="36">G2</text><text transform="matrix(0.071 0.000 0.016 0.018 416.8 160.6)" y="36">G3</text><text transform="matrix(0.071 0.000 0.017 0.018 430.5 160.6)" y="36">G4</text><text transform="matrix(0.071 0.000 0.019 0.018 444.3 160.6)" y="36">G5</text><text transform="matrix(0.071 0.000 0.021 0.018 458.1 160.7)" y="36">G6</text><text transform="matrix(0.071 0.000 0.022 0.018 471.9 160.7)" y="36">G7</text><text transform="matrix(0.071 0.000 0.024 0.018 485.7 160.7)" y="36">G8</text><text transform="matrix(0.071 0.000 0.026 0.018 499.5 160.8)" y="36">G1</text><text transform="matrix(0.071 0.000 0.027 0.018 513.3 160.8)" y="36">G2</text><text transform="matrix(0.071 0.000 0.029 0.018 527.1 160.8)" y="36">G3</text><text transform="matrix(0.071 0.000 0.031 0.018 541.0 160.9)" y="36">G4</text><text transform="matrix(0.071 0.000 0.033 0.018 554.8 160.9)" y="36">G5</text><text transform="matrix(0.071 0.000 0.034 0.018 568.6 160.9)" y="36">G6</text><text transform="matrix(0.071 0.000 0.036 0.018 582.5 161.0)" y="36">G7</text><text transform="matrix(0.071 0.000 0.038 0.019 596.3 161.0)" y="36">G8</text><text transform="matrix(0.071 0.000 0.039 0.019 610.2 161.1)" y="36">G1</text><text transform="matrix(0.068 0.000 -0.039 0.017 -38.9 155.5)" y="36">F1</text><text transform="matrix(0.068 0.000 -0.038 0.017 -25.7 155.6)" y="36">F2</text><text transform="matrix(0.068 0.000 -0.036 0.017 -12.5 155.6)" y="36">F3</text><text transform="matrix(0.068 0.000 -0.034 0.017 0.7 155.6)" y="36">F4</text><text transform="matrix(0.068 0.000 -0.033 0.017 13.9 155.7)" y="36">F5</text><text transform="matrix(0.068 0.000 -0.031 0.017 27.2 155.7)" y="36">F6</text><text transform="matrix(0.068 0.000 -0.030 0.017 40.4 155.7)" y="36">F7</text><text transform="matrix(0.068 0.000 -0.028 0.017 53.6 155.8)" y="36">F8</text><text transform="matrix(0.068 0.000 -0.027 0.017 66.9 155.8)" y="36">F1</text><text transform="matrix(0.068 0.000 -0.025 0.017 80.1 155.8)" y="36">F2</text><text transform="matrix(0.068 0.000 -0.023 0.017 93.4 155.9)" y="36">F3</text><text transform="matrix(0.068 0.000 -0.022 0.017 106.7 155.9)" y="36">F4</text><text transform="matrix(0.068 0.000 -0.020 0.017 119.9 155.9)" y="36">F5</text><text transform="matrix(0.068 0.000 -0.019 0.017 133.2 156.0)" y="36">F6</text><text transform="matrix(0.068 0.000 -0.017 0.017 146.5 156.0)" y="36">F7</text><text transform="matrix(0.068 0.000 -0.016 0.017 159.8 156.0)" y="36">F8</text><text transform="matrix(0.069 0.000 -0.014 0.017 173.1 156.1)" y="36">F1</text><text transform="matrix(0.069 0.000 -0.012 0.017 186.4 156.1)" y="36">F2</text><text transform="matrix(0.069 0.000 -0.011 0.017 199.7 156.1)" y="36">F3</text><text transform="matrix(0.069 0.000 -0.009 0.017 213.0 156.2)" y="36">F4</text><text transform="matrix(0.069 0.000 -0.008 0.017 226.3 156.2)" y="36">F5</text><text transform="matrix(0.069 0.000 -0.006 0.017 239.7 156.2)" y="36">F6</text><text transform="matrix(0.069 0.000 -0.004 0.017 253.0 156.3)" y="36">F7</text><text transform="matrix(0.069 0.000 -0.003 0.017 266.3 156.3)" y="36">F8</text><text transform="matrix(0.069 0.000 -0.001 0.017 279.7 156.3)" y="36">F1</text><text transform="matrix(0.069 0.000 0.000 0.017 293.0 156.4)" y="36">F2</text><text transform="matrix(0.069 0.000 0.002 0.017 306.4 156.4)" y="36">F3</text><text transform="matrix(0.069 0.000 0.003 0.017 319.8 156.4)" y="36">F4</text><text transform="matrix(0.069 0.000 0.005 0.017 333.1 156.5)" y="36">F5</text><text transform="matrix(0.069 0.000 0.007 0.017 346.5 156.5)" y="36">F6</text><text transform="matrix(0.069 0.000 0.008 0.017 359.9 156.5)" y="36">F7</text><text transform="matrix(0.069 0.000 0.010 0.017 373.3 156.6)" y="36">F8</text><text transform="matrix(0.069 0.000 0.011 0.017 386.7 156.6)" y="36">F1</text><text transform="matrix(0.069 0.000 0.013 0.017 400.1 156.6)" y="36">F2</text><text transform="matrix(0.069 0.000 0.015 0.017 413.5 156.7)" y="36">F3</text><text transform="matrix(0.069 0.000 0.016 0.017 426.9 156.7)" y="36">F4</text><text transform="matrix(0.069 0.000 0.018 0.017 440.3 156.7)" y="36">F5</text><text transform="matrix(0.069 0.000 0.020 0.017 453.7 156.8)" y="36">F6</text><text transform="matrix(0.069 0.000 0.021 0.017 467.2 156.8)" y="36">F7</text><text transform="matrix(0.069 0.000 0.023 0.017 480.6 156.8)" y="36">F8</text><text transform="matrix(0.069 0.000 0.024 0.017 494.1 156.9)" y="36">F1</text><text transform="matrix(0.069 0.000 0.026 0.018 507.5 156.9)" y="36">F2</text><text transform="matrix(0.069 0.000 0.028 0.018 521.0 156.9)" y="36">F3</text><text transform="matrix(0.069 0.000 0.029 0.018 534.4 157.0)" y="36">F4</text><text transform="matrix(0.069 0.000 0.031 0.018 547.9 157.0)" y="36">F5</text><text transform="matrix(0.069 0.000 0.032 0.018 561.4 157.0)" y="36">F6</text><text transform="matrix(0.069 0.000 0.034 0.018 574.9 157.1)" y="36">F7</text><text transform="matrix(0.070 0.000 0.036 0.018 588.3 157.1)" y="36">F8</text><text transform="matrix(0.070 0.000 0.037 0.018 601.8 157.1)" y="36">F1</text><text transform="matrix(0.066 0.000 -0.037 0.016 -30.6 151.9)" y="36">E1</text><text transform="matrix(0.066 0.000 -0.036 0.016 -17.8 151.9)" y="36">E2</text><text transform="matrix(0.066 0.000 -0.034 0.016 -4.9 152.0)" y="36">E3</text><text transform="matrix(0.066 0.000 -0.033 0.016 8.0 152.0)" y="36">E4</text><text transform="matrix(0.066 0.000 -0.031 0.016 20.9 152.0)" y="36">E5</text><text transform="matrix(0.066 0.000 -0.030 0.016 33.8 152.0)" y="36">E6</text><text transform="matrix(0.066 0.000 -0.028 0.016 46.7 152.1)" y="36">E7</text><text transform="matrix(0.067 0.000 -0.027 0.016 59.6 152.1)" y="36">E8</text><text transform="matrix(0.067 0.000 -0.025 0.016 72.5 152.1)" y="36">E1</text><text transform="matrix(0.067 0.000 -0.024 0.016 85.5 152.2)" y="36">E2</text><text transform="matrix(0.067 0.000 -0.022 0.016 98.4 152.2)" y="36">E3</text><text transform="matrix(0.067 0.000 -0.021 0.016 111.3 152.2)" y="36">E4</text><text transform="matrix(0.067 0.000 -0.019 0.016 124.3 152.3)" y="36">E5</text><text transform="matrix(0.067 0.000 -0.018 0.016 137.2 152.3)" y="36">E6</text><text transform="matrix(0.067 0.000 -0.016 0.016 150.1 152.3)" y="36">E7</text><text transform="matrix(0.067 0.000 -0.015 0.016 163.1 152.4)" y="36">E8</text><text transform="matrix(0.067 0.000 -0.013 0.016 176.1 152.4)" y="36">E1</text><text transform="matrix(0.067 0.000 -0.012 0.016 189.0 152.4)" y="36">E2</text><text transform="matrix(0.067 0.000 -0.010 0.016 202.0 152.5)" y="36">E3</text><text transform="matrix(0.067 0.000 -0.009 0.016 215.0 152.5)" y="36">E4</text><text transform="matrix(0.067 0.000 -0.007 0.016 228.0 152.5)" y="36">E5</text><text transform="matrix(0.067 0.000 -0.006 0.016 241.0 152.6)" y="36">E6</text><text transform="matrix(0.067 0.000 -0.004 0.016 254.0 152.6)" y="36">E7</text><text transform="matrix(0.067 0.000 -0.003 0.016 267.0 152.6)" y="36">E8</text><text transform="matrix(0.067 0.000 -0.001 0.016 280.0 152.7)" y="36">E1</text><text transform="matrix(0.067 0.000 0.000 0.017 293.0 152.7)" y="36">E2</text><text transform="matrix(0.067 0.000 0.002 0.017 306.0 152.7)" y="36">E3</text><text transform="matrix(0.067 0.000 0.003 0.017 319.0 152.7)" y="36">E4</text><text transform="matrix(0.067 0.000 0.005 0.017 332.1 152.8)" y="36">E5</text><text transform="matrix(0.067 0.000 0.006 0.017 345.1 152.8)" y="36">E6</text><text transform="matrix(0.067 0.000 0.008 0.017 358.1 152.8)" y="36">E7</text><text transform="matrix(0.067 0.000 0.009 0.017 371.2 152.9)" y="36">E8</text><text transform="matrix(0.067 0.000 0.011 0.017 384.2 152.9)" y="36">E1</text><text transform="matrix(0.067 0.000 0.012 0.017 397.3 152.9)" y="36">E2</text><text transform="matrix(0.067 0.000 0.014 0.017 410.4 153.0)" y="36">E3</text><text transform="matrix(0.067 0.000 0.016 0.017 423.4 153.0)" y="36">E4</text><text transform="matrix(0.067 0.000 0.017 0.017 436.5 153.0)" y="36">E5</text><text transform="matrix(0.067 0.000 0.019 0.017 449.6 153.1)" y="36">E6</text><text transform="matrix(0.067 0.000 0.020 0.017 462.7 153.1)" y="36">E7</text><text transform="matrix(0.067 0.000 0.022 0.017 475.8 153.1)" y="36">E8</text><text transform="matrix(0.068 0.000 0.023 0.017 488.9 153.2)" y="36">E1</text><text transform="matrix(0.068 0.000 0.025 0.017 502.0 153.2)" y="36">E2</text><text transform="matrix(0.068 0.000 0.026 0.017 515.1 153.2)" y="36">E3</text><text transform="matrix(0.068 0.000 0.028 0.017 528.2 153.3)" y="36">E4</text><text transform="matrix(0.068 0.000 0.029 0.017 541.4 153.3)" y="36">E5</text><text transform="matrix(0.068 0.000 0.031 0.017 554.5 153.3)" y="36">E6</text><text transform="matrix(0.068 0.000 0.032 0.017 567.6 153.4)" y="36">E7</text><text transform="matrix(0.068 0.000 0.034 0.017 580.8 153.4)" y="36">E8</text><text transform="matrix(0.068 0.000 0.035 0.017 593.9 153.4)" y="36">E1</text><text transform="matrix(0.068 0.000 0.037 0.017 607.1 153.4)" y="36">E2</text></g>
<rect width="572" height="66" fill="#e6e6e6"/>
</g></svg>
<svg style="left:246px;top:105px" width="572" height="594" viewBox="246 105 572 594">
<defs>
<clipPath id="vc2"><rect x="246" y="105" width="572" height="594"/></clipPath>
<filter id="bl3" x="-50%" y="-50%" width="200%" height="200%"><feGaussianBlur stdDeviation="4"/></filter><filter id="bl2" x="-50%" y="-50%" width="200%" height="200%"><feGaussianBlur stdDeviation="2.2"/></filter>
<filter id="bl6" x="-50%" y="-50%" width="200%" height="200%"><feGaussianBlur stdDeviation="7"/></filter>
<filter id="bl12" x="-80%" y="-80%" width="260%" height="260%"><feGaussianBlur stdDeviation="12"/></filter>
<radialGradient id="sph" cx="0.5" cy="0.38" r="0.6"><stop offset="0" stop-color="#95e896"/><stop offset="0.6" stop-color="#6cc86d"/><stop offset="1" stop-color="#4aa84c"/></radialGradient>
<linearGradient id="cubef" x1="0" y1="0" x2="0" y2="1"><stop offset="0" stop-color="#b2fdb2"/><stop offset="1" stop-color="#9cf79c"/></linearGradient>
<radialGradient id="glowg" cx="0.5" cy="0.5" r="0.5"><stop offset="0" stop-color="#a8ffa8" stop-opacity="0.9"/><stop offset="1" stop-color="#a8ffa8" stop-opacity="0"/></radialGradient>
<radialGradient id="glowp" cx="0.5" cy="0.5" r="0.5"><stop offset="0" stop-color="#8080ff" stop-opacity="0.7"/><stop offset="0.6" stop-color="#9090ff" stop-opacity="0.35"/><stop offset="1" stop-color="#9090ff" stop-opacity="0"/></radialGradient>
<linearGradient id="cylg" x1="0" y1="0" x2="0" y2="1"><stop offset="0" stop-color="#ffffff"/><stop offset="0.35" stop-color="#fbf6ff"/><stop offset="1" stop-color="#e6d8ff"/></linearGradient>
<pattern id="cylchk" patternUnits="userSpaceOnUse" width="16" height="13" patternTransform="translate(735 360) skewY(8)"><rect width="8" height="6.5" fill="#cdb9f5"/><rect x="8" y="6.5" width="8" height="6.5" fill="#cdb9f5"/></pattern>

<radialGradient id="cylfade" cx="0.2" cy="1" r="0.95"><stop offset="0" stop-color="#fff" stop-opacity="0.85"/><stop offset="0.6" stop-color="#fff" stop-opacity="0.6"/><stop offset="0.95" stop-color="#fff" stop-opacity="0"/></radialGradient><mask id="cylmask"><rect x="730" y="350" width="75" height="70" fill="url(#cylfade)"/></mask>
</defs>
<g clip-path="url(#vc2)">
<!-- sphere shadow -->
<ellipse cx="333" cy="412" rx="32" ry="8" fill="#000" opacity="0.4" filter="url(#bl3)"/>
<!-- sphere -->
<ellipse cx="332.4" cy="387.3" rx="30.4" ry="27.7" fill="url(#sph)"/>
<!-- cube shadow -->
<path d="M472 442 L492 440 L492 508 L466 500 Z" fill="#000" opacity="0.55" filter="url(#bl3)"/>
<!-- cube glow -->
<ellipse cx="524" cy="464" rx="68" ry="66" fill="url(#glowg)" opacity="0.7"/>
<rect x="478" y="406" width="92" height="116" fill="#b0ffb0" opacity="0.85" filter="url(#bl3)"/>
<!-- cube -->
<path d="M489.6 413 L562.3 413 L562 458 L485 458 Z" fill="#dcffdc"/>
<path d="M485 458 L562 458 L562 515.5 L487 515.5 Z" fill="url(#cubef)"/>
<!-- cylinder shadow -->
<path d="M703 386 Q712 378 738 376 L741 409 Q722 408 707 396 Z" fill="#000" opacity="0.5" filter="url(#bl2)"/>
<!-- cylinder glow -->
<ellipse cx="775" cy="385" rx="70" ry="62" fill="url(#glowp)"/>
<g transform="rotate(16 767.4 381.5)">
<path d="M735 359.6 L799.8 359.6 L799.8 403.4 A32.4 15 0 0 1 735 403.4 Z" fill="none" stroke="#5a5aff" stroke-width="7" opacity="0.7" filter="url(#bl3)"/>
<path d="M735 359.6 L799.8 359.6 L799.8 403.4 A32.4 15 0 0 1 735 403.4 Z" fill="url(#cylg)"/>
<path d="M799.8 359.6L799.7 360.7L799.4 361.8L799.0 362.9L798.4 364.0L798.4 370.3L799.0 369.2L799.4 368.1L799.7 367.0L799.8 365.9ZM799.8 372.1L799.7 373.2L799.4 374.3L799.0 375.4L798.4 376.5L798.4 382.8L799.0 381.7L799.4 380.6L799.7 379.5L799.8 378.4ZM799.8 384.6L799.7 385.7L799.4 386.9L799.0 388.0L798.4 389.0L798.4 395.3L799.0 394.2L799.4 393.1L799.7 392.0L799.8 390.9ZM799.8 397.1L799.7 398.3L799.4 399.4L799.0 400.5L798.4 401.6L798.4 407.8L799.0 406.7L799.4 405.6L799.7 404.5L799.8 403.4ZM798.4 370.3L797.1 371.9L795.5 373.4L793.5 374.8L791.2 376.1L791.2 382.3L793.5 381.0L795.5 379.6L797.1 378.1L798.4 376.5ZM798.4 382.8L797.1 384.4L795.5 385.9L793.5 387.3L791.2 388.6L791.2 394.8L793.5 393.5L795.5 392.1L797.1 390.6L798.4 389.0ZM798.4 395.3L797.1 396.9L795.5 398.4L793.5 399.8L791.2 401.1L791.2 407.3L793.5 406.0L795.5 404.6L797.1 403.1L798.4 401.6ZM791.2 369.8L788.5 371.0L785.7 372.0L782.6 372.9L779.2 373.6L779.2 379.8L782.6 379.1L785.7 378.2L788.5 377.2L791.2 376.1ZM791.2 382.3L788.5 383.5L785.7 384.5L782.6 385.4L779.2 386.1L779.2 392.3L782.6 391.6L785.7 390.8L788.5 389.7L791.2 388.6ZM791.2 394.8L788.5 396.0L785.7 397.0L782.6 397.9L779.2 398.6L779.2 404.8L782.6 404.1L785.7 403.3L788.5 402.3L791.2 401.1ZM791.2 407.3L788.5 408.5L785.7 409.5L782.6 410.4L779.2 411.1L779.2 417.4L782.6 416.7L785.7 415.8L788.5 414.8L791.2 413.6ZM779.2 379.8L775.8 380.3L772.2 380.7L768.6 380.8L765.0 380.8L765.0 387.1L768.6 387.1L772.2 386.9L775.8 386.6L779.2 386.1ZM779.2 392.3L775.8 392.9L772.2 393.2L768.6 393.4L765.0 393.3L765.0 399.6L768.6 399.6L772.2 399.5L775.8 399.1L779.2 398.6ZM779.2 404.8L775.8 405.4L772.2 405.7L768.6 405.9L765.0 405.8L765.0 412.1L768.6 412.1L772.2 412.0L775.8 411.6L779.2 411.1ZM765.0 374.6L761.4 374.3L757.9 373.9L754.5 373.4L751.2 372.6L751.2 378.9L754.5 379.6L757.9 380.2L761.4 380.6L765.0 380.8ZM765.0 387.1L761.4 386.9L757.9 386.4L754.5 385.9L751.2 385.1L751.2 391.4L754.5 392.1L757.9 392.7L761.4 393.1L765.0 393.3ZM765.0 399.6L761.4 399.4L757.9 399.0L754.5 398.4L751.2 397.6L751.2 403.9L754.5 404.6L757.9 405.2L761.4 405.6L765.0 405.8ZM765.0 412.1L761.4 411.9L757.9 411.5L754.5 410.9L751.2 410.1L751.2 416.4L754.5 417.2L757.9 417.7L761.4 418.1L765.0 418.4ZM751.2 378.9L748.2 377.9L745.4 376.9L742.9 375.6L740.6 374.3L740.6 380.6L742.9 381.9L745.4 383.1L748.2 384.2L751.2 385.1ZM751.2 391.4L748.2 390.4L745.4 389.4L742.9 388.2L740.6 386.8L740.6 393.1L742.9 394.4L745.4 395.6L748.2 396.7L751.2 397.6ZM751.2 403.9L748.2 403.0L745.4 401.9L742.9 400.7L740.6 399.3L740.6 405.6L742.9 406.9L745.4 408.1L748.2 409.2L751.2 410.1ZM740.6 368.1L738.8 366.6L737.2 365.1L736.1 363.5L735.4 361.8L735.4 368.1L736.1 369.7L737.2 371.3L738.8 372.9L740.6 374.3ZM740.6 380.6L738.8 379.1L737.2 377.6L736.1 376.0L735.4 374.4L735.4 380.6L736.1 382.3L737.2 383.9L738.8 385.4L740.6 386.8ZM740.6 393.1L738.8 391.6L737.2 390.1L736.1 388.5L735.4 386.9L735.4 393.1L736.1 394.8L737.2 396.4L738.8 397.9L740.6 399.3ZM740.6 405.6L738.8 404.2L737.2 402.6L736.1 401.0L735.4 399.4L735.4 405.6L736.1 407.3L737.2 408.9L738.8 410.4L740.6 411.9ZM735.4 368.1L735.2 367.5L735.1 367.0L735.0 366.4L735.0 365.9L735.0 372.1L735.0 372.7L735.1 373.2L735.2 373.8L735.4 374.4ZM735.4 380.6L735.2 380.1L735.1 379.5L735.0 378.9L735.0 378.4L735.0 384.6L735.0 385.2L735.1 385.8L735.2 386.3L735.4 386.9ZM735.4 393.1L735.2 392.6L735.1 392.0L735.0 391.4L735.0 390.9L735.0 397.1L735.0 397.7L735.1 398.3L735.2 398.8L735.4 399.4Z" fill="#c9b4f4" mask="url(#cylmask)"/>
<ellipse cx="767.4" cy="359.6" rx="32.4" ry="15" fill="#ffffff"/>
</g>
</g>
</svg>
<!-- labels -->
<div class="a" style="left:246px;top:296px;width:194px;height:24px;background:#0b78c6"></div>
<div class="t" style="left:246px;top:300.5px;font-size:13.6px;color:#f4f4f4;-webkit-text-stroke:0.45px #f4f4f4;text-shadow:1.5px 1.5px 0 #0a0a0a">olor multiplier of mesh in scene</div>
<div class="a" style="left:414px;top:357px;width:221px;height:24px;background:#0b78c6"></div>
<div class="t" style="left:419px;top:361.5px;font-size:13.6px;color:#f4f4f4;-webkit-text-stroke:0.45px #f4f4f4;text-shadow:1.5px 1.5px 0 #0a0a0a">Change Emissive material property</div>
<div class="a" style="left:607px;top:292px;width:211px;height:23px;background:#0b78c6;overflow:hidden"><div class="t" style="left:5px;top:4px;font-size:13.6px;color:#f4f4f4;-webkit-text-stroke:0.45px #f4f4f4;text-shadow:1.5px 1.5px 0 #0a0a0a">Use public parameter of visually set</div></div>
<!-- top right icons -->
<svg style="left:698px;top:111px" width="114" height="24" viewBox="698 111 114 24">
<circle cx="710" cy="122.5" r="11" fill="#ededed"/><circle cx="740" cy="122.5" r="11" fill="#ededed"/><circle cx="770" cy="122.5" r="11" fill="#ededed"/><circle cx="800" cy="122.5" r="11" fill="#ededed"/>
<rect x="703.9" y="117.4" width="12.2" height="9.2" rx="1.2" fill="none" stroke="#8a8a8a" stroke-width="1.8"/><path d="M710 127V128.6" stroke="#8a8a8a" stroke-width="1.4"/><path d="M707 129.3H713" stroke="#8a8a8a" stroke-width="1.6"/><circle cx="740" cy="122.5" r="3.1" fill="#8a8a8a"/><path d="M744.60 122.50L748.40 122.50M743.11 125.61L745.37 127.87M740.00 127.10L740.00 130.90M736.89 125.61L734.63 127.87M735.40 122.50L731.60 122.50M736.89 119.39L734.63 117.13M740.00 117.90L740.00 114.10M743.11 119.39L745.37 117.13" stroke="#8a8a8a" stroke-width="1.5"/><circle cx="770" cy="122.5" r="3.1" fill="#8a8a8a"/><path d="M774.60 122.50L778.40 122.50M773.11 125.61L775.37 127.87M770.00 127.10L770.00 130.90M766.89 125.61L764.63 127.87M765.40 122.50L761.60 122.50M766.89 119.39L764.63 117.13M770.00 117.90L770.00 114.10M773.11 119.39L775.37 117.13" stroke="#8a8a8a" stroke-width="1.5"/><rect x="792.5" y="118" width="10.5" height="10" rx="1.5" fill="#8a8a8a"/><path d="M803 121.5L807 118.5V127.5L803 124.5Z" fill="#8a8a8a"/>
</svg>
<div class="t" style="left:251px;top:676px;font-size:15px;color:#1034f8;-webkit-text-stroke:0.15px #1034f8">www.historian.by</div>

<div class="a" style="left:825px;top:59px;width:195px;height:210px;background:#4b4b4b;"></div>
<div class="a" style="left:826px;top:60px;width:193px;height:208px;background:#333333;"></div>
<div class="a" style="left:826px;top:60px;width:193px;height:20px;background:#0b0b0b;"></div>
<div class="t" style="left:831.5px;top:65.10px;font-size:11.8px;height:11.8px;color:#a3a3a3;">Объекты</div>
<svg style="left:973px;top:68px" width="8" height="5"><path d="M0 0H8L4 4.5Z" fill="#a0a0a0"/></svg>
<svg style="left:989px;top:64px" width="8" height="11"><path d="M2.3 0.8H5.8V6.3H2.3Z" stroke="#a0a0a0" stroke-width="1.1" fill="none"/><path d="M0 6.5H7.5" stroke="#a0a0a0" stroke-width="1.2"/><path d="M3.6 6.5V10.5" stroke="#a0a0a0" stroke-width="1.2"/></svg>
<svg style="left:1004px;top:65px" width="10" height="10"><path d="M1 1L9 9M9 1L1 9" stroke="#a8a8a8" stroke-width="2"/></svg>
<svg style="left:829px;top:83px" width="170" height="18" viewBox="829 83 170 18">
<path d="M849.5 89L854 85L858 89L853.5 93Z" fill="#d8b83a" stroke="#a48a20" stroke-width="0.6"/><path d="M853 92V96H857" stroke="#aaa" stroke-width="0.8" fill="none"/><path d="M856 90L859 87.5L862 90L859 92.5Z" fill="#3ab0e8"/><path d="M857 96.5L860 94L863 96.5L860 99Z" fill="#e070c8"/>
<rect x="870" y="84" width="1" height="16" fill="#222"/>
<path d="M875.5 84.5H883.5L887.5 88.5V99.5H875.5Z" fill="#f0f0f0" stroke="#c8c8c8"/><path d="M880 97L889 88L891 90L882 99L879.5 99.5Z" fill="#f4a640" stroke="#b06a1a" stroke-width="0.6"/><path d="M889 88L891 90" stroke="#e878c0" stroke-width="1.5"/>
<rect x="899" y="85" width="12" height="10" rx="1" fill="#6a9ae0" stroke="#3a6ab8" stroke-width="0.8"/><rect x="896" y="88" width="12" height="11" rx="1" fill="#e8f0fa" stroke="#3a6ab8" stroke-width="0.9"/><rect x="896.5" y="88.5" width="11" height="2.5" fill="#5a8ad8"/>
<rect x="916.5" y="84" width="1" height="16" fill="#222"/>
<path d="M921.5 84.5H929.5L933.5 88.5V99.5H921.5Z" fill="#f0f0f0" stroke="#c8c8c8"/><path d="M932 91L933.3 94L936.5 94.2L934 96.2L934.9 99.3L932 97.6L929.1 99.3L930 96.2L927.5 94.2L930.7 94Z" fill="#f9c542" stroke="#d9901a" stroke-width="0.6"/>
<path d="M944 86.5L954 96.5M954 86.5L944 96.5" stroke="#6a6a6a" stroke-width="2.8"/>
<rect x="961" y="86" width="16" height="12" fill="#f4f4f4"/><rect x="962.2" y="87.2" width="13.6" height="9.6" fill="#1a1a1a"/><rect x="963.2" y="88.2" width="11.6" height="7.6" fill="#ececec"/><path d="M963.8 89H966.2M965 89V95M963.8 95H966.2" stroke="#111" stroke-width="0.9"/>
<path d="M982 84.5H988.5L991.5 87.5V97H982Z" fill="#9c9c9c"/><path d="M985 88H990.5L995.5 93V100H985Z" fill="#ababab" stroke="#3a3a3a" stroke-width="0.6"/><path d="M990.5 88V93H995.5" fill="#c8c8c8"/><path d="M986.5 94H994M986.5 96H994M986.5 98H994" stroke="#8a8a8a" stroke-width="0.8"/>
</svg>
<svg style="left:829px;top:84px" width="16" height="16" viewBox="0 0 16 16"><path d="M1.2 1.2L8.6 8.6" stroke="#cfcfcf" stroke-width="1.3"/><path d="M8.2 8.2L14.8 14.8" stroke="#3d8fe0" stroke-width="2.6" stroke-linecap="round"/><path d="M1.8 14.2L9.8 6.2" stroke="#ececec" stroke-width="2.8" stroke-linecap="round"/><path d="M14.06 3.38A2.4 2.4 0 1 1 12.62 1.94" stroke="#ececec" stroke-width="2.4" fill="none"/><circle cx="2.2" cy="13.8" r="0.7" fill="#777"/></svg>
<div class="a" style="left:826px;top:103px;width:193px;height:1px;background:#4b4b4b;"></div>
<div class="a" style="left:826px;top:104px;width:176px;height:148px;background:#262626;"></div>
<div class="a" style="left:826px;top:104px;width:175px;height:18px;background:#353535;"></div>
<div class="a" style="left:1002px;top:104px;width:16px;height:148px;background:#2b2b2b;"></div>
<div class="a" style="left:1002px;top:122px;width:16px;height:41px;background:#393939;"></div>
<svg style="left:1006px;top:111px" width="9" height="6"><path d="M0.75 5L4.5 1L8.25 5" stroke="#8c8c8c" stroke-width="1.5" fill="none"/></svg>
<svg style="left:1006px;top:243px" width="9" height="6"><path d="M0.75 1L4.5 5L8.25 1" stroke="#8c8c8c" stroke-width="1.5" fill="none"/></svg>
<svg style="left:833px;top:109px" width="7" height="7"><rect width="7" height="7" fill="#3b3b3b"/><rect x="1" y="3" width="5" height="1" fill="#c0c0c0"/></svg>
<svg style="left:847px;top:105px" width="15" height="15" viewBox="0 0 15 15"><rect x="0" y="0" width="15" height="15" fill="#7cc8f0"/><path d="M0 5H15M0 10H15M5 0V15M10 0V15" stroke="#a8dcf8" stroke-width="0.7"/><rect x="0" y="9" width="3" height="6" fill="#e8d070"/><path d="M7 9L5.5 12H8.5Z" fill="#111"/><path d="M7 12V15" stroke="#c83030" stroke-width="0.8"/><rect x="10" y="3" width="3" height="2.5" fill="#e02020"/><path d="M10 3V8" stroke="#444" stroke-width="0.6"/></svg>
<div class="t" style="left:867px;top:108.00px;font-size:11px;height:11px;color:#ececec;">'Корень' - Scene</div>
<svg style="left:865px;top:126px" width="16" height="12" viewBox="0 0 16 12"><rect x="3" y="0" width="8" height="2" rx="1" fill="#9a9a9a"/><rect x="0" y="2" width="12" height="9" fill="#8c8c8c"/><rect x="2" y="4" width="8" height="5" fill="#38a8f0"/><path d="M12 4L16 2V11L12 9Z" fill="#8c8c8c"/></svg>
<div class="a" style="left:886px;top:125px;width:116px;height:13px;overflow:hidden"><div class="t" style="left:0.5px;top:1px;font-size:11px;color:#ececec">Camera Editor - Camera</div></div>
<svg style="left:865px;top:144px" width="16" height="12" viewBox="0 0 16 12"><rect x="3" y="0" width="8" height="2" rx="1" fill="#9a9a9a"/><rect x="0" y="2" width="12" height="9" fill="#8c8c8c"/><rect x="2" y="4" width="8" height="5" fill="#38a8f0"/><path d="M12 4L16 2V11L12 9Z" fill="#8c8c8c"/></svg>
<div class="a" style="left:886px;top:143px;width:116px;height:13px;overflow:hidden"><div class="t" style="left:0.5px;top:1px;font-size:11px;color:#ececec">Camera Editor 2D - Camera</div></div>
<svg style="left:866px;top:159px" width="14" height="16" viewBox="0 0 14 16"><circle cx="7" cy="6" r="6" fill="#f8d070"/><path d="M4.5 6.5L6 4.5L7 6.5L8 4.5L9.5 6.5" stroke="#d8a040" stroke-width="0.7" fill="none"/><rect x="4.5" y="11.5" width="5" height="4" fill="#a8b0c0"/></svg>
<div class="a" style="left:886px;top:161px;width:116px;height:13px;overflow:hidden"><div class="t" style="left:0.5px;top:1px;font-size:11px;color:#ececec">Ambient Light - Light</div></div>
<svg style="left:866px;top:177px" width="14" height="16" viewBox="0 0 14 16"><circle cx="7" cy="6" r="6" fill="#f8d070"/><path d="M4.5 6.5L6 4.5L7 6.5L8 4.5L9.5 6.5" stroke="#d8a040" stroke-width="0.7" fill="none"/><rect x="4.5" y="11.5" width="5" height="4" fill="#a8b0c0"/></svg>
<div class="a" style="left:886px;top:179px;width:116px;height:13px;overflow:hidden"><div class="t" style="left:0.5px;top:1px;font-size:11px;color:#ececec">Directional Light - Light</div></div>
<svg style="left:852px;top:199.5px" width="7" height="7"><rect width="7" height="7" fill="#3b3b3b"/><rect x="1" y="3" width="5" height="1" fill="#c0c0c0"/><rect x="3" y="1" width="1" height="5" fill="#c0c0c0"/></svg>
<svg style="left:865px;top:196px" width="16" height="14" viewBox="0 0 16 14"><rect x="0.5" y="0.5" width="15" height="13" fill="#fff" stroke="#3890d0"/><rect x="1.5" y="1.5" width="13" height="2" fill="#3890d0"/><defs><linearGradient id="rpg" x1="0" x2="1"><stop offset="0" stop-color="#4060ff"/><stop offset="0.35" stop-color="#40e060"/><stop offset="0.65" stop-color="#ffe040"/><stop offset="1" stop-color="#ff4040"/></linearGradient></defs><rect x="2" y="4" width="12" height="8" fill="url(#rpg)"/></svg>
<div class="a" style="left:886px;top:197px;width:116px;height:13px;overflow:hidden"><div class="t" style="left:0.5px;top:1px;font-size:11px;color:#ececec">Rendering Pipeline - RenderingPipeline</div></div>
<svg style="left:865px;top:215px" width="16" height="12" viewBox="0 0 16 12"><path d="M3 1H13Q16 1 16 6L15 11Q13 12 11 9H5Q3 12 1 11L0 6Q0 1 3 1Z" fill="#e8e8e8"/><path d="M3 5H6M4.5 3.5V6.5" stroke="#3aa83a" stroke-width="1.2"/><circle cx="11" cy="4.5" r="1" fill="#e04040"/><circle cx="12.5" cy="6" r="1" fill="#4060e0"/></svg>
<div class="a" style="left:886px;top:215px;width:116px;height:13px;overflow:hidden"><div class="t" style="left:0.5px;top:1px;font-size:11px;color:#ececec">Game Mode - GameMode</div></div>
<svg style="left:852px;top:235.5px" width="7" height="7"><rect width="7" height="7" fill="#3b3b3b"/><rect x="1" y="3" width="5" height="1" fill="#c0c0c0"/><rect x="3" y="1" width="1" height="5" fill="#c0c0c0"/></svg>
<svg style="left:865px;top:231px" width="16" height="16" viewBox="0 0 16 16"><path d="M8 1L15 4V12L8 15L1 12V4Z" fill="#8cc8f0"/><path d="M1 4L8 7L15 4M8 7V15" stroke="#5a9ad0" stroke-width="0.8" fill="none"/><ellipse cx="5" cy="3.2" rx="1.5" ry="0.8" fill="#b8e0f8"/><ellipse cx="11" cy="3.2" rx="1.5" ry="0.8" fill="#b8e0f8"/></svg>
<div class="a" style="left:886px;top:233px;width:116px;height:13px;overflow:hidden"><div class="t" style="left:0.5px;top:1px;font-size:11px;color:#ececec">Ground - MeshInSpace</div></div>
<svg style="left:866px;top:249px" width="14" height="3"><path d="M2 3Q7 -1 12 3Z" fill="#8cc8f0"/></svg>
<div class="a" style="left:826px;top:252px;width:192px;height:16px;background:#2b2b2b;"></div>
<div class="a" style="left:842px;top:252px;width:73px;height:16px;background:#393939;"></div>
<svg style="left:832px;top:256px" width="6" height="9"><path d="M5 0.75L1 4.5L5 8.25" stroke="#8c8c8c" stroke-width="1.5" fill="none"/></svg>
<svg style="left:991px;top:256px" width="6" height="9"><path d="M0.75 0.75L4.75 4.5L0.75 8.25" stroke="#8c8c8c" stroke-width="1.5" fill="none"/></svg>
<div class="a" style="left:825px;top:274px;width:195px;height:427px;background:#4b4b4b;"></div>
<div class="a" style="left:826px;top:275px;width:193px;height:425px;background:#333333;"></div>
<div class="a" style="left:826px;top:275px;width:193px;height:20px;background:#0b0b0b;"></div>
<div class="t" style="left:831.5px;top:280.10px;font-size:11.8px;height:11.8px;color:#a3a3a3;">Настройки</div>
<svg style="left:973px;top:283px" width="8" height="5"><path d="M0 0H8L4 4.5Z" fill="#a0a0a0"/></svg>
<svg style="left:989px;top:279px" width="8" height="11"><path d="M2.3 0.8H5.8V6.3H2.3Z" stroke="#a0a0a0" stroke-width="1.1" fill="none"/><path d="M0 6.5H7.5" stroke="#a0a0a0" stroke-width="1.2"/><path d="M3.6 6.5V10.5" stroke="#a0a0a0" stroke-width="1.2"/></svg>
<svg style="left:1004px;top:280px" width="10" height="10"><path d="M1 1L9 9M9 1L1 9" stroke="#a8a8a8" stroke-width="2"/></svg>
<div class="t" style="left:832px;top:302.75px;font-size:11.5px;height:11.5px;color:#ececec;font-weight:bold">Scene</div>
<div class="t" style="left:832px;top:322.50px;font-size:11px;height:11px;color:#ececec;">Scene</div>
<svg style="left:997px;top:299px" width="16" height="15" viewBox="0 0 16 15"><path d="M1 4L5.5 0.5L9.5 4L5 7.5Z" fill="#d8b83a" stroke="#a48a20" stroke-width="0.6"/><path d="M5 7V11H9" stroke="#aaa" stroke-width="0.8" fill="none"/><path d="M9 5L12 2.5L15 5L12 7.5Z" fill="#3ab0e8"/><path d="M10 11.5L13 9L16 11.5L13 14Z" fill="#e070c8"/></svg>
<div class="a" style="left:829px;top:341px;width:19px;height:21px;background:#4a4a4a;"></div>
<svg style="left:831px;top:345px" width="16" height="14" viewBox="0 0 16 14"><rect x="0.5" y="1.5" width="15" height="12" fill="#f0f4f8" stroke="#5a8ad0"/><rect x="1" y="2" width="14" height="2" fill="#5a8ad0"/><path d="M3 7H4M3 9H4M3 11H4" stroke="#e04040" stroke-width="1"/><path d="M5.5 7H12M5.5 9H12M5.5 11H12" stroke="#6a7a8a" stroke-width="0.8"/><path d="M6 0L16 0L15 6L8 7Z" fill="#d8a070" opacity="0.9"/><path d="M7 1L14 5M9 0.5L15 3.5M7 4L12 6" stroke="#fff" stroke-width="0.6" opacity="0.6"/></svg>
<svg style="left:853px;top:345px" width="12" height="15" viewBox="0 0 12 15"><path d="M5 0H11L7.5 5.5H11L2 15L4.5 8H1Z" fill="#f0c030" stroke="#b08010" stroke-width="0.6"/></svg>
<div class="a" style="left:828px;top:365px;width:174px;height:17px;background:#262626;"></div>
<div class="t" style="left:831px;top:368.50px;font-size:11px;height:11px;color:#b4b4b4;">Компонент</div>
<div class="a" style="left:1003px;top:365px;width:15px;height:286px;background:#2b2b2b;"></div>
<div class="a" style="left:1003px;top:365px;width:15px;height:17px;background:#2f2f2f;"></div>
<div class="a" style="left:1003px;top:382px;width:15px;height:42px;background:#393939;"></div>
<svg style="left:1006px;top:371px" width="9" height="6"><path d="M0.75 5L4.5 1L8.25 5" stroke="#8c8c8c" stroke-width="1.5" fill="none"/></svg>
<svg style="left:1006px;top:643px" width="9" height="6"><path d="M0.75 1L4.5 5L8.25 1" stroke="#8c8c8c" stroke-width="1.5" fill="none"/></svg>
<div class="a" style="left:906px;top:383px;width:6px;height:92px;background:#2c2c2c;"></div>
<div class="t" style="left:847px;top:390.00px;font-size:11px;height:11px;color:#ececec;">Включено</div>
<div class="t" style="left:847px;top:413.00px;font-size:11px;height:11px;color:#ececec;">Name</div>
<div class="t" style="left:847px;top:436.00px;font-size:11px;height:11px;color:#ececec;">Screen L...</div>
<div class="t" style="left:847px;top:459.00px;font-size:11px;height:11px;color:#ececec;">Network ...</div>
<svg style="left:952px;top:388px" width="14" height="13" viewBox="0 0 14 13"><rect x="0.5" y="0.5" width="13" height="12" fill="#1e1e1e" stroke="#7a7a7a"/><path d="M3 6.5L5.8 9.3L11 3.5" stroke="#fff" stroke-width="2" fill="none"/></svg>
<div class="a" style="left:951px;top:409px;width:49px;height:18px;background:#262626;border:1px solid #5a5a5a"></div>
<div class="a" style="left:926px;top:432px;width:22px;height:18px;background:#333333;border:1px solid #555"></div>
<div class="a" style="left:951px;top:432px;width:49px;height:18px;background:#333333;border:1px solid #5a5a5a"></div>
<div class="t" style="left:955.5px;top:436.50px;font-size:11px;height:11px;color:#ececec;">Auto</div>
<svg style="left:988px;top:439.5px" width="8" height="5"><path d="M0 0H8L4 4Z" fill="#9a9a9a"/></svg>
<div class="a" style="left:926px;top:455px;width:22px;height:18px;background:#333333;border:1px solid #555"></div>
<div class="a" style="left:951px;top:455px;width:49px;height:18px;background:#333333;border:1px solid #5a5a5a"></div>
<div class="t" style="left:955.5px;top:459.50px;font-size:11px;height:11px;color:#ececec;">True</div>
<svg style="left:988px;top:462.5px" width="8" height="5"><path d="M0 0H8L4 4Z" fill="#9a9a9a"/></svg>
<div class="a" style="left:828px;top:477px;width:174px;height:17px;background:#262626;"></div>
<div class="t" style="left:831px;top:481.00px;font-size:11px;height:11px;color:#b4b4b4;">Сцена</div>
<div class="a" style="left:906px;top:494px;width:6px;height:157px;background:#2c2c2c;"></div>
<div class="t" style="left:847px;top:502.00px;font-size:11px;height:11px;color:#ececec;">Renderin...</div>
<div class="t" style="left:847px;top:525.00px;font-size:11px;height:11px;color:#ececec;">Backgro...</div>
<div class="t" style="left:847px;top:548.00px;font-size:11px;height:11px;color:#ececec;">Backgro...</div>
<div class="t" style="left:847px;top:571.00px;font-size:11px;height:11px;color:#ececec;">UI Screen</div>
<div class="t" style="left:847px;top:594.00px;font-size:11px;height:11px;color:#ececec;">Mode</div>
<div class="t" style="left:847px;top:617.00px;font-size:11px;height:11px;color:#ececec;">Screen ...</div>
<div class="t" style="left:847px;top:640.00px;font-size:11px;height:11px;color:#ececec;">Camera ...</div>
<svg style="left:830px;top:523px" width="14" height="14"><rect x="0.5" y="0.5" width="13" height="13" fill="none" stroke="#555"/><path d="M4 7H10M7 4V10" stroke="#ccc" stroke-width="1"/></svg>
<svg style="left:916px;top:503.5px" width="5" height="5"><circle cx="2.5" cy="2.5" r="2.5" fill="#6a6a6a"/></svg>
<div class="a" style="left:926px;top:498px;width:22px;height:18px;background:#333333;border:1px solid #555"></div>
<svg style="left:935px;top:503px" width="6" height="8"><path d="M0 0L6 4L0 8Z" fill="#a8a8a8"/></svg>
<div class="t" style="left:955.5px;top:504.00px;font-size:11px;height:11px;color:#ececec;">Renderir</div>
<div class="a" style="left:926px;top:522px;width:22px;height:18px;background:#333333;border:1px solid #555"></div>
<div class="a" style="left:951px;top:521px;width:27px;height:18px;background:#262626;border:1px solid #555"></div>
<div class="t" style="left:955px;top:524.50px;font-size:12px;height:12px;color:#ececec;">1 1</div>
<div class="a" style="left:980.5px;top:522px;width:19px;height:16px;background:#ffffff;"></div>
<div class="a" style="left:926px;top:544px;width:22px;height:18px;background:#333333;border:1px solid #555"></div>
<div class="a" style="left:951px;top:544px;width:49px;height:18px;background:#262626;border:1px solid #555"></div>
<div class="t" style="left:955px;top:547.50px;font-size:12px;height:12px;color:#ececec;">1</div>
<div class="a" style="left:926px;top:567px;width:22px;height:18px;background:#333333;border:1px solid #555"></div>
<div class="t" style="left:955.5px;top:573.00px;font-size:11px;height:11px;color:#ececec;">(Null)</div>
<div class="a" style="left:926px;top:590px;width:22px;height:18px;background:#333333;border:1px solid #555"></div>
<div class="a" style="left:951px;top:590px;width:49px;height:18px;background:#333333;border:1px solid #5a5a5a"></div>
<div class="t" style="left:955.5px;top:594.50px;font-size:11px;height:11px;color:#ececec;">3D</div>
<svg style="left:988px;top:597.5px" width="8" height="5"><path d="M0 0H8L4 4Z" fill="#9a9a9a"/></svg>
<div class="a" style="left:926px;top:613px;width:22px;height:18px;background:#333333;border:1px solid #555"></div>
<div class="a" style="left:951px;top:613px;width:49px;height:18px;background:#333333;border:1px solid #5a5a5a"></div>
<div class="t" style="left:955.5px;top:617.50px;font-size:11px;height:11px;color:#ececec;">Un...</div>
<svg style="left:988px;top:620.5px" width="8" height="5"><path d="M0 0H8L4 4Z" fill="#9a9a9a"/></svg>
<svg style="left:916px;top:642.5px" width="5" height="5"><circle cx="2.5" cy="2.5" r="2.5" fill="#6a6a6a"/></svg>
<div class="a" style="left:926px;top:636px;width:22px;height:15px;background:#333333;border:1px solid #555;border-bottom:none"></div>
<svg style="left:935px;top:641px" width="6" height="8"><path d="M0 0L6 4L0 8Z" fill="#a8a8a8"/></svg>
<div class="t" style="left:955.5px;top:642.00px;font-size:11px;height:11px;color:#ececec;">Camera</div>
<div class="a" style="left:994px;top:641px;width:1px;height:12px;background:#3a70c0;"></div>
<div class="a" style="left:826px;top:651px;width:193px;height:49px;background:#333333;"></div>
<div class="a" style="left:833px;top:659px;width:93px;height:26px;background:#353535;border:1px solid #5a5a5a"></div>
<div class="t" style="left:869px;top:667.00px;font-size:11px;height:11px;color:#ececec;">Info</div></body></html>
